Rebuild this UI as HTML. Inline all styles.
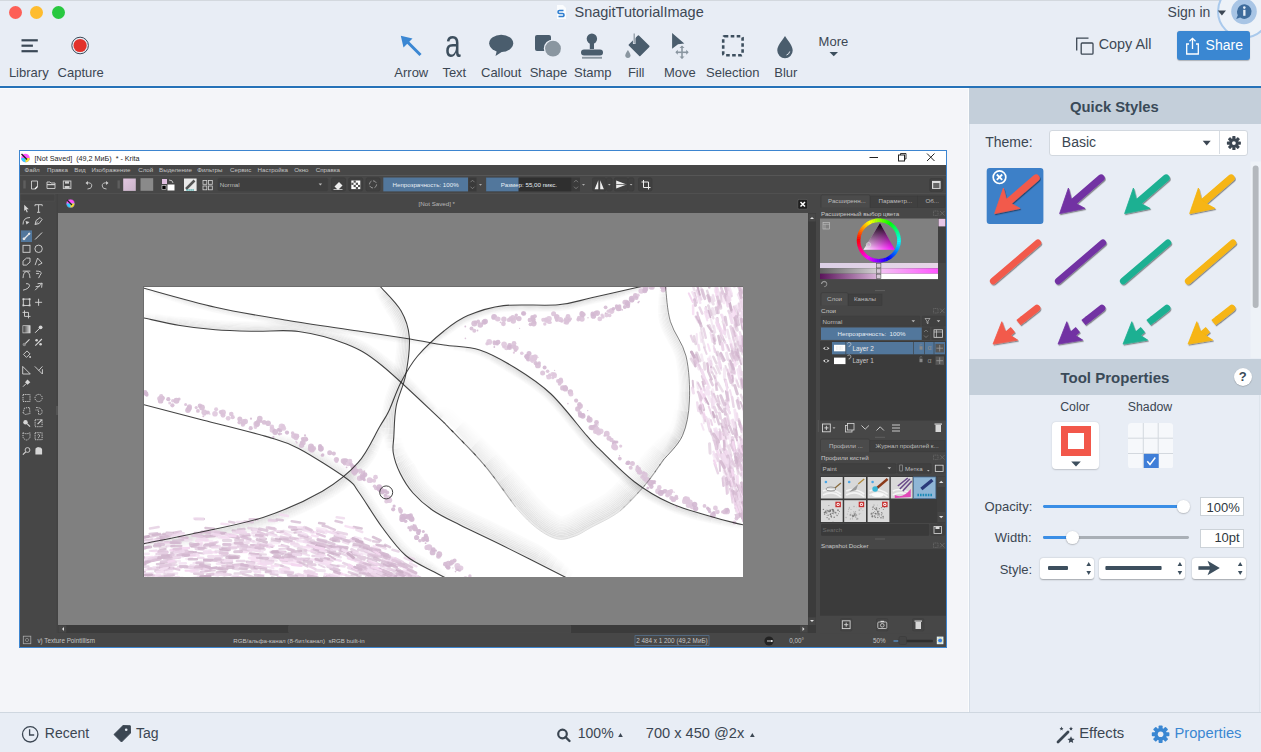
<!DOCTYPE html>
<html><head><meta charset="utf-8">
<style>
*{margin:0;padding:0;box-sizing:border-box}
html,body{width:1261px;height:752px;overflow:hidden;background:#f4f5f9;font-family:"Liberation Sans",sans-serif;color:#3b4652}
.a{position:absolute}
#top{left:0;top:0;width:1261px;height:86px;background:#e8edf5}
#topline{left:0;top:86px;width:1261px;height:2px;background:#2672b8}
.tl{width:13px;height:13px;border-radius:50%;top:6px}
.lbl{font-size:13px;color:#3c4753;white-space:nowrap;top:65px;line-height:16px}
#rp{left:969px;top:88px;width:292px;height:624px;background:#e8edf5}
.hdr{left:0;width:292px;background:#c4cfda;font-weight:bold;font-size:15px;color:#3a4a58;text-align:center}
#bot{left:0;top:712px;width:1261px;height:40px;background:#e8edf5;border-top:1px solid #cfd7e0}
.bl{font-size:14px;color:#3b4652;white-space:nowrap;line-height:16px}
#kr{left:19px;top:150px;width:928px;height:498px;background:#3c3c3c;border:1px solid #3e86d1;overflow:hidden}
.k{position:absolute}
.kt{font-size:7px;color:#cfcfcf;white-space:nowrap;line-height:9px}
</style></head><body>
<!-- TOP -->
<div id="top" class="a">
  <div class="a" style="left:0;top:0;width:1261px;height:1px;background:#d3d8de"></div>
  <div class="a tl" style="left:8.5px;top:5.5px;background:#fd5f57"></div>
  <div class="a tl" style="left:30px;top:5.5px;background:#febc2e"></div>
  <div class="a tl" style="left:52px;top:5.5px;background:#28c840"></div>
  <!-- title -->
  <svg class="a" style="left:556px;top:4px" width="11" height="16" viewBox="0 0 11 16"><path d="M1 1h6l3 3v11H1z" fill="#fafcfe"/><path d="M7.5 6.5H3.5a1.5 1.5 0 0 0 0 3h3a1.5 1.5 0 0 1 0 3H2.5" stroke="#2f7ed0" stroke-width="1.6" fill="none"/></svg>
  <div class="a" style="left:574.5px;top:5.2px;font-size:14.5px;line-height:14.5px;color:#3d4854;white-space:nowrap">SnagitTutorialImage</div>
  <!-- library -->
  <svg class="a" style="left:0;top:0" width="860" height="86" viewBox="0 0 860 86">
    <g stroke="#3a4856" stroke-width="2.2" stroke-linecap="butt">
      <line x1="21.5" y1="40.3" x2="37.8" y2="40.3"/><line x1="21.5" y1="45.7" x2="32.9" y2="45.7"/><line x1="21.5" y1="51.2" x2="37.8" y2="51.2"/>
    </g>
    <circle cx="80.1" cy="45.5" r="8.3" fill="none" stroke="#3a4856" stroke-width="1"/>
    <circle cx="80.1" cy="45.5" r="6.6" fill="#e2312a"/>
    <!-- arrow -->
    <line x1="420.5" y1="55" x2="405" y2="39.5" stroke="#3b87d3" stroke-width="3"/>
    <path d="M400.8 35.8 L412.5 38.5 L403.5 47.5 Z" fill="#3b87d3"/>
    <!-- callout -->
    <ellipse cx="501.2" cy="43.3" rx="12" ry="8.6" fill="#4a5d6d"/>
    <path d="M497 50 L495.5 56 L504 50.5 Z" fill="#4a5d6d"/>
    <!-- shape -->
    <rect x="535" y="35" width="16" height="16" rx="2" fill="#4a5d6d"/>
    <circle cx="553" cy="48.6" r="9.2" fill="#e8edf5"/>
    <circle cx="553" cy="48.6" r="7.9" fill="#8a96a0"/>
    <!-- stamp -->
    <circle cx="591.9" cy="38.8" r="5.2" fill="#4a5d6d"/>
    <rect x="589.8" y="42" width="4.2" height="7" fill="#4a5d6d"/>
    <rect x="581" y="49.5" width="22" height="6" rx="3" fill="#4a5d6d"/>
    <rect x="582" y="56.8" width="20" height="1.9" fill="#8a96a0"/>
    <!-- fill -->
    <path d="M629.3 45 L638.4 36 L648.8 46.4 L639.8 55.4 Z" fill="#4a5d6d" stroke="#4a5d6d" stroke-width="1.5" stroke-linejoin="round"/>
    <line x1="634.2" y1="33.5" x2="634.2" y2="44" stroke="#e8edf5" stroke-width="2.6"/>
    <line x1="634.2" y1="33.5" x2="634.2" y2="43.5" stroke="#8a96a0" stroke-width="1.2"/>
    <path d="M627.9 50 Q625.3 54 625.3 55.3 A2.6 2.6 0 0 0 630.5 55.3 Q630.5 54 627.9 50Z" fill="#8a96a0"/>
    <!-- move -->
    <path d="M672.1 32.9 L684.3 43.6 L678 44.2 L672.1 48.8 Z" fill="#4a5d6d"/>
    <g stroke="#8a96a0" stroke-width="1.6"><line x1="676" y1="52.3" x2="688" y2="52.3"/><line x1="682" y1="46.3" x2="682" y2="58.3"/></g>
    <g fill="#8a96a0"><path d="M682 45.5l-2.5 2.5h5z"/><path d="M682 59l-2.5-2.5h5z"/><path d="M675.3 52.3l2.5-2.5v5z"/><path d="M688.7 52.3l-2.5-2.5v5z"/></g>
    <!-- selection -->
    <rect x="723.2" y="36.2" width="19.4" height="19" rx="1.5" fill="none" stroke="#3d4f5e" stroke-width="2.6" stroke-dasharray="3.6 2.4"/>
    <!-- blur -->
    <path d="M785 36 C781 42 777.3 46 777.3 50.5 A7.7 7.7 0 0 0 792.7 50.5 C792.7 46 789 42 785 36Z" fill="#4a5d6d"/>
    <path d="M789.7 51.5 A4.5 4.5 0 0 1 786.5 55" stroke="#e8edf5" stroke-width="1" fill="none"/>
    <!-- more triangle -->
    <path d="M829.5 52 L838 52 L833.75 56.3Z" fill="#3d4f5e"/>
  </svg>
  <div class="a" style="left:444.8px;top:24.7px;font-size:38px;line-height:38px;color:#3d4f5e;transform:scaleX(0.74);transform-origin:0 0">a</div>
  <div class="a lbl" style="left:8.9px">Library</div>
  <div class="a lbl" style="left:57.6px">Capture</div>
  <div class="a lbl" style="left:394.3px">Arrow</div>
  <div class="a lbl" style="left:442.4px">Text</div>
  <div class="a lbl" style="left:481px">Callout</div>
  <div class="a lbl" style="left:529.7px">Shape</div>
  <div class="a lbl" style="left:574px">Stamp</div>
  <div class="a lbl" style="left:627.9px">Fill</div>
  <div class="a lbl" style="left:664px">Move</div>
  <div class="a lbl" style="left:706px">Selection</div>
  <div class="a lbl" style="left:774.3px">Blur</div>
  <div class="a lbl" style="left:818.6px;top:33.9px">More</div>
  <!-- sign in -->
  <div class="a" style="left:1167.6px;top:5.35px;font-size:14px;line-height:14px;white-space:nowrap;color:#3d4854">Sign in</div>
  <svg class="a" style="left:1140px;top:0" width="121" height="70" viewBox="1140 0 121 70">
    <circle cx="1244" cy="11.5" r="26" fill="#edf2f8" stroke="#a9c9ec" stroke-width="2"/>
    <circle cx="1244" cy="11.5" r="12.8" fill="#a8c5e5"/>
    <path d="M1237 11.5 A7.3 7.3 0 1 1 1240.2 17.6 L1236.2 19 L1237.8 15.2 A7.3 7.3 0 0 1 1237 11.5Z" fill="#3e6c9c"/>
    <circle cx="1244.3" cy="7.6" r="1.3" fill="#e6eef7"/>
    <rect x="1243.2" y="9.8" width="2.3" height="6" fill="#e6eef7"/>
    <path d="M1217.8 10.4 L1226 10.4 L1221.9 15.4Z" fill="#3d4854"/>
  </svg>
  <svg class="a" style="left:1070px;top:30px" width="30" height="30" viewBox="1070 30 30 30">
    <path d="M1076.7 50.5 V38.2 H1088.5" fill="none" stroke="#3d4854" stroke-width="1.3"/>
    <rect x="1081.2" y="43" width="11.8" height="11.2" rx="1" fill="#e8edf5" stroke="#3d4854" stroke-width="1.3"/>
  </svg>
  <div class="a" style="left:1098.7px;top:37.2px;font-size:14.4px;line-height:14.4px;white-space:nowrap;color:#3d4854">Copy All</div>
  <div class="a" style="left:1177px;top:31px;width:73px;height:29px;border-radius:3px;background:#3a87d2;box-shadow:0 0.5px 1px rgba(0,0,0,.25)"></div>
  <svg class="a" style="left:1183px;top:35px" width="20" height="22" viewBox="0 0 20 22">
    <path d="M6 9 H3.7 V19 H15.3 V9 H13" fill="none" stroke="#fff" stroke-width="1.3"/>
    <line x1="9.5" y1="3.5" x2="9.5" y2="14" stroke="#fff" stroke-width="1.3"/>
    <path d="M6.5 6.3 L9.5 3.3 L12.5 6.3" fill="none" stroke="#fff" stroke-width="1.3"/>
  </svg>
  <div class="a" style="left:1205.6px;top:37.5px;font-size:14px;line-height:14px;white-space:nowrap;color:#fff">Share</div>
</div>
<div id="topline" class="a"></div>
<div class="a" style="left:0;top:88px;width:969px;height:1px;background:#fcfdfe"></div>
<div class="a" style="left:0;top:85px;width:1261px;height:1px;background:#edf1f7"></div>
<!-- RIGHT PANEL -->
<div id="rp" class="a">
  <div class="a hdr" style="top:0;height:36px"></div>
  <div class="a" style="left:101px;top:11.7px;font-size:14.8px;line-height:14.8px;font-weight:bold;color:#3a4a58;white-space:nowrap">Quick Styles</div>
  <div class="a" style="left:16.2px;top:47.35px;font-size:14px;line-height:14px;color:#3b4652;white-space:nowrap">Theme:</div>
  <div class="a" style="left:79.5px;top:41.6px;width:199px;height:26.5px;background:#fff;border:1px solid #d2d8df;border-radius:3px"></div>
  <div class="a" style="left:249.5px;top:43px;width:1px;height:23px;background:#d8dde3"></div>
  <div class="a" style="left:92.8px;top:47.35px;font-size:14px;line-height:14px;color:#3b4652;white-space:nowrap">Basic</div>
  <svg class="a" style="left:0;top:0" width="292" height="270" viewBox="969 88 292 270">
    <path d="M1202.7 140.8 H1210.7 L1206.7 145.6Z" fill="#3b4652"/>
    <g transform="translate(1233.9 143.1)" fill="#3b4652">
      <circle r="4.6"/>
      <g id="teeth"><rect x="-1.6" y="-7" width="3.2" height="14" rx=".6"/><rect x="-1.6" y="-7" width="3.2" height="14" rx=".6" transform="rotate(45)"/><rect x="-1.6" y="-7" width="3.2" height="14" rx=".6" transform="rotate(90)"/><rect x="-1.6" y="-7" width="3.2" height="14" rx=".6" transform="rotate(135)"/></g>
      <circle r="1.9" fill="#fff"/>
    </g>
    <rect x="1250.5" y="161.5" width="10.5" height="197" fill="#eef2f7"/>
    <rect x="1252.7" y="165.5" width="5.9" height="142.5" rx="2.9" fill="#b4b8bd"/>
    <rect x="986.7" y="168" width="56.7" height="56" rx="3" fill="#3d80c8"/>
    <defs><filter id="sh" x="-20%" y="-20%" width="140%" height="140%"><feDropShadow dx="0.8" dy="1.2" stdDeviation="0.6" flood-color="#000" flood-opacity="0.45"/></filter></defs>
    <g filter="url(#sh)"><line x1="1036.1" y1="178.1" x2="1009.5" y2="200.9" stroke="#f25a4b" stroke-width="7.2" stroke-linecap="round"/><path d="M994.6 213.6 L1003.4 188.0 L1006.1 198.4 L1012.1 204.0 L1020.1 208.4 Z" fill="#f25a4b" stroke="#f25a4b" stroke-width="0.8" stroke-linejoin="round"/><line x1="1101.1" y1="178.1" x2="1074.5" y2="200.9" stroke="#7233a3" stroke-width="7.2" stroke-linecap="round"/><path d="M1059.6 213.6 L1068.4 188.0 L1071.1 198.4 L1077.1 204.0 L1085.1 208.4 Z" fill="#7233a3" stroke="#7233a3" stroke-width="0.8" stroke-linejoin="round"/><line x1="1166.1" y1="178.1" x2="1139.5" y2="200.9" stroke="#1fb092" stroke-width="7.2" stroke-linecap="round"/><path d="M1124.6 213.6 L1133.4 188.0 L1136.1 198.4 L1142.1 204.0 L1150.1 208.4 Z" fill="#1fb092" stroke="#1fb092" stroke-width="0.8" stroke-linejoin="round"/><line x1="1231.1" y1="178.1" x2="1204.5" y2="200.9" stroke="#f6b512" stroke-width="7.2" stroke-linecap="round"/><path d="M1189.6 213.6 L1198.4 188.0 L1201.1 198.4 L1207.1 204.0 L1215.1 208.4 Z" fill="#f6b512" stroke="#f6b512" stroke-width="0.8" stroke-linejoin="round"/><line x1="1037.9" y1="242.8" x2="993.2" y2="281.1" stroke="#f25a4b" stroke-width="6.6" stroke-linecap="round"/><line x1="1102.9" y1="242.8" x2="1058.2" y2="281.1" stroke="#7233a3" stroke-width="6.6" stroke-linecap="round"/><line x1="1167.9" y1="242.8" x2="1123.2" y2="281.1" stroke="#1fb092" stroke-width="6.6" stroke-linecap="round"/><line x1="1232.9" y1="242.8" x2="1188.2" y2="281.1" stroke="#f6b512" stroke-width="6.6" stroke-linecap="round"/><line x1="1036.9" y1="308.2" x2="1023.5" y2="318.7" stroke="#f25a4b" stroke-width="6.8" stroke-linecap="round"/><line x1="1023.5" y1="318.7" x2="1018.5" y2="322.7" stroke="#f25a4b" stroke-width="6.8" stroke-linecap="butt"/><line x1="1012.9" y1="329.7" x2="1006.5" y2="335.0" stroke="#f25a4b" stroke-width="6.8" stroke-linecap="butt"/><path d="M993.0 344.1 L1001.8 321.7 L1005.0 330.5 L1011.5 336.0 L1017.7 340.1 Z" fill="#f25a4b" stroke="#f25a4b" stroke-width="0.8" stroke-linejoin="round"/><line x1="1101.9" y1="308.2" x2="1088.5" y2="318.7" stroke="#7233a3" stroke-width="6.8" stroke-linecap="round"/><line x1="1088.5" y1="318.7" x2="1083.5" y2="322.7" stroke="#7233a3" stroke-width="6.8" stroke-linecap="butt"/><line x1="1077.9" y1="329.7" x2="1071.5" y2="335.0" stroke="#7233a3" stroke-width="6.8" stroke-linecap="butt"/><path d="M1058.0 344.1 L1066.8 321.7 L1070.0 330.5 L1076.5 336.0 L1082.7 340.1 Z" fill="#7233a3" stroke="#7233a3" stroke-width="0.8" stroke-linejoin="round"/><line x1="1166.9" y1="308.2" x2="1153.5" y2="318.7" stroke="#1fb092" stroke-width="6.8" stroke-linecap="round"/><line x1="1153.5" y1="318.7" x2="1148.5" y2="322.7" stroke="#1fb092" stroke-width="6.8" stroke-linecap="butt"/><line x1="1142.9" y1="329.7" x2="1136.5" y2="335.0" stroke="#1fb092" stroke-width="6.8" stroke-linecap="butt"/><path d="M1123.0 344.1 L1131.8 321.7 L1135.0 330.5 L1141.5 336.0 L1147.7 340.1 Z" fill="#1fb092" stroke="#1fb092" stroke-width="0.8" stroke-linejoin="round"/><line x1="1231.9" y1="308.2" x2="1218.5" y2="318.7" stroke="#f6b512" stroke-width="6.8" stroke-linecap="round"/><line x1="1218.5" y1="318.7" x2="1213.5" y2="322.7" stroke="#f6b512" stroke-width="6.8" stroke-linecap="butt"/><line x1="1207.9" y1="329.7" x2="1201.5" y2="335.0" stroke="#f6b512" stroke-width="6.8" stroke-linecap="butt"/><path d="M1188.0 344.1 L1196.8 321.7 L1200.0 330.5 L1206.5 336.0 L1212.7 340.1 Z" fill="#f6b512" stroke="#f6b512" stroke-width="0.8" stroke-linejoin="round"/></g>
    <circle cx="999.5" cy="177.2" r="6.3" fill="#3d80c8" stroke="#fff" stroke-width="1.7"/>
    <path d="M996.8 174.5 L1002.2 179.9 M1002.2 174.5 L996.8 179.9" stroke="#fff" stroke-width="1.8"/>
  </svg>
  <div class="a hdr" style="top:270.5px;height:36.5px"></div>
  <div class="a" style="left:91.5px;top:282.4px;font-size:15px;line-height:15px;font-weight:bold;color:#3a4a58;white-space:nowrap">Tool Properties</div>
  <div class="a" style="left:264.7px;top:280.1px;width:18px;height:18px;border-radius:50%;background:#fff;box-shadow:0 0.5px 1px rgba(0,0,0,.3);font-size:13px;font-weight:bold;line-height:18px;text-align:center;color:#3a4a58">?</div>
  <div class="a" style="left:91.2px;top:313.3px;font-size:12.3px;line-height:12.3px;color:#3b4652;white-space:nowrap">Color</div>
  <div class="a" style="left:158.8px;top:313.3px;font-size:12.3px;line-height:12.3px;color:#3b4652;white-space:nowrap">Shadow</div>
  <div class="a" style="left:83.3px;top:333.8px;width:47.2px;height:47.2px;background:#fff;border-radius:4px;box-shadow:0 0.5px 1.5px rgba(0,0,0,.18)"></div>
  <div class="a" style="left:92.2px;top:338.2px;width:29.9px;height:30.1px;background:#f2574a"></div>
  <div class="a" style="left:99px;top:344.8px;width:16.2px;height:16.3px;background:#fff"></div>
  <svg class="a" style="left:102px;top:373px" width="10" height="6" viewBox="0 0 10 6"><path d="M0.2 0.4H9.8L5 5.4Z" fill="#3d4f5e"/></svg>
  <svg class="a" style="left:159px;top:334.6px" width="45.2" height="45.6" viewBox="0 0 45.2 45.6">
    <rect x="0" y="0" width="45.2" height="45.6" rx="3.5" fill="#f6f8fb"/>
    <g stroke="#d3d8de" stroke-width="1"><line x1="15.3" y1="0" x2="15.3" y2="45.6"/><line x1="30.2" y1="0" x2="30.2" y2="45.6"/><line x1="0" y1="15.2" x2="45.2" y2="15.2"/><line x1="0" y1="30.5" x2="45.2" y2="30.5"/></g>
    <rect x="15.8" y="30.9" width="14.9" height="14.7" fill="#3f7ed8"/>
    <path d="M19.3 38.3 L22 41.5 L27.3 34.5" stroke="#fff" stroke-width="1.5" fill="none"/>
  </svg>
  <div class="a" style="left:15.6px;top:412.2px;font-size:13px;line-height:13px;color:#3b4652;white-space:nowrap">Opacity:</div>
  <div class="a" style="left:25.8px;top:442.7px;font-size:13px;line-height:13px;color:#3b4652;white-space:nowrap">Width:</div>
  <div class="a" style="left:30.7px;top:475.2px;font-size:13px;line-height:13px;color:#3b4652;white-space:nowrap">Style:</div>
  <div class="a" style="left:73.8px;top:417px;width:146.6px;height:2.8px;border-radius:1.4px;background:#3a8ee6"></div>
  <div class="a" style="left:208.2px;top:412px;width:12.6px;height:12.6px;border-radius:50%;background:#fff;box-shadow:0 0.5px 1.5px rgba(0,0,0,.35)"></div>
  <div class="a" style="left:73.8px;top:448.2px;width:146.6px;height:2.8px;border-radius:1.4px;background:#a9afb6"></div>
  <div class="a" style="left:73.8px;top:448.2px;width:30px;height:2.8px;border-radius:1.4px;background:#3a8ee6"></div>
  <div class="a" style="left:97.2px;top:443.2px;width:12.6px;height:12.6px;border-radius:50%;background:#fff;box-shadow:0 0.5px 1.5px rgba(0,0,0,.35)"></div>
  <div class="a" style="left:231.1px;top:409.4px;width:44.4px;height:18.9px;background:#fff;border:1px solid #ccd2d8"></div>
  <div class="a" style="left:231.1px;top:440.5px;width:44.4px;height:19px;background:#fff;border:1px solid #ccd2d8"></div>
  <div class="a" style="left:231.1px;top:412.6px;width:39.6px;font-size:13px;line-height:13px;color:#2e3740;text-align:right;white-space:nowrap">100%</div>
  <div class="a" style="left:231.1px;top:443px;width:39.6px;font-size:13px;line-height:13px;color:#2e3740;text-align:right;white-space:nowrap">10pt</div>
  <div class="a" style="left:70.7px;top:470px;width:54.4px;height:20.7px;background:#fff;border-radius:3px;box-shadow:0 0.5px 1.5px rgba(0,0,0,.3)"></div>
  <div class="a" style="left:129.5px;top:470px;width:86.5px;height:20.7px;background:#fff;border-radius:3px;box-shadow:0 0.5px 1.5px rgba(0,0,0,.3)"></div>
  <div class="a" style="left:222.7px;top:470px;width:54.1px;height:20.7px;background:#fff;border-radius:3px;box-shadow:0 0.5px 1.5px rgba(0,0,0,.3)"></div>
  <svg class="a" style="left:0;top:470px" width="292" height="21" viewBox="969 558 292 21">
    <rect x="1048" y="566" width="20" height="4" rx="1" fill="#3d4f5e"/>
    <rect x="1105.4" y="566" width="56.2" height="4" rx="1" fill="#3d4f5e"/>
    <path d="M1198.4 568 H1212" stroke="#3d4f5e" stroke-width="3.6"/>
    <path d="M1207.5 560.8 L1219.8 568 L1207.5 575.2 L1210.5 568Z" fill="#3d4f5e"/>
    <g fill="#3d4f5e">
      <path d="M1086.4 566 L1091 566 L1088.7 562Z"/><path d="M1086.4 571 L1091 571 L1088.7 575Z"/>
      <path d="M1177.6 566 L1182.2 566 L1179.9 562Z"/><path d="M1177.6 571 L1182.2 571 L1179.9 575Z"/>
      <path d="M1237.9 566 L1242.5 566 L1240.2 562Z"/><path d="M1237.9 571 L1242.5 571 L1240.2 575Z"/>
    </g>
  </svg>
</div>
<div class="a" style="left:969px;top:124px;width:1px;height:235px;background:#d5dde7"></div>
<div class="a" style="left:969px;top:395px;width:1px;height:317px;background:#d5dde7"></div>
<div class="a" style="left:968px;top:88px;width:1px;height:624px;background:#fbfcfd"></div>
<div class="a" style="left:1259px;top:395px;width:1px;height:317px;background:#dde4ec"></div>
<!-- BOTTOM -->
<div id="bot" class="a">
  <svg class="a" style="left:0;top:-1px" width="1261" height="41" viewBox="0 711 1261 41">
    <circle cx="30.2" cy="733.3" r="7.7" fill="none" stroke="#3b4652" stroke-width="1.3"/>
    <path d="M29.6 728.3 V734 H34.2" fill="none" stroke="#3b4652" stroke-width="1.3"/>
    <path d="M114 733.5 L123 724.6 L130.3 724.8 L130.5 732 L121.5 741Z" fill="#3b4652" stroke="#3b4652" stroke-width="1" stroke-linejoin="round"/>
    <circle cx="126.2" cy="728.8" r="1.3" fill="#e8edf5"/>
    <circle cx="562.5" cy="733" r="4.3" fill="none" stroke="#3b4652" stroke-width="2.2"/>
    <line x1="565.5" y1="736" x2="569.5" y2="740" stroke="#3b4652" stroke-width="2.4" stroke-linecap="round"/>
    <path d="M618.2 736 H622.8 L620.5 732Z" fill="#3b4652"/>
    <path d="M750 736 H754.7 L752.35 732Z" fill="#3b4652"/>
    <!-- wand -->
    <line x1="1058" y1="741" x2="1068" y2="731" stroke="#3b4652" stroke-width="2.8" stroke-linecap="round"/>
    <path d="M1071 735.3 l1.1 2.3 2.5.3-1.9 1.7.5 2.5-2.2-1.3-2.2 1.3.5-2.5-1.9-1.7 2.5-.3z" fill="#3b4652"/>
    <path d="M1061.5 725.5 l.6 1.4 1.4.1-1.1 1 .3 1.4-1.2-.7-1.2.7.3-1.4-1.1-1 1.4-.1z" fill="#3b4652"/>
    <path d="M1071 725.5 l.6 1.4 1.4.1-1.1 1 .3 1.4-1.2-.7-1.2.7.3-1.4-1.1-1 1.4-.1z" fill="#3b4652"/>
    <g transform="translate(1160.6 733.3)" fill="#3a87d2">
      <circle r="6.2"/>
      <rect x="-2" y="-8.8" width="4" height="17.6" rx=".8"/><rect x="-2" y="-8.8" width="4" height="17.6" rx=".8" transform="rotate(45)"/><rect x="-2" y="-8.8" width="4" height="17.6" rx=".8" transform="rotate(90)"/><rect x="-2" y="-8.8" width="4" height="17.6" rx=".8" transform="rotate(135)"/>
      <circle r="2.8" fill="#e8edf5"/>
    </g>
  </svg>
  <div class="a bl" style="left:44.8px;top:13.45px;font-size:14px;line-height:14px">Recent</div>
  <div class="a bl" style="left:136px;top:13.45px;font-size:14px;line-height:14px">Tag</div>
  <div class="a bl" style="left:577.8px;top:13.15px;font-size:14px;line-height:14px">100%</div>
  <div class="a bl" style="left:645.8px;top:13.15px;font-size:14.6px;line-height:14.6px">700 x 450 @2x</div>
  <div class="a bl" style="left:1079.2px;top:12.9px;font-size:14.8px;line-height:14.8px">Effects</div>
  <div class="a bl" style="left:1174.5px;top:12.9px;font-size:14.7px;line-height:14.7px;color:#3a87d2">Properties</div>
</div>
<!-- KRITA -->
<!--KR-->
<svg class="a" style="left:19px;top:150px" width="928" height="498" viewBox="19 150 928 498" font-family="Liberation Sans">
<rect x="19" y="150" width="928" height="498" fill="#3d85d0" />
<rect x="20" y="151" width="926" height="496" fill="#474747" />
<rect x="20" y="151" width="926" height="14" fill="#ffffff" />
<g transform="translate(25.5 158)"><circle r="4.3" fill="#f5f"/><path d="M-4.3 0 A4.3 4.3 0 0 0 4.3 0Z" fill="#3cf"/><path d="M0 4.3 A4.3 4.3 0 0 0 4.3 0 L0 0Z" fill="#fd3"/><line x1="-4" y1="-4" x2="1.5" y2="1.5" stroke="#222" stroke-width="1.4"/></g>
<text x="34.6" y="160.7" font-size="7.2" fill="#1e1e1e" text-anchor="start" >[Not Saved]&#160; (49,2 МиБ)&#160; * - Krita</text>
<line x1="869.5" y1="157.5" x2="878" y2="157.5" stroke="#222" stroke-width="1"/>
<rect x="898.5" y="155" width="6" height="6" fill="none" stroke="#222" stroke-width="1"/><path d="M900.5 155 V153.5 H906 V159 H904.5" fill="none" stroke="#222" stroke-width=".9"/>
<path d="M927 153.5 L934.5 161 M934.5 153.5 L927 161" stroke="#222" stroke-width="1"/>
<rect x="20" y="165" width="926" height="10.5" fill="#474747" />
<rect x="20" y="175.2" width="926" height="1" fill="#5b5b5b" />
<text x="24.5" y="172.3" font-size="6.2" fill="#c4c4c4" text-anchor="start" >Файл</text>
<text x="47" y="172.3" font-size="6.2" fill="#c4c4c4" text-anchor="start" >Правка</text>
<text x="74.3" y="172.3" font-size="6.2" fill="#c4c4c4" text-anchor="start" >Вид</text>
<text x="91.4" y="172.3" font-size="6.2" fill="#c4c4c4" text-anchor="start" >Изображение</text>
<text x="138.2" y="172.3" font-size="6.2" fill="#c4c4c4" text-anchor="start" >Слой</text>
<text x="159.1" y="172.3" font-size="6.2" fill="#c4c4c4" text-anchor="start" >Выделение</text>
<text x="197.2" y="172.3" font-size="6.2" fill="#c4c4c4" text-anchor="start" >Фильтры</text>
<text x="230.1" y="172.3" font-size="6.2" fill="#c4c4c4" text-anchor="start" >Сервис</text>
<text x="257.5" y="172.3" font-size="6.2" fill="#c4c4c4" text-anchor="start" >Настройка</text>
<text x="294.2" y="172.3" font-size="6.2" fill="#c4c4c4" text-anchor="start" >Окно</text>
<text x="315.7" y="172.3" font-size="6.2" fill="#c4c4c4" text-anchor="start" >Справка</text>
<rect x="20" y="176.2" width="926" height="17.3" fill="#474747" />
<rect x="20" y="193.3" width="926" height="1" fill="#555555" />
<rect x="23.3" y="180.4" width="2.4" height="8.1" fill="#5e5e5e" />
<rect x="117.5" y="180.4" width="2.4" height="8.1" fill="#5e5e5e" />
<path d="M31.5 181 H37.5 V186.5 L35 189 H31.5Z" fill="none" stroke="#d0d0d0" stroke-width=".9"/><path d="M35 189 L37.5 186.5" stroke="#fff" stroke-width="1.2"/>
<path d="M47 182 H50 L51 183 H55 V188.5 H47Z" fill="none" stroke="#d0d0d0" stroke-width=".9"/><rect x="47" y="184" width="8" height="1.2" fill="#d0d0d0"/>
<rect x="63.3" y="181" width="7.6" height="7.6" fill="none" stroke="#d0d0d0" stroke-width=".9"/><rect x="65" y="181.3" width="4" height="2.3" fill="#d0d0d0"/><rect x="64.6" y="186" width="5" height="2.4" fill="#d0d0d0"/>
<path d="M86.3 183 Q92 182 91.8 186 Q91.5 189 87.5 189" fill="none" stroke="#c8c8c8" stroke-width=".9"/><path d="M85.5 183 L88 181 V185Z" fill="#c8c8c8"/>
<path d="M107.7 183 Q102 182 102.2 186 Q102.5 189 106.5 189" fill="none" stroke="#c8c8c8" stroke-width=".9"/><path d="M108.5 183 L106 181 V185Z" fill="#c8c8c8"/>
<defs><linearGradient id="fgc" x1="0" y1="0" x2="1" y2="1"><stop offset="0" stop-color="#e2c6e0"/><stop offset="1" stop-color="#c9b4c9"/></linearGradient></defs>
<rect x="123.2" y="178.5" width="12.6" height="12.4" fill="url(#fgc)"/>
<rect x="140.5" y="178.2" width="12.7" height="12.6" fill="#8a8a8a"/>
<rect x="162" y="179" width="5" height="5" fill="#e0c0e0"/><rect x="167.5" y="184.5" width="7" height="6" fill="#fff"/><rect x="162" y="185.5" width="4" height="4" fill="#000" stroke="#fff" stroke-width=".5"/><path d="M169 180 Q173 180 173 183" fill="none" stroke="#ddd" stroke-width=".8"/>
<rect x="184" y="178.5" width="12.6" height="12.5" fill="#e9e9e9"/><path d="M186 189 L194.5 180.5" stroke="#555" stroke-width="2.5"/><path d="M186.5 190 h8" stroke="#2aa0a0" stroke-width="1.6" stroke-dasharray="1.2 .8"/>
<g fill="none" stroke="#d5d5d5" stroke-width=".8"><rect x="203" y="180.5" width="3.8" height="3.8"/><rect x="208.5" y="180.5" width="3.8" height="3.8"/><rect x="203" y="186" width="3.8" height="3.8"/><rect x="208.5" y="186" width="3.8" height="3.8"/></g>
<rect x="217.9" y="178" width="110" height="13" rx="1.5" fill="#3f3f3f" stroke="#424242" stroke-width=".5"/>
<text x="219.7" y="187.2" font-size="6.2" fill="#bdbdbd" text-anchor="start" >Normal</text>
<path d="M318.6 183.5 h3.5 l-1.75 2z" fill="#bbb"/>
<rect x="331.5" y="177.8" width="14" height="13.2" rx="1.5" fill="#404040" stroke="#3a3a3a" stroke-width=".6"/>
<path d="M334.5 186.5 L339 182 L342.5 185.5 L338 190Z" fill="#eee"/><path d="M333.5 189.5 h9" stroke="#eee" stroke-width=".7"/>
<rect x="348.7" y="177.8" width="14" height="13.2" rx="1.5" fill="#404040" stroke="#3a3a3a" stroke-width=".6"/>
<rect x="351.3" y="180.5" width="9" height="8.6" fill="#fff"/><g fill="#555"><rect x="353.6" y="180.5" width="2.2" height="2.2"/><rect x="351.3" y="182.7" width="2.2" height="2.2"/><rect x="355.8" y="182.7" width="2.2" height="2.2"/><rect x="353.6" y="184.9" width="2.2" height="2.2"/><rect x="358" y="184.9" width="2.2" height="2.2"/><rect x="355.8" y="187" width="2.2" height="2.2"/></g>
<rect x="366" y="177.8" width="14" height="13.2" rx="1.5" fill="#404040" stroke="#3a3a3a" stroke-width=".6"/>
<circle cx="373" cy="184.4" r="3.6" fill="none" stroke="#aaa" stroke-width=".8" stroke-dasharray="4 1.5"/>
<rect x="383.3" y="177.5" width="84.7" height="13.9" fill="#52779c"/>
<text x="425.6" y="186.8" font-size="6.2" fill="#e6eef5" text-anchor="middle" >Непрозрачность: 100%</text>
<rect x="468.5" y="177.5" width="8" height="13.9" fill="#3a3a3a"/><path d="M470.5 182.2 l2-2 2 2 M470.5 186.7 l2 2 2-2" fill="none" stroke="#888" stroke-width=".8"/>
<path d="M479 184 h3 l-1.5 1.8z" fill="#aaa"/>
<rect x="486.1" y="177.5" width="85.6" height="13.9" fill="#2f2f2f"/><rect x="486.1" y="177.5" width="32.4" height="13.9" fill="#52779c"/>
<text x="528.9" y="186.8" font-size="6.2" fill="#e6eef5" text-anchor="middle" >Размер: 55,00 пикс.</text>
<rect x="572" y="177.5" width="8" height="13.9" fill="#3a3a3a"/><path d="M574 182.2 l2-2 2 2 M574 186.7 l2 2 2-2" fill="none" stroke="#888" stroke-width=".8"/>
<path d="M582 184 h3 l-1.5 1.8z" fill="#aaa"/>
<rect x="592.5" y="177.8" width="13.5" height="13.2" rx="1.5" fill="#404040" stroke="#3a3a3a" stroke-width=".6"/>
<rect x="606.5" y="177.8" width="5.6" height="13.2" rx="1.5" fill="#404040" stroke="#3a3a3a" stroke-width=".6"/>
<path d="M598.3 180.3 L594.6 189.3 H598.3Z M600.2 180.3 L603.9 189.3 H600.2Z" fill="#eee"/><path d="M608 184 h2.6 l-1.3 1.6z" fill="#bbb"/>
<rect x="614.3" y="177.8" width="13.5" height="13.2" rx="1.5" fill="#404040" stroke="#3a3a3a" stroke-width=".6"/>
<rect x="628.3" y="177.8" width="5.6" height="13.2" rx="1.5" fill="#404040" stroke="#3a3a3a" stroke-width=".6"/>
<path d="M616.2 180.5 L626.6 184.5 L616.2 188.5Z" fill="#eee"/><path d="M616.2 184.5 h10" stroke="#474747" stroke-width=".7"/><path d="M629.8 184 h2.6 l-1.3 1.6z" fill="#bbb"/>
<rect x="638.5" y="177.8" width="13.5" height="13.2" rx="1.5" fill="#404040" stroke="#3a3a3a" stroke-width=".6"/>
<path d="M641.5 182 H648.5 V189.5 M643.5 180 V187.5 H650.5" fill="none" stroke="#eee" stroke-width="1"/>
<rect x="929.7" y="178.5" width="13" height="13" rx="1.5" fill="#404040" stroke="#3a3a3a" stroke-width=".6"/>
<rect x="932" y="180.9" width="8.6" height="8" fill="#ddd"/><rect x="933.2" y="183" width="6.2" height="5" fill="#666"/>
<rect x="20" y="194.3" width="38" height="438.7" fill="#474747" />
<rect x="20" y="194.3" width="34.5" height="5" fill="#3d3d3d" />
<rect x="58" y="194.3" width="758" height="19" fill="#474747" />
<g transform="translate(70.5 203.5)"><circle r="4.2" fill="#f5f"/><path d="M-4.2 0 A4.2 4.2 0 0 0 4.2 0Z" fill="#3cf"/><path d="M0 4.2 A4.2 4.2 0 0 0 4.2 0 L0 0Z" fill="#fd3"/><line x1="-3.5" y1="-3.5" x2="1.5" y2="1.5" stroke="#222" stroke-width="1.3"/><circle r="4.2" fill="none" stroke="#555" stroke-width=".4"/></g>
<text x="436.8" y="206.4" font-size="6.2" fill="#b9b9b9" text-anchor="middle" >[Not Saved] *</text>
<rect x="797.8" y="199.4" width="9.8" height="9.8" rx="1.5" fill="#1e1e1e" stroke="#666" stroke-width=".6"/><path d="M800.5 202 L805 206.5 M805 202 L800.5 206.5" stroke="#fff" stroke-width="1.5"/>
<rect x="58" y="213" width="750" height="412" fill="#808080" />
<rect x="808" y="213" width="8" height="420" fill="#3b3b3b" />
<rect x="808.3" y="213.5" width="7.4" height="8" fill="#474747"/><path d="M810 219 l2-2 2 2z" fill="#ddd"/>
<rect x="808.3" y="617.3" width="7.4" height="7.7" fill="#474747"/><path d="M810 620 l2 2 2-2z" fill="#ddd"/>
<rect x="58" y="625" width="750" height="8" fill="#3b3b3b" />
<rect x="58.3" y="625.3" width="8" height="7.4" fill="#474747"/><path d="M64 627 l-2 2 2 2z" fill="#ddd"/>
<rect x="800" y="625.3" width="7.7" height="7.4" fill="#474747"/><path d="M802.5 627 l2 2-2 2z" fill="#ddd"/>
<rect x="288.8" y="625.8" width="282" height="6.8" fill="#474747" stroke="#515151" stroke-width=".5"/>
<rect x="816" y="194.3" width="4" height="439" fill="#474747" />
<line x1="818.3" y1="420" x2="818.3" y2="432" stroke="#6a6a6a" stroke-width=".5"/>
<rect x="20" y="633" width="926" height="14" fill="#474747" />
<rect x="23.3" y="636.2" width="7.5" height="7.5" fill="none" stroke="#aaa" stroke-width=".8"/><circle cx="27" cy="640" r="1.6" fill="none" stroke="#aaa" stroke-width=".6"/>
<text x="37.4" y="642.6" font-size="6.3" fill="#c4c4c4" text-anchor="start" >v) Texture Pointillism</text>
<text x="233.3" y="642.6" font-size="6.15" fill="#c4c4c4" text-anchor="start" >RGB/альфа-канал (8-бит/канал)&#160; sRGB built-in</text>
<rect x="635" y="635.7" width="74" height="9.8" fill="none" stroke="#5a7fa5" stroke-width=".6"/>
<text x="636.2" y="642.7" font-size="6.35" fill="#c4c4c4" text-anchor="start" >2 484 x 1 200 (49,2 МиБ)</text>
<circle cx="769" cy="641" r="4.6" fill="#222"/><path d="M767 641 h4.5" stroke="#ccc" stroke-width="1"/><rect x="771" y="640" width="1.6" height="2" fill="#ddd"/>
<text x="789.3" y="642.7" font-size="6.3" fill="#c4c4c4" text-anchor="start" >0,00°</text>
<text x="873" y="642.7" font-size="6.3" fill="#c4c4c4" text-anchor="start" >50%</text>
<rect x="897" y="639.7" width="36" height="2.6" rx="1.3" fill="#2f2f2f"/><rect x="893.5" y="640" width="5" height="2" fill="#52779c"/><rect x="899" y="636.5" width="7.5" height="8" rx="1.5" fill="#444" stroke="#393939" stroke-width=".5"/>
<rect x="936.8" y="636.6" width="6.6" height="7.6" fill="#dfeefa"/><circle cx="940.1" cy="640.4" r="2" fill="#3b7fe0"/><circle cx="940.1" cy="640.4" r="2.8" fill="none" stroke="#e8d040" stroke-width=".8" stroke-dasharray="1 1"/>
<rect x="20.4" y="194.5" width="34.4" height="6.6" fill="#434343" stroke="#505050" stroke-width=".5"/>
<line x1="57.3" y1="194" x2="57.3" y2="633" stroke="#404040" stroke-width=".6"/>
<g transform="translate(26.5 208.5)"><path d="M-2.3 -3.8 L2.3 0.8 L0 0.8 L1.3 3.5 L0.3 3.9 L-1 1.2 L-2.3 2.5Z" fill="#d6d6d6"/></g>
<g transform="translate(38.6 208.5)"><path d="M-3.6 -3.8 H3.6 V-2.3 M-3.6 -3.8 V-2.3 M0 -3.8 V3.8 M-1.6 3.8 H1.6" fill="none" stroke="#d6d6d6" stroke-width="0.9" stroke-width="1.1"/></g>
<g transform="translate(26.5 221)"><path d="M-3.5 3.5 Q-3.5 -3.5 3.5 -3.5" fill="none" stroke="#d6d6d6" stroke-width="0.9" stroke-width="1.2"/><path d="M-1 0 L3 1 L0 3.5Z" fill="#d6d6d6"/></g>
<g transform="translate(38.6 221)"><path d="M-3.5 3.5 L-2.5 -0.5 L1.5 -3.5 L3.5 -1.5 L0.5 2.5Z" fill="none" stroke="#d6d6d6" stroke-width="0.9"/><line x1="-3.5" y1="3.5" x2="-0.5" y2="0.5" stroke="#d6d6d6" stroke-width=".7"/></g>
<rect x="20.9" y="230.4" width="11.1" height="11.6" fill="#52779c"/>
<g transform="translate(26.5 236)"><path d="M-3 3.5 L3.5 -3" stroke="#e6e6e6" stroke-width="1.3"/><circle cx="-2.5" cy="2.8" r="1.4" fill="#e6e6e6"/><circle cx="2.6" cy="-2.2" r="1.1" fill="#e6e6e6"/></g>
<g transform="translate(38.6 236)"><line x1="-3.5" y1="3.5" x2="3.5" y2="-3.5" stroke="#d6d6d6" stroke-width="1"/></g>
<g transform="translate(26.5 248.8)"><rect x="-3.5" y="-3.5" width="7" height="7" fill="none" stroke="#d6d6d6" stroke-width="0.9"/></g>
<g transform="translate(38.6 248.8)"><circle r="3.7" fill="none" stroke="#d6d6d6" stroke-width="0.9"/></g>
<g transform="translate(26.5 261.6)"><path d="M-3.5 3.5 L-3.5 -0.5 L0 -3.5 L3.5 -3.5 L3.5 0.5 L0 3.5Z" fill="none" stroke="#d6d6d6" stroke-width="0.9"/></g>
<g transform="translate(38.6 261.6)"><path d="M-3.5 3.5 L-1 -3.5 L3.5 1.5 L-0.5 3.5" fill="none" stroke="#d6d6d6" stroke-width="0.9"/></g>
<g transform="translate(26.5 274.6)"><path d="M-3.5 3.5 Q-3 -3 0 -3 Q3 -3 3.5 3.5 M-3.8 -3.5 H3.8" fill="none" stroke="#d6d6d6" stroke-width="0.9"/></g>
<g transform="translate(38.6 274.6)"><path d="M-2.5 -3.5 Q3.5 -3.5 2.5 -1 Q1 1 0 3.5 M0.5 -1 L-2.5 -1" fill="none" stroke="#d6d6d6" stroke-width="0.9"/></g>
<g transform="translate(26.5 286.7)"><path d="M-3.5 3.5 Q3 2 3 -1.5 Q2.5 -3.5 -0.5 -3" fill="none" stroke="#d6d6d6" stroke-width="0.9"/></g>
<g transform="translate(38.6 286.7)"><path d="M-3.5 3.5 L3.5 -3.5 M-1 -3 L3.5 -3.5 L3 1 M-3 0 L1 -0.5" fill="none" stroke="#d6d6d6" stroke-width="0.9"/></g>
<g transform="translate(26.5 302.3)"><rect x="-3.2" y="-3.2" width="6.4" height="6.4" fill="none" stroke="#d6d6d6" stroke-width="0.9"/><g fill="#d6d6d6"><rect x="-4" y="-4" width="1.8" height="1.8"/><rect x="2.2" y="-4" width="1.8" height="1.8"/><rect x="-4" y="2.2" width="1.8" height="1.8"/><rect x="2.2" y="2.2" width="1.8" height="1.8"/></g></g>
<g transform="translate(38.6 302.3)"><path d="M-3.5 0 H3.5 M0 -3.5 V3.5" fill="none" stroke="#d6d6d6" stroke-width="0.9"/></g>
<g transform="translate(26.5 314.4)"><path d="M-2 -4 V2 H4 M-4 -2 H2 V4" fill="none" stroke="#d6d6d6" stroke-width="0.9"/></g>
<defs><linearGradient id="tg" x1="0" x2="1"><stop offset="0" stop-color="#333"/><stop offset="1" stop-color="#ddd"/></linearGradient></defs>
<g transform="translate(26.5 329.3)"><rect x="-3.6" y="-3.6" width="7.2" height="7.2" fill="url(#tg)" stroke="#d6d6d6" stroke-width=".7"/></g>
<g transform="translate(38.6 329.3)"><path d="M-3.5 3.5 L1 -1" stroke="#d6d6d6" stroke-width="1"/><circle cx="2" cy="-2" r="1.9" fill="#d6d6d6"/></g>
<g transform="translate(26.5 342.3)"><path d="M-2.5 2.5 L3 -3" stroke="#d6d6d6" stroke-width="1.1"/><circle cx="-2.2" cy="2.2" r="1.7" fill="#888"/></g>
<g transform="translate(38.6 342.3)"><path d="M-3.3 3.3 L3.3 -3.3" stroke="#d6d6d6" stroke-width="1.1"/><circle cx="-2" cy="-2" r="1.3" fill="#d6d6d6"/><circle cx="2" cy="2" r="1.3" fill="#d6d6d6"/></g>
<g transform="translate(26.5 354.4)"><path d="M-3 0 L0.5 -3.5 L3.5 -0.5 L0 3Z" fill="none" stroke="#d6d6d6" stroke-width="0.9" stroke-width="1.1"/><circle cx="3.6" cy="2.6" r="0.9" fill="#d6d6d6"/></g>
<g transform="translate(26.5 370.2)"><path d="M-3.8 3.8 V-3.8 L3.8 3.8Z" fill="none" stroke="#d6d6d6" stroke-width="0.9" stroke-width="1.1"/></g>
<g transform="translate(38.6 370.2)"><path d="M-3.8 -3.8 L3.8 3.8 V-1 M0 0.5 L3.8 -3.8" fill="none" stroke="#d6d6d6" stroke-width="0.9" stroke-width="1.1"/></g>
<g transform="translate(26.5 383.2)"><path d="M-3.5 3.5 L-0.5 0.5" stroke="#d6d6d6" stroke-width="1"/><path d="M-1.5 -1 L1 -3.8 L3.8 -1 L1 1.5Z" fill="#d6d6d6"/></g>
<g transform="translate(26.5 398)"><rect x="-3.5" y="-3.5" width="7" height="7" fill="none" stroke="#d6d6d6" stroke-width="0.9" stroke-dasharray="1.3 0.9"/></g>
<g transform="translate(38.6 398)"><circle r="3.6" fill="none" stroke="#d6d6d6" stroke-width="0.9" stroke-dasharray="1.3 0.9"/></g>
<g transform="translate(26.5 411)"><path d="M-3.5 2 L-2 -3 L3 -3.5 L3.5 2.5 L-1 3.5Z" fill="none" stroke="#d6d6d6" stroke-width="0.9" stroke-dasharray="1.3 0.9"/></g>
<g transform="translate(38.6 411)"><path d="M-2.5 -3.5 Q3.5 -3.5 3.5 1 Q3.5 3.5 0 3.5 L0 -1 L-3 -1" fill="none" stroke="#d6d6d6" stroke-width="0.9" stroke-dasharray="1.3 0.9"/></g>
<g transform="translate(26.5 423.2)"><circle cx="-1" cy="-1" r="2.2" fill="#d6d6d6"/><path d="M0.5 0.5 L3.5 3.5" stroke="#d6d6d6" stroke-width="1.2"/></g>
<g transform="translate(38.6 423.2)"><rect x="-3.5" y="-3.5" width="7" height="7" fill="none" stroke="#d6d6d6" stroke-width="0.9" stroke-dasharray="1.3 0.9"/><path d="M-1 1 L3.5 -3.5" stroke="#d6d6d6" stroke-width="1.2"/></g>
<g transform="translate(26.5 436.2)"><path d="M-3.5 -3.5 L-3.5 1 Q-2 3.8 0 3.8 Q2 3.8 3.5 1 L3.5 -3.5 Q0 -1.5 -3.5 -3.5" fill="none" stroke="#d6d6d6" stroke-width="0.9" stroke-dasharray="1.3 0.9"/></g>
<g transform="translate(38.6 436.2)"><rect x="-3.5" y="-3.5" width="7" height="7" fill="none" stroke="#d6d6d6" stroke-width="0.9" stroke-dasharray="1.3 0.9"/><path d="M-1 -1 Q0 -2.5 1 -1 Q1 0.5 0 1 V2" fill="none" stroke="#d6d6d6" stroke-width=".8"/></g>
<g transform="translate(26.5 451)"><circle cx="1" cy="-1" r="2.4" fill="none" stroke="#d6d6d6" stroke-width="0.9" stroke-width="1"/><path d="M-0.8 0.8 L-3.6 3.6" stroke="#d6d6d6" stroke-width="1.2"/></g>
<g transform="translate(38.6 451)"><path d="M-3.2 3.6 V-1 Q-3.2 -3.6 -1.8 -3.2 V-3.5 Q0 -4.3 0.5 -3.5 Q2 -4 2.3 -3 Q3.5 -3 3.5 -1.5 V3.6Z" fill="#d6d6d6"/></g>
<rect x="56.5" y="406" width="1" height="9" fill="#666"/>
<rect x="820" y="194.3" width="126" height="439" fill="#474747" />
<rect x="870" y="196" width="47.5" height="11.5" fill="#404040" stroke="#3a3a3a" stroke-width=".5"/>
<text x="878.5" y="203.45" font-size="6.2" fill="#bdbdbd" text-anchor="start">Параметр...</text>
<rect x="917.5" y="196" width="27.5" height="11.5" fill="#404040" stroke="#3a3a3a" stroke-width=".5"/>
<text x="925.4" y="203.45" font-size="6.2" fill="#bdbdbd" text-anchor="start">Об...</text>
<path d="M821 207.5 V196.3 Q821 194.8 822.5 194.8 H868.5 Q870 194.8 870 196.3 V207.5" fill="#4b4b4b" stroke="#3a3a3a" stroke-width=".6"/>
<text x="828" y="203.35" font-size="6.2" fill="#bdbdbd" text-anchor="start">Расширенн...</text>
<text x="821" y="215.5" font-size="6.2" fill="#c8c8c8" text-anchor="start">Расширенный выбор цвета</text>
<g fill="none" stroke="#777" stroke-width=".6"><rect x="933.5" y="211.0" width="4.5" height="4.5" stroke-dasharray="1 .6"/><path d="M940 211.0 l4.5 4.5 M944.5 211.0 l-4.5 4.5"/></g>
<rect x="820" y="218.5" width="118" height="44.5" fill="#808080" />
<rect x="938" y="218.5" width="7.5" height="44.5" fill="#3f3f3f" />
<rect x="938.5" y="218.8" width="6.8" height="7.6" fill="#e6c6e6" />
<rect x="823" y="222.5" width="6.5" height="6.5" fill="none" stroke="#c8c8c8" stroke-width=".6"/><line x1="823" y1="224.3" x2="829.5" y2="224.3" stroke="#c8c8c8" stroke-width=".5"/><line x1="825" y1="224.3" x2="825" y2="229" stroke="#c8c8c8" stroke-width=".5"/>
<path d="M899.00 240.50 A20.2 20.2 0 0 1 898.89 242.61" stroke="#00ffff" stroke-width="3.6" fill="none"/>
<path d="M898.92 242.26 A20.2 20.2 0 0 1 898.63 244.35" stroke="#00e9ff" stroke-width="3.6" fill="none"/>
<path d="M898.69 244.01 A20.2 20.2 0 0 1 898.22 246.07" stroke="#00d4ff" stroke-width="3.6" fill="none"/>
<path d="M898.31 245.73 A20.2 20.2 0 0 1 897.66 247.74" stroke="#00bfff" stroke-width="3.6" fill="none"/>
<path d="M897.78 247.41 A20.2 20.2 0 0 1 896.96 249.36" stroke="#00a9ff" stroke-width="3.6" fill="none"/>
<path d="M897.11 249.04 A20.2 20.2 0 0 1 896.11 250.90" stroke="#0094ff" stroke-width="3.6" fill="none"/>
<path d="M896.29 250.60 A20.2 20.2 0 0 1 895.14 252.37" stroke="#007fff" stroke-width="3.6" fill="none"/>
<path d="M895.35 252.09 A20.2 20.2 0 0 1 894.05 253.75" stroke="#006aff" stroke-width="3.6" fill="none"/>
<path d="M894.27 253.48 A20.2 20.2 0 0 1 892.83 255.03" stroke="#0054ff" stroke-width="3.6" fill="none"/>
<path d="M893.08 254.78 A20.2 20.2 0 0 1 891.51 256.20" stroke="#003fff" stroke-width="3.6" fill="none"/>
<path d="M891.78 255.97 A20.2 20.2 0 0 1 890.10 257.25" stroke="#002aff" stroke-width="3.6" fill="none"/>
<path d="M890.39 257.05 A20.2 20.2 0 0 1 888.59 258.17" stroke="#0015ff" stroke-width="3.6" fill="none"/>
<path d="M888.90 257.99 A20.2 20.2 0 0 1 887.02 258.95" stroke="#0000ff" stroke-width="3.6" fill="none"/>
<path d="M887.34 258.81 A20.2 20.2 0 0 1 885.38 259.60" stroke="#1500ff" stroke-width="3.6" fill="none"/>
<path d="M885.71 259.48 A20.2 20.2 0 0 1 883.69 260.10" stroke="#2a00ff" stroke-width="3.6" fill="none"/>
<path d="M884.03 260.01 A20.2 20.2 0 0 1 881.96 260.45" stroke="#3f00ff" stroke-width="3.6" fill="none"/>
<path d="M882.31 260.39 A20.2 20.2 0 0 1 880.21 260.65" stroke="#5400ff" stroke-width="3.6" fill="none"/>
<path d="M880.56 260.62 A20.2 20.2 0 0 1 878.45 260.70" stroke="#6a00ff" stroke-width="3.6" fill="none"/>
<path d="M878.80 260.70 A20.2 20.2 0 0 1 876.69 260.59" stroke="#7f00ff" stroke-width="3.6" fill="none"/>
<path d="M877.04 260.62 A20.2 20.2 0 0 1 874.95 260.33" stroke="#9400ff" stroke-width="3.6" fill="none"/>
<path d="M875.29 260.39 A20.2 20.2 0 0 1 873.23 259.92" stroke="#aa00ff" stroke-width="3.6" fill="none"/>
<path d="M873.57 260.01 A20.2 20.2 0 0 1 871.56 259.36" stroke="#bf00ff" stroke-width="3.6" fill="none"/>
<path d="M871.89 259.48 A20.2 20.2 0 0 1 869.94 258.66" stroke="#d400ff" stroke-width="3.6" fill="none"/>
<path d="M870.26 258.81 A20.2 20.2 0 0 1 868.40 257.81" stroke="#e900ff" stroke-width="3.6" fill="none"/>
<path d="M868.70 257.99 A20.2 20.2 0 0 1 866.93 256.84" stroke="#ff00ff" stroke-width="3.6" fill="none"/>
<path d="M867.21 257.05 A20.2 20.2 0 0 1 865.55 255.75" stroke="#ff00e9" stroke-width="3.6" fill="none"/>
<path d="M865.82 255.97 A20.2 20.2 0 0 1 864.27 254.53" stroke="#ff00d4" stroke-width="3.6" fill="none"/>
<path d="M864.52 254.78 A20.2 20.2 0 0 1 863.10 253.21" stroke="#ff00bf" stroke-width="3.6" fill="none"/>
<path d="M863.33 253.48 A20.2 20.2 0 0 1 862.05 251.80" stroke="#ff00aa" stroke-width="3.6" fill="none"/>
<path d="M862.25 252.09 A20.2 20.2 0 0 1 861.13 250.29" stroke="#ff0094" stroke-width="3.6" fill="none"/>
<path d="M861.31 250.60 A20.2 20.2 0 0 1 860.35 248.72" stroke="#ff007f" stroke-width="3.6" fill="none"/>
<path d="M860.49 249.04 A20.2 20.2 0 0 1 859.70 247.08" stroke="#ff006a" stroke-width="3.6" fill="none"/>
<path d="M859.82 247.41 A20.2 20.2 0 0 1 859.20 245.39" stroke="#ff0055" stroke-width="3.6" fill="none"/>
<path d="M859.29 245.73 A20.2 20.2 0 0 1 858.85 243.66" stroke="#ff003f" stroke-width="3.6" fill="none"/>
<path d="M858.91 244.01 A20.2 20.2 0 0 1 858.65 241.91" stroke="#ff002a" stroke-width="3.6" fill="none"/>
<path d="M858.68 242.26 A20.2 20.2 0 0 1 858.60 240.15" stroke="#ff0015" stroke-width="3.6" fill="none"/>
<path d="M858.60 240.50 A20.2 20.2 0 0 1 858.71 238.39" stroke="#ff0000" stroke-width="3.6" fill="none"/>
<path d="M858.68 238.74 A20.2 20.2 0 0 1 858.97 236.65" stroke="#ff1500" stroke-width="3.6" fill="none"/>
<path d="M858.91 236.99 A20.2 20.2 0 0 1 859.38 234.93" stroke="#ff2a00" stroke-width="3.6" fill="none"/>
<path d="M859.29 235.27 A20.2 20.2 0 0 1 859.94 233.26" stroke="#ff3f00" stroke-width="3.6" fill="none"/>
<path d="M859.82 233.59 A20.2 20.2 0 0 1 860.64 231.64" stroke="#ff5400" stroke-width="3.6" fill="none"/>
<path d="M860.49 231.96 A20.2 20.2 0 0 1 861.49 230.10" stroke="#ff6a00" stroke-width="3.6" fill="none"/>
<path d="M861.31 230.40 A20.2 20.2 0 0 1 862.46 228.63" stroke="#ff7f00" stroke-width="3.6" fill="none"/>
<path d="M862.25 228.91 A20.2 20.2 0 0 1 863.55 227.25" stroke="#ff9400" stroke-width="3.6" fill="none"/>
<path d="M863.33 227.52 A20.2 20.2 0 0 1 864.77 225.97" stroke="#ffaa00" stroke-width="3.6" fill="none"/>
<path d="M864.52 226.22 A20.2 20.2 0 0 1 866.09 224.80" stroke="#ffbf00" stroke-width="3.6" fill="none"/>
<path d="M865.82 225.03 A20.2 20.2 0 0 1 867.50 223.75" stroke="#ffd400" stroke-width="3.6" fill="none"/>
<path d="M867.21 223.95 A20.2 20.2 0 0 1 869.01 222.83" stroke="#ffe900" stroke-width="3.6" fill="none"/>
<path d="M868.70 223.01 A20.2 20.2 0 0 1 870.58 222.05" stroke="#ffff00" stroke-width="3.6" fill="none"/>
<path d="M870.26 222.19 A20.2 20.2 0 0 1 872.22 221.40" stroke="#e9ff00" stroke-width="3.6" fill="none"/>
<path d="M871.89 221.52 A20.2 20.2 0 0 1 873.91 220.90" stroke="#d4ff00" stroke-width="3.6" fill="none"/>
<path d="M873.57 220.99 A20.2 20.2 0 0 1 875.64 220.55" stroke="#bfff00" stroke-width="3.6" fill="none"/>
<path d="M875.29 220.61 A20.2 20.2 0 0 1 877.39 220.35" stroke="#aaff00" stroke-width="3.6" fill="none"/>
<path d="M877.04 220.38 A20.2 20.2 0 0 1 879.15 220.30" stroke="#94ff00" stroke-width="3.6" fill="none"/>
<path d="M878.80 220.30 A20.2 20.2 0 0 1 880.91 220.41" stroke="#7fff00" stroke-width="3.6" fill="none"/>
<path d="M880.56 220.38 A20.2 20.2 0 0 1 882.65 220.67" stroke="#6aff00" stroke-width="3.6" fill="none"/>
<path d="M882.31 220.61 A20.2 20.2 0 0 1 884.37 221.08" stroke="#54ff00" stroke-width="3.6" fill="none"/>
<path d="M884.03 220.99 A20.2 20.2 0 0 1 886.04 221.64" stroke="#3fff00" stroke-width="3.6" fill="none"/>
<path d="M885.71 221.52 A20.2 20.2 0 0 1 887.66 222.34" stroke="#2aff00" stroke-width="3.6" fill="none"/>
<path d="M887.34 222.19 A20.2 20.2 0 0 1 889.20 223.19" stroke="#15ff00" stroke-width="3.6" fill="none"/>
<path d="M888.90 223.01 A20.2 20.2 0 0 1 890.67 224.16" stroke="#00ff00" stroke-width="3.6" fill="none"/>
<path d="M890.39 223.95 A20.2 20.2 0 0 1 892.05 225.25" stroke="#00ff15" stroke-width="3.6" fill="none"/>
<path d="M891.78 225.03 A20.2 20.2 0 0 1 893.33 226.47" stroke="#00ff2a" stroke-width="3.6" fill="none"/>
<path d="M893.08 226.22 A20.2 20.2 0 0 1 894.50 227.79" stroke="#00ff3f" stroke-width="3.6" fill="none"/>
<path d="M894.27 227.52 A20.2 20.2 0 0 1 895.55 229.20" stroke="#00ff55" stroke-width="3.6" fill="none"/>
<path d="M895.35 228.91 A20.2 20.2 0 0 1 896.47 230.71" stroke="#00ff6a" stroke-width="3.6" fill="none"/>
<path d="M896.29 230.40 A20.2 20.2 0 0 1 897.25 232.28" stroke="#00ff7f" stroke-width="3.6" fill="none"/>
<path d="M897.11 231.96 A20.2 20.2 0 0 1 897.90 233.92" stroke="#00ff94" stroke-width="3.6" fill="none"/>
<path d="M897.78 233.59 A20.2 20.2 0 0 1 898.40 235.61" stroke="#00ffa9" stroke-width="3.6" fill="none"/>
<path d="M898.31 235.27 A20.2 20.2 0 0 1 898.75 237.34" stroke="#00ffbf" stroke-width="3.6" fill="none"/>
<path d="M898.69 236.99 A20.2 20.2 0 0 1 898.95 239.09" stroke="#00ffd4" stroke-width="3.6" fill="none"/>
<path d="M898.92 238.74 A20.2 20.2 0 0 1 899.00 240.85" stroke="#00ffe9" stroke-width="3.6" fill="none"/>
<defs><linearGradient id="tri1" x1="0.5" y1="0" x2="0.5" y2="1"><stop offset="0" stop-color="#000"/><stop offset="1" stop-color="#000" stop-opacity="0"/></linearGradient><linearGradient id="tri2" x1="0" y1="0" x2="1" y2="0"><stop offset="0" stop-color="#fff"/><stop offset="1" stop-color="#ff00ff"/></linearGradient></defs>
<path d="M880 222.9 L894.8 249.7 L863.4 249.7Z" fill="url(#tri2)"/><path d="M880 222.9 L894.8 249.7 L863.4 249.7Z" fill="url(#tri1)"/>
<circle cx="868.5" cy="244.8" r="2.2" fill="none" stroke="#ddd" stroke-width=".7"/>
<defs><linearGradient id="s1" x1="0" x2="1"><stop offset="0" stop-color="#dcd0e6"/><stop offset="1" stop-color="#e8d6e8"/></linearGradient><linearGradient id="s2a" x1="0" x2="1"><stop offset="0" stop-color="#5e5e5e"/><stop offset="1" stop-color="#d6d0d6"/></linearGradient><linearGradient id="s2b" x1="0" x2="1"><stop offset="0" stop-color="#f2c8f2"/><stop offset="1" stop-color="#ff55ff"/></linearGradient><linearGradient id="s3a" x1="0" x2="1"><stop offset="0" stop-color="#5a145a"/><stop offset="1" stop-color="#dab6da"/></linearGradient></defs>
<rect x="820" y="263" width="118" height="5.3" fill="url(#s1)" />
<rect x="820" y="268.3" width="58" height="5.4" fill="url(#s2a)" />
<rect x="878" y="268.3" width="60" height="5.4" fill="url(#s2b)" />
<rect x="820" y="273.7" width="58" height="5.4" fill="url(#s3a)" />
<rect x="878" y="273.7" width="60" height="5.4" fill="#ffffff" />
<rect x="876.5" y="263.5" width="4.4" height="4.4" fill="#d8c8d8" stroke="#555" stroke-width=".6"/>
<rect x="876.5" y="268.8" width="4.4" height="4.4" fill="#d8c8d8" stroke="#555" stroke-width=".6"/>
<rect x="876.5" y="274.2" width="4.4" height="4.4" fill="#d8c8d8" stroke="#555" stroke-width=".6"/>
<path d="M821.5 284 A2.7 2.7 0 1 1 824.2 286.7" fill="none" stroke="#aaa" stroke-width=".7"/><path d="M826.5 283 A2.7 2.7 0 0 0 821.5 284" fill="none" stroke="#aaa" stroke-width=".7"/>
<line x1="875" y1="290.6" x2="885" y2="290.6" stroke="#6a6a6a" stroke-width=".7"/>
<rect x="848" y="294" width="34" height="11.5" fill="#404040" stroke="#3a3a3a" stroke-width=".5"/>
<text x="854" y="301.45" font-size="6.2" fill="#bdbdbd" text-anchor="start">Каналы</text>
<path d="M821 305.5 V294.1 Q821 292.6 822.5 292.6 H846.5 Q848 292.6 848 294.1 V305.5" fill="#4b4b4b" stroke="#3a3a3a" stroke-width=".6"/>
<text x="827" y="301.25" font-size="6.2" fill="#bdbdbd" text-anchor="start">Слои</text>
<text x="821" y="313.2" font-size="6.2" fill="#c8c8c8" text-anchor="start">Слои</text>
<g fill="none" stroke="#777" stroke-width=".6"><rect x="933.5" y="308.5" width="4.5" height="4.5" stroke-dasharray="1 .6"/><path d="M940 308.5 l4.5 4.5 M944.5 308.5 l-4.5 4.5"/></g>
<rect x="821" y="316" width="99" height="10.3" rx="1" fill="#404040" stroke="#3c3c3c" stroke-width=".5"/>
<text x="822.5" y="323.5" font-size="6.2" fill="#bdbdbd" text-anchor="start">Normal</text>
<path d="M911.5 320.3 h3.6 l-1.8 2z" fill="#bbb"/>
<rect x="922" y="316" width="23" height="10.3" rx="1" fill="#404040" stroke="#3c3c3c" stroke-width=".5"/><path d="M925 318.5 h5 l-2 2.6 v2.6 l-1 -.6 v-2z" fill="none" stroke="#ccc" stroke-width=".6"/><path d="M936.7 320.3 h3.6 l-1.8 2z" fill="#bbb"/>
<rect x="821" y="327.5" width="100.7" height="12.4" fill="#52779c" />
<text x="871.5" y="335.8" font-size="6.2" fill="#e6eef5" text-anchor="middle">Непрозрачность:&#160; 100%</text>
<rect x="922" y="327.5" width="8" height="12.4" fill="#3f3f3f"/><path d="M924 332 l2-2 2 2 M924 335.5 l2 2 2-2" fill="none" stroke="#888" stroke-width=".7"/>
<rect x="931.5" y="327.5" width="13.5" height="12.4" rx="1" fill="#404040"/><rect x="934" y="329.8" width="8.5" height="7.5" fill="none" stroke="#ddd" stroke-width=".8"/><line x1="936.5" y1="329.8" x2="936.5" y2="337.3" stroke="#ddd" stroke-width=".6"/><line x1="934" y1="332" x2="942.5" y2="332" stroke="#ddd" stroke-width=".6"/>
<rect x="820" y="341" width="126" height="79.5" fill="#3b3b3b" />
<rect x="832" y="342" width="113" height="12.3" fill="#52779c" />
<path d="M823 348.3 Q826 345.1 829.5 348.3 Q826 351.5 823 348.3Z" fill="#e0e0e0"/><circle cx="826.2" cy="348.3" r="1.3" fill="#333"/>
<path d="M823 360.8 Q826 357.6 829.5 360.8 Q826 364.0 823 360.8Z" fill="#e0e0e0"/><circle cx="826.2" cy="360.8" r="1.3" fill="#333"/>
<rect x="834" y="344.8" width="11.5" height="6.5" fill="#fff"/><path d="M836 347 h7 M836 349 h7" stroke="#bbb" stroke-width=".5" stroke-dasharray=".8 .6"/>
<rect x="834" y="357.6" width="11.5" height="6.5" fill="#fff"/>
<path d="M847.5 343.5 a1.8 1.8 0 1 1 1.5 2.5 v1" fill="none" stroke="#ddd" stroke-width=".6"/><path d="M847.5 356 a1.8 1.8 0 1 1 1.5 2.5 v1" fill="none" stroke="#ddd" stroke-width=".6"/>
<text x="852.5" y="350.6" font-size="6.4" fill="#e8e8e8" text-anchor="start">Layer 2</text>
<text x="852.5" y="363.1" font-size="6.4" fill="#c8c8c8" text-anchor="start">Layer 1</text>
<rect x="919.5" y="346.2" width="3" height="3.5" fill="#888"/><path d="M920 346.2 v-1.2 a1 1 0 0 1 2 0" fill="none" stroke="#888" stroke-width=".5"/>
<text x="927.5" y="350.4" font-size="7" fill="#8e8e8e" text-anchor="start">α</text>
<rect x="935.5" y="343.9" width="8.5" height="8.5" fill="#575757"/><path d="M939.7 344.9 v6.6 M936.4 348.2 h6.6" stroke="#9a9a9a" stroke-width=".8"/>
<rect x="919.5" y="358.7" width="3" height="3.5" fill="#888"/><path d="M920 358.7 v-1.2 a1 1 0 0 1 2 0" fill="none" stroke="#888" stroke-width=".5"/>
<text x="927.5" y="362.9" font-size="7" fill="#8e8e8e" text-anchor="start">α</text>
<rect x="935.5" y="356.4" width="8.5" height="8.5" fill="#575757"/><path d="M939.7 357.4 v6.6 M936.4 360.7 h6.6" stroke="#9a9a9a" stroke-width=".8"/>
<g stroke="#3b3b3b" stroke-width=".6"><line x1="913.5" y1="342" x2="913.5" y2="354.3"/><line x1="924.5" y1="342" x2="924.5" y2="354.3"/><line x1="934" y1="342" x2="934" y2="354.3"/><line x1="845.8" y1="342" x2="845.8" y2="354.3"/></g>
<rect x="822.5" y="424" width="7.8" height="7.8" fill="none" stroke="#d8d8d8" stroke-width=".9"/><path d="M826.4 425.8 v4.2 M824.3 427.9 h4.2" stroke="#d8d8d8" stroke-width=".9"/><path d="M832.5 427.2 h3 l-1.5 1.8z" fill="#aaa"/>
<rect x="845.5" y="425.5" width="6.5" height="6.5" fill="none" stroke="#d8d8d8" stroke-width=".8"/><rect x="847.5" y="423.5" width="6.5" height="6.5" fill="#474747" stroke="#d8d8d8" stroke-width=".8"/>
<path d="M861.5 425.5 l3.7 3.7 3.7-3.7" fill="none" stroke="#d8d8d8" stroke-width=".9"/><path d="M876.5 430.5 l3.7-3.7 3.7 3.7" fill="none" stroke="#d8d8d8" stroke-width=".9"/>
<path d="M892 425 h8 M892 428 h8 M892 431 h8" stroke="#d8d8d8" stroke-width=".9"/>
<rect x="935.5" y="425" width="5.5" height="7" fill="#d8d8d8"/><rect x="934.5" y="423.5" width="7.5" height="1.2" fill="#d8d8d8"/>
<line x1="875" y1="437.3" x2="885" y2="437.3" stroke="#6a6a6a" stroke-width=".7"/>
<rect x="869.6" y="440.5" width="75.39999999999998" height="11.300000000000011" fill="#404040" stroke="#3a3a3a" stroke-width=".5"/>
<text x="875.5" y="447.84999999999997" font-size="6.2" fill="#bdbdbd" text-anchor="start">Журнал профилей к...</text>
<path d="M820.5 451.8 V440.5 Q820.5 439 822.0 439 H868.1 Q869.6 439 869.6 440.5 V451.8" fill="#4b4b4b" stroke="#3a3a3a" stroke-width=".6"/>
<text x="829" y="447.59999999999997" font-size="6.2" fill="#bdbdbd" text-anchor="start">Профили ...</text>
<text x="821" y="459.8" font-size="6.2" fill="#c8c8c8" text-anchor="start">Профили кистей</text>
<g fill="none" stroke="#777" stroke-width=".6"><rect x="933.5" y="455.1" width="4.5" height="4.5" stroke-dasharray="1 .6"/><path d="M940 455.1 l4.5 4.5 M944.5 455.1 l-4.5 4.5"/></g>
<rect x="821" y="463.6" width="75" height="9.6" rx="1" fill="#404040" stroke="#3c3c3c" stroke-width=".5"/>
<text x="822.5" y="470.6" font-size="6.2" fill="#bdbdbd" text-anchor="start">Paint</text>
<path d="M887.5 467.3 h3.6 l-1.8 2z" fill="#bbb"/>
<rect x="897.3" y="463.6" width="34" height="9.6" rx="1" fill="#404040" stroke="#3c3c3c" stroke-width=".5"/><rect x="899.8" y="465" width="2.6" height="6" fill="none" stroke="#bbb" stroke-width=".5"/>
<text x="905" y="470.6" font-size="6.2" fill="#bdbdbd" text-anchor="start">Метка</text>
<path d="M927 470 h2.6 l-1.3 1.4z" fill="#bbb"/>
<rect x="933.5" y="463.6" width="11.5" height="9.6" rx="1" fill="#404040"/><rect x="935.3" y="465.2" width="7.8" height="6.3" fill="none" stroke="#ddd" stroke-width=".8"/>
<rect x="820" y="476" width="117" height="47" fill="#3b3b3b" />
<rect x="820.9" y="477" width="21.8" height="21.5" fill="#d9d9d9" />
<path d="M822.9 491 Q830.9 487 840.9 494 M822.9 495 Q832.9 490 840.9 497" stroke="#f4f4f4" stroke-width="1.6" fill="none"/>
<circle cx="825.9" cy="482" r="1.3" fill="#4aa6e6"/>
<ellipse cx="830.9" cy="489" rx="5" ry="2" fill="none" stroke="#888" stroke-width=".8"/><line x1="834.9" y1="488" x2="840.9" y2="483" stroke="#8a6a3a" stroke-width="1.2"/>
<rect x="844.2" y="477" width="21.8" height="21.5" fill="#d9d9d9" />
<path d="M846.2 491 Q854.2 487 864.2 494 M846.2 495 Q856.2 490 864.2 497" stroke="#f4f4f4" stroke-width="1.6" fill="none"/>
<circle cx="849.2" cy="482" r="1.3" fill="#4aa6e6"/>
<path d="M849.2 492 L858.2 484 L856.2 490Z" fill="#9a9a9a"/><line x1="858.2" y1="484" x2="864.2" y2="479" stroke="#b08a3a" stroke-width="1.3"/>
<rect x="867.6" y="477" width="21.8" height="21.5" fill="#d9d9d9" />
<path d="M869.6 491 Q877.6 487 887.6 494 M869.6 495 Q879.6 490 887.6 497" stroke="#f4f4f4" stroke-width="1.6" fill="none"/>
<circle cx="872.6" cy="482" r="1.3" fill="#4aa6e6"/>
<line x1="874.6" y1="490" x2="887.6" y2="479" stroke="#8b3a1a" stroke-width="2.4"/><circle cx="875.1" cy="489" r="2.8" fill="#3ab6d6"/><ellipse cx="877.6" cy="495" rx="6" ry="2" fill="#fafafa"/>
<rect x="890.8" y="477" width="21.8" height="21.5" fill="#d9d9d9" />
<path d="M892.8 491 Q900.8 487 910.8 494 M892.8 495 Q902.8 490 910.8 497" stroke="#f4f4f4" stroke-width="1.6" fill="none"/>
<path d="M894.8 495 Q902.8 499 910.8 489 L910.8 497 L894.8 498Z" fill="#e14ab8"/><g stroke="#6a4a8a" stroke-width="1.6"><line x1="899.8" y1="489" x2="909.8" y2="479"/><line x1="902.8" y1="491" x2="911.8" y2="481"/><line x1="897.8" y1="486" x2="907.8" y2="478"/></g>
<rect x="913.4" y="477" width="22.4" height="21.5" fill="#8fb6d6" stroke="#52779c" stroke-width=".8"/><path d="M921.4 489 L932.4 480" stroke="#2a3a7a" stroke-width="3.4"/><path d="M917.4 495 h15" stroke="#1a8ab6" stroke-width="2.6" stroke-dasharray="1.6 1"/>
<rect x="820.9" y="500.2" width="21.8" height="21.8" fill="#dadada" />
<circle cx="831.3" cy="517.6" r="0.5" fill="#4a4a4a" fill-opacity="0.6"/>
<circle cx="826.4" cy="510.2" r="0.3" fill="#4a4a4a" fill-opacity="0.6"/>
<circle cx="838.5" cy="513.8" r="0.5" fill="#4a4a4a" fill-opacity="0.6"/>
<circle cx="832.2" cy="524.7" r="0.6" fill="#4a4a4a" fill-opacity="0.6"/>
<circle cx="833.3" cy="509.8" r="0.7" fill="#4a4a4a" fill-opacity="0.6"/>
<circle cx="834.2" cy="517.2" r="0.8" fill="#4a4a4a" fill-opacity="0.6"/>
<circle cx="824.4" cy="512.4" r="0.7" fill="#4a4a4a" fill-opacity="0.6"/>
<circle cx="837.1" cy="515.5" r="0.7" fill="#4a4a4a" fill-opacity="0.6"/>
<circle cx="830.6" cy="514.0" r="0.8" fill="#4a4a4a" fill-opacity="0.6"/>
<circle cx="824.6" cy="514.1" r="0.8" fill="#4a4a4a" fill-opacity="0.6"/>
<circle cx="828.9" cy="505.5" r="0.5" fill="#4a4a4a" fill-opacity="0.6"/>
<circle cx="832.3" cy="509.6" r="0.9" fill="#4a4a4a" fill-opacity="0.6"/>
<circle cx="832.2" cy="512.1" r="0.4" fill="#4a4a4a" fill-opacity="0.6"/>
<circle cx="833.0" cy="522.1" r="0.6" fill="#4a4a4a" fill-opacity="0.6"/>
<circle cx="828.5" cy="511.1" r="0.6" fill="#4a4a4a" fill-opacity="0.6"/>
<circle cx="828.1" cy="515.3" r="0.7" fill="#4a4a4a" fill-opacity="0.6"/>
<circle cx="823.4" cy="509.4" r="0.7" fill="#4a4a4a" fill-opacity="0.6"/>
<circle cx="838.0" cy="510.2" r="0.9" fill="#4a4a4a" fill-opacity="0.6"/>
<circle cx="829.8" cy="511.4" r="0.8" fill="#4a4a4a" fill-opacity="0.6"/>
<circle cx="839.4" cy="511.5" r="0.6" fill="#4a4a4a" fill-opacity="0.6"/>
<circle cx="830.3" cy="510.9" r="0.8" fill="#4a4a4a" fill-opacity="0.6"/>
<circle cx="828.0" cy="511.9" r="0.3" fill="#4a4a4a" fill-opacity="0.6"/>
<circle cx="838.3" cy="504.8" r="0.4" fill="#4a4a4a" fill-opacity="0.6"/>
<circle cx="832.2" cy="509.8" r="0.4" fill="#4a4a4a" fill-opacity="0.6"/>
<circle cx="829.0" cy="519.0" r="0.8" fill="#4a4a4a" fill-opacity="0.6"/>
<circle cx="836.2" cy="514.5" r="0.3" fill="#4a4a4a" fill-opacity="0.6"/>
<circle cx="830.2" cy="510.1" r="0.8" fill="#4a4a4a" fill-opacity="0.6"/>
<circle cx="835.6" cy="512.7" r="0.9" fill="#4a4a4a" fill-opacity="0.6"/>
<circle cx="830.3" cy="514.5" r="0.7" fill="#4a4a4a" fill-opacity="0.6"/>
<circle cx="833.5" cy="513.7" r="0.5" fill="#4a4a4a" fill-opacity="0.6"/>
<circle cx="829.1" cy="511.9" r="0.3" fill="#4a4a4a" fill-opacity="0.6"/>
<circle cx="833.2" cy="511.0" r="0.9" fill="#4a4a4a" fill-opacity="0.6"/>
<circle cx="834.0" cy="511.1" r="0.6" fill="#4a4a4a" fill-opacity="0.6"/>
<circle cx="825.2" cy="512.6" r="0.7" fill="#4a4a4a" fill-opacity="0.6"/>
<circle cx="825.7" cy="511.4" r="0.9" fill="#4a4a4a" fill-opacity="0.6"/>
<circle cx="826.7" cy="513.0" r="0.7" fill="#4a4a4a" fill-opacity="0.6"/>
<circle cx="831.2" cy="516.2" r="0.9" fill="#4a4a4a" fill-opacity="0.6"/>
<circle cx="825.9" cy="512.6" r="0.3" fill="#4a4a4a" fill-opacity="0.6"/>
<circle cx="826.4" cy="515.5" r="0.3" fill="#4a4a4a" fill-opacity="0.6"/>
<circle cx="826.7" cy="509.9" r="0.3" fill="#4a4a4a" fill-opacity="0.6"/>
<circle cx="827.8" cy="510.4" r="0.7" fill="#4a4a4a" fill-opacity="0.6"/>
<circle cx="827.1" cy="517.6" r="0.7" fill="#4a4a4a" fill-opacity="0.6"/>
<circle cx="832.3" cy="513.4" r="0.7" fill="#4a4a4a" fill-opacity="0.6"/>
<circle cx="833.9" cy="512.6" r="0.6" fill="#4a4a4a" fill-opacity="0.6"/>
<circle cx="828.0" cy="511.5" r="0.5" fill="#4a4a4a" fill-opacity="0.6"/>
<rect x="835.4" y="501.7" width="5.5" height="5.5" fill="#c83030"/><circle cx="838.15" cy="504.45" r="1.6" fill="#fff"/><circle cx="838.15" cy="504.45" r=".8" fill="#c83030"/>
<rect x="844.2" y="500.2" width="21.8" height="21.8" fill="#dadada" />
<circle cx="852.7" cy="516.3" r="0.7" fill="#4a4a4a" fill-opacity="0.3"/>
<circle cx="853.0" cy="516.4" r="0.8" fill="#4a4a4a" fill-opacity="0.3"/>
<circle cx="859.3" cy="514.0" r="0.7" fill="#4a4a4a" fill-opacity="0.3"/>
<circle cx="853.2" cy="515.5" r="0.8" fill="#4a4a4a" fill-opacity="0.3"/>
<circle cx="854.4" cy="515.4" r="0.6" fill="#4a4a4a" fill-opacity="0.3"/>
<circle cx="853.6" cy="511.7" r="0.5" fill="#4a4a4a" fill-opacity="0.3"/>
<circle cx="850.4" cy="518.9" r="0.6" fill="#4a4a4a" fill-opacity="0.3"/>
<circle cx="855.7" cy="511.5" r="0.5" fill="#4a4a4a" fill-opacity="0.3"/>
<circle cx="849.3" cy="507.3" r="0.6" fill="#4a4a4a" fill-opacity="0.3"/>
<circle cx="854.5" cy="515.0" r="0.6" fill="#4a4a4a" fill-opacity="0.3"/>
<circle cx="856.8" cy="519.1" r="0.8" fill="#4a4a4a" fill-opacity="0.3"/>
<circle cx="855.5" cy="515.8" r="0.8" fill="#4a4a4a" fill-opacity="0.3"/>
<circle cx="849.6" cy="508.3" r="0.5" fill="#4a4a4a" fill-opacity="0.3"/>
<circle cx="856.5" cy="515.3" r="0.8" fill="#4a4a4a" fill-opacity="0.3"/>
<circle cx="853.7" cy="516.4" r="0.6" fill="#4a4a4a" fill-opacity="0.3"/>
<circle cx="850.6" cy="514.9" r="0.9" fill="#4a4a4a" fill-opacity="0.3"/>
<circle cx="854.4" cy="513.5" r="0.9" fill="#4a4a4a" fill-opacity="0.3"/>
<circle cx="862.8" cy="506.1" r="0.6" fill="#4a4a4a" fill-opacity="0.3"/>
<circle cx="862.9" cy="510.7" r="0.4" fill="#4a4a4a" fill-opacity="0.3"/>
<circle cx="854.0" cy="506.5" r="0.7" fill="#4a4a4a" fill-opacity="0.3"/>
<circle cx="850.9" cy="512.9" r="0.5" fill="#4a4a4a" fill-opacity="0.3"/>
<circle cx="854.4" cy="514.5" r="0.7" fill="#4a4a4a" fill-opacity="0.3"/>
<circle cx="852.5" cy="519.4" r="0.3" fill="#4a4a4a" fill-opacity="0.3"/>
<circle cx="859.3" cy="510.1" r="0.9" fill="#4a4a4a" fill-opacity="0.3"/>
<circle cx="861.0" cy="508.7" r="0.6" fill="#4a4a4a" fill-opacity="0.3"/>
<circle cx="860.8" cy="513.7" r="0.4" fill="#4a4a4a" fill-opacity="0.3"/>
<circle cx="852.4" cy="518.1" r="0.6" fill="#4a4a4a" fill-opacity="0.3"/>
<circle cx="846.1" cy="517.5" r="0.7" fill="#4a4a4a" fill-opacity="0.3"/>
<circle cx="852.5" cy="515.4" r="0.8" fill="#4a4a4a" fill-opacity="0.3"/>
<circle cx="847.3" cy="514.1" r="0.5" fill="#4a4a4a" fill-opacity="0.3"/>
<circle cx="855.8" cy="517.3" r="0.8" fill="#4a4a4a" fill-opacity="0.3"/>
<circle cx="857.6" cy="518.7" r="0.9" fill="#4a4a4a" fill-opacity="0.3"/>
<circle cx="856.8" cy="507.1" r="0.3" fill="#4a4a4a" fill-opacity="0.3"/>
<circle cx="848.7" cy="508.2" r="0.3" fill="#4a4a4a" fill-opacity="0.3"/>
<circle cx="853.8" cy="515.9" r="0.6" fill="#4a4a4a" fill-opacity="0.3"/>
<circle cx="850.2" cy="515.0" r="0.8" fill="#4a4a4a" fill-opacity="0.3"/>
<circle cx="855.5" cy="513.2" r="0.4" fill="#4a4a4a" fill-opacity="0.3"/>
<circle cx="855.3" cy="514.1" r="0.9" fill="#4a4a4a" fill-opacity="0.3"/>
<circle cx="855.2" cy="512.0" r="0.6" fill="#4a4a4a" fill-opacity="0.3"/>
<circle cx="852.8" cy="516.0" r="0.5" fill="#4a4a4a" fill-opacity="0.3"/>
<circle cx="851.0" cy="509.5" r="0.5" fill="#4a4a4a" fill-opacity="0.3"/>
<circle cx="855.5" cy="516.1" r="0.4" fill="#4a4a4a" fill-opacity="0.3"/>
<circle cx="848.2" cy="511.3" r="0.5" fill="#4a4a4a" fill-opacity="0.3"/>
<circle cx="856.4" cy="514.3" r="0.5" fill="#4a4a4a" fill-opacity="0.3"/>
<circle cx="848.7" cy="509.5" r="0.5" fill="#4a4a4a" fill-opacity="0.3"/>
<rect x="858.7" y="501.7" width="5.5" height="5.5" fill="#c83030"/><circle cx="861.45" cy="504.45" r="1.6" fill="#fff"/><circle cx="861.45" cy="504.45" r=".8" fill="#c83030"/>
<rect x="867.6" y="500.2" width="21.8" height="21.8" fill="#dadada" />
<circle cx="879.4" cy="508.6" r="0.6" fill="#4a4a4a" fill-opacity="0.6"/>
<circle cx="874.3" cy="516.1" r="0.7" fill="#4a4a4a" fill-opacity="0.6"/>
<circle cx="872.2" cy="515.8" r="0.6" fill="#4a4a4a" fill-opacity="0.6"/>
<circle cx="877.8" cy="517.5" r="0.7" fill="#4a4a4a" fill-opacity="0.6"/>
<circle cx="881.4" cy="514.8" r="0.6" fill="#4a4a4a" fill-opacity="0.6"/>
<circle cx="884.4" cy="507.6" r="0.5" fill="#4a4a4a" fill-opacity="0.6"/>
<circle cx="883.3" cy="509.5" r="0.5" fill="#4a4a4a" fill-opacity="0.6"/>
<circle cx="875.6" cy="513.6" r="0.8" fill="#4a4a4a" fill-opacity="0.6"/>
<circle cx="873.2" cy="507.0" r="0.8" fill="#4a4a4a" fill-opacity="0.6"/>
<circle cx="874.4" cy="508.3" r="0.6" fill="#4a4a4a" fill-opacity="0.6"/>
<circle cx="881.8" cy="516.0" r="0.3" fill="#4a4a4a" fill-opacity="0.6"/>
<circle cx="881.9" cy="517.9" r="0.3" fill="#4a4a4a" fill-opacity="0.6"/>
<circle cx="879.1" cy="514.1" r="0.8" fill="#4a4a4a" fill-opacity="0.6"/>
<circle cx="878.0" cy="513.9" r="0.8" fill="#4a4a4a" fill-opacity="0.6"/>
<circle cx="883.2" cy="517.9" r="0.7" fill="#4a4a4a" fill-opacity="0.6"/>
<circle cx="882.7" cy="505.8" r="0.6" fill="#4a4a4a" fill-opacity="0.6"/>
<circle cx="877.9" cy="512.3" r="0.8" fill="#4a4a4a" fill-opacity="0.6"/>
<circle cx="871.3" cy="512.8" r="0.4" fill="#4a4a4a" fill-opacity="0.6"/>
<circle cx="877.5" cy="505.0" r="0.3" fill="#4a4a4a" fill-opacity="0.6"/>
<circle cx="875.3" cy="517.2" r="0.8" fill="#4a4a4a" fill-opacity="0.6"/>
<circle cx="877.7" cy="515.4" r="0.4" fill="#4a4a4a" fill-opacity="0.6"/>
<circle cx="872.6" cy="509.3" r="0.5" fill="#4a4a4a" fill-opacity="0.6"/>
<circle cx="874.9" cy="515.8" r="0.5" fill="#4a4a4a" fill-opacity="0.6"/>
<circle cx="876.1" cy="513.9" r="0.6" fill="#4a4a4a" fill-opacity="0.6"/>
<circle cx="881.7" cy="512.6" r="0.7" fill="#4a4a4a" fill-opacity="0.6"/>
<circle cx="880.9" cy="517.7" r="0.8" fill="#4a4a4a" fill-opacity="0.6"/>
<circle cx="875.4" cy="509.5" r="0.6" fill="#4a4a4a" fill-opacity="0.6"/>
<circle cx="872.3" cy="507.4" r="0.4" fill="#4a4a4a" fill-opacity="0.6"/>
<circle cx="883.1" cy="516.5" r="0.8" fill="#4a4a4a" fill-opacity="0.6"/>
<circle cx="873.3" cy="512.8" r="0.7" fill="#4a4a4a" fill-opacity="0.6"/>
<circle cx="878.8" cy="515.7" r="0.4" fill="#4a4a4a" fill-opacity="0.6"/>
<circle cx="874.6" cy="511.6" r="0.4" fill="#4a4a4a" fill-opacity="0.6"/>
<circle cx="874.0" cy="505.1" r="0.5" fill="#4a4a4a" fill-opacity="0.6"/>
<circle cx="876.5" cy="509.7" r="0.8" fill="#4a4a4a" fill-opacity="0.6"/>
<circle cx="874.9" cy="511.8" r="0.4" fill="#4a4a4a" fill-opacity="0.6"/>
<circle cx="882.1" cy="513.8" r="0.5" fill="#4a4a4a" fill-opacity="0.6"/>
<circle cx="879.4" cy="516.1" r="0.5" fill="#4a4a4a" fill-opacity="0.6"/>
<circle cx="877.9" cy="511.3" r="0.9" fill="#4a4a4a" fill-opacity="0.6"/>
<circle cx="872.2" cy="513.8" r="0.6" fill="#4a4a4a" fill-opacity="0.6"/>
<circle cx="881.4" cy="507.6" r="0.6" fill="#4a4a4a" fill-opacity="0.6"/>
<circle cx="871.3" cy="513.9" r="0.8" fill="#4a4a4a" fill-opacity="0.6"/>
<circle cx="872.3" cy="516.5" r="0.9" fill="#4a4a4a" fill-opacity="0.6"/>
<circle cx="874.8" cy="513.7" r="0.4" fill="#4a4a4a" fill-opacity="0.6"/>
<circle cx="876.4" cy="508.1" r="0.9" fill="#4a4a4a" fill-opacity="0.6"/>
<circle cx="879.4" cy="511.1" r="0.4" fill="#4a4a4a" fill-opacity="0.6"/>
<rect x="882.1" y="501.7" width="5.5" height="5.5" fill="#c83030"/><circle cx="884.85" cy="504.45" r="1.6" fill="#fff"/><circle cx="884.85" cy="504.45" r=".8" fill="#c83030"/>
<rect x="937" y="476.5" width="8" height="47" fill="#3f3f3f" />
<rect x="937.5" y="477" width="7.5" height="10" fill="#474747"/><path d="M939 483 l2.2-2.2 2.2 2.2z" fill="#ddd"/>
<rect x="937.5" y="512" width="7.5" height="10" fill="#474747"/><path d="M939 516 l2.2 2.2 2.2-2.2z" fill="#ddd"/>
<rect x="821" y="524" width="108.2" height="11.8" rx="1" fill="#3a3a3a"/>
<text x="822.5" y="532.2" font-size="6.2" fill="#6e6e6e" text-anchor="start">Search</text>
<rect x="930.3" y="524" width="14.7" height="11.8" rx="1" fill="#404040"/><rect x="934" y="526.5" width="7.4" height="7" fill="none" stroke="#ddd" stroke-width=".8"/><rect x="935.5" y="526.5" width="4" height="2.5" fill="#ddd"/>
<line x1="875" y1="539" x2="885" y2="539" stroke="#6a6a6a" stroke-width=".7"/>
<text x="821" y="547.5" font-size="6.2" fill="#c8c8c8" text-anchor="start">Snapshot Docker</text>
<g fill="none" stroke="#777" stroke-width=".6"><rect x="933.5" y="543.0" width="4.5" height="4.5" stroke-dasharray="1 .6"/><path d="M940 543.0 l4.5 4.5 M944.5 543.0 l-4.5 4.5"/></g>
<rect x="820" y="549.2" width="126" height="66.5" fill="#3b3b3b" />
<rect x="840.5" y="618.5" width="11.5" height="12.5" rx="1.5" fill="#444" stroke="#3d3d3d" stroke-width=".5"/>
<rect x="876.5" y="618.5" width="11.5" height="12.5" rx="1.5" fill="#444" stroke="#3d3d3d" stroke-width=".5"/>
<rect x="912.5" y="618.5" width="11.5" height="12.5" rx="1.5" fill="#444" stroke="#3d3d3d" stroke-width=".5"/>
<rect x="842.3" y="620.8" width="7.8" height="7.8" fill="none" stroke="#d8d8d8" stroke-width=".9"/><path d="M846.2 622.6 v4.2 M844.1 624.7 h4.2" stroke="#d8d8d8" stroke-width=".9"/>
<rect x="877.8" y="622" width="9" height="6.5" rx="1" fill="none" stroke="#d8d8d8" stroke-width=".8"/><circle cx="882.3" cy="625.3" r="1.8" fill="none" stroke="#d8d8d8" stroke-width=".8"/><rect x="880.5" y="620.8" width="3.6" height="1.2" fill="#d8d8d8"/>
<rect x="915.5" y="622" width="5.5" height="7" fill="#d8d8d8"/><rect x="914.5" y="620.5" width="7.5" height="1.2" fill="#d8d8d8"/>
<defs><clipPath id="img"><rect x="144" y="287" width="599" height="290"/></clipPath><filter id="blur1" x="-10%" y="-10%" width="120%" height="120%"><feGaussianBlur stdDeviation="1.6"/></filter><filter id="blur2" x="-10%" y="-10%" width="120%" height="120%"><feGaussianBlur stdDeviation="3"/></filter><filter id="blur05"><feGaussianBlur stdDeviation="0.35"/></filter></defs>
<rect x="143" y="286" width="600" height="291" fill="#6c6c6c"/>
<rect x="144" y="287" width="599" height="290" fill="#ffffff"/>
<g clip-path="url(#img)">
<g fill="none" stroke="#000">
<mask id="rb1" maskUnits="userSpaceOnUse" x="130" y="270" width="630" height="320"><g fill="none" stroke="#fff" stroke-width="18" stroke-linejoin="round"><path d="M189.4 322.5L192.9 322.9L196.3 323.3L199.7 323.8L203.2 324.2L206.7 324.5L210.3 324.9L213.9 325.2L217.6 325.5L221.3 325.7L225.1 325.9L229.0 326.1L232.9 326.2L236.8 326.4L240.8 326.5L244.8 326.6L248.9 326.7L253.0 326.8L257.1 326.8L261.2 326.8L265.4 326.7L269.6 326.5L274.0 326.3L278.4 326.1L282.8 326.1L285.1 326.1L287.4 326.1L289.8 326.2L292.1 326.3L294.5 326.5L296.8 326.7L299.2 327.0L301.6 327.4L304.0 327.8L306.4 328.2L308.9 328.7L311.4 329.2L313.9 329.7L316.4 330.3L319.0 330.8L321.5 331.5L324.0 332.1L326.6 332.8L329.1 333.5L331.6 334.2L334.0 335.0L336.4 335.8L338.8 336.6L341.2 337.4L343.5 338.2L345.7 339.1L347.9 339.9L351.9 341.6L355.5 343.1L358.9 344.7L362.2 346.3L365.4 348.1L368.7 350.2L372.2 352.5L375.9 355.2L378.0 356.7L380.1 358.3L382.3 360.1L384.7 362.0L387.4 364.2L390.3 366.6L393.3 369.3L396.6 372.2L400.0 375.3L403.5 378.5"/><path stroke-opacity="0.10" d="M140.4 315.0L142.8 315.3L145.6 315.7"/><path stroke-opacity="0.10" d="M441.9 417.2L443.9 419.2L445.5 421.0"/><path stroke-opacity="0.30" d="M145.6 315.7L148.3 316.1L151.4 316.7L154.9 317.3"/><path stroke-opacity="0.30" d="M434.3 409.3L437.1 412.2L439.7 414.8L441.9 417.2"/><path stroke-opacity="0.50" d="M154.9 317.3L158.7 318.0L162.8 318.7L166.9 319.4"/><path stroke-opacity="0.50" d="M424.8 399.6L428.1 403.0L431.3 406.2L434.3 409.3"/><path stroke-opacity="0.70" d="M166.9 319.4L171.0 320.1L175.0 320.8L178.9 321.3"/><path stroke-opacity="0.70" d="M414.2 389.1L417.8 392.6L421.3 396.2L424.8 399.6"/><path stroke-opacity="0.90" d="M178.9 321.3L182.4 321.7L185.9 322.1L189.4 322.5"/><path stroke-opacity="0.90" d="M403.5 378.5L407.0 382.0L410.6 385.5L414.2 389.1"/></g></mask>
<g mask="url(#rb1)">
<path d="M140.1 316.6L142.4 317.1L145.2 317.6L147.8 318.1L150.9 318.8L154.4 319.5L158.2 320.3L162.2 321.2L166.3 322.0L170.5 322.8L174.5 323.6L178.3 324.2L181.9 324.8L185.5 325.3L189.0 325.8L192.4 326.2L195.9 326.7L199.3 327.1L202.8 327.5L206.4 327.9L210.0 328.2L213.6 328.5L217.4 328.8L221.1 329.1L225.0 329.3L228.8 329.5L232.8 329.6L236.7 329.7L240.7 329.9L244.7 330.0L248.8 330.0L252.9 330.1L257.1 330.2L261.3 330.2L265.5 330.0L269.8 329.8L274.1 329.7L278.5 329.5L282.9 329.4L285.1 329.4L287.4 329.5L289.6 329.6L291.9 329.7L294.2 329.9L296.5 330.1L298.8 330.4L301.1 330.7L303.4 331.1L305.8 331.5L308.3 332.0L310.7 332.5L313.2 333.0L315.7 333.5L318.2 334.1L320.7 334.7L323.2 335.4L325.7 336.1L328.1 336.7L330.6 337.5L333.0 338.2L335.4 339.0L337.7 339.8L340.0 340.6L342.3 341.4L344.5 342.2L346.6 343.1L350.6 344.7L354.1 346.2L357.4 347.7L360.6 349.3L363.7 351.0L366.9 353.0L370.3 355.3L373.9 357.9L375.9 359.4L378.0 361.0L380.2 362.7L382.6 364.6L385.2 366.8L388.1 369.2L391.1 371.8L394.4 374.7L397.8 377.8L401.3 381.0L404.9 384.3L408.5 387.8L412.2 391.2L415.8 394.7L419.4 398.1L423.0 401.5L426.4 404.8L429.6 408.0L432.7 411.0L435.6 413.7L438.3 416.3L440.6 418.6L442.7 420.6L444.4 422.2" stroke-opacity="0.070" stroke-width="1.7"/>
<path d="M140.2 316.1L142.5 316.5L145.3 317.0L148.0 317.5L151.1 318.1L154.6 318.8L158.4 319.5L162.4 320.3L166.5 321.1L170.7 321.9L174.7 322.6L178.5 323.2L182.1 323.8L185.6 324.2L189.1 324.7L192.6 325.1L196.0 325.6L199.5 326.0L203.0 326.4L206.5 326.8L210.1 327.1L213.7 327.4L217.4 327.7L221.2 327.9L225.0 328.2L228.9 328.3L232.8 328.5L236.7 328.6L240.7 328.7L244.8 328.8L248.9 328.9L253.0 329.0L257.1 329.1L261.2 329.0L265.4 328.9L269.7 328.7L274.0 328.5L278.4 328.4L282.9 328.3L285.1 328.3L287.4 328.4L289.7 328.4L292.0 328.6L294.3 328.7L296.6 329.0L298.9 329.3L301.2 329.6L303.6 330.0L306.0 330.4L308.5 330.9L310.9 331.4L313.4 331.9L315.9 332.4L318.4 333.0L321.0 333.7L323.5 334.3L326.0 335.0L328.4 335.7L330.9 336.4L333.3 337.1L335.7 337.9L338.1 338.7L340.4 339.5L342.7 340.3L344.9 341.2L347.0 342.0L351.0 343.6L354.6 345.2L357.9 346.7L361.1 348.3L364.3 350.1L367.5 352.1L370.9 354.3L374.6 357.0L376.6 358.5L378.7 360.1L380.9 361.8L383.3 363.8L385.9 365.9L388.8 368.3L391.9 371.0L395.1 373.9L398.5 376.9L402.0 380.2L405.6 383.6L409.2 387.0L412.9 390.5L416.5 394.0L420.1 397.5L423.6 400.9L427.0 404.2L430.2 407.4L433.3 410.4L436.1 413.2L438.7 415.8L441.1 418.1L443.1 420.1L444.8 421.8" stroke-opacity="0.062" stroke-width="1.7"/>
<path d="M140.3 315.5L142.6 315.9L145.5 316.4L148.1 316.8L151.2 317.4L154.7 318.0L158.6 318.8L162.6 319.5L166.7 320.3L170.8 321.0L174.9 321.7L178.7 322.3L182.3 322.8L185.8 323.2L189.3 323.6L192.7 324.0L196.2 324.5L199.6 324.9L203.1 325.3L206.6 325.6L210.2 326.0L213.8 326.3L217.5 326.6L221.3 326.8L225.1 327.0L228.9 327.2L232.8 327.4L236.8 327.5L240.8 327.6L244.8 327.7L248.9 327.8L253.0 327.9L257.1 327.9L261.2 327.9L265.4 327.8L269.7 327.6L274.0 327.4L278.4 327.3L282.8 327.2L285.1 327.2L287.4 327.2L289.7 327.3L292.0 327.4L294.4 327.6L296.7 327.9L299.1 328.2L301.4 328.5L303.8 328.9L306.2 329.3L308.7 329.8L311.2 330.3L313.7 330.8L316.2 331.4L318.7 331.9L321.2 332.6L323.8 333.2L326.3 333.9L328.8 334.6L331.2 335.3L333.7 336.1L336.1 336.8L338.5 337.6L340.8 338.4L343.1 339.3L345.3 340.1L347.5 341.0L351.4 342.6L355.0 344.2L358.4 345.7L361.6 347.3L364.8 349.1L368.1 351.1L371.6 353.4L375.3 356.1L377.3 357.6L379.4 359.2L381.6 361.0L384.0 362.9L386.6 365.0L389.5 367.5L392.6 370.1L395.9 373.0L399.3 376.1L402.8 379.4L406.3 382.8L409.9 386.3L413.5 389.8L417.1 393.3L420.7 396.8L424.2 400.3L427.5 403.6L430.7 406.8L433.8 409.9L436.6 412.7L439.2 415.3L441.5 417.6L443.5 419.7L445.1 421.4" stroke-opacity="0.054" stroke-width="1.7"/>
<path d="M140.4 315.0L142.8 315.3L145.6 315.7L148.3 316.1L151.4 316.7L154.9 317.3L158.7 318.0L162.8 318.7L166.9 319.4L171.0 320.1L175.0 320.8L178.9 321.3L182.4 321.7L185.9 322.1L189.4 322.5L192.9 322.9L196.3 323.3L199.7 323.8L203.2 324.2L206.7 324.5L210.3 324.9L213.9 325.2L217.6 325.5L221.3 325.7L225.1 325.9L229.0 326.1L232.9 326.2L236.8 326.4L240.8 326.5L244.8 326.6L248.9 326.7L253.0 326.8L257.1 326.8L261.2 326.8L265.4 326.7L269.6 326.5L274.0 326.3L278.4 326.1L282.8 326.1L285.1 326.1L287.4 326.1L289.8 326.2L292.1 326.3L294.5 326.5L296.8 326.7L299.2 327.0L301.6 327.4L304.0 327.8L306.4 328.2L308.9 328.7L311.4 329.2L313.9 329.7L316.4 330.3L319.0 330.8L321.5 331.5L324.0 332.1L326.6 332.8L329.1 333.5L331.6 334.2L334.0 335.0L336.4 335.8L338.8 336.6L341.2 337.4L343.5 338.2L345.7 339.1L347.9 339.9L351.9 341.6L355.5 343.1L358.9 344.7L362.2 346.3L365.4 348.1L368.7 350.2L372.2 352.5L375.9 355.2L378.0 356.7L380.1 358.3L382.3 360.1L384.7 362.0L387.4 364.2L390.3 366.6L393.3 369.3L396.6 372.2L400.0 375.3L403.5 378.5L407.0 382.0L410.6 385.5L414.2 389.1L417.8 392.6L421.3 396.2L424.8 399.6L428.1 403.0L431.3 406.2L434.3 409.3L437.1 412.2L439.7 414.8L441.9 417.2L443.9 419.2L445.5 421.0" stroke-opacity="0.046" stroke-width="1.7"/>
<path d="M140.5 314.4L142.9 314.7L145.7 315.1L148.4 315.5L151.5 316.0L155.1 316.6L158.9 317.2L162.9 317.9L167.1 318.6L171.2 319.2L175.2 319.8L179.0 320.3L182.6 320.7L186.1 321.1L189.6 321.4L193.0 321.8L196.4 322.2L199.9 322.6L203.3 323.0L206.8 323.4L210.4 323.7L214.0 324.0L217.7 324.3L221.4 324.6L225.2 324.8L229.0 325.0L232.9 325.1L236.8 325.2L240.8 325.4L244.9 325.5L248.9 325.5L253.0 325.6L257.1 325.7L261.2 325.7L265.3 325.5L269.6 325.4L273.9 325.2L278.3 325.0L282.8 324.9L285.2 324.9L287.5 325.0L289.8 325.1L292.2 325.2L294.6 325.4L297.0 325.6L299.4 325.9L301.8 326.3L304.2 326.7L306.6 327.1L309.1 327.6L311.6 328.1L314.2 328.6L316.7 329.2L319.2 329.8L321.8 330.4L324.3 331.0L326.9 331.7L329.4 332.4L331.9 333.2L334.3 333.9L336.8 334.7L339.2 335.5L341.6 336.3L343.9 337.2L346.1 338.0L348.3 338.9L352.3 340.5L356.0 342.1L359.4 343.7L362.7 345.3L366.0 347.2L369.3 349.2L372.8 351.6L376.6 354.3L378.6 355.8L380.8 357.4L383.0 359.2L385.4 361.1L388.1 363.3L391.0 365.8L394.1 368.4L397.4 371.4L400.8 374.4L404.3 377.7L407.8 381.2L411.3 384.7L414.9 388.3L418.4 391.9L421.9 395.5L425.4 399.0L428.7 402.4L431.8 405.7L434.8 408.8L437.6 411.7L440.1 414.3L442.4 416.7L444.3 418.8L445.9 420.5" stroke-opacity="0.039" stroke-width="1.7"/>
<path d="M140.6 313.9L143.0 314.1L145.9 314.5L148.5 314.8L151.7 315.3L155.2 315.8L159.1 316.4L163.1 317.1L167.2 317.7L171.4 318.3L175.4 318.9L179.2 319.4L182.8 319.7L186.3 320.0L189.7 320.3L193.2 320.7L196.6 321.1L200.0 321.5L203.4 321.9L206.9 322.3L210.5 322.6L214.1 322.9L217.8 323.2L221.5 323.5L225.3 323.7L229.1 323.8L233.0 324.0L236.9 324.1L240.9 324.2L244.9 324.3L248.9 324.4L253.0 324.5L257.1 324.6L261.1 324.5L265.3 324.4L269.5 324.2L273.9 324.0L278.3 323.9L282.8 323.8L285.2 323.8L287.5 323.9L289.9 323.9L292.2 324.1L294.7 324.3L297.1 324.5L299.5 324.8L301.9 325.2L304.4 325.6L306.8 326.0L309.3 326.5L311.9 327.0L314.4 327.5L316.9 328.1L319.5 328.7L322.1 329.3L324.6 329.9L327.2 330.6L329.7 331.3L332.2 332.1L334.7 332.8L337.1 333.6L339.6 334.4L341.9 335.3L344.3 336.1L346.5 337.0L348.7 337.8L352.8 339.5L356.4 341.1L359.9 342.7L363.2 344.3L366.5 346.2L369.9 348.3L373.5 350.6L377.2 353.3L379.3 354.9L381.5 356.5L383.7 358.3L386.1 360.3L388.8 362.4L391.7 364.9L394.8 367.6L398.1 370.5L401.6 373.6L405.0 376.9L408.5 380.4L412.0 384.0L415.6 387.6L419.1 391.2L422.6 394.8L426.0 398.4L429.2 401.8L432.4 405.1L435.3 408.2L438.1 411.1L440.6 413.8L442.8 416.2L444.7 418.4L446.3 420.1" stroke-opacity="0.031" stroke-width="1.7"/>
<path d="M140.8 313.3L143.1 313.5L146.0 313.8L148.7 314.2L151.9 314.6L155.4 315.1L159.2 315.7L163.3 316.3L167.4 316.9L171.5 317.4L175.6 318.0L179.4 318.4L182.9 318.7L186.4 319.0L189.9 319.2L193.3 319.5L196.7 320.0L200.1 320.4L203.6 320.8L207.0 321.2L210.6 321.5L214.2 321.8L217.8 322.1L221.6 322.3L225.3 322.5L229.1 322.7L233.0 322.9L236.9 323.0L240.9 323.1L244.9 323.2L249.0 323.3L253.1 323.4L257.1 323.4L261.1 323.4L265.2 323.3L269.5 323.1L273.8 322.9L278.3 322.8L282.8 322.7L285.2 322.7L287.5 322.7L289.9 322.8L292.3 323.0L294.8 323.1L297.2 323.4L299.7 323.7L302.1 324.1L304.6 324.5L307.0 324.9L309.5 325.4L312.1 325.9L314.6 326.4L317.2 327.0L319.8 327.6L322.3 328.2L324.9 328.9L327.5 329.5L330.0 330.3L332.5 331.0L335.0 331.8L337.5 332.6L339.9 333.4L342.3 334.2L344.6 335.0L346.9 335.9L349.2 336.8L353.2 338.5L356.9 340.0L360.4 341.6L363.7 343.3L367.1 345.2L370.5 347.3L374.1 349.7L377.9 352.4L380.0 354.0L382.1 355.7L384.4 357.4L386.9 359.4L389.5 361.6L392.4 364.0L395.6 366.8L398.9 369.7L402.3 372.8L405.8 376.1L409.2 379.6L412.7 383.2L416.2 386.9L419.7 390.5L423.2 394.2L426.6 397.7L429.8 401.2L432.9 404.5L435.9 407.7L438.6 410.6L441.1 413.3L443.3 415.8L445.1 417.9L446.7 419.7" stroke-opacity="0.023" stroke-width="1.7"/>
<path d="M140.9 312.8L143.2 312.9L146.1 313.2L148.8 313.5L152.0 313.9L155.6 314.4L159.4 314.9L163.5 315.5L167.6 316.0L171.7 316.6L175.7 317.0L179.5 317.4L183.1 317.7L186.6 317.9L190.1 318.1L193.5 318.4L196.9 318.9L200.3 319.3L203.7 319.7L207.2 320.0L210.7 320.4L214.3 320.7L217.9 321.0L221.6 321.2L225.4 321.4L229.2 321.6L233.0 321.7L237.0 321.9L240.9 322.0L244.9 322.1L249.0 322.2L253.1 322.3L257.1 322.3L261.1 322.3L265.2 322.2L269.4 322.0L273.8 321.8L278.3 321.6L282.8 321.6L285.2 321.6L287.6 321.6L290.0 321.7L292.4 321.8L294.9 322.0L297.3 322.3L299.8 322.6L302.3 322.9L304.7 323.3L307.2 323.8L309.8 324.2L312.3 324.8L314.9 325.3L317.4 325.9L320.0 326.5L322.6 327.1L325.2 327.8L327.8 328.5L330.3 329.2L332.8 329.9L335.4 330.7L337.8 331.5L340.3 332.3L342.7 333.1L345.0 334.0L347.3 334.9L349.6 335.8L353.6 337.4L357.3 339.0L360.8 340.6L364.3 342.4L367.7 344.2L371.2 346.4L374.8 348.8L378.6 351.5L380.7 353.1L382.8 354.8L385.1 356.6L387.6 358.5L390.2 360.7L393.2 363.2L396.3 365.9L399.6 368.8L403.1 371.9L406.5 375.3L409.9 378.9L413.4 382.5L416.9 386.2L420.4 389.9L423.8 393.5L427.2 397.1L430.4 400.6L433.5 403.9L436.4 407.1L439.1 410.1L441.5 412.8L443.7 415.3L445.5 417.5L447.1 419.3" stroke-opacity="0.015" stroke-width="1.7"/>
</g>
<mask id="rb2" maskUnits="userSpaceOnUse" x="130" y="270" width="630" height="320"><g fill="none" stroke="#fff" stroke-width="12" stroke-linejoin="round"><path d="M183.0 301.5L187.1 302.7L191.2 303.8L195.3 304.9L199.4 305.9L203.4 306.9L207.4 307.9L211.2 308.8L214.8 309.6L218.4 310.4L222.0 311.2L225.6 312.0L229.2 312.7L232.8 313.4L236.4 314.1L239.9 314.8L243.5 315.4L247.1 316.1L250.7 316.7L254.2 317.4L257.8 318.0L261.4 318.6L265.0 319.2L268.5 319.8L272.1 320.4L275.7 321.0L279.3 321.6L282.8 322.2L286.4 322.8L290.0 323.4L293.6 323.9L297.3 324.5L301.0 325.1L304.7 325.7L308.4 326.2L312.2 326.8L315.9 327.4L319.6 327.9L323.3 328.4L327.0 329.0L330.6 329.5L334.2 330.0L337.8 330.5L341.3 331.0L344.7 331.5L348.1 332.0L351.4 332.5L354.6 333.0L357.7 333.5L360.8 333.9L363.8 334.4L366.7 334.8L369.6 335.3L372.5 335.7L375.3 336.1L378.0 336.6L380.7 337.0L383.4 337.4L386.0 337.8L388.6 338.2L391.1 338.5L393.5 338.9L396.0 339.3L398.4 339.7L400.7 340.0"/><path stroke-opacity="0.10" d="M139.6 288.2L141.9 289.0L145.7 290.1"/><path stroke-opacity="0.10" d="M438.1 345.4L440.7 345.8L442.9 346.1"/><path stroke-opacity="0.30" d="M145.7 290.1L148.0 290.9L150.6 291.7L153.5 292.6"/><path stroke-opacity="0.30" d="M428.1 343.9L431.7 344.4L435.1 344.9L438.1 345.4"/><path stroke-opacity="0.50" d="M153.5 292.6L156.6 293.6L160.0 294.6"/><path stroke-opacity="0.50" d="M420.2 342.7L424.3 343.3L428.1 343.9"/><path stroke-opacity="0.70" d="M160.0 294.6L163.5 295.7L167.1 296.8L171.0 298.0"/><path stroke-opacity="0.70" d="M407.5 340.8L411.8 341.4L416.1 342.0L420.2 342.7"/><path stroke-opacity="0.90" d="M171.0 298.0L174.9 299.1L178.9 300.3L183.0 301.5"/><path stroke-opacity="0.90" d="M400.7 340.0L403.0 340.3L405.3 340.5L407.5 340.8"/></g></mask>
<g mask="url(#rb2)">
<path d="M139.9 287.3L142.2 288.1L146.0 289.1L148.3 289.8L150.9 290.5L153.9 291.4L157.0 292.3L160.3 293.2L163.9 294.2L167.6 295.3L171.4 296.4L175.3 297.5L179.4 298.6L183.4 299.8L187.6 300.9L191.7 302.0L195.8 303.1L199.9 304.1L203.9 305.1L207.8 306.1L211.6 307.0L215.3 307.8L218.8 308.6L222.4 309.4L226.0 310.1L229.6 310.8L233.1 311.6L236.7 312.3L240.3 312.9L243.9 313.6L247.4 314.2L251.0 314.9L254.6 315.5L258.1 316.1L261.7 316.7L265.3 317.3L268.9 317.9L272.4 318.5L276.0 319.1L279.6 319.7L283.1 320.3L286.7 320.9L290.3 321.5L293.9 322.1L297.6 322.7L301.3 323.3L305.0 323.8L308.7 324.4L312.4 324.9L316.2 325.5L319.9 326.0L323.6 326.6L327.3 327.1L330.9 327.6L334.5 328.2L338.0 328.7L341.6 329.2L345.0 329.7L348.4 330.2L351.7 330.7L354.9 331.1L358.0 331.6L361.1 332.1L364.1 332.5L367.0 333.0L369.9 333.4L372.8 333.9L375.6 334.3L378.3 334.7L381.0 335.1L383.7 335.5L386.3 335.9L388.8 336.3L391.4 336.7L393.8 337.1L396.3 337.4L398.6 337.8L401.0 338.2L403.3 338.5L405.5 338.9L407.7 339.2L412.1 339.9L416.3 340.6L420.5 341.2L424.5 341.9L428.3 342.6L431.9 343.2L435.3 343.8L438.2 344.3L440.9 344.8L443.0 345.1" stroke-opacity="0.050" stroke-width="1.2"/>
<path d="M139.8 287.6L142.1 288.4L145.9 289.4L148.2 290.1L150.8 290.9L153.7 291.8L156.9 292.7L160.2 293.7L163.7 294.7L167.4 295.8L171.3 296.9L175.2 298.0L179.2 299.2L183.3 300.4L187.4 301.5L191.5 302.6L195.7 303.7L199.7 304.7L203.7 305.7L207.7 306.7L211.5 307.6L215.1 308.4L218.7 309.2L222.3 310.0L225.9 310.7L229.4 311.5L233.0 312.2L236.6 312.9L240.2 313.5L243.7 314.2L247.3 314.9L250.9 315.5L254.5 316.1L258.0 316.7L261.6 317.4L265.2 318.0L268.8 318.6L272.3 319.2L275.9 319.8L279.5 320.3L283.0 320.9L286.6 321.5L290.2 322.1L293.8 322.7L297.5 323.3L301.2 323.9L304.9 324.4L308.6 325.0L312.4 325.6L316.1 326.1L319.8 326.7L323.5 327.2L327.2 327.7L330.8 328.3L334.4 328.8L338.0 329.3L341.5 329.8L344.9 330.3L348.3 330.8L351.6 331.3L354.8 331.8L357.9 332.2L361.0 332.7L364.0 333.2L366.9 333.6L369.8 334.0L372.7 334.5L375.5 334.9L378.2 335.3L380.9 335.7L383.6 336.1L386.2 336.5L388.8 336.9L391.3 337.3L393.7 337.7L396.2 338.1L398.5 338.4L400.9 338.8L403.2 339.1L405.4 339.4L407.7 339.7L412.0 340.4L416.2 341.0L420.4 341.7L424.4 342.4L428.3 343.0L431.9 343.6L435.2 344.2L438.2 344.7L440.8 345.1L443.0 345.5" stroke-opacity="0.045" stroke-width="1.2"/>
<path d="M139.7 287.9L142.0 288.7L145.8 289.8L148.1 290.5L150.7 291.3L153.6 292.2L156.7 293.1L160.1 294.1L163.6 295.2L167.3 296.3L171.1 297.4L175.0 298.6L179.1 299.8L183.1 300.9L187.2 302.1L191.4 303.2L195.5 304.3L199.6 305.3L203.6 306.3L207.5 307.3L211.3 308.2L215.0 309.0L218.6 309.8L222.2 310.6L225.7 311.3L229.3 312.1L232.9 312.8L236.5 313.5L240.0 314.2L243.6 314.8L247.2 315.5L250.8 316.1L254.4 316.7L257.9 317.4L261.5 318.0L265.1 318.6L268.6 319.2L272.2 319.8L275.8 320.4L279.4 321.0L282.9 321.6L286.5 322.1L290.1 322.7L293.7 323.3L297.4 323.9L301.1 324.5L304.8 325.1L308.5 325.6L312.3 326.2L316.0 326.7L319.7 327.3L323.4 327.8L327.1 328.4L330.7 328.9L334.3 329.4L337.9 329.9L341.4 330.4L344.8 330.9L348.2 331.4L351.5 331.9L354.7 332.4L357.8 332.9L360.9 333.3L363.9 333.8L366.8 334.2L369.7 334.7L372.6 335.1L375.4 335.5L378.1 335.9L380.8 336.3L383.5 336.7L386.1 337.1L388.7 337.5L391.2 337.9L393.6 338.3L396.1 338.7L398.4 339.1L400.8 339.4L403.1 339.7L405.4 340.0L407.6 340.3L411.9 340.9L416.1 341.5L420.3 342.2L424.3 342.8L428.2 343.4L431.8 344.0L435.1 344.6L438.1 345.0L440.7 345.4L442.9 345.8" stroke-opacity="0.040" stroke-width="1.2"/>
<path d="M139.6 288.2L141.9 289.0L145.7 290.1L148.0 290.9L150.6 291.7L153.5 292.6L156.6 293.6L160.0 294.6L163.5 295.7L167.1 296.8L171.0 298.0L174.9 299.1L178.9 300.3L183.0 301.5L187.1 302.7L191.2 303.8L195.3 304.9L199.4 305.9L203.4 306.9L207.4 307.9L211.2 308.8L214.8 309.6L218.4 310.4L222.0 311.2L225.6 312.0L229.2 312.7L232.8 313.4L236.4 314.1L239.9 314.8L243.5 315.4L247.1 316.1L250.7 316.7L254.2 317.4L257.8 318.0L261.4 318.6L265.0 319.2L268.5 319.8L272.1 320.4L275.7 321.0L279.3 321.6L282.8 322.2L286.4 322.8L290.0 323.4L293.6 323.9L297.3 324.5L301.0 325.1L304.7 325.7L308.4 326.2L312.2 326.8L315.9 327.4L319.6 327.9L323.3 328.4L327.0 329.0L330.6 329.5L334.2 330.0L337.8 330.5L341.3 331.0L344.7 331.5L348.1 332.0L351.4 332.5L354.6 333.0L357.7 333.5L360.8 333.9L363.8 334.4L366.7 334.8L369.6 335.3L372.5 335.7L375.3 336.1L378.0 336.6L380.7 337.0L383.4 337.4L386.0 337.8L388.6 338.2L391.1 338.5L393.5 338.9L396.0 339.3L398.4 339.7L400.7 340.0L403.0 340.3L405.3 340.5L407.5 340.8L411.8 341.4L416.1 342.0L420.2 342.7L424.3 343.3L428.1 343.9L431.7 344.4L435.1 344.9L438.1 345.4L440.7 345.8L442.9 346.1" stroke-opacity="0.035" stroke-width="1.2"/>
<path d="M139.5 288.5L141.8 289.3L145.6 290.5L147.9 291.2L150.5 292.1L153.4 293.0L156.5 294.0L159.8 295.1L163.3 296.2L167.0 297.3L170.8 298.5L174.7 299.7L178.7 300.9L182.8 302.1L186.9 303.3L191.1 304.4L195.2 305.5L199.3 306.5L203.3 307.5L207.2 308.5L211.0 309.4L214.7 310.2L218.3 311.0L221.9 311.8L225.5 312.6L229.1 313.3L232.6 314.0L236.2 314.7L239.8 315.4L243.4 316.1L247.0 316.7L250.6 317.3L254.1 318.0L257.7 318.6L261.3 319.2L264.9 319.8L268.4 320.4L272.0 321.0L275.6 321.6L279.2 322.2L282.7 322.8L286.3 323.4L289.9 324.0L293.5 324.6L297.2 325.1L300.9 325.7L304.6 326.3L308.3 326.9L312.1 327.4L315.8 328.0L319.5 328.5L323.2 329.1L326.9 329.6L330.5 330.1L334.1 330.6L337.7 331.2L341.2 331.7L344.6 332.2L348.0 332.7L351.3 333.1L354.5 333.6L357.6 334.1L360.7 334.6L363.7 335.0L366.6 335.5L369.5 335.9L372.4 336.3L375.2 336.8L377.9 337.2L380.6 337.6L383.3 338.0L385.9 338.4L388.5 338.8L391.0 339.2L393.5 339.5L395.9 339.9L398.3 340.3L400.6 340.6L402.9 340.8L405.2 341.1L407.4 341.3L411.7 341.9L416.0 342.5L420.1 343.1L424.2 343.7L428.0 344.3L431.6 344.8L435.0 345.3L438.0 345.7L440.6 346.1L442.8 346.4" stroke-opacity="0.030" stroke-width="1.2"/>
<path d="M139.4 288.8L141.7 289.7L145.5 290.8L147.8 291.6L150.4 292.5L153.3 293.4L156.4 294.4L159.7 295.5L163.2 296.6L166.9 297.8L170.7 299.0L174.6 300.2L178.6 301.5L182.6 302.7L186.8 303.9L190.9 305.0L195.0 306.1L199.1 307.1L203.1 308.1L207.1 309.1L210.9 310.0L214.6 310.9L218.2 311.7L221.8 312.4L225.4 313.2L228.9 313.9L232.5 314.6L236.1 315.3L239.7 316.0L243.3 316.7L246.9 317.3L250.5 318.0L254.0 318.6L257.6 319.2L261.2 319.8L264.8 320.4L268.3 321.0L271.9 321.6L275.5 322.2L279.0 322.8L282.6 323.4L286.2 324.0L289.8 324.6L293.4 325.2L297.1 325.8L300.8 326.3L304.5 326.9L308.2 327.5L312.0 328.0L315.7 328.6L319.4 329.1L323.1 329.7L326.8 330.2L330.4 330.7L334.0 331.3L337.6 331.8L341.1 332.3L344.5 332.8L347.9 333.3L351.2 333.8L354.4 334.2L357.5 334.7L360.6 335.2L363.6 335.6L366.5 336.1L369.4 336.5L372.3 336.9L375.1 337.4L377.8 337.8L380.6 338.2L383.2 338.6L385.8 339.0L388.4 339.4L390.9 339.8L393.4 340.2L395.8 340.5L398.2 340.9L400.5 341.2L402.8 341.4L405.1 341.7L407.3 341.9L411.6 342.4L415.9 343.0L420.1 343.6L424.1 344.2L428.0 344.7L431.6 345.2L434.9 345.7L437.9 346.1L440.6 346.4L442.8 346.7" stroke-opacity="0.025" stroke-width="1.2"/>
<path d="M139.3 289.1L141.6 290.0L145.4 291.2L147.7 292.0L150.3 292.9L153.2 293.8L156.3 294.9L159.6 296.0L163.1 297.1L166.7 298.3L170.5 299.5L174.4 300.8L178.4 302.0L182.5 303.3L186.6 304.5L190.7 305.6L194.9 306.7L199.0 307.7L203.0 308.7L206.9 309.7L210.8 310.6L214.4 311.5L218.0 312.3L221.6 313.0L225.2 313.8L228.8 314.5L232.4 315.2L236.0 315.9L239.6 316.6L243.2 317.3L246.8 317.9L250.3 318.6L253.9 319.2L257.5 319.8L261.1 320.4L264.7 321.0L268.2 321.6L271.8 322.2L275.4 322.8L278.9 323.4L282.5 324.0L286.1 324.6L289.7 325.2L293.3 325.8L297.0 326.4L300.7 327.0L304.4 327.5L308.2 328.1L311.9 328.7L315.6 329.2L319.3 329.8L323.0 330.3L326.7 330.8L330.4 331.4L334.0 331.9L337.5 332.4L341.0 332.9L344.5 333.4L347.8 333.9L351.1 334.4L354.3 334.9L357.4 335.3L360.5 335.8L363.5 336.2L366.5 336.7L369.4 337.1L372.2 337.6L375.0 338.0L377.8 338.4L380.5 338.8L383.1 339.2L385.7 339.6L388.3 340.0L390.8 340.4L393.3 340.8L395.7 341.2L398.1 341.5L400.4 341.8L402.7 342.0L405.0 342.2L407.2 342.4L411.5 342.9L415.8 343.5L420.0 344.1L424.0 344.6L427.9 345.1L431.5 345.6L434.8 346.1L437.9 346.4L440.5 346.8L442.7 347.0" stroke-opacity="0.020" stroke-width="1.2"/>
<path d="M139.2 289.4L141.5 290.3L145.3 291.5L147.6 292.4L150.2 293.3L153.0 294.3L156.1 295.3L159.4 296.4L162.9 297.6L166.6 298.8L170.4 300.1L174.3 301.3L178.3 302.6L182.3 303.9L186.4 305.1L190.6 306.2L194.7 307.3L198.8 308.3L202.8 309.4L206.8 310.3L210.6 311.2L214.3 312.1L217.9 312.9L221.5 313.7L225.1 314.4L228.7 315.1L232.3 315.9L235.9 316.5L239.5 317.2L243.1 317.9L246.6 318.6L250.2 319.2L253.8 319.8L257.4 320.4L261.0 321.1L264.6 321.7L268.1 322.3L271.7 322.9L275.3 323.5L278.8 324.0L282.4 324.6L286.0 325.2L289.6 325.8L293.2 326.4L296.9 327.0L300.6 327.6L304.3 328.1L308.1 328.7L311.8 329.3L315.5 329.8L319.2 330.4L322.9 330.9L326.6 331.5L330.3 332.0L333.9 332.5L337.4 333.0L340.9 333.5L344.4 334.0L347.7 334.5L351.0 335.0L354.2 335.5L357.4 335.9L360.4 336.4L363.4 336.9L366.4 337.3L369.3 337.7L372.1 338.2L374.9 338.6L377.7 339.0L380.4 339.4L383.0 339.8L385.6 340.2L388.2 340.6L390.7 341.0L393.2 341.4L395.6 341.8L398.0 342.1L400.3 342.4L402.6 342.6L404.9 342.8L407.1 342.9L411.5 343.5L415.7 344.0L419.9 344.5L423.9 345.0L427.8 345.5L431.4 346.0L434.8 346.4L437.8 346.8L440.4 347.1L442.6 347.3" stroke-opacity="0.015" stroke-width="1.2"/>
</g>
<mask id="rb3" maskUnits="userSpaceOnUse" x="130" y="270" width="630" height="320"><g fill="none" stroke="#fff" stroke-width="15" stroke-linejoin="round"><path d="M504.7 365.7L508.3 367.7L511.8 369.9L515.3 372.1L518.9 374.3L522.4 376.5L525.9 378.8L529.4 381.2L532.9 383.6L534.7 384.9L536.4 386.2L538.2 387.5L539.9 388.9L541.6 390.4L543.4 391.8L545.1 393.3L546.8 394.9L548.6 396.5L550.3 398.2L552.2 400.1L554.0 402.1L555.9 404.1L557.9 406.3L559.8 408.6L561.8 410.9L563.8 413.2L565.7 415.5L567.7 417.9L569.6 420.2L571.5 422.6L573.3 424.8L575.1 427.0L576.8 429.2L578.5 431.2L580.0 433.1L581.5 434.9L584.1 438.0L586.2 440.3L587.7 442.0L589.2 443.8L591.2 446.0L593.4 448.2L595.2 449.8L597.5 452.1L600.3 454.9L603.5 458.0L605.2 459.7L606.9 461.5L608.8 463.3L610.7 465.1L612.6 467.0L614.5 468.9L616.5 470.8L618.5 472.7L620.5 474.5L622.5 476.3L624.5 478.1L626.5 479.8L628.4 481.5L630.3 483.0L632.2 484.5L634.0 485.9L635.8 487.2L639.4 489.8L643.1 492.2L646.7 494.5L650.4 496.8L654.0 498.8L657.6 500.8L661.3 502.7L664.9 504.5L668.5 506.3L672.2 507.9L676.0 509.4L679.7 510.8L683.4 512.0L687.1 513.2L690.8 514.3L694.4 515.3L697.9 516.4"/><path stroke-opacity="0.10" d="M443.8 346.7L447.2 347.2L450.3 347.5L453.7 347.9"/><path stroke-opacity="0.10" d="M741.9 526.7L744.2 527.0L746.7 527.3L749.7 527.7"/><path stroke-opacity="0.30" d="M453.7 347.9L457.4 348.3L461.4 348.8L465.5 349.4"/><path stroke-opacity="0.30" d="M733.7 525.1L736.1 525.6L739.2 526.2L741.9 526.7"/><path stroke-opacity="0.50" d="M465.5 349.4L469.5 350.2L473.5 351.0L477.1 352.0L480.6 353.2"/><path stroke-opacity="0.50" d="M721.8 522.5L725.0 523.2L728.1 523.9L731.0 524.5L733.7 525.1"/><path stroke-opacity="0.70" d="M480.6 353.2L484.0 354.6L487.4 356.1L490.9 357.8"/><path stroke-opacity="0.70" d="M711.6 520.0L715.1 520.8L718.5 521.7L721.8 522.5"/><path stroke-opacity="0.90" d="M490.9 357.8L494.3 359.6L497.8 361.5L501.2 363.6L504.7 365.7"/><path stroke-opacity="0.90" d="M697.9 516.4L701.4 517.3L704.8 518.2L708.2 519.1L711.6 520.0"/></g></mask>
<g mask="url(#rb3)">
<path d="M444.0 345.4L447.4 345.8L450.4 346.1L453.8 346.4L457.6 346.7L461.6 347.1L465.7 347.7L469.8 348.3L473.9 349.1L477.7 350.1L481.3 351.3L484.8 352.6L488.3 354.1L491.9 355.7L495.4 357.5L499.0 359.4L502.5 361.3L506.0 363.4L509.6 365.5L513.2 367.7L516.7 369.8L520.3 372.1L523.8 374.3L527.4 376.6L530.9 379.0L534.5 381.5L536.2 382.8L538.0 384.1L539.8 385.5L541.5 386.9L543.3 388.3L545.1 389.8L546.9 391.4L548.6 393.0L550.4 394.6L552.2 396.4L554.0 398.3L555.9 400.3L557.9 402.4L559.8 404.6L561.8 406.8L563.8 409.2L565.8 411.5L567.8 413.9L569.7 416.2L571.6 418.6L573.5 420.9L575.3 423.2L577.1 425.4L578.8 427.5L580.5 429.5L582.0 431.4L583.5 433.2L586.1 436.3L588.2 438.6L589.7 440.3L591.1 442.1L593.1 444.2L595.3 446.3L597.0 448.0L599.3 450.2L602.1 453.0L605.3 456.2L607.0 457.9L608.8 459.6L610.6 461.4L612.5 463.3L614.4 465.1L616.3 467.0L618.3 468.9L620.3 470.7L622.3 472.6L624.3 474.4L626.2 476.1L628.2 477.8L630.1 479.4L631.9 481.0L633.8 482.4L635.6 483.8L637.4 485.1L640.9 487.6L644.5 490.0L648.1 492.3L651.7 494.5L655.3 496.6L658.9 498.5L662.5 500.4L666.0 502.2L669.6 503.9L673.3 505.5L676.9 507.0L680.6 508.3L684.2 509.5L687.9 510.7L691.5 511.8L695.1 512.8L698.6 513.8L702.1 514.8L705.5 515.8L708.8 516.8L712.3 517.7L715.7 518.7L719.1 519.6L722.4 520.5L725.6 521.3L728.6 522.0L731.5 522.7L734.1 523.4L736.5 524.0L739.6 524.7L742.2 525.2L744.5 525.6L746.9 526.0L749.9 526.4" stroke-opacity="0.080" stroke-width="1.5"/>
<path d="M443.9 345.9L447.3 346.3L450.3 346.6L453.8 346.9L457.5 347.3L461.5 347.7L465.6 348.3L469.7 348.9L473.7 349.8L477.5 350.7L481.0 351.9L484.5 353.3L488.0 354.8L491.5 356.4L495.0 358.2L498.6 360.1L502.1 362.1L505.6 364.1L509.2 366.2L512.7 368.4L516.3 370.6L519.8 372.8L523.4 375.0L526.9 377.3L530.4 379.7L534.0 382.2L535.7 383.5L537.5 384.8L539.2 386.2L541.0 387.6L542.7 389.0L544.5 390.5L546.3 392.0L548.0 393.6L549.8 395.3L551.6 397.0L553.4 398.9L555.3 400.9L557.2 403.0L559.2 405.2L561.2 407.4L563.1 409.7L565.1 412.1L567.1 414.4L569.0 416.8L570.9 419.1L572.8 421.5L574.7 423.7L576.4 425.9L578.2 428.0L579.8 430.1L581.4 432.0L582.8 433.8L585.5 436.8L587.5 439.2L589.0 440.9L590.5 442.6L592.5 444.8L594.6 446.9L596.4 448.6L598.7 450.9L601.5 453.6L604.7 456.8L606.4 458.5L608.2 460.2L610.0 462.1L611.9 463.9L613.8 465.8L615.7 467.6L617.7 469.5L619.7 471.4L621.7 473.2L623.7 475.0L625.6 476.8L627.6 478.5L629.5 480.1L631.4 481.6L633.2 483.1L635.0 484.5L636.8 485.8L640.4 488.3L644.0 490.8L647.6 493.1L651.3 495.2L654.9 497.3L658.5 499.3L662.1 501.2L665.7 503.0L669.3 504.7L672.9 506.3L676.6 507.8L680.3 509.1L684.0 510.4L687.6 511.5L691.3 512.6L694.9 513.7L698.4 514.7L701.8 515.6L705.2 516.6L708.6 517.5L712.0 518.5L715.5 519.4L718.9 520.3L722.2 521.1L725.4 521.9L728.4 522.7L731.3 523.3L734.0 524.0L736.3 524.5L739.4 525.2L742.1 525.7L744.4 526.1L746.8 526.4L749.9 526.9" stroke-opacity="0.071" stroke-width="1.5"/>
<path d="M443.9 346.3L447.3 346.7L450.3 347.1L453.7 347.4L457.5 347.8L461.5 348.3L465.5 348.9L469.6 349.5L473.6 350.4L477.3 351.4L480.8 352.6L484.3 353.9L487.7 355.5L491.2 357.1L494.7 358.9L498.2 360.8L501.7 362.8L505.2 364.9L508.7 367.0L512.2 369.1L515.8 371.3L519.3 373.5L522.9 375.8L526.4 378.1L529.9 380.4L533.4 382.9L535.2 384.2L536.9 385.5L538.7 386.9L540.4 388.3L542.2 389.7L543.9 391.2L545.7 392.7L547.4 394.3L549.2 395.9L551.0 397.6L552.8 399.5L554.7 401.5L556.6 403.6L558.5 405.7L560.5 408.0L562.5 410.3L564.4 412.6L566.4 415.0L568.4 417.3L570.3 419.7L572.2 422.0L574.0 424.3L575.8 426.5L577.5 428.6L579.1 430.6L580.7 432.5L582.2 434.3L584.8 437.4L586.9 439.8L588.3 441.5L589.8 443.2L591.9 445.4L594.0 447.5L595.8 449.2L598.1 451.5L600.9 454.3L604.1 457.4L605.8 459.1L607.6 460.9L609.4 462.7L611.3 464.5L613.2 466.4L615.1 468.3L617.1 470.2L619.1 472.0L621.1 473.9L623.1 475.7L625.1 477.4L627.0 479.1L629.0 480.8L630.8 482.3L632.7 483.8L634.5 485.2L636.3 486.5L639.9 489.1L643.6 491.5L647.2 493.8L650.8 496.0L654.4 498.1L658.0 500.1L661.7 502.0L665.3 503.8L668.9 505.5L672.6 507.1L676.3 508.6L680.0 510.0L683.7 511.2L687.4 512.4L691.0 513.5L694.6 514.5L698.1 515.5L701.6 516.4L705.0 517.4L708.4 518.3L711.8 519.2L715.3 520.1L718.7 521.0L722.0 521.8L725.2 522.6L728.3 523.3L731.2 523.9L733.8 524.5L736.2 525.1L739.3 525.7L742.0 526.2L744.3 526.6L746.8 526.9L749.8 527.3" stroke-opacity="0.061" stroke-width="1.5"/>
<path d="M443.8 346.7L447.2 347.2L450.3 347.5L453.7 347.9L457.4 348.3L461.4 348.8L465.5 349.4L469.5 350.2L473.5 351.0L477.1 352.0L480.6 353.2L484.0 354.6L487.4 356.1L490.9 357.8L494.3 359.6L497.8 361.5L501.2 363.6L504.7 365.7L508.3 367.7L511.8 369.9L515.3 372.1L518.9 374.3L522.4 376.5L525.9 378.8L529.4 381.2L532.9 383.6L534.7 384.9L536.4 386.2L538.2 387.5L539.9 388.9L541.6 390.4L543.4 391.8L545.1 393.3L546.8 394.9L548.6 396.5L550.3 398.2L552.2 400.1L554.0 402.1L555.9 404.1L557.9 406.3L559.8 408.6L561.8 410.9L563.8 413.2L565.7 415.5L567.7 417.9L569.6 420.2L571.5 422.6L573.3 424.8L575.1 427.0L576.8 429.2L578.5 431.2L580.0 433.1L581.5 434.9L584.1 438.0L586.2 440.3L587.7 442.0L589.2 443.8L591.2 446.0L593.4 448.2L595.2 449.8L597.5 452.1L600.3 454.9L603.5 458.0L605.2 459.7L606.9 461.5L608.8 463.3L610.7 465.1L612.6 467.0L614.5 468.9L616.5 470.8L618.5 472.7L620.5 474.5L622.5 476.3L624.5 478.1L626.5 479.8L628.4 481.5L630.3 483.0L632.2 484.5L634.0 485.9L635.8 487.2L639.4 489.8L643.1 492.2L646.7 494.5L650.4 496.8L654.0 498.8L657.6 500.8L661.3 502.7L664.9 504.5L668.5 506.3L672.2 507.9L676.0 509.4L679.7 510.8L683.4 512.0L687.1 513.2L690.8 514.3L694.4 515.3L697.9 516.4L701.4 517.3L704.8 518.2L708.2 519.1L711.6 520.0L715.1 520.8L718.5 521.7L721.8 522.5L725.0 523.2L728.1 523.9L731.0 524.5L733.7 525.1L736.1 525.6L739.2 526.2L741.9 526.7L744.2 527.0L746.7 527.3L749.7 527.7" stroke-opacity="0.052" stroke-width="1.5"/>
<path d="M443.8 347.2L447.2 347.7L450.2 348.0L453.6 348.4L457.4 348.9L461.3 349.4L465.4 350.0L469.4 350.8L473.3 351.6L477.0 352.7L480.4 353.9L483.7 355.3L487.1 356.8L490.5 358.5L494.0 360.3L497.4 362.3L500.8 364.3L504.3 366.4L507.8 368.5L511.3 370.6L514.9 372.8L518.4 375.0L521.9 377.3L525.4 379.5L528.9 381.9L532.4 384.3L534.1 385.6L535.9 386.9L537.6 388.2L539.3 389.6L541.1 391.0L542.8 392.5L544.5 394.0L546.3 395.6L548.0 397.2L549.7 398.9L551.5 400.7L553.4 402.7L555.3 404.7L557.2 406.9L559.2 409.1L561.1 411.4L563.1 413.8L565.1 416.1L567.0 418.5L568.9 420.8L570.8 423.1L572.6 425.4L574.4 427.6L576.1 429.7L577.8 431.7L579.3 433.6L580.8 435.5L583.5 438.6L585.5 440.9L587.0 442.6L588.5 444.4L590.6 446.6L592.8 448.8L594.6 450.5L596.9 452.7L599.7 455.5L602.8 458.7L604.6 460.4L606.3 462.1L608.2 463.9L610.0 465.8L612.0 467.6L613.9 469.5L615.9 471.4L617.9 473.3L619.9 475.2L621.9 477.0L623.9 478.8L625.9 480.5L627.8 482.1L629.8 483.7L631.6 485.2L633.5 486.6L635.3 487.9L638.9 490.5L642.6 493.0L646.3 495.3L649.9 497.5L653.6 499.6L657.2 501.6L660.9 503.5L664.5 505.3L668.2 507.1L671.9 508.7L675.7 510.2L679.4 511.6L683.2 512.9L686.9 514.0L690.5 515.1L694.1 516.2L697.7 517.2L701.1 518.1L704.5 519.0L707.9 519.8L711.4 520.7L714.9 521.6L718.3 522.4L721.6 523.1L724.9 523.9L728.0 524.5L730.9 525.1L733.5 525.7L735.9 526.2L739.1 526.8L741.8 527.2L744.1 527.5L746.6 527.8L749.6 528.2" stroke-opacity="0.043" stroke-width="1.5"/>
<path d="M443.7 347.6L447.2 348.1L450.2 348.5L453.6 348.9L457.3 349.4L461.3 350.0L465.3 350.6L469.3 351.4L473.2 352.3L476.8 353.3L480.1 354.5L483.5 355.9L486.8 357.5L490.2 359.2L493.6 361.0L497.0 363.0L500.4 365.0L503.8 367.2L507.4 369.2L510.9 371.4L514.4 373.6L518.0 375.8L521.5 378.0L525.0 380.3L528.4 382.6L531.9 385.1L533.6 386.3L535.3 387.6L537.1 388.9L538.8 390.3L540.5 391.7L542.2 393.2L543.9 394.7L545.7 396.2L547.4 397.8L549.1 399.5L550.9 401.3L552.7 403.3L554.6 405.3L556.6 407.5L558.5 409.7L560.5 412.0L562.4 414.3L564.4 416.7L566.3 419.0L568.2 421.4L570.1 423.7L571.9 425.9L573.7 428.1L575.4 430.3L577.1 432.3L578.7 434.2L580.2 436.0L582.8 439.1L584.9 441.5L586.3 443.2L587.9 445.0L590.0 447.2L592.2 449.4L593.9 451.1L596.3 453.4L599.1 456.1L602.2 459.3L603.9 461.0L605.7 462.7L607.5 464.5L609.4 466.4L611.4 468.3L613.3 470.2L615.3 472.1L617.3 473.9L619.3 475.8L621.3 477.6L623.3 479.4L625.3 481.1L627.3 482.8L629.2 484.4L631.1 485.9L632.9 487.3L634.8 488.6L638.4 491.2L642.1 493.7L645.8 496.0L649.5 498.3L653.1 500.4L656.8 502.4L660.5 504.3L664.1 506.1L667.8 507.9L671.6 509.5L675.3 511.0L679.1 512.4L682.9 513.7L686.6 514.9L690.3 516.0L693.9 517.0L697.4 518.0L700.9 518.9L704.3 519.7L707.7 520.6L711.2 521.5L714.7 522.3L718.1 523.1L721.5 523.8L724.7 524.5L727.8 525.2L730.7 525.7L733.4 526.3L735.8 526.7L739.0 527.3L741.7 527.7L744.1 528.0L746.5 528.3L749.6 528.6" stroke-opacity="0.034" stroke-width="1.5"/>
<path d="M443.7 348.0L447.1 348.6L450.1 349.0L453.6 349.5L457.3 350.0L461.2 350.5L465.2 351.2L469.2 352.0L473.0 352.9L476.6 354.0L479.9 355.2L483.2 356.6L486.5 358.2L489.9 359.9L493.2 361.8L496.6 363.7L500.0 365.8L503.4 367.9L506.9 370.0L510.4 372.1L514.0 374.3L517.5 376.5L521.0 378.7L524.5 381.0L527.9 383.3L531.4 385.8L533.1 387.0L534.8 388.3L536.5 389.6L538.2 391.0L540.0 392.4L541.7 393.8L543.4 395.3L545.1 396.9L546.8 398.4L548.5 400.1L550.3 401.9L552.1 403.9L554.0 405.9L555.9 408.1L557.8 410.3L559.8 412.6L561.8 414.9L563.7 417.2L565.6 419.6L567.6 421.9L569.4 424.2L571.3 426.5L573.0 428.7L574.8 430.8L576.4 432.8L578.0 434.8L579.5 436.6L582.2 439.7L584.2 442.1L585.7 443.8L587.2 445.5L589.3 447.9L591.6 450.1L593.3 451.7L595.7 454.0L598.4 456.7L601.6 459.9L603.3 461.6L605.1 463.4L606.9 465.2L608.8 467.0L610.8 468.9L612.7 470.8L614.7 472.7L616.7 474.6L618.7 476.4L620.7 478.3L622.7 480.1L624.7 481.8L626.7 483.5L628.7 485.1L630.6 486.6L632.4 488.0L634.3 489.3L638.0 491.9L641.6 494.4L645.3 496.8L649.0 499.0L652.7 501.1L656.4 503.2L660.1 505.1L663.7 506.9L667.4 508.7L671.2 510.3L675.0 511.9L678.8 513.3L682.6 514.5L686.3 515.7L690.0 516.8L693.6 517.9L697.2 518.9L700.6 519.7L704.0 520.5L707.5 521.4L711.0 522.2L714.5 523.0L717.9 523.8L721.3 524.5L724.5 525.2L727.6 525.8L730.5 526.3L733.2 526.8L735.7 527.3L738.9 527.8L741.6 528.2L744.0 528.5L746.5 528.7L749.5 529.0" stroke-opacity="0.024" stroke-width="1.5"/>
<path d="M443.6 348.5L447.1 349.0L450.1 349.5L453.5 350.0L457.2 350.5L461.1 351.1L465.1 351.8L469.1 352.6L472.9 353.5L476.4 354.6L479.7 355.9L482.9 357.3L486.2 358.9L489.6 360.6L492.9 362.5L496.2 364.4L499.6 366.5L503.0 368.7L506.5 370.7L510.0 372.9L513.5 375.1L517.0 377.2L520.5 379.5L524.0 381.7L527.4 384.0L530.9 386.5L532.6 387.7L534.3 389.0L536.0 390.3L537.7 391.7L539.4 393.0L541.1 394.5L542.8 396.0L544.5 397.5L546.2 399.1L547.9 400.7L549.6 402.5L551.5 404.5L553.3 406.5L555.2 408.6L557.2 410.9L559.1 413.1L561.1 415.4L563.0 417.8L565.0 420.1L566.9 422.5L568.8 424.8L570.6 427.0L572.4 429.2L574.1 431.4L575.7 433.4L577.3 435.3L578.8 437.1L581.5 440.3L583.6 442.6L585.0 444.3L586.6 446.1L588.7 448.5L591.0 450.7L592.7 452.4L595.0 454.6L597.8 457.4L601.0 460.5L602.7 462.2L604.5 464.0L606.3 465.8L608.2 467.7L610.1 469.5L612.1 471.4L614.1 473.3L616.1 475.2L618.1 477.1L620.2 478.9L622.2 480.7L624.2 482.5L626.2 484.1L628.1 485.7L630.0 487.2L631.9 488.7L633.8 490.0L637.5 492.7L641.2 495.1L644.9 497.5L648.6 499.8L652.3 501.9L656.0 503.9L659.7 505.9L663.4 507.7L667.1 509.5L670.9 511.1L674.7 512.7L678.5 514.1L682.3 515.4L686.1 516.6L689.8 517.7L693.4 518.7L696.9 519.7L700.4 520.5L703.8 521.3L707.3 522.1L710.8 522.9L714.3 523.7L717.7 524.5L721.1 525.2L724.4 525.8L727.5 526.4L730.4 526.9L733.1 527.4L735.5 527.8L738.7 528.3L741.5 528.7L743.9 529.0L746.4 529.2L749.4 529.5" stroke-opacity="0.015" stroke-width="1.5"/>
</g>
<mask id="rb4" maskUnits="userSpaceOnUse" x="130" y="270" width="630" height="320"><g fill="none" stroke="#fff" stroke-width="35" stroke-linejoin="round"><path d="M518.8 493.2L520.2 495.0L521.5 496.8L522.8 498.3L525.4 501.5L527.8 504.3L530.1 506.8L532.3 509.1L534.3 511.2L536.3 513.1L538.1 514.9L540.0 516.5L541.8 518.0L543.7 519.5L545.6 520.9L547.4 522.2L549.1 523.4L550.8 524.4L552.5 525.3L553.9 526.1L556.3 527.1L558.3 527.8L559.9 528.2L561.2 528.3L562.4 528.3L563.8 528.0L565.5 527.6L567.5 527.0L569.8 526.2L571.8 525.5L573.9 524.6L575.7 523.6L578.1 522.2L580.5 520.8L583.5 519.0L586.0 517.7L588.7 516.2L591.6 514.8L594.6 513.3L597.7 511.7L600.8 510.1L603.9 508.4L606.8 506.7L609.6 504.9L612.1 503.2L614.4 501.4L616.8 499.4L619.2 497.2L621.6 494.8L624.0 492.3L626.3 489.7"/><path stroke-opacity="0.10" d="M439.2 412.6L444.0 412.1L448.6 414.8L450.9 416.8L453.3 419.1L456.2 422.1L457.9 423.8L459.7 425.6"/><path stroke-opacity="0.10" d="M681.5 410.9L682.1 407.4L682.7 404.2L683.2 401.3L683.7 399.1L684.2 396.5L684.5 394.3L684.5 391.6"/><path stroke-opacity="0.30" d="M459.7 425.6L461.6 427.5L463.6 429.6L465.6 431.7L467.6 433.9L469.8 436.2L471.9 438.5L474.1 440.8L476.2 443.2"/><path stroke-opacity="0.30" d="M673.7 435.8L675.1 433.7L676.2 431.4L677.3 428.7L678.3 425.4L679.2 421.9L680.1 418.3L680.8 414.5L681.5 410.9"/><path stroke-opacity="0.50" d="M476.2 443.2L478.4 445.5L480.5 447.9L482.7 450.2L484.7 452.5L486.8 454.8L488.7 457.0L490.6 459.1"/><path stroke-opacity="0.50" d="M659.9 450.5L662.2 448.1L664.4 445.9L666.6 443.8L668.6 441.8L670.5 439.8L672.2 437.8L673.7 435.8"/><path stroke-opacity="0.70" d="M490.6 459.1L492.5 461.2L494.3 463.4L496.2 465.6L498.0 467.8L499.9 470.0L501.7 472.2L503.5 474.5L505.3 476.7"/><path stroke-opacity="0.70" d="M643.9 470.3L645.8 467.9L647.6 465.6L649.5 463.1L651.4 460.7L653.3 458.2L655.4 455.7L657.6 453.0L659.9 450.5"/><path stroke-opacity="0.90" d="M505.3 476.7L507.1 478.9L508.8 481.1L510.6 483.2L512.3 485.3L514.0 487.4L515.6 489.4L517.2 491.3L518.8 493.2"/><path stroke-opacity="0.90" d="M626.3 489.7L628.8 487.2L631.2 484.6L633.6 482.1L635.9 479.5L638.1 477.2L640.1 474.9L642.1 472.6L643.9 470.3"/></g></mask>
<g mask="url(#rb4)">
<path d="M439.9 417.2L442.8 416.8L445.5 418.6L447.3 420.3L449.5 422.7L452.3 425.7L453.9 427.4L455.5 429.3L457.3 431.3L459.1 433.4L461.1 435.6L463.0 437.8L465.0 440.2L467.1 442.5L469.1 445.0L471.2 447.4L473.2 449.8L475.3 452.2L477.3 454.6L479.3 457.0L481.2 459.3L483.0 461.6L484.8 463.7L486.5 465.9L488.2 468.1L489.9 470.3L491.7 472.5L493.4 474.8L495.1 477.1L496.8 479.4L498.5 481.7L500.1 483.9L501.8 486.2L503.4 488.4L505.0 490.6L506.6 492.7L508.2 494.8L509.7 496.9L511.3 498.9L512.7 500.8L514.1 502.6L515.5 504.3L518.2 507.6L520.8 510.5L523.2 513.2L525.4 515.6L527.6 517.9L529.7 519.9L531.8 521.8L533.8 523.6L535.9 525.3L537.9 527.0L540.0 528.5L542.0 530.0L544.1 531.3L546.1 532.5L548.1 533.7L550.0 534.6L552.9 535.9L555.6 536.8L558.3 537.5L560.8 537.7L563.2 537.6L565.7 537.3L568.1 536.7L570.5 535.9L572.9 535.1L575.2 534.3L577.9 533.1L580.3 531.9L582.9 530.3L585.3 528.9L588.1 527.2L590.4 526.0L593.0 524.6L595.9 523.2L598.9 521.7L602.0 520.1L605.3 518.4L608.5 516.6L611.7 514.7L614.8 512.8L617.7 510.8L620.4 508.7L623.0 506.4L625.7 504.0L628.3 501.4L630.8 498.8L633.3 496.1L635.8 493.4L638.2 490.7L640.5 488.0L642.8 485.3L644.9 482.8L647.0 480.3L648.9 477.8L650.8 475.3L652.6 472.7L654.4 470.2L656.1 467.7L657.9 465.2L659.7 462.8L661.5 460.3L663.5 457.8L665.5 455.4L667.6 453.1L669.7 450.9L671.8 448.6L673.9 446.4L675.8 444.1L677.7 441.7L679.4 439.2L680.9 436.6L682.1 433.7L683.3 430.4L684.2 426.9L685.1 423.1L685.8 419.3L686.5 415.4L687.0 411.7L687.5 408.1L687.9 404.9L688.4 402.1L688.7 399.8L689.1 397.0L689.3 394.4L689.3 391.4" stroke-opacity="0.085" stroke-width="2.2"/>
<path d="M439.8 416.4L443.0 416.0L446.0 418.0L447.9 419.7L450.1 422.1L452.9 425.1L454.5 426.8L456.2 428.7L458.0 430.7L459.9 432.8L461.8 434.9L463.8 437.2L465.8 439.5L467.9 441.9L469.9 444.3L472.0 446.7L474.1 449.1L476.2 451.5L478.2 453.9L480.2 456.3L482.1 458.6L484.0 460.8L485.7 462.9L487.5 465.1L489.2 467.3L491.0 469.5L492.7 471.7L494.5 474.0L496.2 476.3L497.9 478.6L499.6 480.8L501.3 483.1L503.0 485.3L504.6 487.5L506.2 489.7L507.9 491.9L509.4 493.9L511.0 496.0L512.5 497.9L514.0 499.8L515.4 501.6L516.8 503.3L519.4 506.5L521.9 509.4L524.3 512.1L526.6 514.5L528.7 516.7L530.8 518.8L532.9 520.7L534.9 522.4L536.9 524.1L538.9 525.7L540.9 527.3L542.9 528.7L544.9 530.0L546.9 531.2L548.8 532.3L550.6 533.2L553.4 534.4L556.1 535.3L558.5 535.9L560.9 536.2L563.1 536.1L565.3 535.7L567.6 535.2L570.0 534.4L572.4 533.6L574.6 532.8L577.2 531.7L579.5 530.5L582.1 529.0L584.5 527.5L587.4 525.9L589.7 524.6L592.3 523.2L595.1 521.8L598.2 520.3L601.3 518.7L604.5 517.0L607.7 515.2L610.9 513.4L613.9 511.5L616.7 509.5L619.4 507.5L622.0 505.2L624.6 502.8L627.1 500.3L629.7 497.7L632.1 495.0L634.6 492.3L637.0 489.6L639.3 487.0L641.6 484.4L643.8 481.8L645.8 479.4L647.8 476.9L649.7 474.4L651.5 471.9L653.3 469.5L655.0 467.0L656.8 464.5L658.6 462.0L660.5 459.5L662.5 457.0L664.6 454.6L666.7 452.3L668.8 450.0L670.9 447.8L673.0 445.6L674.9 443.4L676.8 441.1L678.4 438.6L679.9 436.1L681.2 433.3L682.3 430.1L683.3 426.6L684.1 422.9L684.9 419.1L685.5 415.3L686.1 411.5L686.6 408.0L687.1 404.8L687.5 402.0L687.9 399.7L688.3 397.0L688.5 394.3L688.5 391.5" stroke-opacity="0.079" stroke-width="2.2"/>
<path d="M439.6 415.7L443.2 415.3L446.5 417.4L448.5 419.1L450.8 421.5L453.6 424.5L455.2 426.2L456.9 428.1L458.7 430.0L460.6 432.1L462.6 434.3L464.6 436.5L466.6 438.8L468.7 441.2L470.8 443.6L472.9 446.0L475.0 448.4L477.0 450.8L479.1 453.2L481.1 455.5L483.0 457.8L484.9 460.0L486.7 462.2L488.5 464.3L490.3 466.5L492.0 468.7L493.8 470.9L495.5 473.2L497.3 475.5L499.0 477.7L500.7 480.0L502.5 482.3L504.1 484.5L505.8 486.7L507.5 488.8L509.1 491.0L510.7 493.0L512.2 495.0L513.8 497.0L515.2 498.9L516.6 500.7L518.0 502.3L520.6 505.5L523.1 508.4L525.5 511.0L527.7 513.4L529.9 515.6L531.9 517.6L533.9 519.5L535.9 521.2L537.8 522.9L539.8 524.5L541.8 526.0L543.8 527.4L545.8 528.7L547.7 529.8L549.5 530.9L551.3 531.8L554.0 532.9L556.5 533.8L558.8 534.4L560.9 534.6L562.9 534.5L565.0 534.2L567.2 533.6L569.5 532.9L571.8 532.1L574.1 531.3L576.5 530.3L578.7 529.1L581.3 527.6L583.7 526.2L586.6 524.5L588.9 523.2L591.6 521.8L594.4 520.4L597.5 518.9L600.6 517.3L603.8 515.6L607.0 513.9L610.1 512.1L613.0 510.2L615.8 508.3L618.4 506.3L621.0 504.1L623.5 501.7L626.0 499.2L628.5 496.6L631.0 494.0L633.4 491.3L635.8 488.6L638.2 486.0L640.5 483.4L642.7 480.9L644.7 478.5L646.6 476.0L648.5 473.6L650.3 471.1L652.1 468.7L653.9 466.2L655.7 463.7L657.6 461.2L659.5 458.7L661.5 456.2L663.6 453.8L665.8 451.4L668.0 449.2L670.1 447.0L672.1 444.9L674.1 442.7L675.9 440.4L677.5 438.1L678.9 435.6L680.2 432.9L681.3 429.9L682.3 426.4L683.1 422.7L683.9 418.9L684.6 415.1L685.2 411.4L685.7 407.9L686.2 404.7L686.6 401.8L687.1 399.5L687.5 396.9L687.7 394.3L687.7 391.5" stroke-opacity="0.073" stroke-width="2.2"/>
<path d="M439.5 414.9L443.4 414.5L447.0 416.7L449.1 418.5L451.4 420.9L454.3 423.9L455.9 425.6L457.6 427.5L459.4 429.4L461.3 431.5L463.3 433.6L465.3 435.9L467.4 438.2L469.5 440.5L471.6 442.9L473.7 445.3L475.8 447.7L477.9 450.1L480.0 452.4L482.0 454.8L484.0 457.0L485.9 459.3L487.7 461.4L489.5 463.5L491.3 465.7L493.1 467.9L494.9 470.2L496.6 472.4L498.4 474.7L500.1 476.9L501.9 479.2L503.6 481.4L505.3 483.6L507.0 485.8L508.7 488.0L510.3 490.1L511.9 492.1L513.5 494.1L515.0 496.0L516.4 497.9L517.8 499.7L519.2 501.3L521.8 504.5L524.3 507.4L526.6 510.0L528.9 512.4L531.0 514.5L533.0 516.5L535.0 518.3L536.9 520.1L538.8 521.7L540.8 523.2L542.8 524.7L544.7 526.1L546.6 527.3L548.5 528.5L550.3 529.5L552.0 530.3L554.6 531.5L556.9 532.3L559.1 532.8L561.0 533.0L562.8 533.0L564.7 532.7L566.8 532.1L569.0 531.4L571.3 530.6L573.5 529.9L575.9 528.9L578.0 527.8L580.5 526.3L582.9 524.8L585.8 523.1L588.2 521.8L590.9 520.4L593.7 519.0L596.8 517.5L599.9 515.9L603.0 514.2L606.2 512.5L609.2 510.7L612.2 508.9L614.9 507.0L617.4 505.0L619.9 502.9L622.4 500.6L624.9 498.1L627.4 495.5L629.8 492.9L632.3 490.3L634.7 487.6L637.0 485.0L639.3 482.4L641.5 480.0L643.6 477.6L645.5 475.2L647.4 472.8L649.2 470.3L651.0 467.9L652.8 465.4L654.7 463.0L656.5 460.5L658.5 458.0L660.5 455.4L662.7 453.0L664.9 450.6L667.1 448.4L669.2 446.2L671.3 444.1L673.2 441.9L674.9 439.8L676.6 437.5L678.0 435.1L679.2 432.6L680.3 429.6L681.3 426.2L682.2 422.5L682.9 418.8L683.6 415.0L684.2 411.3L684.8 407.8L685.3 404.5L685.8 401.7L686.2 399.4L686.6 396.8L686.9 394.3L686.9 391.5" stroke-opacity="0.068" stroke-width="2.2"/>
<path d="M439.4 414.1L443.6 413.7L447.6 416.1L449.7 417.9L452.1 420.3L454.9 423.3L456.6 425.0L458.3 426.8L460.2 428.8L462.1 430.8L464.1 433.0L466.1 435.2L468.2 437.5L470.3 439.8L472.4 442.2L474.6 444.6L476.7 447.0L478.8 449.3L480.9 451.7L482.9 454.0L484.9 456.3L486.8 458.5L488.7 460.6L490.5 462.8L492.3 464.9L494.1 467.1L495.9 469.4L497.7 471.6L499.5 473.9L501.3 476.1L503.0 478.3L504.8 480.6L506.5 482.8L508.2 485.0L509.9 487.1L511.5 489.2L513.1 491.2L514.7 493.2L516.3 495.1L517.7 496.9L519.1 498.7L520.4 500.3L523.0 503.5L525.5 506.3L527.8 508.9L530.0 511.3L532.1 513.4L534.1 515.4L536.0 517.2L537.9 518.9L539.8 520.5L541.8 522.0L543.7 523.4L545.6 524.8L547.4 526.0L549.3 527.1L551.0 528.1L552.6 528.9L555.1 530.0L557.4 530.8L559.4 531.3L561.0 531.5L562.7 531.4L564.4 531.1L566.4 530.6L568.5 529.9L570.8 529.1L572.9 528.4L575.2 527.5L577.2 526.4L579.7 524.9L582.1 523.5L585.0 521.8L587.5 520.4L590.1 519.0L593.0 517.6L596.0 516.1L599.2 514.5L602.3 512.8L605.4 511.1L608.4 509.4L611.3 507.6L613.9 505.7L616.4 503.8L618.9 501.7L621.3 499.4L623.8 497.0L626.2 494.5L628.7 491.9L631.1 489.3L633.5 486.6L635.9 484.0L638.2 481.5L640.4 479.0L642.4 476.7L644.3 474.3L646.2 472.0L648.1 469.5L649.9 467.1L651.7 464.7L653.6 462.2L655.5 459.7L657.4 457.2L659.5 454.6L661.7 452.1L664.0 449.8L666.2 447.6L668.3 445.4L670.4 443.3L672.3 441.2L674.0 439.1L675.6 436.9L677.0 434.7L678.2 432.2L679.3 429.3L680.3 425.9L681.2 422.3L682.0 418.6L682.7 414.8L683.3 411.1L683.9 407.6L684.4 404.4L684.9 401.6L685.4 399.3L685.8 396.7L686.1 394.3L686.1 391.5" stroke-opacity="0.062" stroke-width="2.2"/>
<path d="M439.3 413.3L443.8 412.9L448.1 415.4L450.3 417.3L452.7 419.7L455.6 422.7L457.3 424.4L459.0 426.2L460.9 428.2L462.8 430.2L464.8 432.3L466.9 434.6L469.0 436.8L471.1 439.1L473.2 441.5L475.4 443.9L477.5 446.2L479.7 448.6L481.8 451.0L483.8 453.3L485.8 455.5L487.8 457.7L489.6 459.8L491.5 462.0L493.3 464.1L495.1 466.3L497.0 468.6L498.8 470.8L500.6 473.0L502.4 475.3L504.2 477.5L505.9 479.7L507.7 481.9L509.4 484.1L511.1 486.2L512.7 488.3L514.4 490.3L516.0 492.2L517.5 494.1L518.9 496.0L520.3 497.7L521.6 499.3L524.2 502.5L526.7 505.3L529.0 507.9L531.1 510.2L533.2 512.3L535.2 514.2L537.1 516.0L539.0 517.7L540.8 519.2L542.7 520.7L544.6 522.2L546.5 523.5L548.3 524.7L550.0 525.8L551.7 526.7L553.3 527.5L555.7 528.5L557.8 529.3L559.6 529.7L561.1 529.9L562.5 529.8L564.1 529.6L565.9 529.1L568.0 528.5L570.3 527.7L572.4 526.9L574.5 526.0L576.4 525.0L578.9 523.6L581.3 522.1L584.3 520.4L586.7 519.1L589.4 517.6L592.3 516.2L595.3 514.7L598.4 513.1L601.6 511.5L604.6 509.8L607.6 508.0L610.4 506.3L613.0 504.5L615.4 502.6L617.8 500.5L620.2 498.3L622.7 495.9L625.1 493.4L627.5 490.8L629.9 488.2L632.4 485.6L634.7 483.0L637.1 480.5L639.3 478.1L641.3 475.8L643.2 473.5L645.1 471.1L646.9 468.7L648.8 466.3L650.6 463.9L652.5 461.4L654.4 458.9L656.4 456.4L658.5 453.8L660.8 451.3L663.1 449.0L665.3 446.8L667.5 444.6L669.5 442.6L671.4 440.5L673.1 438.5L674.7 436.4L676.0 434.2L677.2 431.8L678.3 429.0L679.3 425.7L680.2 422.1L681.0 418.4L681.7 414.7L682.4 411.0L683.0 407.5L683.5 404.3L684.1 401.5L684.5 399.2L685.0 396.6L685.3 394.3L685.3 391.6" stroke-opacity="0.056" stroke-width="2.2"/>
<path d="M439.2 412.6L444.0 412.1L448.6 414.8L450.9 416.8L453.3 419.1L456.2 422.1L457.9 423.8L459.7 425.6L461.6 427.5L463.6 429.6L465.6 431.7L467.6 433.9L469.8 436.2L471.9 438.5L474.1 440.8L476.2 443.2L478.4 445.5L480.5 447.9L482.7 450.2L484.7 452.5L486.8 454.8L488.7 457.0L490.6 459.1L492.5 461.2L494.3 463.4L496.2 465.6L498.0 467.8L499.9 470.0L501.7 472.2L503.5 474.5L505.3 476.7L507.1 478.9L508.8 481.1L510.6 483.2L512.3 485.3L514.0 487.4L515.6 489.4L517.2 491.3L518.8 493.2L520.2 495.0L521.5 496.8L522.8 498.3L525.4 501.5L527.8 504.3L530.1 506.8L532.3 509.1L534.3 511.2L536.3 513.1L538.1 514.9L540.0 516.5L541.8 518.0L543.7 519.5L545.6 520.9L547.4 522.2L549.1 523.4L550.8 524.4L552.5 525.3L553.9 526.1L556.3 527.1L558.3 527.8L559.9 528.2L561.2 528.3L562.4 528.3L563.8 528.0L565.5 527.6L567.5 527.0L569.8 526.2L571.8 525.5L573.9 524.6L575.7 523.6L578.1 522.2L580.5 520.8L583.5 519.0L586.0 517.7L588.7 516.2L591.6 514.8L594.6 513.3L597.7 511.7L600.8 510.1L603.9 508.4L606.8 506.7L609.6 504.9L612.1 503.2L614.4 501.4L616.8 499.4L619.2 497.2L621.6 494.8L624.0 492.3L626.3 489.7L628.8 487.2L631.2 484.6L633.6 482.1L635.9 479.5L638.1 477.2L640.1 474.9L642.1 472.6L643.9 470.3L645.8 467.9L647.6 465.6L649.5 463.1L651.4 460.7L653.3 458.2L655.4 455.7L657.6 453.0L659.9 450.5L662.2 448.1L664.4 445.9L666.6 443.8L668.6 441.8L670.5 439.8L672.2 437.8L673.7 435.8L675.1 433.7L676.2 431.4L677.3 428.7L678.3 425.4L679.2 421.9L680.1 418.3L680.8 414.5L681.5 410.9L682.1 407.4L682.7 404.2L683.2 401.3L683.7 399.1L684.2 396.5L684.5 394.3L684.5 391.6" stroke-opacity="0.050" stroke-width="2.2"/>
<path d="M439.0 411.8L444.2 411.3L449.1 414.2L451.5 416.2L454.0 418.5L456.9 421.5L458.6 423.2L460.4 425.0L462.3 426.9L464.3 428.9L466.3 431.0L468.4 433.2L470.5 435.5L472.7 437.8L474.9 440.1L477.1 442.5L479.3 444.8L481.4 447.2L483.6 449.5L485.7 451.8L487.7 454.0L489.7 456.2L491.6 458.3L493.5 460.4L495.3 462.6L497.2 464.8L499.1 467.0L501.0 469.2L502.8 471.4L504.6 473.7L506.5 475.9L508.2 478.1L510.0 480.2L511.8 482.4L513.5 484.5L515.2 486.5L516.8 488.5L518.5 490.4L520.0 492.2L521.4 494.0L522.8 495.8L524.0 497.3L526.6 500.4L529.0 503.2L531.3 505.7L533.4 508.0L535.4 510.1L537.3 512.0L539.2 513.7L541.0 515.3L542.8 516.8L544.6 518.3L546.5 519.6L548.3 520.9L550.0 522.0L551.6 523.1L553.2 523.9L554.6 524.6L556.8 525.6L558.7 526.3L560.2 526.6L561.2 526.7L562.2 526.7L563.5 526.5L565.1 526.1L567.0 525.5L569.2 524.7L571.2 524.0L573.2 523.2L574.9 522.3L577.3 520.9L579.7 519.4L582.7 517.7L585.2 516.3L588.0 514.8L590.9 513.4L593.9 511.9L597.0 510.3L600.1 508.7L603.1 507.0L606.0 505.3L608.7 503.6L611.1 501.9L613.4 500.2L615.7 498.2L618.1 496.0L620.4 493.7L622.8 491.2L625.2 488.7L627.6 486.2L630.0 483.6L632.4 481.1L634.8 478.6L637.0 476.2L639.0 474.0L640.9 471.8L642.8 469.5L644.7 467.1L646.5 464.8L648.4 462.4L650.3 459.9L652.3 457.4L654.3 454.9L656.6 452.3L658.9 449.7L661.3 447.3L663.6 445.1L665.7 443.0L667.8 441.0L669.6 439.1L671.3 437.2L672.8 435.2L674.1 433.2L675.2 431.0L676.3 428.4L677.3 425.2L678.3 421.7L679.1 418.1L679.9 414.4L680.6 410.8L681.2 407.3L681.8 404.1L682.3 401.2L682.9 399.0L683.3 396.5L683.7 394.3L683.8 391.6" stroke-opacity="0.045" stroke-width="2.2"/>
<path d="M438.9 411.0L444.4 410.6L449.7 413.5L452.1 415.6L454.6 418.0L457.6 420.9L459.3 422.6L461.1 424.4L463.0 426.3L465.0 428.3L467.1 430.4L469.2 432.6L471.3 434.8L473.5 437.1L475.7 439.4L477.9 441.8L480.1 444.1L482.3 446.4L484.5 448.8L486.6 451.0L488.6 453.3L490.6 455.4L492.5 457.5L494.5 459.6L496.4 461.8L498.3 464.0L500.2 466.2L502.0 468.4L503.9 470.6L505.8 472.8L507.6 475.0L509.4 477.2L511.2 479.4L513.0 481.5L514.7 483.6L516.4 485.6L518.1 487.6L519.7 489.4L521.3 491.3L522.7 493.1L524.0 494.8L525.2 496.3L527.8 499.4L530.2 502.2L532.4 504.7L534.6 506.9L536.5 509.0L538.4 510.8L540.2 512.5L542.0 514.1L543.8 515.6L545.6 517.0L547.4 518.4L549.1 519.6L550.8 520.7L552.4 521.7L554.0 522.6L555.3 523.2L557.4 524.1L559.1 524.7L560.5 525.1L561.3 525.2L562.1 525.1L563.2 524.9L564.7 524.6L566.5 524.0L568.7 523.2L570.7 522.5L572.5 521.8L574.1 520.9L576.5 519.5L578.9 518.1L581.9 516.3L584.5 514.9L587.3 513.4L590.2 512.0L593.2 510.5L596.3 508.9L599.3 507.3L602.3 505.7L605.2 504.0L607.8 502.3L610.2 500.7L612.4 498.9L614.7 497.0L617.0 494.9L619.3 492.6L621.7 490.2L624.0 487.6L626.4 485.1L628.9 482.6L631.3 480.1L633.7 477.6L635.8 475.3L637.8 473.1L639.8 470.9L641.7 468.6L643.5 466.3L645.4 464.0L647.3 461.6L649.2 459.1L651.2 456.7L653.3 454.1L655.6 451.5L658.0 448.9L660.4 446.5L662.7 444.3L664.9 442.2L666.9 440.3L668.7 438.4L670.4 436.5L671.9 434.6L673.1 432.7L674.3 430.7L675.3 428.1L676.4 425.0L677.3 421.5L678.2 417.9L678.9 414.3L679.6 410.6L680.3 407.2L680.9 403.9L681.5 401.1L682.0 398.8L682.5 396.4L682.9 394.2L683.0 391.6" stroke-opacity="0.039" stroke-width="2.2"/>
<path d="M438.8 410.2L444.6 409.8L450.2 412.9L452.7 415.0L455.3 417.4L458.2 420.3L460.0 422.0L461.8 423.8L463.8 425.7L465.8 427.7L467.8 429.8L470.0 431.9L472.1 434.1L474.3 436.4L476.5 438.7L478.8 441.1L481.0 443.4L483.2 445.7L485.4 448.0L487.5 450.3L489.6 452.5L491.6 454.7L493.5 456.7L495.4 458.9L497.4 461.0L499.3 463.2L501.2 465.4L503.1 467.6L505.0 469.8L506.9 472.0L508.7 474.2L510.6 476.4L512.4 478.5L514.1 480.6L515.9 482.7L517.6 484.7L519.3 486.6L520.9 488.5L522.5 490.3L523.9 492.1L525.2 493.8L526.5 495.3L529.0 498.4L531.4 501.1L533.6 503.6L535.7 505.9L537.6 507.9L539.5 509.7L541.3 511.4L543.1 512.9L544.8 514.4L546.6 515.8L548.3 517.1L550.0 518.3L551.7 519.4L553.2 520.3L554.7 521.2L555.9 521.8L558.0 522.7L559.6 523.2L560.7 523.5L561.4 523.6L561.9 523.6L562.9 523.4L564.2 523.1L566.0 522.5L568.2 521.7L570.1 521.1L571.8 520.3L573.4 519.5L575.7 518.2L578.1 516.7L581.2 514.9L583.7 513.5L586.6 512.0L589.5 510.6L592.5 509.0L595.6 507.5L598.6 505.9L601.5 504.3L604.4 502.7L607.0 501.0L609.3 499.4L611.4 497.7L613.6 495.8L615.9 493.7L618.2 491.5L620.5 489.1L622.8 486.6L625.3 484.1L627.7 481.6L630.1 479.1L632.5 476.6L634.7 474.4L636.7 472.2L638.6 470.0L640.5 467.8L642.4 465.5L644.3 463.2L646.2 460.8L648.1 458.4L650.2 455.9L652.3 453.3L654.6 450.7L657.1 448.1L659.5 445.7L661.8 443.5L664.0 441.4L666.0 439.5L667.8 437.7L669.5 435.9L670.9 434.1L672.2 432.3L673.3 430.3L674.3 427.8L675.4 424.7L676.3 421.4L677.2 417.8L678.0 414.1L678.7 410.5L679.4 407.0L680.0 403.8L680.6 400.9L681.2 398.7L681.7 396.3L682.1 394.2L682.2 391.6" stroke-opacity="0.033" stroke-width="2.2"/>
<path d="M438.7 409.5L444.8 409.0L450.7 412.2L453.3 414.4L455.9 416.8L458.9 419.7L460.7 421.4L462.5 423.2L464.5 425.0L466.5 427.0L468.6 429.1L470.7 431.3L472.9 433.5L475.1 435.7L477.4 438.0L479.6 440.3L481.8 442.7L484.1 445.0L486.2 447.3L488.4 449.5L490.5 451.7L492.5 453.9L494.5 456.0L496.4 458.1L498.4 460.2L500.3 462.4L502.3 464.6L504.2 466.8L506.1 469.0L508.0 471.2L509.9 473.4L511.7 475.5L513.5 477.7L515.3 479.8L517.1 481.8L518.8 483.8L520.5 485.7L522.2 487.6L523.8 489.4L525.1 491.2L526.5 492.9L527.7 494.3L530.2 497.4L532.6 500.1L534.8 502.6L536.8 504.8L538.8 506.8L540.6 508.6L542.4 510.2L544.1 511.7L545.8 513.1L547.5 514.5L549.3 515.8L550.9 517.0L552.5 518.1L554.0 519.0L555.4 519.8L556.6 520.4L558.5 521.2L560.0 521.7L561.0 522.0L561.4 522.0L561.8 522.0L562.5 521.9L563.8 521.5L565.5 521.0L567.7 520.2L569.5 519.6L571.2 518.9L572.6 518.2L574.9 516.8L577.3 515.4L580.4 513.6L583.0 512.1L585.8 510.6L588.8 509.2L591.8 507.6L594.8 506.1L597.8 504.5L600.8 502.9L603.5 501.3L606.1 499.7L608.4 498.1L610.4 496.5L612.6 494.7L614.8 492.6L617.1 490.4L619.4 488.0L621.7 485.5L624.1 483.1L626.6 480.6L629.0 478.1L631.4 475.7L633.6 473.4L635.6 471.3L637.5 469.2L639.4 467.0L641.3 464.7L643.2 462.4L645.1 460.1L647.1 457.6L649.1 455.1L651.3 452.6L653.6 449.9L656.1 447.2L658.6 444.9L660.9 442.7L663.1 440.6L665.1 438.8L667.0 437.0L668.6 435.2L670.0 433.5L671.2 431.8L672.3 429.9L673.4 427.5L674.4 424.5L675.3 421.2L676.2 417.6L677.0 414.0L677.8 410.4L678.5 406.9L679.1 403.7L679.8 400.8L680.3 398.6L680.9 396.2L681.3 394.2L681.4 391.7" stroke-opacity="0.027" stroke-width="2.2"/>
<path d="M438.5 408.7L445.0 408.2L451.2 411.6L453.9 413.8L456.5 416.2L459.6 419.1L461.4 420.8L463.2 422.6L465.2 424.4L467.2 426.4L469.3 428.5L471.5 430.6L473.7 432.8L475.9 435.1L478.2 437.3L480.4 439.6L482.7 442.0L484.9 444.3L487.1 446.5L489.3 448.8L491.4 451.0L493.5 453.1L495.5 455.2L497.4 457.3L499.4 459.4L501.4 461.6L503.3 463.8L505.3 466.0L507.2 468.2L509.1 470.4L511.0 472.6L512.9 474.7L514.7 476.8L516.5 478.9L518.3 480.9L520.1 482.9L521.8 484.8L523.4 486.6L525.0 488.4L526.4 490.2L527.7 491.9L528.9 493.3L531.4 496.4L533.7 499.1L535.9 501.5L538.0 503.7L539.9 505.7L541.7 507.4L543.4 509.0L545.1 510.5L546.8 511.9L548.5 513.3L550.2 514.6L551.8 515.7L553.4 516.7L554.8 517.6L556.2 518.4L557.2 518.9L559.1 519.7L560.5 520.2L561.3 520.4L561.5 520.5L561.6 520.4L562.2 520.3L563.4 520.0L565.0 519.5L567.2 518.8L568.9 518.1L570.5 517.5L571.8 516.8L574.1 515.5L576.5 514.0L579.6 512.2L582.3 510.7L585.1 509.2L588.1 507.8L591.1 506.2L594.1 504.7L597.1 503.1L600.0 501.6L602.7 500.0L605.2 498.4L607.4 496.9L609.4 495.3L611.6 493.5L613.7 491.5L616.0 489.3L618.2 486.9L620.5 484.5L622.9 482.0L625.4 479.6L627.8 477.2L630.2 474.7L632.4 472.5L634.4 470.4L636.3 468.3L638.2 466.2L640.1 463.9L642.0 461.6L644.0 459.3L646.0 456.9L648.0 454.4L650.2 451.8L652.6 449.1L655.2 446.4L657.7 444.0L660.0 441.8L662.2 439.8L664.3 438.0L666.1 436.2L667.7 434.6L669.0 432.9L670.2 431.3L671.3 429.5L672.4 427.2L673.4 424.2L674.4 421.0L675.3 417.4L676.1 413.8L676.9 410.3L677.6 406.8L678.2 403.6L678.9 400.7L679.5 398.5L680.1 396.1L680.4 394.2L680.6 391.7" stroke-opacity="0.022" stroke-width="2.2"/>
<path d="M438.4 407.9L445.2 407.4L451.7 411.0L454.5 413.2L457.2 415.6L460.2 418.6L462.0 420.2L463.9 421.9L465.9 423.8L468.0 425.8L470.1 427.8L472.3 429.9L474.5 432.1L476.7 434.4L479.0 436.6L481.3 438.9L483.6 441.2L485.8 443.5L488.0 445.8L490.2 448.0L492.4 450.2L494.4 452.4L496.4 454.4L498.4 456.5L500.4 458.7L502.4 460.8L504.4 463.0L506.4 465.2L508.3 467.4L510.2 469.6L512.2 471.7L514.0 473.9L515.9 476.0L517.7 478.0L519.5 480.1L521.3 482.0L523.0 483.9L524.7 485.7L526.3 487.5L527.6 489.2L528.9 490.9L530.1 492.3L532.6 495.3L534.9 498.0L537.1 500.4L539.1 502.6L541.0 504.5L542.8 506.3L544.5 507.9L546.1 509.3L547.8 510.7L549.5 512.0L551.1 513.3L552.7 514.4L554.2 515.4L555.6 516.3L556.9 517.0L557.9 517.5L559.7 518.3L560.9 518.7L561.6 518.9L561.5 518.9L561.5 518.9L561.9 518.8L562.9 518.5L564.5 518.0L566.7 517.3L568.4 516.7L569.8 516.1L571.1 515.4L573.3 514.1L575.7 512.6L578.8 510.8L581.5 509.4L584.4 507.9L587.4 506.4L590.4 504.8L593.4 503.3L596.4 501.8L599.2 500.2L601.9 498.6L604.4 497.1L606.5 495.6L608.4 494.1L610.5 492.3L612.7 490.3L614.9 488.2L617.1 485.8L619.4 483.4L621.8 481.0L624.2 478.6L626.7 476.2L629.1 473.8L631.3 471.6L633.3 469.5L635.2 467.5L637.1 465.3L639.0 463.1L640.9 460.9L642.9 458.5L644.9 456.1L647.0 453.6L649.2 451.0L651.6 448.3L654.2 445.6L656.8 443.2L659.2 441.0L661.4 439.0L663.4 437.2L665.2 435.5L666.8 433.9L668.1 432.4L669.3 430.8L670.3 429.1L671.4 426.9L672.4 424.0L673.4 420.8L674.3 417.3L675.2 413.7L675.9 410.1L676.7 406.7L677.4 403.5L678.0 400.6L678.7 398.4L679.2 396.1L679.6 394.2L679.8 391.7" stroke-opacity="0.016" stroke-width="2.2"/>
<path d="M438.3 407.1L445.4 406.7L452.3 410.3L455.1 412.6L457.8 415.0L460.9 418.0L462.7 419.6L464.6 421.3L466.6 423.2L468.7 425.1L470.9 427.2L473.0 429.3L475.3 431.5L477.6 433.7L479.8 436.0L482.1 438.2L484.4 440.5L486.7 442.8L488.9 445.1L491.1 447.3L493.3 449.5L495.4 451.6L497.4 453.6L499.4 455.7L501.5 457.9L503.5 460.0L505.5 462.2L507.5 464.4L509.4 466.6L511.4 468.7L513.3 470.9L515.2 473.0L517.1 475.1L518.9 477.2L520.7 479.2L522.5 481.1L524.2 483.0L525.9 484.8L527.5 486.5L528.9 488.3L530.2 489.9L531.3 491.3L533.8 494.3L536.1 497.0L538.2 499.4L540.2 501.5L542.1 503.4L543.8 505.1L545.5 506.7L547.1 508.1L548.8 509.5L550.4 510.8L552.1 512.0L553.6 513.1L555.0 514.1L556.4 514.9L557.6 515.6L558.5 516.1L560.2 516.8L561.4 517.2L561.8 517.3L561.6 517.3L561.3 517.3L561.6 517.2L562.5 517.0L564.1 516.5L566.1 515.8L567.8 515.2L569.2 514.7L570.3 514.0L572.5 512.8L574.9 511.3L578.1 509.5L580.8 508.0L583.7 506.5L586.7 504.9L589.7 503.4L592.7 501.9L595.6 500.4L598.4 498.8L601.1 497.3L603.5 495.8L605.6 494.3L607.5 492.9L609.5 491.1L611.6 489.2L613.8 487.0L616.0 484.8L618.2 482.3L620.6 480.0L623.1 477.6L625.5 475.2L628.0 472.8L630.2 470.6L632.1 468.6L634.1 466.6L636.0 464.5L637.9 462.3L639.8 460.1L641.8 457.7L643.8 455.3L645.9 452.8L648.2 450.3L650.7 447.5L653.3 444.8L655.9 442.4L658.3 440.2L660.5 438.3L662.5 436.5L664.3 434.8L665.8 433.3L667.2 431.8L668.3 430.4L669.3 428.8L670.4 426.6L671.4 423.8L672.4 420.6L673.4 417.1L674.2 413.6L675.0 410.0L675.8 406.6L676.5 403.4L677.2 400.4L677.8 398.2L678.4 396.0L678.8 394.2L679.0 391.7" stroke-opacity="0.010" stroke-width="2.2"/>
<path d="M440.0 418.0 C441.3 418.7 440.4 414.2 447.7 422.0 C455.0 429.8 472.5 450.3 483.8 464.5 C495.1 478.7 506.7 496.2 515.7 507.0 C524.7 517.8 531.0 523.7 538.0 529.0 C545.0 534.3 551.8 537.8 558.0 539.0 C564.2 540.2 569.7 537.8 575.0 536.0 C580.3 534.2 582.5 532.2 590.0 528.0 C597.5 523.8 610.8 518.2 620.0 511.0 C629.2 503.8 637.8 493.5 645.0 485.0 C652.2 476.5 657.2 468.0 663.5 459.8 C669.8 451.6 678.2 445.4 682.5 435.6 C686.8 425.8 688.1 408.6 689.4 401.0 C690.6 393.4 689.9 391.8 690.0 390.0" stroke-opacity="0.16" stroke-width="0.9"/>
</g>
<mask id="rb5" maskUnits="userSpaceOnUse" x="130" y="270" width="630" height="320"><g fill="none" stroke="#fff" stroke-width="16" stroke-linejoin="round"><path d="M304.8 447.3L307.2 448.6L309.6 450.0L312.2 451.5L314.8 453.1L317.5 454.7L320.3 456.4L323.0 458.1L325.7 459.8L328.4 461.5L331.1 463.2L333.7 464.9L336.2 466.6L338.6 468.2L340.9 469.7L343.1 471.2L345.1 472.5L348.5 474.9L351.2 476.9L353.2 478.4L356.0 480.9L358.1 484.0L359.4 486.0L360.6 487.8L362.3 490.2L364.3 493.2L366.6 496.5L368.9 500.2L370.1 502.1L371.4 504.0L372.6 506.0L373.9 508.0L375.2 509.9L376.5 511.9L377.7 513.9L379.0 515.8L380.3 517.7L381.5 519.5L383.9 523.0L386.3 526.2L388.6 529.4L390.9 532.5L393.2 535.6L395.5 538.5L397.8 541.4L400.0 544.1L402.3 546.7L404.7 549.1L407.1 551.4L409.5 553.5L412.2 555.4L414.9 557.3L417.9 559.0L420.9 560.7L423.8 562.3"/><path stroke-opacity="0.10" d="M268.3 435.0L271.2 435.8L273.5 436.3"/><path stroke-opacity="0.10" d="M445.8 575.3L447.8 576.5L450.0 577.8"/><path stroke-opacity="0.30" d="M273.5 436.3L276.3 436.9L279.4 437.7"/><path stroke-opacity="0.30" d="M440.7 572.4L443.4 573.9L445.8 575.3"/><path stroke-opacity="0.50" d="M279.4 437.7L282.8 438.6L286.4 439.7"/><path stroke-opacity="0.50" d="M436.8 569.9L438.9 571.2L440.7 572.4"/><path stroke-opacity="0.70" d="M286.4 439.7L290.2 441.0L294.2 442.5"/><path stroke-opacity="0.70" d="M432.2 567.1L434.7 568.5L436.8 569.9"/><path stroke-opacity="0.90" d="M294.2 442.5L298.2 444.2L302.4 446.2L304.8 447.3"/><path stroke-opacity="0.90" d="M423.8 562.3L426.7 564.0L429.5 565.5L432.2 567.1"/></g></mask>
<g mask="url(#rb5)">
<path d="M267.9 436.4L270.7 437.3L273.0 438.0L275.7 438.7L278.8 439.6L282.1 440.7L285.6 441.8L289.3 443.2L293.1 444.8L297.0 446.6L301.1 448.7L303.3 449.9L305.7 451.2L308.1 452.6L310.7 454.1L313.3 455.7L316.0 457.3L318.7 459.0L321.4 460.7L324.1 462.4L326.8 464.1L329.5 465.8L332.1 467.4L334.6 469.1L337.0 470.7L339.3 472.2L341.4 473.6L343.4 475.0L346.8 477.4L349.4 479.3L351.3 480.7L353.7 482.9L355.6 485.6L356.9 487.6L358.1 489.5L359.8 491.9L361.9 494.8L364.1 498.2L366.4 501.8L367.6 503.7L368.8 505.6L370.1 507.6L371.4 509.6L372.6 511.6L373.9 513.6L375.2 515.5L376.5 517.5L377.8 519.4L379.0 521.2L381.5 524.8L383.9 528.0L386.2 531.2L388.5 534.3L390.8 537.4L393.1 540.4L395.4 543.3L397.8 546.0L400.1 548.7L402.6 551.2L405.1 553.6L407.7 555.8L410.4 557.9L413.3 559.8L416.4 561.6L419.4 563.3L422.5 564.9L425.5 566.5L428.3 568.0L431.0 569.3L433.5 570.7L435.8 571.9L437.8 573.1L439.8 574.2L442.5 575.6L445.0 576.9L447.1 578.0L449.3 579.1" stroke-opacity="0.060" stroke-width="1.6"/>
<path d="M268.0 436.0L270.8 436.8L273.2 437.4L275.9 438.1L279.0 439.0L282.3 440.0L285.8 441.1L289.6 442.5L293.5 444.0L297.4 445.8L301.5 447.8L303.8 449.0L306.2 450.3L308.6 451.7L311.2 453.2L313.8 454.8L316.5 456.4L319.2 458.1L321.9 459.8L324.7 461.5L327.4 463.2L330.0 464.9L332.6 466.6L335.1 468.2L337.5 469.8L339.8 471.4L342.0 472.8L344.0 474.2L347.4 476.6L350.0 478.5L351.9 480.0L354.5 482.2L356.5 485.1L357.7 487.1L358.9 488.9L360.7 491.3L362.7 494.3L364.9 497.6L367.2 501.3L368.4 503.2L369.7 505.1L370.9 507.1L372.2 509.0L373.5 511.0L374.8 513.0L376.1 515.0L377.3 516.9L378.6 518.8L379.9 520.7L382.3 524.2L384.7 527.4L387.0 530.6L389.3 533.7L391.6 536.8L393.9 539.8L396.2 542.6L398.5 545.4L400.9 548.0L403.3 550.5L405.7 552.9L408.3 555.0L411.0 557.1L413.9 559.0L416.9 560.8L419.9 562.5L422.9 564.1L425.9 565.6L428.7 567.1L431.4 568.6L433.9 570.0L436.1 571.3L438.2 572.5L440.1 573.6L442.8 575.1L445.2 576.4L447.3 577.5L449.6 578.7" stroke-opacity="0.054" stroke-width="1.6"/>
<path d="M268.2 435.5L271.0 436.3L273.4 436.8L276.1 437.5L279.2 438.3L282.5 439.3L286.1 440.4L289.9 441.7L293.8 443.2L297.8 445.0L302.0 447.0L304.3 448.1L306.7 449.4L309.1 450.9L311.7 452.4L314.3 454.0L317.0 455.6L319.7 457.3L322.5 459.0L325.2 460.7L327.9 462.4L330.6 464.1L333.1 465.8L335.7 467.4L338.1 469.0L340.4 470.5L342.5 472.0L344.5 473.4L347.9 475.8L350.6 477.7L352.6 479.2L355.2 481.5L357.3 484.5L358.5 486.6L359.7 488.3L361.5 490.8L363.5 493.7L365.7 497.1L368.1 500.7L369.3 502.6L370.5 504.5L371.8 506.5L373.1 508.5L374.3 510.5L375.6 512.5L376.9 514.4L378.2 516.4L379.4 518.3L380.7 520.1L383.1 523.6L385.5 526.8L387.8 530.0L390.1 533.1L392.4 536.2L394.7 539.1L397.0 542.0L399.3 544.7L401.6 547.4L404.0 549.8L406.4 552.1L408.9 554.3L411.6 556.3L414.4 558.1L417.4 559.9L420.4 561.6L423.4 563.2L426.3 564.8L429.1 566.3L431.8 567.8L434.3 569.2L436.5 570.6L438.5 571.8L440.4 573.0L443.1 574.5L445.5 575.8L447.6 577.0L449.8 578.2" stroke-opacity="0.047" stroke-width="1.6"/>
<path d="M268.3 435.0L271.2 435.8L273.5 436.3L276.3 436.9L279.4 437.7L282.8 438.6L286.4 439.7L290.2 441.0L294.2 442.5L298.2 444.2L302.4 446.2L304.8 447.3L307.2 448.6L309.6 450.0L312.2 451.5L314.8 453.1L317.5 454.7L320.3 456.4L323.0 458.1L325.7 459.8L328.4 461.5L331.1 463.2L333.7 464.9L336.2 466.6L338.6 468.2L340.9 469.7L343.1 471.2L345.1 472.5L348.5 474.9L351.2 476.9L353.2 478.4L356.0 480.9L358.1 484.0L359.4 486.0L360.6 487.8L362.3 490.2L364.3 493.2L366.6 496.5L368.9 500.2L370.1 502.1L371.4 504.0L372.6 506.0L373.9 508.0L375.2 509.9L376.5 511.9L377.7 513.9L379.0 515.8L380.3 517.7L381.5 519.5L383.9 523.0L386.3 526.2L388.6 529.4L390.9 532.5L393.2 535.6L395.5 538.5L397.8 541.4L400.0 544.1L402.3 546.7L404.7 549.1L407.1 551.4L409.5 553.5L412.2 555.4L414.9 557.3L417.9 559.0L420.9 560.7L423.8 562.3L426.7 564.0L429.5 565.5L432.2 567.1L434.7 568.5L436.8 569.9L438.9 571.2L440.7 572.4L443.4 573.9L445.8 575.3L447.8 576.5L450.0 577.8" stroke-opacity="0.041" stroke-width="1.6"/>
<path d="M268.5 434.5L271.3 435.2L273.7 435.7L276.5 436.3L279.6 437.1L283.0 437.9L286.6 439.0L290.5 440.2L294.5 441.7L298.6 443.4L302.9 445.4L305.2 446.4L307.7 447.7L310.1 449.1L312.7 450.7L315.4 452.2L318.1 453.9L320.8 455.6L323.5 457.3L326.3 459.0L329.0 460.7L331.6 462.4L334.2 464.1L336.8 465.7L339.2 467.3L341.5 468.9L343.6 470.3L345.7 471.7L349.1 474.1L351.8 476.1L353.9 477.6L356.7 480.2L359.0 483.4L360.2 485.5L361.4 487.2L363.1 489.6L365.2 492.6L367.4 496.0L369.8 499.6L371.0 501.5L372.2 503.5L373.5 505.4L374.7 507.4L376.0 509.4L377.3 511.4L378.6 513.3L379.8 515.3L381.1 517.1L382.3 519.0L384.8 522.4L387.1 525.6L389.4 528.8L391.8 531.9L394.0 535.0L396.3 537.9L398.5 540.7L400.8 543.4L403.1 546.0L405.4 548.4L407.8 550.6L410.2 552.7L412.7 554.6L415.5 556.4L418.4 558.2L421.3 559.8L424.3 561.4L427.1 563.1L429.9 564.7L432.6 566.3L435.0 567.8L437.2 569.2L439.2 570.6L441.1 571.8L443.7 573.4L446.0 574.8L448.0 576.0L450.2 577.3" stroke-opacity="0.034" stroke-width="1.6"/>
<path d="M268.6 434.1L271.5 434.7L273.9 435.2L276.7 435.7L279.8 436.4L283.2 437.3L286.9 438.3L290.8 439.5L294.8 440.9L299.0 442.6L303.3 444.5L305.7 445.6L308.2 446.8L310.7 448.3L313.2 449.8L315.9 451.4L318.6 453.0L321.3 454.7L324.1 456.4L326.8 458.1L329.5 459.9L332.2 461.6L334.8 463.3L337.3 464.9L339.7 466.5L342.0 468.0L344.2 469.5L346.2 470.9L349.7 473.3L352.4 475.3L354.5 476.9L357.5 479.5L359.8 482.9L361.1 484.9L362.2 486.6L363.9 489.0L366.0 492.1L368.2 495.4L370.6 499.1L371.8 501.0L373.1 502.9L374.3 504.9L375.6 506.9L376.9 508.9L378.1 510.8L379.4 512.8L380.7 514.7L381.9 516.6L383.1 518.4L385.6 521.9L387.9 525.1L390.3 528.2L392.6 531.3L394.8 534.4L397.1 537.3L399.3 540.1L401.6 542.8L403.8 545.3L406.1 547.7L408.4 549.9L410.8 551.9L413.3 553.8L416.0 555.6L418.9 557.3L421.8 558.9L424.7 560.6L427.6 562.3L430.3 563.9L433.0 565.5L435.4 567.1L437.6 568.6L439.5 569.9L441.4 571.2L444.0 572.8L446.3 574.3L448.3 575.5L450.4 576.9" stroke-opacity="0.028" stroke-width="1.6"/>
<path d="M268.8 433.6L271.7 434.2L274.0 434.6L276.9 435.1L280.0 435.8L283.5 436.6L287.2 437.6L291.1 438.7L295.2 440.1L299.4 441.8L303.7 443.7L306.2 444.7L308.7 446.0L311.2 447.4L313.7 448.9L316.4 450.5L319.1 452.2L321.8 453.9L324.6 455.6L327.3 457.3L330.0 459.0L332.7 460.7L335.3 462.4L337.9 464.1L340.3 465.7L342.6 467.2L344.8 468.7L346.8 470.1L350.3 472.5L352.9 474.5L355.1 476.1L358.2 478.9L360.6 482.3L361.9 484.4L363.0 486.0L364.8 488.5L366.8 491.5L369.1 494.9L371.4 498.5L372.7 500.5L373.9 502.4L375.2 504.4L376.4 506.3L377.7 508.3L379.0 510.3L380.2 512.2L381.5 514.2L382.8 516.0L384.0 517.8L386.4 521.3L388.7 524.5L391.1 527.6L393.4 530.7L395.6 533.8L397.9 536.7L400.1 539.5L402.3 542.1L404.5 544.6L406.8 547.0L409.1 549.2L411.4 551.1L413.9 553.0L416.5 554.7L419.4 556.4L422.3 558.1L425.2 559.7L428.0 561.4L430.7 563.1L433.3 564.8L435.8 566.4L437.9 567.9L439.9 569.3L441.7 570.6L444.3 572.2L446.5 573.7L448.5 575.0L450.7 576.4" stroke-opacity="0.021" stroke-width="1.6"/>
<path d="M269.0 433.1L271.8 433.7L274.2 434.0L277.0 434.5L280.2 435.1L283.7 435.9L287.4 436.8L291.4 438.0L295.5 439.4L299.8 441.0L304.2 442.9L306.7 443.9L309.2 445.1L311.7 446.6L314.3 448.1L316.9 449.7L319.6 451.3L322.4 453.0L325.1 454.7L327.9 456.4L330.6 458.2L333.3 459.9L335.9 461.6L338.4 463.2L340.8 464.8L343.2 466.4L345.3 467.8L347.4 469.3L350.8 471.7L353.5 473.6L355.8 475.3L359.0 478.2L361.5 481.8L362.7 483.9L363.8 485.5L365.6 487.9L367.7 490.9L369.9 494.3L372.3 498.0L373.5 499.9L374.7 501.9L376.0 503.8L377.3 505.8L378.5 507.8L379.8 509.7L381.1 511.7L382.3 513.6L383.6 515.5L384.8 517.3L387.2 520.7L389.5 523.9L391.9 527.0L394.2 530.1L396.4 533.2L398.6 536.1L400.9 538.8L403.1 541.5L405.3 544.0L407.5 546.3L409.8 548.4L412.0 550.4L414.5 552.2L417.1 553.9L419.9 555.6L422.8 557.2L425.6 558.8L428.4 560.6L431.1 562.3L433.7 564.0L436.2 565.7L438.3 567.2L440.2 568.7L442.0 570.0L444.5 571.7L446.8 573.2L448.8 574.5L450.9 576.0" stroke-opacity="0.015" stroke-width="1.6"/>
</g>
<mask id="rb6" maskUnits="userSpaceOnUse" x="130" y="270" width="630" height="320"><g fill="none" stroke="#fff" stroke-width="22" stroke-linejoin="round"><path d="M390.7 306.6L392.7 309.2L394.4 311.6L395.8 313.9L397.1 316.1L398.2 318.3L399.3 320.5L400.2 322.7L400.9 324.9L401.6 327.1L402.2 329.5L402.7 331.9L403.0 334.6L403.3 337.4L403.4 340.5L403.4 343.8L403.3 347.4L403.0 351.2L402.6 355.1L402.2 359.0L401.7 362.9L401.1 366.7L400.4 370.4L399.8 373.8L399.1 376.9L398.3 380.0L397.4 382.9L396.3 385.9L395.2 388.9L394.1 391.9L393.0 395.0L392.0 398.2L391.1 401.5L390.3 404.8L389.7 408.3L389.3 411.7L388.9 415.2L388.7 418.7L388.4 422.1L388.3 425.4L388.3 428.6"/><path stroke-opacity="0.10" d="M375.8 286.0L377.7 288.6"/><path stroke-opacity="0.10" d="M390.0 448.4L390.3 451.0"/><path stroke-opacity="0.30" d="M377.7 288.6L379.3 291.0L380.9 293.2"/><path stroke-opacity="0.30" d="M389.5 442.3L389.7 445.2L390.0 448.4"/><path stroke-opacity="0.50" d="M380.9 293.2L382.7 295.6"/><path stroke-opacity="0.50" d="M389.2 439.1L389.5 442.3"/><path stroke-opacity="0.70" d="M382.7 295.6L384.6 298.2L386.7 300.9"/><path stroke-opacity="0.70" d="M388.8 434.3L389.0 436.7L389.2 439.1"/><path stroke-opacity="0.90" d="M386.7 300.9L388.8 303.7L390.7 306.6"/><path stroke-opacity="0.90" d="M388.3 428.6L388.5 431.5L388.8 434.3"/></g></mask>
<g mask="url(#rb6)">
<path d="M377.4 284.5L379.5 286.9L381.4 289.2L383.1 291.1L385.1 293.3L387.3 295.7L389.6 298.3L391.9 301.0L394.1 303.8L396.2 306.5L398.1 309.1L399.7 311.6L401.0 314.0L402.3 316.4L403.4 318.7L404.4 321.1L405.2 323.5L406.0 326.0L406.6 328.5L407.1 331.2L407.5 334.1L407.8 337.1L407.9 340.4L407.9 343.9L407.8 347.7L407.5 351.6L407.1 355.5L406.6 359.5L406.1 363.5L405.5 367.4L404.9 371.2L404.2 374.7L403.5 378.0L402.6 381.2L401.6 384.3L400.6 387.4L399.5 390.4L398.4 393.4L397.3 396.4L396.3 399.5L395.4 402.6L394.7 405.7L394.2 408.9L393.7 412.3L393.4 415.6L393.1 419.0L392.9 422.4L392.8 425.6L392.7 428.7L392.7 431.7L392.6 434.4L392.6 436.9L392.6 439.2L392.5 442.4L392.5 445.2L392.5 448.5L392.6 451.1" stroke-opacity="0.090" stroke-width="2.1"/>
<path d="M376.9 285.0L378.9 287.5L380.7 289.8L382.3 291.8L384.3 294.1L386.4 296.5L388.6 299.2L390.8 301.9L393.0 304.7L395.0 307.4L396.9 309.9L398.4 312.3L399.7 314.7L400.9 317.0L402.0 319.3L403.0 321.6L403.8 324.0L404.5 326.3L405.1 328.8L405.6 331.5L406.0 334.2L406.3 337.2L406.4 340.4L406.4 343.9L406.3 347.6L406.0 351.4L405.6 355.4L405.2 359.4L404.6 363.3L404.0 367.2L403.4 370.9L402.8 374.4L402.0 377.7L401.2 380.8L400.2 383.9L399.2 386.9L398.1 389.9L397.0 392.9L395.9 396.0L394.9 399.0L394.0 402.2L393.3 405.4L392.7 408.7L392.3 412.1L391.9 415.5L391.6 418.9L391.4 422.3L391.3 425.5L391.2 428.7L391.3 431.7L391.4 434.4L391.4 436.9L391.5 439.2L391.5 442.4L391.6 445.2L391.7 448.4L391.8 451.0" stroke-opacity="0.079" stroke-width="2.1"/>
<path d="M376.3 285.5L378.3 288.1L380.0 290.4L381.6 292.5L383.5 294.8L385.5 297.4L387.7 300.1L389.8 302.8L391.9 305.6L393.9 308.3L395.7 310.8L397.1 313.1L398.4 315.4L399.6 317.7L400.6 319.9L401.6 322.2L402.4 324.4L403.1 326.7L403.7 329.2L404.2 331.7L404.5 334.4L404.8 337.3L404.9 340.4L404.9 343.9L404.8 347.5L404.5 351.3L404.1 355.2L403.7 359.2L403.1 363.1L402.5 366.9L401.9 370.7L401.3 374.1L400.6 377.3L399.7 380.4L398.8 383.4L397.7 386.4L396.7 389.4L395.5 392.4L394.5 395.5L393.4 398.6L392.5 401.8L391.8 405.1L391.2 408.5L390.8 411.9L390.4 415.4L390.1 418.8L389.9 422.2L389.8 425.5L389.8 428.6L389.9 431.6L390.1 434.3L390.2 436.8L390.4 439.1L390.5 442.3L390.7 445.2L390.9 448.4L391.1 451.0" stroke-opacity="0.069" stroke-width="2.1"/>
<path d="M375.8 286.0L377.7 288.6L379.3 291.0L380.9 293.2L382.7 295.6L384.6 298.2L386.7 300.9L388.8 303.7L390.7 306.6L392.7 309.2L394.4 311.6L395.8 313.9L397.1 316.1L398.2 318.3L399.3 320.5L400.2 322.7L400.9 324.9L401.6 327.1L402.2 329.5L402.7 331.9L403.0 334.6L403.3 337.4L403.4 340.5L403.4 343.8L403.3 347.4L403.0 351.2L402.6 355.1L402.2 359.0L401.7 362.9L401.1 366.7L400.4 370.4L399.8 373.8L399.1 376.9L398.3 380.0L397.4 382.9L396.3 385.9L395.2 388.9L394.1 391.9L393.0 395.0L392.0 398.2L391.1 401.5L390.3 404.8L389.7 408.3L389.3 411.7L388.9 415.2L388.7 418.7L388.4 422.1L388.3 425.4L388.3 428.6L388.5 431.5L388.8 434.3L389.0 436.7L389.2 439.1L389.5 442.3L389.7 445.2L390.0 448.4L390.3 451.0" stroke-opacity="0.058" stroke-width="2.1"/>
<path d="M375.2 286.5L377.0 289.2L378.6 291.7L380.1 293.9L381.9 296.4L383.8 299.0L385.8 301.8L387.7 304.7L389.6 307.5L391.5 310.1L393.2 312.5L394.6 314.6L395.8 316.8L396.9 319.0L397.9 321.1L398.8 323.2L399.5 325.4L400.2 327.5L400.7 329.8L401.2 332.2L401.6 334.8L401.8 337.5L401.9 340.5L401.9 343.8L401.8 347.3L401.5 351.1L401.2 354.9L400.7 358.8L400.2 362.7L399.6 366.5L399.0 370.1L398.3 373.5L397.7 376.6L396.9 379.5L395.9 382.4L394.9 385.4L393.8 388.4L392.7 391.4L391.6 394.5L390.6 397.7L389.6 401.1L388.8 404.6L388.2 408.1L387.8 411.6L387.4 415.1L387.2 418.6L386.9 422.0L386.8 425.3L386.8 428.5L387.2 431.5L387.5 434.2L387.8 436.7L388.1 439.0L388.4 442.2L388.8 445.1L389.2 448.4L389.6 451.0" stroke-opacity="0.047" stroke-width="2.1"/>
<path d="M374.7 287.0L376.4 289.7L378.0 292.3L379.4 294.6L381.1 297.1L382.9 299.8L384.8 302.7L386.7 305.6L388.5 308.4L390.3 311.0L391.9 313.3L393.3 315.4L394.4 317.5L395.5 319.7L396.5 321.7L397.4 323.8L398.1 325.8L398.7 327.9L399.3 330.1L399.7 332.4L400.1 334.9L400.3 337.6L400.5 340.5L400.4 343.8L400.3 347.2L400.0 350.9L399.7 354.7L399.2 358.6L398.7 362.5L398.1 366.2L397.5 369.9L396.9 373.2L396.2 376.2L395.4 379.1L394.5 382.0L393.5 384.9L392.4 387.8L391.3 390.9L390.2 394.0L389.1 397.3L388.2 400.7L387.4 404.3L386.8 407.8L386.3 411.4L385.9 415.0L385.7 418.5L385.5 422.0L385.3 425.3L385.4 428.5L385.8 431.4L386.2 434.1L386.6 436.6L387.0 438.9L387.4 442.2L387.9 445.1L388.3 448.4L388.8 451.0" stroke-opacity="0.036" stroke-width="2.1"/>
<path d="M374.1 287.5L375.8 290.3L377.3 292.9L378.7 295.3L380.3 297.9L382.0 300.6L383.9 303.5L385.7 306.5L387.4 309.4L389.1 311.9L390.7 314.1L392.0 316.2L393.1 318.2L394.2 320.3L395.1 322.4L396.0 324.3L396.7 326.3L397.3 328.3L397.8 330.4L398.2 332.7L398.6 335.1L398.8 337.7L399.0 340.6L398.9 343.7L398.8 347.2L398.5 350.8L398.2 354.6L397.7 358.4L397.2 362.2L396.6 366.0L396.0 369.6L395.4 372.9L394.8 375.9L394.0 378.7L393.1 381.5L392.1 384.4L391.0 387.3L389.9 390.4L388.8 393.5L387.7 396.9L386.7 400.4L385.9 404.0L385.3 407.6L384.8 411.2L384.4 414.8L384.2 418.4L384.0 421.9L383.8 425.2L383.9 428.4L384.4 431.4L384.9 434.1L385.4 436.5L385.9 438.9L386.4 442.2L386.9 445.1L387.5 448.4L388.1 451.0" stroke-opacity="0.026" stroke-width="2.1"/>
<path d="M373.6 288.0L375.2 290.9L376.6 293.5L377.9 296.0L379.5 298.6L381.2 301.5L382.9 304.4L384.6 307.4L386.2 310.3L387.9 312.9L389.5 315.0L390.7 316.9L391.8 318.9L392.8 321.0L393.8 323.0L394.6 324.9L395.3 326.8L395.8 328.7L396.3 330.8L396.8 332.9L397.1 335.3L397.3 337.8L397.5 340.6L397.4 343.7L397.3 347.1L397.0 350.7L396.7 354.4L396.2 358.2L395.7 362.0L395.1 365.8L394.5 369.4L393.9 372.6L393.3 375.5L392.6 378.3L391.7 381.0L390.7 383.9L389.6 386.8L388.5 389.9L387.4 393.1L386.3 396.4L385.3 400.0L384.4 403.7L383.8 407.4L383.3 411.1L382.9 414.7L382.7 418.3L382.5 421.8L382.3 425.2L382.5 428.3L383.1 431.3L383.7 434.0L384.2 436.5L384.8 438.8L385.4 442.1L386.0 445.1L386.7 448.4L387.3 451.0" stroke-opacity="0.015" stroke-width="2.1"/>
</g>
<mask id="rb7" maskUnits="userSpaceOnUse" x="130" y="270" width="630" height="320"><g fill="none" stroke="#fff" stroke-width="27" stroke-linejoin="round"><path d="M405.8 466.8L406.7 468.6L407.6 470.4L408.6 472.3L409.6 474.2L410.7 476.1L411.8 477.9L413.0 479.8L414.2 481.6L415.5 483.4L416.9 485.2L418.3 486.9L419.8 488.6L421.3 490.3L423.0 492.0L424.7 493.6L426.5 495.3L428.3 496.9L430.3 498.5L432.2 500.1L434.3 501.6L436.4 503.1L438.6 504.6L440.7 506.0L442.9 507.3L445.1 508.5L447.5 509.8L450.0 511.1L452.6 512.4L455.5 513.8L458.5 515.3L461.8 517.0L465.3 518.7L469.0 520.5L472.8 522.4L474.8 523.3L476.8 524.3L478.9 525.3L481.0 526.3L483.2 527.3L485.4 528.3L487.6 529.4L489.9 530.5L492.2 531.6L494.6 532.8L497.0 533.9L499.4 535.1L501.9 536.3L504.5 537.6L507.0 538.8L509.7 540.2L512.6 541.6L515.6 543.1L518.8 544.7L522.1 546.3L525.4 548.0L528.8 549.7L532.3 551.5L535.7 553.2L539.1 555.1"/><path stroke-opacity="0.10" d="M397.8 437.4L397.8 440.9L397.8 443.3"/><path stroke-opacity="0.10" d="M566.7 572.7L569.0 574.2L571.5 576.0"/><path stroke-opacity="0.30" d="M397.8 443.3L398.0 445.8L398.2 448.3"/><path stroke-opacity="0.30" d="M561.5 569.3L563.4 570.7L566.7 572.7"/><path stroke-opacity="0.50" d="M398.2 448.3L398.6 450.6L399.3 452.8L400.2 455.3"/><path stroke-opacity="0.50" d="M554.3 564.5L556.9 566.2L559.3 567.8L561.5 569.3"/><path stroke-opacity="0.70" d="M400.2 455.3L401.2 457.9L402.3 460.6"/><path stroke-opacity="0.70" d="M548.5 560.9L551.5 562.8L554.3 564.5"/><path stroke-opacity="0.90" d="M402.3 460.6L403.7 463.3L404.7 465.1L405.8 466.8"/><path stroke-opacity="0.90" d="M539.1 555.1L542.3 557.0L545.5 559.0L548.5 560.9"/></g></mask>
<g mask="url(#rb7)">
<path d="M394.6 437.1L394.3 440.6L394.1 443.0L394.0 445.6L394.0 448.3L394.2 451.1L394.6 453.7L395.3 456.5L396.1 459.3L397.1 462.3L398.3 465.3L399.1 467.3L400.0 469.3L401.0 471.3L401.9 473.3L403.0 475.3L404.0 477.3L405.2 479.3L406.4 481.3L407.7 483.3L409.0 485.3L410.4 487.2L411.9 489.1L413.4 491.0L415.0 492.9L416.7 494.7L418.5 496.5L420.3 498.3L422.2 500.0L424.2 501.8L426.2 503.5L428.3 505.1L430.5 506.8L432.7 508.4L435.1 509.9L437.4 511.4L439.7 512.8L442.0 514.1L444.5 515.5L447.1 516.8L449.8 518.1L452.6 519.6L455.7 521.1L459.0 522.7L462.5 524.5L466.2 526.3L470.0 528.1L472.0 529.1L474.1 530.1L476.1 531.1L478.2 532.1L480.4 533.1L482.6 534.1L484.8 535.2L487.1 536.3L489.4 537.4L491.8 538.5L494.2 539.7L496.6 540.9L499.1 542.1L501.7 543.3L504.2 544.6L506.9 545.9L509.8 547.3L512.8 548.8L515.9 550.4L519.2 552.0L522.5 553.7L526.0 555.4L529.4 557.2L532.8 558.9L536.2 560.7L539.6 562.4L542.9 564.2L546.0 565.8L549.1 567.5L552.0 569.0L554.7 570.5L557.3 571.8L559.6 573.1L561.6 574.2L565.0 576.0L567.4 577.3L570.0 578.8" stroke-opacity="0.080" stroke-width="2.2"/>
<path d="M395.4 437.2L395.2 440.7L395.1 443.1L395.0 445.6L395.0 448.3L395.3 451.0L395.8 453.5L396.5 456.2L397.4 459.0L398.4 461.9L399.6 464.8L400.5 466.8L401.5 468.7L402.4 470.6L403.4 472.6L404.4 474.5L405.4 476.5L406.6 478.5L407.8 480.5L409.0 482.4L410.3 484.4L411.7 486.3L413.1 488.1L414.6 490.0L416.2 491.8L417.9 493.6L419.6 495.4L421.4 497.1L423.3 498.8L425.2 500.5L427.2 502.2L429.3 503.9L431.4 505.5L433.7 507.1L435.9 508.6L438.2 510.1L440.5 511.4L442.8 512.7L445.2 514.0L447.8 515.3L450.5 516.7L453.3 518.1L456.4 519.6L459.7 521.3L463.2 523.0L466.9 524.8L470.7 526.7L472.7 527.7L474.7 528.6L476.8 529.6L478.9 530.6L481.1 531.6L483.3 532.7L485.5 533.8L487.8 534.8L490.1 535.9L492.5 537.1L494.9 538.2L497.3 539.4L499.8 540.6L502.4 541.9L504.9 543.1L507.6 544.5L510.5 545.9L513.5 547.4L516.6 549.0L519.9 550.6L523.3 552.3L526.7 554.0L530.1 555.7L533.6 557.5L536.9 559.3L540.3 561.1L543.5 562.9L546.7 564.6L549.7 566.3L552.6 567.9L555.3 569.4L557.8 570.8L560.1 572.1L562.1 573.3L565.4 575.1L567.8 576.5L570.4 578.1" stroke-opacity="0.073" stroke-width="2.2"/>
<path d="M396.2 437.2L396.0 440.8L396.0 443.1L396.0 445.7L396.1 448.3L396.4 450.8L397.0 453.3L397.7 455.9L398.7 458.6L399.7 461.4L401.0 464.3L401.9 466.2L402.9 468.1L403.9 469.9L404.8 471.8L405.8 473.8L406.8 475.7L407.9 477.7L409.1 479.6L410.3 481.5L411.6 483.4L413.0 485.3L414.4 487.2L415.8 489.0L417.4 490.7L419.0 492.5L420.7 494.2L422.5 495.9L424.3 497.6L426.3 499.3L428.2 501.0L430.3 502.6L432.4 504.2L434.6 505.8L436.8 507.3L439.0 508.7L441.3 510.0L443.6 511.3L446.0 512.6L448.5 513.9L451.2 515.3L454.1 516.7L457.1 518.2L460.4 519.8L463.9 521.6L467.6 523.4L471.4 525.3L473.4 526.2L475.4 527.2L477.5 528.2L479.6 529.2L481.8 530.2L484.0 531.2L486.2 532.3L488.5 533.4L490.8 534.5L493.2 535.6L495.6 536.8L498.0 538.0L500.5 539.2L503.1 540.4L505.6 541.7L508.3 543.0L511.2 544.5L514.2 546.0L517.4 547.5L520.6 549.2L524.0 550.9L527.4 552.6L530.8 554.3L534.3 556.0L537.7 557.9L540.9 559.7L544.2 561.6L547.3 563.4L550.3 565.1L553.1 566.8L555.8 568.3L558.3 569.8L560.5 571.2L562.5 572.4L565.8 574.3L568.2 575.8L570.8 577.4" stroke-opacity="0.066" stroke-width="2.2"/>
<path d="M397.0 437.3L396.9 440.8L396.9 443.2L397.0 445.7L397.2 448.3L397.5 450.7L398.1 453.1L398.9 455.6L399.9 458.3L401.0 461.0L402.3 463.8L403.3 465.6L404.3 467.4L405.3 469.3L406.2 471.1L407.2 473.0L408.2 475.0L409.3 476.9L410.5 478.8L411.7 480.7L412.9 482.5L414.3 484.4L415.6 486.2L417.1 487.9L418.6 489.6L420.2 491.4L421.9 493.1L423.6 494.8L425.4 496.5L427.3 498.1L429.2 499.7L431.3 501.3L433.3 502.9L435.5 504.4L437.7 505.9L439.9 507.3L442.1 508.6L444.4 509.9L446.7 511.2L449.2 512.5L451.9 513.8L454.8 515.3L457.8 516.8L461.1 518.4L464.6 520.2L468.3 522.0L472.1 523.8L474.1 524.8L476.1 525.7L478.2 526.7L480.3 527.7L482.5 528.8L484.7 529.8L486.9 530.9L489.2 531.9L491.5 533.1L493.9 534.2L496.3 535.4L498.7 536.5L501.2 537.8L503.8 539.0L506.3 540.3L509.0 541.6L511.9 543.0L514.9 544.5L518.1 546.1L521.4 547.8L524.7 549.4L528.1 551.2L531.5 552.9L535.0 554.6L538.4 556.5L541.6 558.4L544.8 560.3L547.9 562.1L550.9 563.9L553.7 565.7L556.4 567.3L558.8 568.8L561.0 570.2L563.0 571.5L566.2 573.5L568.6 575.0L571.1 576.7" stroke-opacity="0.058" stroke-width="2.2"/>
<path d="M397.8 437.4L397.8 440.9L397.8 443.3L398.0 445.8L398.2 448.3L398.6 450.6L399.3 452.8L400.2 455.3L401.2 457.9L402.3 460.6L403.7 463.3L404.7 465.1L405.8 466.8L406.7 468.6L407.6 470.4L408.6 472.3L409.6 474.2L410.7 476.1L411.8 477.9L413.0 479.8L414.2 481.6L415.5 483.4L416.9 485.2L418.3 486.9L419.8 488.6L421.3 490.3L423.0 492.0L424.7 493.6L426.5 495.3L428.3 496.9L430.3 498.5L432.2 500.1L434.3 501.6L436.4 503.1L438.6 504.6L440.7 506.0L442.9 507.3L445.1 508.5L447.5 509.8L450.0 511.1L452.6 512.4L455.5 513.8L458.5 515.3L461.8 517.0L465.3 518.7L469.0 520.5L472.8 522.4L474.8 523.3L476.8 524.3L478.9 525.3L481.0 526.3L483.2 527.3L485.4 528.3L487.6 529.4L489.9 530.5L492.2 531.6L494.6 532.8L497.0 533.9L499.4 535.1L501.9 536.3L504.5 537.6L507.0 538.8L509.7 540.2L512.6 541.6L515.6 543.1L518.8 544.7L522.1 546.3L525.4 548.0L528.8 549.7L532.3 551.5L535.7 553.2L539.1 555.1L542.3 557.0L545.5 559.0L548.5 560.9L551.5 562.8L554.3 564.5L556.9 566.2L559.3 567.8L561.5 569.3L563.4 570.7L566.7 572.7L569.0 574.2L571.5 576.0" stroke-opacity="0.051" stroke-width="2.2"/>
<path d="M398.6 437.5L398.6 441.0L398.8 443.4L399.0 445.8L399.3 448.3L399.8 450.5L400.5 452.6L401.4 455.0L402.4 457.5L403.7 460.1L405.0 462.8L406.1 464.5L407.2 466.2L408.2 467.9L409.1 469.7L410.0 471.5L411.0 473.4L412.1 475.3L413.2 477.1L414.4 478.9L415.6 480.7L416.8 482.5L418.1 484.2L419.5 485.8L421.0 487.5L422.5 489.2L424.1 490.8L425.8 492.5L427.6 494.1L429.4 495.7L431.3 497.3L433.2 498.8L435.2 500.3L437.3 501.8L439.5 503.3L441.6 504.6L443.7 505.9L445.9 507.1L448.2 508.4L450.7 509.6L453.3 511.0L456.2 512.4L459.3 513.9L462.6 515.5L466.1 517.3L469.7 519.1L473.5 520.9L475.5 521.9L477.5 522.8L479.6 523.8L481.7 524.8L483.8 525.9L486.0 526.9L488.3 528.0L490.6 529.1L492.9 530.2L495.3 531.3L497.7 532.5L500.1 533.7L502.6 534.9L505.2 536.1L507.8 537.4L510.4 538.7L513.3 540.2L516.4 541.7L519.5 543.3L522.8 544.9L526.1 546.6L529.5 548.3L533.0 550.0L536.4 551.8L539.8 553.6L543.0 555.7L546.1 557.7L549.2 559.7L552.1 561.6L554.8 563.4L557.4 565.2L559.8 566.8L562.0 568.4L563.9 569.8L567.1 571.8L569.4 573.5L571.9 575.3" stroke-opacity="0.044" stroke-width="2.2"/>
<path d="M399.4 437.5L399.5 441.1L399.7 443.5L399.9 445.9L400.3 448.3L400.9 450.4L401.6 452.4L402.6 454.7L403.7 457.2L405.0 459.7L406.4 462.3L407.5 463.9L408.6 465.5L409.6 467.2L410.5 469.0L411.4 470.8L412.4 472.6L413.5 474.4L414.6 476.2L415.7 478.0L416.9 479.8L418.1 481.5L419.4 483.2L420.7 484.8L422.1 486.4L423.7 488.1L425.3 489.7L426.9 491.3L428.6 492.9L430.4 494.5L432.3 496.0L434.2 497.5L436.2 499.0L438.2 500.5L440.3 501.9L442.4 503.2L444.5 504.5L446.7 505.7L449.0 507.0L451.4 508.2L454.1 509.5L456.9 510.9L460.0 512.5L463.3 514.1L466.8 515.9L470.4 517.6L474.2 519.5L476.2 520.4L478.2 521.4L480.3 522.4L482.4 523.4L484.5 524.4L486.7 525.5L489.0 526.5L491.3 527.6L493.6 528.7L496.0 529.9L498.4 531.0L500.8 532.2L503.3 533.4L505.9 534.7L508.5 536.0L511.2 537.3L514.0 538.7L517.1 540.2L520.2 541.8L523.5 543.5L526.9 545.2L530.3 546.9L533.7 548.6L537.2 550.3L540.5 552.2L543.7 554.4L546.8 556.4L549.8 558.5L552.7 560.4L555.4 562.3L558.0 564.1L560.3 565.8L562.5 567.4L564.4 568.9L567.5 571.0L569.8 572.7L572.3 574.6" stroke-opacity="0.037" stroke-width="2.2"/>
<path d="M400.2 437.6L400.3 441.2L400.6 443.6L400.9 445.9L401.4 448.3L402.0 450.3L402.8 452.2L403.8 454.4L405.0 456.8L406.3 459.3L407.7 461.8L408.9 463.4L410.1 464.9L411.1 466.5L411.9 468.2L412.9 470.0L413.8 471.8L414.9 473.6L415.9 475.4L417.0 477.2L418.2 478.9L419.4 480.6L420.6 482.2L421.9 483.8L423.3 485.4L424.8 487.0L426.4 488.6L428.0 490.1L429.7 491.7L431.5 493.2L433.3 494.8L435.2 496.3L437.1 497.7L439.2 499.2L441.2 500.6L443.2 501.9L445.3 503.1L447.4 504.3L449.7 505.5L452.1 506.8L454.8 508.1L457.6 509.5L460.7 511.0L464.0 512.7L467.5 514.4L471.1 516.2L474.9 518.1L476.9 519.0L478.9 520.0L480.9 520.9L483.1 521.9L485.2 523.0L487.4 524.0L489.7 525.1L491.9 526.2L494.3 527.3L496.7 528.4L499.1 529.6L501.5 530.8L504.0 532.0L506.6 533.3L509.2 534.5L511.9 535.9L514.7 537.3L517.8 538.8L520.9 540.4L524.2 542.0L527.6 543.7L531.0 545.4L534.4 547.2L537.9 548.9L541.2 550.8L544.3 553.0L547.4 555.1L550.4 557.2L553.3 559.3L556.0 561.2L558.5 563.1L560.8 564.8L562.9 566.5L564.8 568.0L567.9 570.2L570.2 571.9L572.7 573.9" stroke-opacity="0.029" stroke-width="2.2"/>
<path d="M401.0 437.7L401.2 441.3L401.5 443.6L401.9 446.0L402.4 448.3L403.1 450.2L404.0 452.0L405.0 454.1L406.2 456.4L407.6 458.8L409.1 461.3L410.3 462.8L411.5 464.3L412.5 465.8L413.4 467.5L414.3 469.3L415.2 471.1L416.2 472.8L417.3 474.6L418.4 476.3L419.5 478.0L420.7 479.6L421.9 481.2L423.2 482.7L424.5 484.3L426.0 485.9L427.5 487.4L429.1 489.0L430.8 490.5L432.5 492.0L434.3 493.5L436.2 495.0L438.1 496.5L440.1 497.9L442.1 499.3L444.1 500.5L446.1 501.7L448.2 502.9L450.5 504.1L452.9 505.4L455.5 506.7L458.3 508.1L461.4 509.6L464.7 511.2L468.2 513.0L471.8 514.8L475.6 516.6L477.6 517.6L479.6 518.5L481.6 519.5L483.7 520.5L485.9 521.5L488.1 522.6L490.3 523.6L492.6 524.7L495.0 525.8L497.4 527.0L499.8 528.2L502.2 529.3L504.7 530.6L507.3 531.8L509.9 533.1L512.6 534.4L515.5 535.9L518.5 537.4L521.7 539.0L524.9 540.6L528.3 542.3L531.7 544.0L535.1 545.7L538.6 547.5L541.9 549.4L545.0 551.7L548.1 553.9L551.0 556.0L553.9 558.1L556.5 560.1L559.0 562.0L561.3 563.8L563.4 565.5L565.3 567.1L568.4 569.4L570.6 571.2L573.0 573.2" stroke-opacity="0.022" stroke-width="2.2"/>
<path d="M401.8 437.8L402.1 441.4L402.5 443.7L402.9 446.0L403.5 448.2L404.2 450.1L405.1 451.8L406.2 453.8L407.5 456.1L408.9 458.4L410.4 460.8L411.7 462.2L413.0 463.6L414.0 465.1L414.8 466.8L415.7 468.5L416.6 470.3L417.6 472.0L418.6 473.7L419.7 475.4L420.8 477.0L422.0 478.6L423.2 480.2L424.4 481.7L425.7 483.2L427.1 484.8L428.6 486.3L430.2 487.8L431.8 489.3L433.5 490.8L435.3 492.3L437.1 493.7L439.0 495.2L441.0 496.6L443.0 497.9L444.9 499.2L446.9 500.3L449.0 501.5L451.2 502.7L453.6 503.9L456.2 505.2L459.0 506.6L462.1 508.2L465.4 509.8L468.9 511.6L472.5 513.3L476.3 515.2L478.2 516.1L480.3 517.1L482.3 518.1L484.4 519.1L486.6 520.1L488.8 521.1L491.0 522.2L493.3 523.3L495.7 524.4L498.0 525.5L500.5 526.7L502.9 527.9L505.4 529.1L508.0 530.4L510.6 531.7L513.3 533.0L516.2 534.4L519.2 535.9L522.4 537.5L525.7 539.2L529.0 540.9L532.4 542.6L535.9 544.3L539.3 546.1L542.6 548.0L545.7 550.3L548.7 552.6L551.6 554.8L554.4 556.9L557.1 559.0L559.6 561.0L561.9 562.8L563.9 564.6L565.7 566.2L568.8 568.5L571.0 570.4L573.4 572.4" stroke-opacity="0.015" stroke-width="2.2"/>
</g>
<mask id="rb8" maskUnits="userSpaceOnUse" x="130" y="270" width="630" height="320"><g fill="none" stroke="#fff" stroke-width="19" stroke-linejoin="round"><path d="M180.9 541.4L183.8 540.8L186.7 540.2L189.7 539.5L192.7 538.9L195.7 538.2L198.9 537.6L202.1 536.9L205.5 536.2L209.1 535.5L212.6 534.7L216.3 534.0L220.0 533.2L223.8 532.4L227.6 531.6L231.4 530.8L235.3 529.9L239.1 529.1L242.9 528.2L246.7 527.2L250.4 526.3L254.0 525.3L257.6 524.3L261.1 523.2L264.5 522.2L267.9 521.0L271.2 519.9L274.5 518.7L277.8 517.5L281.1 516.2L284.3 515.0L287.5 513.7L290.7 512.3L293.9 511.0L297.0 509.6L300.0 508.2L303.0 506.8L306.0 505.4L308.9 504.0L311.8 502.6L314.5 501.2L317.2 499.8L319.9 498.3L322.4 496.9L324.9 495.5L327.3 494.1L329.6 492.7L331.8 491.3L334.0 489.9L336.1 488.5L338.2 487.1L340.2 485.7L342.1 484.3L343.9 482.9L345.8 481.4L347.6 479.9L350.9 477.0L354.2 474.0L357.3 470.9L360.4 467.7L363.4 464.2L366.2 460.5L367.6 458.5L368.9 456.5L370.2 454.5L371.4 452.5L372.6 450.5"/><path stroke-opacity="0.10" d="M140.9 547.3L143.6 546.4L145.9 546.1"/><path stroke-opacity="0.10" d="M388.1 418.0L389.5 415.1L390.7 412.8"/><path stroke-opacity="0.30" d="M145.9 546.1L149.1 545.6L152.9 545.1L157.1 544.4"/><path stroke-opacity="0.30" d="M384.6 425.1L385.7 422.8L386.7 420.7L388.1 418.0"/><path stroke-opacity="0.50" d="M157.1 544.4L159.4 544.2L161.8 543.9L164.3 543.6"/><path stroke-opacity="0.50" d="M380.5 433.2L382.0 430.2L383.3 427.5L384.6 425.1"/><path stroke-opacity="0.70" d="M164.3 543.6L166.9 543.3L169.6 542.9L172.3 542.6"/><path stroke-opacity="0.70" d="M375.4 444.2L377.3 440.3L379.0 436.6L380.5 433.2"/><path stroke-opacity="0.90" d="M172.3 542.6L175.1 542.2L178.0 541.8L180.9 541.4"/><path stroke-opacity="0.90" d="M372.6 450.5L373.6 448.4L374.5 446.3L375.4 444.2"/></g></mask>
<g mask="url(#rb8)">
<path d="M140.2 545.5L143.0 544.4L145.5 543.9L148.7 543.3L152.4 542.6L156.6 541.8L158.9 541.4L161.3 541.0L163.7 540.5L166.3 540.1L168.9 539.6L171.6 539.1L174.4 538.6L177.2 538.0L180.1 537.5L183.0 536.9L185.9 536.3L188.8 535.6L191.8 535.0L194.9 534.3L198.0 533.6L201.3 533.0L204.7 532.3L208.3 531.5L211.8 530.8L215.5 530.1L219.2 529.3L223.0 528.5L226.8 527.7L230.6 526.9L234.4 526.0L238.2 525.2L241.9 524.3L245.7 523.4L249.4 522.4L253.0 521.4L256.5 520.4L260.0 519.4L263.3 518.4L266.6 517.3L269.9 516.1L273.1 515.0L276.4 513.7L279.6 512.5L282.8 511.2L286.0 510.0L289.2 508.6L292.3 507.3L295.3 506.0L298.4 504.6L301.3 503.2L304.3 501.8L307.1 500.4L309.9 499.0L312.7 497.6L315.4 496.2L318.0 494.8L320.5 493.4L322.9 492.1L325.2 490.7L327.5 489.3L329.7 488.0L331.8 486.6L333.9 485.2L335.9 483.9L337.8 482.5L339.7 481.1L341.5 479.7L343.3 478.3L345.0 476.9L348.3 474.0L351.4 471.1L354.5 468.1L357.4 465.0L360.3 461.7L363.0 458.1L364.3 456.3L365.6 454.4L366.8 452.4L368.0 450.5L369.1 448.5L370.2 446.5L371.3 444.5L372.3 442.6L374.2 438.7L376.0 435.1L377.8 431.7L379.4 428.7L380.9 426.1L382.2 423.7L383.5 421.5L384.6 419.5L386.1 416.9L387.7 414.0L388.9 411.8" stroke-opacity="0.080" stroke-width="1.6"/>
<path d="M140.4 545.9L143.1 544.9L145.6 544.4L148.8 543.9L152.5 543.2L156.7 542.5L159.0 542.1L161.4 541.7L163.9 541.3L166.4 540.9L169.1 540.4L171.8 539.9L174.6 539.5L177.4 539.0L180.3 538.5L183.2 537.9L186.1 537.2L189.1 536.6L192.0 536.0L195.1 535.3L198.2 534.6L201.5 533.9L204.9 533.2L208.5 532.5L212.0 531.8L215.7 531.0L219.4 530.3L223.2 529.5L227.0 528.7L230.8 527.9L234.6 527.0L238.4 526.1L242.2 525.3L245.9 524.3L249.6 523.4L253.2 522.4L256.8 521.4L260.3 520.4L263.6 519.3L266.9 518.2L270.2 517.1L273.5 515.9L276.7 514.7L280.0 513.4L283.2 512.2L286.4 510.9L289.5 509.6L292.7 508.2L295.7 506.9L298.8 505.5L301.8 504.1L304.7 502.7L307.6 501.3L310.4 499.9L313.1 498.5L315.8 497.1L318.4 495.7L321.0 494.3L323.4 492.9L325.8 491.6L328.0 490.2L330.2 488.8L332.4 487.4L334.4 486.1L336.4 484.7L338.4 483.3L340.3 481.9L342.1 480.5L343.9 479.1L345.6 477.7L348.9 474.8L352.1 471.8L355.2 468.8L358.1 465.6L361.1 462.3L363.8 458.7L365.1 456.8L366.4 454.9L367.6 453.0L368.8 451.0L370.0 449.0L371.0 447.0L372.1 445.0L373.1 443.0L375.0 439.1L376.8 435.5L378.5 432.1L380.0 429.1L381.5 426.5L382.8 424.0L384.0 421.8L385.1 419.8L386.6 417.2L388.2 414.3L389.4 412.1" stroke-opacity="0.073" stroke-width="1.6"/>
<path d="M140.6 546.4L143.3 545.4L145.7 545.0L148.9 544.5L152.6 543.8L156.9 543.1L159.2 542.8L161.6 542.4L164.0 542.1L166.6 541.7L169.3 541.3L172.0 540.8L174.7 540.4L177.6 539.9L180.5 539.4L183.4 538.8L186.3 538.2L189.3 537.6L192.2 536.9L195.3 536.3L198.4 535.6L201.7 534.9L205.1 534.2L208.7 533.5L212.2 532.8L215.9 532.0L219.6 531.3L223.4 530.5L227.2 529.7L231.0 528.8L234.8 528.0L238.6 527.1L242.4 526.2L246.2 525.3L249.9 524.3L253.5 523.4L257.1 522.4L260.6 521.3L263.9 520.3L267.2 519.1L270.5 518.0L273.8 516.8L277.1 515.6L280.3 514.4L283.6 513.1L286.8 511.8L289.9 510.5L293.1 509.1L296.2 507.8L299.2 506.4L302.2 505.0L305.1 503.6L308.0 502.2L310.8 500.8L313.6 499.4L316.3 498.0L318.9 496.6L321.4 495.2L323.9 493.8L326.3 492.4L328.6 491.0L330.8 489.7L332.9 488.3L335.0 486.9L337.0 485.5L339.0 484.1L340.9 482.7L342.7 481.3L344.5 479.9L346.3 478.4L349.6 475.5L352.8 472.5L355.9 469.5L358.9 466.3L361.8 463.0L364.6 459.3L366.0 457.4L367.3 455.5L368.5 453.5L369.7 451.5L370.9 449.5L371.9 447.4L372.9 445.4L373.8 443.4L375.7 439.5L377.5 435.9L379.1 432.5L380.7 429.5L382.1 426.8L383.4 424.4L384.6 422.2L385.7 420.1L387.1 417.5L388.6 414.6L389.8 412.3" stroke-opacity="0.066" stroke-width="1.6"/>
<path d="M140.8 546.9L143.5 545.9L145.8 545.5L149.0 545.1L152.8 544.5L157.0 543.8L159.3 543.5L161.7 543.2L164.2 542.8L166.8 542.5L169.4 542.1L172.1 541.7L174.9 541.3L177.8 540.9L180.7 540.4L183.6 539.8L186.5 539.2L189.5 538.6L192.5 537.9L195.5 537.3L198.6 536.6L201.9 535.9L205.3 535.2L208.9 534.5L212.4 533.8L216.1 533.0L219.8 532.2L223.6 531.5L227.4 530.6L231.2 529.8L235.0 529.0L238.9 528.1L242.7 527.2L246.4 526.3L250.1 525.3L253.8 524.3L257.4 523.3L260.8 522.3L264.2 521.2L267.6 520.1L270.9 519.0L274.2 517.8L277.4 516.6L280.7 515.3L283.9 514.0L287.1 512.7L290.3 511.4L293.5 510.1L296.6 508.7L299.6 507.3L302.6 505.9L305.6 504.5L308.5 503.1L311.3 501.7L314.1 500.3L316.8 498.9L319.4 497.5L321.9 496.1L324.4 494.7L326.8 493.3L329.1 491.9L331.3 490.5L333.5 489.1L335.6 487.7L337.6 486.3L339.6 484.9L341.5 483.5L343.3 482.1L345.1 480.7L346.9 479.2L350.3 476.3L353.5 473.3L356.6 470.2L359.6 467.0L362.6 463.6L365.4 459.9L366.8 458.0L368.1 456.0L369.3 454.0L370.6 452.0L371.7 450.0L372.7 447.9L373.7 445.8L374.6 443.8L376.5 439.9L378.2 436.2L379.8 432.8L381.3 429.8L382.7 427.2L384.0 424.7L385.1 422.5L386.2 420.4L387.6 417.8L389.1 414.8L390.2 412.6" stroke-opacity="0.058" stroke-width="1.6"/>
<path d="M140.9 547.3L143.6 546.4L145.9 546.1L149.1 545.6L152.9 545.1L157.1 544.4L159.4 544.2L161.8 543.9L164.3 543.6L166.9 543.3L169.6 542.9L172.3 542.6L175.1 542.2L178.0 541.8L180.9 541.4L183.8 540.8L186.7 540.2L189.7 539.5L192.7 538.9L195.7 538.2L198.9 537.6L202.1 536.9L205.5 536.2L209.1 535.5L212.6 534.7L216.3 534.0L220.0 533.2L223.8 532.4L227.6 531.6L231.4 530.8L235.3 529.9L239.1 529.1L242.9 528.2L246.7 527.2L250.4 526.3L254.0 525.3L257.6 524.3L261.1 523.2L264.5 522.2L267.9 521.0L271.2 519.9L274.5 518.7L277.8 517.5L281.1 516.2L284.3 515.0L287.5 513.7L290.7 512.3L293.9 511.0L297.0 509.6L300.0 508.2L303.0 506.8L306.0 505.4L308.9 504.0L311.8 502.6L314.5 501.2L317.2 499.8L319.9 498.3L322.4 496.9L324.9 495.5L327.3 494.1L329.6 492.7L331.8 491.3L334.0 489.9L336.1 488.5L338.2 487.1L340.2 485.7L342.1 484.3L343.9 482.9L345.8 481.4L347.6 479.9L350.9 477.0L354.2 474.0L357.3 470.9L360.4 467.7L363.4 464.2L366.2 460.5L367.6 458.5L368.9 456.5L370.2 454.5L371.4 452.5L372.6 450.5L373.6 448.4L374.5 446.3L375.4 444.2L377.3 440.3L379.0 436.6L380.5 433.2L382.0 430.2L383.3 427.5L384.6 425.1L385.7 422.8L386.7 420.7L388.1 418.0L389.5 415.1L390.7 412.8" stroke-opacity="0.051" stroke-width="1.6"/>
<path d="M141.1 547.8L143.8 546.9L146.1 546.7L149.3 546.2L153.0 545.7L157.3 545.1L159.6 544.9L162.0 544.6L164.5 544.4L167.1 544.1L169.7 543.8L172.5 543.4L175.3 543.1L178.2 542.7L181.1 542.4L184.0 541.8L186.9 541.1L189.9 540.5L192.9 539.9L195.9 539.2L199.1 538.5L202.3 537.9L205.7 537.2L209.3 536.4L212.8 535.7L216.5 535.0L220.2 534.2L224.0 533.4L227.8 532.6L231.6 531.8L235.5 530.9L239.3 530.0L243.1 529.1L246.9 528.2L250.6 527.2L254.3 526.3L257.9 525.2L261.4 524.2L264.9 523.1L268.2 522.0L271.5 520.8L274.8 519.6L278.1 518.4L281.4 517.2L284.7 515.9L287.9 514.6L291.1 513.2L294.3 511.9L297.4 510.5L300.4 509.1L303.5 507.7L306.4 506.3L309.4 504.9L312.2 503.5L315.0 502.1L317.7 500.6L320.3 499.2L322.9 497.8L325.4 496.4L327.8 495.0L330.1 493.6L332.4 492.2L334.6 490.8L336.7 489.4L338.7 488.0L340.7 486.5L342.7 485.1L344.6 483.7L346.4 482.2L348.2 480.7L351.6 477.8L354.9 474.7L358.0 471.6L361.1 468.3L364.1 464.9L367.0 461.1L368.4 459.1L369.8 457.1L371.0 455.1L372.3 453.0L373.4 451.0L374.4 448.8L375.3 446.7L376.2 444.6L378.0 440.7L379.7 437.0L381.2 433.6L382.6 430.6L383.9 427.9L385.2 425.4L386.3 423.1L387.2 421.0L388.6 418.3L390.0 415.4L391.1 413.1" stroke-opacity="0.044" stroke-width="1.6"/>
<path d="M141.3 548.2L143.9 547.4L146.2 547.2L149.4 546.8L153.1 546.4L157.4 545.8L159.7 545.6L162.1 545.4L164.6 545.1L167.2 544.9L169.9 544.6L172.7 544.3L175.5 544.0L178.3 543.7L181.3 543.3L184.2 542.7L187.1 542.1L190.1 541.5L193.1 540.8L196.1 540.2L199.3 539.5L202.5 538.8L205.9 538.1L209.5 537.4L213.0 536.7L216.7 535.9L220.4 535.2L224.2 534.4L228.0 533.6L231.9 532.8L235.7 531.9L239.5 531.0L243.4 530.1L247.1 529.2L250.9 528.2L254.6 527.2L258.2 526.2L261.7 525.1L265.2 524.1L268.5 522.9L271.9 521.8L275.2 520.6L278.5 519.4L281.8 518.1L285.0 516.8L288.3 515.5L291.5 514.2L294.7 512.8L297.8 511.4L300.9 510.0L303.9 508.6L306.9 507.2L309.8 505.8L312.7 504.4L315.4 503.0L318.2 501.5L320.8 500.1L323.4 498.7L325.9 497.3L328.3 495.9L330.6 494.4L332.9 493.0L335.1 491.6L337.2 490.2L339.3 488.8L341.3 487.3L343.3 485.9L345.2 484.5L347.0 483.0L348.9 481.5L352.3 478.5L355.6 475.4L358.8 472.3L361.8 469.0L364.9 465.5L367.8 461.7L369.3 459.7L370.6 457.6L371.9 455.6L373.1 453.5L374.3 451.5L375.2 449.3L376.1 447.2L377.0 445.0L378.8 441.1L380.4 437.4L381.9 434.0L383.3 430.9L384.6 428.3L385.7 425.8L386.8 423.4L387.8 421.3L389.0 418.6L390.5 415.7L391.5 413.3" stroke-opacity="0.037" stroke-width="1.6"/>
<path d="M141.5 548.7L144.1 547.9L146.3 547.8L149.5 547.4L153.3 547.0L157.5 546.4L159.8 546.3L162.3 546.1L164.8 545.9L167.4 545.7L170.1 545.4L172.8 545.2L175.7 544.9L178.5 544.6L181.5 544.3L184.4 543.7L187.3 543.1L190.3 542.5L193.3 541.8L196.3 541.2L199.5 540.5L202.8 539.8L206.1 539.1L209.7 538.4L213.2 537.7L216.9 536.9L220.6 536.2L224.4 535.4L228.2 534.6L232.1 533.7L235.9 532.9L239.8 532.0L243.6 531.1L247.4 530.1L251.1 529.2L254.8 528.2L258.5 527.2L262.0 526.1L265.5 525.0L268.8 523.9L272.2 522.7L275.5 521.5L278.8 520.3L282.1 519.0L285.4 517.7L288.7 516.4L291.9 515.1L295.1 513.7L298.2 512.4L301.3 511.0L304.3 509.6L307.3 508.1L310.2 506.7L313.1 505.3L315.9 503.8L318.6 502.4L321.3 501.0L323.9 499.6L326.4 498.1L328.8 496.7L331.2 495.3L333.5 493.9L335.7 492.5L337.8 491.0L339.9 489.6L341.9 488.2L343.9 486.7L345.8 485.2L347.7 483.8L349.5 482.2L353.0 479.2L356.3 476.1L359.5 473.0L362.6 469.7L365.7 466.1L368.6 462.3L370.1 460.2L371.5 458.2L372.8 456.1L374.0 454.0L375.2 452.0L376.1 449.8L376.9 447.6L377.8 445.5L379.5 441.5L381.1 437.7L382.6 434.3L383.9 431.3L385.2 428.6L386.3 426.1L387.4 423.8L388.3 421.7L389.5 418.9L390.9 415.9L392.0 413.6" stroke-opacity="0.029" stroke-width="1.6"/>
<path d="M141.7 549.2L144.3 548.5L146.4 548.3L149.6 548.0L153.4 547.6L157.6 547.1L160.0 547.0L162.4 546.8L164.9 546.7L167.5 546.5L170.2 546.3L173.0 546.1L175.8 545.8L178.7 545.6L181.7 545.3L184.6 544.7L187.6 544.1L190.5 543.4L193.5 542.8L196.5 542.1L199.7 541.5L203.0 540.8L206.3 540.1L209.9 539.4L213.4 538.7L217.1 537.9L220.8 537.1L224.6 536.3L228.5 535.5L232.3 534.7L236.1 533.8L240.0 533.0L243.8 532.1L247.6 531.1L251.4 530.2L255.1 529.2L258.8 528.1L262.3 527.1L265.8 526.0L269.2 524.8L272.5 523.7L275.9 522.5L279.2 521.2L282.5 520.0L285.8 518.7L289.0 517.4L292.3 516.0L295.4 514.6L298.6 513.3L301.7 511.9L304.7 510.5L307.7 509.0L310.7 507.6L313.6 506.2L316.4 504.7L319.1 503.3L321.8 501.9L324.4 500.4L326.9 499.0L329.3 497.6L331.7 496.2L334.0 494.7L336.2 493.3L338.4 491.9L340.5 490.4L342.5 489.0L344.5 487.5L346.4 486.0L348.3 484.5L350.2 483.0L353.6 480.0L357.0 476.9L360.2 473.7L363.3 470.3L366.5 466.8L369.4 462.9L370.9 460.8L372.3 458.7L373.6 456.6L374.9 454.6L376.0 452.5L376.9 450.2L377.8 448.1L378.6 445.9L380.3 441.9L381.9 438.1L383.3 434.7L384.6 431.7L385.8 429.0L386.9 426.4L387.9 424.1L388.8 422.0L390.0 419.2L391.4 416.2L392.4 413.8" stroke-opacity="0.022" stroke-width="1.6"/>
<path d="M141.9 549.6L144.4 549.0L146.5 548.9L149.7 548.6L153.5 548.2L157.8 547.8L160.1 547.7L162.6 547.6L165.1 547.4L167.7 547.3L170.4 547.1L173.2 546.9L176.0 546.7L178.9 546.5L181.9 546.3L184.8 545.7L187.8 545.1L190.7 544.4L193.7 543.8L196.7 543.1L199.9 542.5L203.2 541.8L206.5 541.1L210.1 540.4L213.6 539.6L217.3 538.9L221.1 538.1L224.8 537.3L228.7 536.5L232.5 535.7L236.4 534.8L240.2 533.9L244.1 533.0L247.9 532.1L251.6 531.1L255.4 530.1L259.0 529.1L262.6 528.0L266.1 526.9L269.5 525.8L272.9 524.6L276.2 523.4L279.6 522.2L282.9 520.9L286.2 519.6L289.4 518.3L292.7 516.9L295.8 515.6L299.0 514.2L302.1 512.8L305.2 511.4L308.2 509.9L311.1 508.5L314.0 507.1L316.8 505.6L319.6 504.2L322.3 502.7L324.9 501.3L327.4 499.9L329.8 498.4L332.2 497.0L334.5 495.6L336.8 494.1L338.9 492.7L341.0 491.2L343.1 489.8L345.1 488.3L347.0 486.8L348.9 485.3L350.8 483.8L354.3 480.7L357.7 477.6L360.9 474.4L364.1 471.0L367.2 467.4L370.2 463.5L371.8 461.3L373.1 459.3L374.5 457.2L375.7 455.1L376.9 453.0L377.8 450.7L378.6 448.5L379.4 446.3L381.0 442.3L382.6 438.5L384.0 435.1L385.2 432.0L386.4 429.3L387.5 426.8L388.5 424.4L389.3 422.3L390.5 419.5L391.9 416.5L392.8 414.1" stroke-opacity="0.015" stroke-width="1.6"/>
</g>
<mask id="rb9" maskUnits="userSpaceOnUse" x="130" y="270" width="630" height="320"><g fill="none" stroke="#fff" stroke-width="14" stroke-linejoin="round"><path d="M450.6 329.6L452.8 327.9L454.9 326.3L457.0 324.8L459.1 323.5L461.4 322.1L463.7 320.8L466.2 319.6L469.0 318.4L471.9 317.1L475.0 315.9L478.1 314.7L481.3 313.6L484.6 312.6L488.0 311.6L491.7 310.7L495.5 309.9L499.6 309.2L503.9 308.6L506.1 308.3L508.5 308.2L511.0 308.0L513.6 308.0L516.4 307.9L519.2 307.9L522.1 307.9L525.0 307.9L528.0 308.0L530.9 308.0L533.9 308.1L536.9 308.1L539.8 308.2L542.7 308.2L545.6 308.2L548.4 308.2L551.0 308.2L553.6 308.1L556.1 308.0L558.5 307.8L562.7 307.3L566.5 306.8L569.9 306.2L573.1 305.5L576.0 304.8L579.0 304.0L581.9 303.2L585.0 302.4L588.4 301.5L592.2 300.6L596.5 299.7L598.9 299.1L601.3 298.6L603.9 298.0L606.5 297.4L609.2 296.8L611.9 296.2L614.6 295.6L617.3 295.0"/><path stroke-opacity="0.10" d="M418.6 357.1L420.3 355.6L422.5 353.7"/><path stroke-opacity="0.10" d="M645.0 287.3L647.5 286.5L650.0 285.6"/><path stroke-opacity="0.30" d="M422.5 353.7L425.0 351.4L427.8 348.8"/><path stroke-opacity="0.30" d="M639.5 288.9L642.1 288.2L645.0 287.3"/><path stroke-opacity="0.50" d="M427.8 348.8L430.8 346.0L433.9 343.1L437.1 340.3"/><path stroke-opacity="0.50" d="M629.9 291.5L632.1 290.9L636.1 289.8L639.5 288.9"/><path stroke-opacity="0.70" d="M437.1 340.3L440.1 337.6L443.1 335.2"/><path stroke-opacity="0.70" d="M625.1 292.9L627.5 292.2L629.9 291.5"/><path stroke-opacity="0.90" d="M443.1 335.2L445.7 333.1L448.2 331.3L450.6 329.6"/><path stroke-opacity="0.90" d="M617.3 295.0L619.9 294.3L622.5 293.6L625.1 292.9"/></g></mask>
<g mask="url(#rb9)">
<path d="M417.9 356.3L419.5 354.8L421.5 352.8L424.0 350.4L426.7 347.7L429.7 344.8L432.7 341.9L435.8 339.0L438.9 336.2L441.8 333.7L444.4 331.5L446.9 329.6L449.2 327.8L451.4 326.1L453.6 324.5L455.7 323.0L457.9 321.5L460.2 320.2L462.7 318.8L465.3 317.6L468.1 316.3L471.1 315.0L474.1 313.8L477.3 312.6L480.5 311.5L483.9 310.4L487.5 309.4L491.2 308.5L495.1 307.7L499.2 306.9L503.6 306.3L505.9 306.1L508.3 305.9L510.9 305.8L513.6 305.7L516.3 305.7L519.2 305.6L522.1 305.6L525.0 305.7L528.0 305.7L531.0 305.8L534.0 305.8L536.9 305.9L539.9 305.9L542.8 306.0L545.6 306.0L548.3 306.0L551.0 305.9L553.5 305.8L556.0 305.7L558.3 305.5L562.4 305.1L566.1 304.6L569.5 304.0L572.5 303.3L575.5 302.6L578.4 301.8L581.3 301.0L584.5 300.2L587.9 299.3L591.7 298.4L596.0 297.5L598.4 296.9L600.8 296.4L603.4 295.8L606.0 295.2L608.7 294.6L611.4 294.0L614.1 293.4L616.8 292.8L619.5 292.2L622.1 291.6L624.7 291.0L627.1 290.4L629.5 289.8L631.7 289.3L635.8 288.3L639.1 287.5L641.7 286.8L644.7 286.1L647.2 285.3L649.6 284.5" stroke-opacity="0.070" stroke-width="1.4"/>
<path d="M418.1 356.5L419.8 355.0L421.8 353.1L424.3 350.7L427.1 348.0L430.1 345.2L433.1 342.3L436.2 339.4L439.3 336.7L442.2 334.2L444.9 332.1L447.3 330.2L449.7 328.4L451.9 326.7L454.0 325.1L456.2 323.6L458.3 322.2L460.6 320.8L463.0 319.5L465.6 318.2L468.4 317.0L471.4 315.7L474.4 314.5L477.5 313.3L480.8 312.2L484.1 311.1L487.7 310.1L491.4 309.2L495.2 308.4L499.3 307.7L503.7 307.1L506.0 306.9L508.4 306.7L510.9 306.5L513.6 306.5L516.4 306.4L519.2 306.4L522.1 306.4L525.0 306.4L528.0 306.5L531.0 306.5L534.0 306.6L536.9 306.6L539.9 306.7L542.8 306.7L545.6 306.7L548.3 306.7L551.0 306.7L553.6 306.6L556.0 306.5L558.3 306.3L562.5 305.9L566.2 305.3L569.6 304.7L572.7 304.0L575.7 303.3L578.6 302.5L581.5 301.7L584.7 300.9L588.0 300.0L591.8 299.2L596.2 298.2L598.5 297.7L601.0 297.1L603.6 296.6L606.2 296.0L608.9 295.4L611.6 294.8L614.3 294.2L617.0 293.5L619.6 292.9L622.2 292.2L624.8 291.6L627.3 291.0L629.6 290.4L631.9 289.8L635.9 288.8L639.2 288.0L641.8 287.3L644.8 286.5L647.3 285.7L649.7 284.9" stroke-opacity="0.062" stroke-width="1.4"/>
<path d="M418.4 356.8L420.0 355.3L422.2 353.4L424.6 351.0L427.4 348.4L430.4 345.6L433.5 342.7L436.7 339.9L439.7 337.2L442.6 334.7L445.3 332.6L447.8 330.7L450.1 329.0L452.3 327.3L454.5 325.7L456.6 324.2L458.7 322.8L461.0 321.5L463.4 320.2L465.9 318.9L468.7 317.7L471.7 316.4L474.7 315.2L477.8 314.0L481.0 312.9L484.4 311.8L487.9 310.9L491.5 309.9L495.4 309.1L499.5 308.4L503.8 307.8L506.0 307.6L508.4 307.4L511.0 307.3L513.6 307.2L516.4 307.2L519.2 307.1L522.1 307.1L525.0 307.2L528.0 307.2L531.0 307.3L533.9 307.3L536.9 307.4L539.8 307.4L542.7 307.5L545.6 307.5L548.3 307.5L551.0 307.4L553.6 307.3L556.1 307.2L558.4 307.0L562.6 306.6L566.4 306.1L569.7 305.5L572.9 304.8L575.9 304.0L578.8 303.3L581.7 302.5L584.8 301.6L588.2 300.8L592.0 299.9L596.3 298.9L598.7 298.4L601.2 297.9L603.7 297.3L606.3 296.7L609.0 296.1L611.7 295.5L614.4 294.9L617.1 294.3L619.8 293.6L622.4 292.9L624.9 292.2L627.4 291.6L629.8 290.9L632.0 290.3L636.0 289.3L639.3 288.5L642.0 287.7L644.9 286.9L647.4 286.1L649.9 285.2" stroke-opacity="0.054" stroke-width="1.4"/>
<path d="M418.6 357.1L420.3 355.6L422.5 353.7L425.0 351.4L427.8 348.8L430.8 346.0L433.9 343.1L437.1 340.3L440.1 337.6L443.1 335.2L445.7 333.1L448.2 331.3L450.6 329.6L452.8 327.9L454.9 326.3L457.0 324.8L459.1 323.5L461.4 322.1L463.7 320.8L466.2 319.6L469.0 318.4L471.9 317.1L475.0 315.9L478.1 314.7L481.3 313.6L484.6 312.6L488.0 311.6L491.7 310.7L495.5 309.9L499.6 309.2L503.9 308.6L506.1 308.3L508.5 308.2L511.0 308.0L513.6 308.0L516.4 307.9L519.2 307.9L522.1 307.9L525.0 307.9L528.0 308.0L530.9 308.0L533.9 308.1L536.9 308.1L539.8 308.2L542.7 308.2L545.6 308.2L548.4 308.2L551.0 308.2L553.6 308.1L556.1 308.0L558.5 307.8L562.7 307.3L566.5 306.8L569.9 306.2L573.1 305.5L576.0 304.8L579.0 304.0L581.9 303.2L585.0 302.4L588.4 301.5L592.2 300.6L596.5 299.7L598.9 299.1L601.3 298.6L603.9 298.0L606.5 297.4L609.2 296.8L611.9 296.2L614.6 295.6L617.3 295.0L619.9 294.3L622.5 293.6L625.1 292.9L627.5 292.2L629.9 291.5L632.1 290.9L636.1 289.8L639.5 288.9L642.1 288.2L645.0 287.3L647.5 286.5L650.0 285.6" stroke-opacity="0.046" stroke-width="1.4"/>
<path d="M418.9 357.3L420.6 355.9L422.8 354.0L425.3 351.7L428.1 349.1L431.2 346.4L434.3 343.5L437.5 340.7L440.6 338.1L443.5 335.7L446.2 333.6L448.7 331.8L451.0 330.2L453.2 328.5L455.3 326.9L457.4 325.5L459.5 324.1L461.7 322.8L464.0 321.5L466.5 320.3L469.3 319.0L472.2 317.8L475.2 316.6L478.3 315.4L481.5 314.3L484.8 313.3L488.2 312.3L491.9 311.4L495.7 310.6L499.7 309.9L504.0 309.3L506.2 309.1L508.5 308.9L511.0 308.8L513.7 308.7L516.4 308.7L519.2 308.6L522.1 308.6L525.0 308.7L528.0 308.7L530.9 308.8L533.9 308.8L536.9 308.9L539.8 308.9L542.7 309.0L545.6 309.0L548.4 309.0L551.1 308.9L553.7 308.8L556.2 308.7L558.6 308.5L562.8 308.1L566.6 307.5L570.0 306.9L573.2 306.2L576.2 305.5L579.2 304.7L582.1 303.9L585.2 303.1L588.6 302.2L592.3 301.4L596.6 300.4L599.0 299.9L601.5 299.3L604.0 298.8L606.7 298.2L609.3 297.6L612.0 297.0L614.8 296.4L617.5 295.7L620.1 295.0L622.7 294.2L625.2 293.5L627.7 292.8L630.0 292.1L632.2 291.4L636.3 290.4L639.6 289.4L642.2 288.6L645.1 287.8L647.6 286.9L650.1 285.9" stroke-opacity="0.039" stroke-width="1.4"/>
<path d="M419.2 357.6L420.9 356.2L423.1 354.3L425.6 352.0L428.5 349.5L431.5 346.7L434.7 343.9L437.9 341.2L441.0 338.5L443.9 336.2L446.6 334.2L449.1 332.4L451.5 330.7L453.7 329.1L455.8 327.5L457.8 326.1L459.9 324.7L462.1 323.4L464.4 322.2L466.9 320.9L469.6 319.7L472.5 318.5L475.5 317.3L478.6 316.1L481.7 315.0L485.0 314.0L488.4 313.0L492.0 312.1L495.8 311.3L499.8 310.6L504.1 310.1L506.2 309.8L508.6 309.7L511.1 309.5L513.7 309.5L516.4 309.4L519.2 309.4L522.1 309.4L525.0 309.4L527.9 309.5L530.9 309.5L533.9 309.6L536.9 309.6L539.8 309.7L542.7 309.7L545.6 309.7L548.4 309.7L551.1 309.7L553.7 309.6L556.2 309.5L558.6 309.3L562.9 308.8L566.7 308.3L570.2 307.7L573.4 307.0L576.4 306.2L579.4 305.4L582.3 304.6L585.4 303.8L588.8 303.0L592.5 302.1L596.8 301.1L599.2 300.6L601.7 300.1L604.2 299.5L606.8 298.9L609.5 298.3L612.2 297.7L614.9 297.1L617.6 296.5L620.3 295.7L622.9 294.9L625.4 294.1L627.8 293.4L630.1 292.7L632.4 292.0L636.4 290.9L639.7 289.9L642.3 289.1L645.2 288.2L647.8 287.3L650.2 286.3" stroke-opacity="0.031" stroke-width="1.4"/>
<path d="M419.4 357.9L421.2 356.5L423.4 354.6L426.0 352.4L428.8 349.8L431.9 347.1L435.1 344.3L438.3 341.6L441.4 339.0L444.3 336.7L447.0 334.7L449.6 333.0L452.0 331.3L454.1 329.7L456.2 328.1L458.3 326.7L460.3 325.4L462.5 324.1L464.7 322.8L467.2 321.6L469.9 320.4L472.8 319.2L475.8 318.0L478.8 316.8L482.0 315.8L485.2 314.7L488.6 313.8L492.2 312.9L495.9 312.1L499.9 311.4L504.2 310.8L506.3 310.6L508.6 310.4L511.1 310.3L513.7 310.2L516.4 310.2L519.2 310.1L522.1 310.1L525.0 310.2L527.9 310.2L530.9 310.3L533.9 310.3L536.9 310.4L539.8 310.4L542.7 310.5L545.6 310.5L548.4 310.5L551.1 310.4L553.7 310.3L556.3 310.2L558.7 310.0L563.0 309.6L566.8 309.0L570.3 308.4L573.6 307.7L576.6 307.0L579.6 306.2L582.5 305.4L585.6 304.5L588.9 303.7L592.7 302.8L597.0 301.9L599.3 301.3L601.8 300.8L604.4 300.2L607.0 299.6L609.7 299.0L612.4 298.4L615.1 297.8L617.8 297.2L620.4 296.4L623.0 295.6L625.5 294.8L627.9 294.0L630.3 293.3L632.5 292.5L636.5 291.4L639.8 290.4L642.4 289.6L645.3 288.6L647.9 287.7L650.3 286.6" stroke-opacity="0.023" stroke-width="1.4"/>
<path d="M419.7 358.2L421.5 356.8L423.7 354.9L426.3 352.7L429.2 350.2L432.3 347.5L435.5 344.7L438.7 342.0L441.8 339.5L444.8 337.2L447.5 335.2L450.0 333.5L452.4 331.9L454.6 330.3L456.6 328.8L458.7 327.3L460.7 326.0L462.8 324.7L465.1 323.5L467.5 322.3L470.2 321.1L473.1 319.9L476.1 318.7L479.1 317.6L482.2 316.5L485.4 315.4L488.8 314.5L492.4 313.6L496.1 312.8L500.0 312.1L504.2 311.6L506.4 311.3L508.7 311.2L511.1 311.0L513.7 311.0L516.4 310.9L519.2 310.9L522.1 310.9L525.0 310.9L527.9 311.0L530.9 311.0L533.9 311.1L536.8 311.1L539.8 311.2L542.7 311.2L545.6 311.2L548.4 311.2L551.1 311.2L553.8 311.1L556.3 311.0L558.8 310.8L563.1 310.3L566.9 309.8L570.5 309.1L573.7 308.4L576.8 307.7L579.7 306.9L582.7 306.1L585.8 305.3L589.1 304.4L592.8 303.6L597.1 302.6L599.5 302.1L602.0 301.5L604.5 301.0L607.2 300.4L609.8 299.8L612.5 299.2L615.3 298.6L618.0 297.9L620.6 297.1L623.2 296.2L625.7 295.4L628.1 294.6L630.4 293.8L632.6 293.1L636.6 291.9L639.9 290.9L642.5 290.0L645.5 289.0L648.0 288.1L650.5 287.0" stroke-opacity="0.015" stroke-width="1.4"/>
</g>
<mask id="rb10" maskUnits="userSpaceOnUse" x="130" y="270" width="630" height="320"><g fill="none" stroke="#fff" stroke-width="19" stroke-linejoin="round"><path d="M663.5 313.0L664.1 317.1L665.1 321.1L666.2 324.9L667.7 328.7L669.4 332.2L671.2 335.6L673.0 338.9L674.8 342.2L676.6 345.5L678.2 348.7L679.5 352.0L680.7 355.4L681.6 359.1L682.3 363.2L682.7 365.2L683.0 367.4L683.3 369.6L683.5 371.9L683.8 374.2L683.9 376.5L684.1 378.8L684.3 381.1L684.4 383.5L684.5 385.8L684.5 388.0L684.6 390.3L684.6 392.5L684.6 394.6L684.5 398.8L684.3 402.7L684.1 406.4L683.7 410.1L683.3 413.6L682.7 417.0L682.1 420.3L681.4 423.4L680.5 426.5L679.6 429.4L678.5 432.2L677.3 434.8L676.0 437.5"/><path stroke-opacity="0.10" d="M662.5 284.4L662.7 287.4"/><path stroke-opacity="0.10" d="M663.4 455.7L661.6 458.2"/><path stroke-opacity="0.30" d="M662.7 287.4L662.8 290.8L662.8 293.7"/><path stroke-opacity="0.30" d="M666.8 451.2L664.9 453.6L663.4 455.7"/><path stroke-opacity="0.50" d="M662.8 293.7L662.8 297.1"/><path stroke-opacity="0.50" d="M668.7 448.7L666.8 451.2"/><path stroke-opacity="0.70" d="M662.8 297.1L662.9 300.8L663.0 304.8"/><path stroke-opacity="0.70" d="M672.7 443.2L670.7 446.0L668.7 448.7"/><path stroke-opacity="0.90" d="M663.0 304.8L663.2 308.9L663.5 313.0"/><path stroke-opacity="0.90" d="M676.0 437.5L674.5 440.3L672.7 443.2"/></g></mask>
<g mask="url(#rb10)">
<path d="M664.4 284.1L664.8 287.1L665.1 290.6L665.3 293.5L665.6 296.9L665.8 300.5L666.2 304.4L666.6 308.4L667.1 312.4L667.8 316.4L668.7 320.2L669.8 323.7L671.1 327.2L672.7 330.5L674.5 333.8L676.3 337.1L678.1 340.4L679.9 343.8L681.6 347.2L683.0 350.7L684.3 354.4L685.2 358.3L686.0 362.5L686.4 364.7L686.7 366.9L687.0 369.2L687.3 371.5L687.5 373.8L687.7 376.2L687.9 378.6L688.0 380.9L688.1 383.3L688.2 385.6L688.3 388.0L688.3 390.2L688.3 392.5L688.3 394.7L688.2 398.9L688.1 402.9L687.8 406.8L687.4 410.5L687.0 414.1L686.4 417.6L685.8 421.1L685.0 424.4L684.1 427.6L683.1 430.7L682.0 433.6L680.7 436.5L679.1 439.4L677.2 442.3L675.2 445.1L673.0 447.9L670.7 450.5L668.6 453.0L666.6 455.2L664.9 457.1L663.0 459.4" stroke-opacity="0.070" stroke-width="1.9"/>
<path d="M663.8 284.2L664.1 287.2L664.4 290.6L664.5 293.6L664.6 296.9L664.8 300.6L665.1 304.5L665.5 308.6L665.9 312.6L666.6 316.6L667.5 320.5L668.6 324.1L670.0 327.7L671.6 331.1L673.4 334.4L675.2 337.7L677.0 341.0L678.8 344.3L680.4 347.7L681.9 351.1L683.1 354.7L684.0 358.6L684.8 362.7L685.2 364.9L685.5 367.1L685.8 369.3L686.0 371.6L686.2 374.0L686.4 376.3L686.6 378.7L686.8 381.0L686.9 383.3L687.0 385.7L687.0 388.0L687.1 390.3L687.1 392.5L687.1 394.7L687.0 398.9L686.8 402.8L686.5 406.7L686.2 410.4L685.8 413.9L685.2 417.4L684.6 420.8L683.8 424.1L682.9 427.2L681.9 430.2L680.8 433.2L679.6 435.9L678.1 438.7L676.3 441.6L674.3 444.5L672.2 447.3L670.1 449.9L668.0 452.4L666.1 454.6L664.4 456.6L662.6 459.0" stroke-opacity="0.062" stroke-width="1.9"/>
<path d="M663.2 284.3L663.4 287.3L663.6 290.7L663.6 293.7L663.7 297.0L663.9 300.7L664.1 304.7L664.3 308.7L664.7 312.8L665.4 316.9L666.3 320.8L667.4 324.5L668.8 328.2L670.5 331.6L672.3 335.0L674.1 338.3L675.9 341.6L677.7 344.9L679.3 348.2L680.7 351.6L681.9 355.1L682.8 358.8L683.6 362.9L683.9 365.1L684.2 367.3L684.5 369.5L684.8 371.8L685.0 374.1L685.2 376.4L685.4 378.7L685.5 381.1L685.6 383.4L685.7 385.7L685.8 388.0L685.8 390.3L685.8 392.5L685.8 394.7L685.7 398.9L685.6 402.8L685.3 406.6L685.0 410.2L684.5 413.8L684.0 417.2L683.3 420.5L682.6 423.7L681.7 426.8L680.8 429.8L679.7 432.7L678.5 435.4L677.0 438.1L675.4 441.0L673.5 443.8L671.5 446.6L669.4 449.3L667.4 451.8L665.5 454.1L663.9 456.2L662.1 458.6" stroke-opacity="0.054" stroke-width="1.9"/>
<path d="M662.5 284.4L662.7 287.4L662.8 290.8L662.8 293.7L662.8 297.1L662.9 300.8L663.0 304.8L663.2 308.9L663.5 313.0L664.1 317.1L665.1 321.1L666.2 324.9L667.7 328.7L669.4 332.2L671.2 335.6L673.0 338.9L674.8 342.2L676.6 345.5L678.2 348.7L679.5 352.0L680.7 355.4L681.6 359.1L682.3 363.2L682.7 365.2L683.0 367.4L683.3 369.6L683.5 371.9L683.8 374.2L683.9 376.5L684.1 378.8L684.3 381.1L684.4 383.5L684.5 385.8L684.5 388.0L684.6 390.3L684.6 392.5L684.6 394.6L684.5 398.8L684.3 402.7L684.1 406.4L683.7 410.1L683.3 413.6L682.7 417.0L682.1 420.3L681.4 423.4L680.5 426.5L679.6 429.4L678.5 432.2L677.3 434.8L676.0 437.5L674.5 440.3L672.7 443.2L670.7 446.0L668.7 448.7L666.8 451.2L664.9 453.6L663.4 455.7L661.6 458.2" stroke-opacity="0.046" stroke-width="1.9"/>
<path d="M661.9 284.5L662.0 287.5L662.1 290.9L662.0 293.8L661.9 297.2L661.9 300.9L661.9 304.9L662.1 309.0L662.4 313.2L662.9 317.4L663.9 321.4L665.0 325.4L666.5 329.2L668.2 332.8L670.1 336.2L671.9 339.5L673.7 342.8L675.4 346.0L677.0 349.2L678.4 352.5L679.5 355.8L680.3 359.3L681.1 363.4L681.4 365.4L681.8 367.6L682.0 369.8L682.3 372.0L682.5 374.3L682.7 376.6L682.9 378.9L683.0 381.2L683.1 383.5L683.2 385.8L683.3 388.1L683.3 390.3L683.3 392.5L683.3 394.6L683.2 398.8L683.1 402.6L682.8 406.3L682.5 409.9L682.0 413.4L681.5 416.8L680.9 420.0L680.2 423.1L679.3 426.1L678.4 429.0L677.4 431.7L676.2 434.2L675.0 436.8L673.5 439.6L671.8 442.5L670.0 445.3L668.0 448.1L666.1 450.7L664.4 453.1L662.8 455.2L661.1 457.7" stroke-opacity="0.039" stroke-width="1.9"/>
<path d="M661.3 284.6L661.4 287.6L661.3 291.0L661.1 293.9L661.0 297.3L660.9 301.0L660.9 305.0L661.0 309.2L661.2 313.4L661.7 317.7L662.7 321.8L663.9 325.8L665.4 329.6L667.1 333.3L669.0 336.8L670.8 340.2L672.6 343.4L674.3 346.6L675.9 349.7L677.2 352.9L678.3 356.1L679.1 359.6L679.9 363.6L680.2 365.6L680.5 367.8L680.8 369.9L681.0 372.2L681.3 374.4L681.5 376.7L681.6 379.0L681.8 381.3L681.9 383.6L682.0 385.8L682.0 388.1L682.1 390.3L682.1 392.5L682.1 394.6L682.0 398.7L681.8 402.6L681.6 406.2L681.2 409.8L680.8 413.3L680.3 416.6L679.7 419.8L679.0 422.8L678.1 425.8L677.2 428.6L676.2 431.2L675.1 433.7L674.0 436.2L672.6 439.0L671.0 441.8L669.2 444.7L667.3 447.5L665.5 450.1L663.8 452.5L662.3 454.8L660.7 457.3" stroke-opacity="0.031" stroke-width="1.9"/>
<path d="M660.7 284.7L660.7 287.7L660.5 291.0L660.3 294.0L660.1 297.4L659.9 301.1L659.8 305.1L659.8 309.3L660.0 313.6L660.5 317.9L661.5 322.1L662.7 326.2L664.2 330.1L666.0 333.9L667.9 337.4L669.7 340.8L671.5 344.0L673.2 347.2L674.7 350.3L676.0 353.3L677.1 356.5L677.9 359.9L678.7 363.8L679.0 365.8L679.3 367.9L679.6 370.1L679.8 372.3L680.0 374.5L680.2 376.8L680.4 379.1L680.5 381.3L680.6 383.6L680.7 385.9L680.8 388.1L680.8 390.3L680.8 392.5L680.8 394.6L680.7 398.7L680.6 402.5L680.3 406.1L680.0 409.7L679.6 413.1L679.1 416.4L678.4 419.5L677.7 422.5L676.9 425.4L676.0 428.2L675.0 430.8L674.0 433.1L672.9 435.6L671.7 438.3L670.2 441.2L668.4 444.0L666.7 446.8L664.9 449.5L663.3 452.0L661.8 454.3L660.2 456.9" stroke-opacity="0.023" stroke-width="1.9"/>
<path d="M660.1 284.8L660.0 287.8L659.8 291.1L659.4 294.0L659.2 297.5L658.9 301.2L658.8 305.3L658.7 309.5L658.8 313.8L659.3 318.2L660.2 322.4L661.5 326.6L663.1 330.6L664.9 334.4L666.8 338.0L668.6 341.4L670.4 344.6L672.1 347.7L673.6 350.8L674.9 353.8L675.9 356.8L676.7 360.1L677.4 364.1L677.7 366.0L678.0 368.1L678.3 370.2L678.6 372.4L678.8 374.6L679.0 376.9L679.1 379.2L679.3 381.4L679.4 383.7L679.5 385.9L679.5 388.2L679.6 390.3L679.6 392.5L679.6 394.6L679.5 398.7L679.3 402.4L679.1 406.0L678.7 409.5L678.3 412.9L677.8 416.1L677.2 419.2L676.5 422.2L675.7 425.0L674.9 427.7L673.9 430.3L672.9 432.5L671.9 434.9L670.8 437.7L669.3 440.5L667.7 443.4L666.0 446.2L664.3 448.9L662.7 451.5L661.3 453.8L659.7 456.5" stroke-opacity="0.015" stroke-width="1.9"/>
</g>
</g>
<circle cx="146.2" cy="393.9" r="2.3" fill="#d3b8d1" fill-opacity="0.9"/>
<circle cx="145.1" cy="392.4" r="2.3" fill="#d3b8d1" fill-opacity="0.9"/>
<circle cx="146.9" cy="395.1" r="1.6" fill="#d3b8d1" fill-opacity="0.9"/>
<circle cx="161.9" cy="398.5" r="2.4" fill="#d6bcd4" fill-opacity="0.9"/>
<circle cx="163.1" cy="397.5" r="1.6" fill="#d6bcd4" fill-opacity="0.9"/>
<circle cx="160.6" cy="400.9" r="2.7" fill="#d6bcd4" fill-opacity="0.9"/>
<circle cx="161.9" cy="402.3" r="0.6" fill="#d6bcd4" fill-opacity="0.9"/>
<circle cx="159.8" cy="398.5" r="2.6" fill="#dac2d8" fill-opacity="0.9"/>
<circle cx="162.8" cy="398.6" r="1.9" fill="#dac2d8" fill-opacity="0.9"/>
<circle cx="161.2" cy="396.1" r="2.1" fill="#dac2d8" fill-opacity="0.9"/>
<circle cx="168.3" cy="399.2" r="2.1" fill="#d3b8d1" fill-opacity="0.9"/>
<circle cx="169.7" cy="402.9" r="1.5" fill="#dfc8dd" fill-opacity="0.9"/>
<circle cx="172.7" cy="400.8" r="1.7" fill="#dfc8dd" fill-opacity="0.9"/>
<circle cx="176.4" cy="400.7" r="3.0" fill="#d6bcd4" fill-opacity="0.9"/>
<circle cx="172.4" cy="405.3" r="2.1" fill="#d6bcd4" fill-opacity="0.9"/>
<circle cx="179.1" cy="399.1" r="1.5" fill="#d6bcd4" fill-opacity="0.9"/>
<circle cx="189.0" cy="407.9" r="1.6" fill="#dac2d8" fill-opacity="0.9"/>
<circle cx="185.6" cy="404.6" r="1.5" fill="#dac2d8" fill-opacity="0.9"/>
<circle cx="188.9" cy="407.0" r="2.1" fill="#dac2d8" fill-opacity="0.9"/>
<circle cx="189.5" cy="406.7" r="2.5" fill="#dac2d8" fill-opacity="0.9"/>
<circle cx="189.5" cy="408.0" r="2.4" fill="#dac2d8" fill-opacity="0.9"/>
<circle cx="187.9" cy="410.2" r="2.7" fill="#d6bcd4" fill-opacity="0.9"/>
<circle cx="188.9" cy="408.7" r="2.6" fill="#d6bcd4" fill-opacity="0.9"/>
<circle cx="196.2" cy="407.6" r="1.6" fill="#dac2d8" fill-opacity="0.9"/>
<circle cx="202.0" cy="407.5" r="2.9" fill="#d6bcd4" fill-opacity="0.9"/>
<circle cx="199.9" cy="405.8" r="2.2" fill="#d6bcd4" fill-opacity="0.9"/>
<circle cx="203.3" cy="416.2" r="1.0" fill="#d6bcd4" fill-opacity="0.9"/>
<circle cx="197.9" cy="410.9" r="1.9" fill="#d6bcd4" fill-opacity="0.9"/>
<circle cx="204.9" cy="415.0" r="0.8" fill="#d6bcd4" fill-opacity="0.9"/>
<circle cx="204.3" cy="412.3" r="2.9" fill="#dac2d8" fill-opacity="0.9"/>
<circle cx="207.9" cy="412.5" r="2.0" fill="#dac2d8" fill-opacity="0.9"/>
<circle cx="207.1" cy="412.6" r="1.6" fill="#dac2d8" fill-opacity="0.9"/>
<circle cx="209.8" cy="414.0" r="0.8" fill="#dac2d8" fill-opacity="0.9"/>
<circle cx="216.1" cy="409.2" r="2.0" fill="#dfc8dd" fill-opacity="0.9"/>
<circle cx="215.0" cy="413.8" r="2.8" fill="#dfc8dd" fill-opacity="0.9"/>
<circle cx="223.0" cy="415.3" r="2.4" fill="#dac2d8" fill-opacity="0.9"/>
<circle cx="222.9" cy="412.4" r="3.0" fill="#dac2d8" fill-opacity="0.9"/>
<circle cx="220.8" cy="412.1" r="2.1" fill="#dac2d8" fill-opacity="0.9"/>
<circle cx="228.2" cy="418.3" r="2.4" fill="#dfc8dd" fill-opacity="0.9"/>
<circle cx="232.7" cy="417.2" r="2.1" fill="#dac2d8" fill-opacity="0.9"/>
<circle cx="231.3" cy="414.0" r="2.3" fill="#dac2d8" fill-opacity="0.9"/>
<circle cx="239.8" cy="418.9" r="2.5" fill="#d6bcd4" fill-opacity="0.9"/>
<circle cx="239.2" cy="422.6" r="1.8" fill="#d6bcd4" fill-opacity="0.9"/>
<circle cx="245.4" cy="421.4" r="2.6" fill="#dac2d8" fill-opacity="0.9"/>
<circle cx="242.9" cy="422.2" r="1.8" fill="#dac2d8" fill-opacity="0.9"/>
<circle cx="242.2" cy="423.0" r="1.8" fill="#dac2d8" fill-opacity="0.9"/>
<circle cx="242.9" cy="424.6" r="2.2" fill="#dac2d8" fill-opacity="0.9"/>
<circle cx="243.5" cy="422.0" r="3.0" fill="#dac2d8" fill-opacity="0.9"/>
<circle cx="245.0" cy="421.0" r="1.0" fill="#dac2d8" fill-opacity="0.9"/>
<circle cx="250.7" cy="428.2" r="2.1" fill="#d6bcd4" fill-opacity="0.9"/>
<circle cx="251.0" cy="418.7" r="1.1" fill="#d6bcd4" fill-opacity="0.9"/>
<circle cx="256.3" cy="423.9" r="2.9" fill="#dfc8dd" fill-opacity="0.9"/>
<circle cx="256.9" cy="425.1" r="2.2" fill="#dfc8dd" fill-opacity="0.9"/>
<circle cx="256.5" cy="423.9" r="2.2" fill="#dfc8dd" fill-opacity="0.9"/>
<circle cx="255.4" cy="427.0" r="1.9" fill="#dfc8dd" fill-opacity="0.9"/>
<circle cx="261.0" cy="421.3" r="1.6" fill="#d6bcd4" fill-opacity="0.9"/>
<circle cx="256.5" cy="423.0" r="1.7" fill="#d6bcd4" fill-opacity="0.9"/>
<circle cx="257.2" cy="423.8" r="2.9" fill="#d6bcd4" fill-opacity="0.9"/>
<circle cx="259.8" cy="418.6" r="2.8" fill="#d6bcd4" fill-opacity="0.9"/>
<circle cx="258.1" cy="421.4" r="2.2" fill="#d6bcd4" fill-opacity="0.9"/>
<circle cx="268.1" cy="423.2" r="2.8" fill="#d6bcd4" fill-opacity="0.9"/>
<circle cx="264.1" cy="422.4" r="2.3" fill="#d6bcd4" fill-opacity="0.9"/>
<circle cx="271.9" cy="426.9" r="2.3" fill="#dfc8dd" fill-opacity="0.9"/>
<circle cx="271.9" cy="428.2" r="1.5" fill="#dfc8dd" fill-opacity="0.9"/>
<circle cx="272.3" cy="430.0" r="2.7" fill="#dfc8dd" fill-opacity="0.9"/>
<circle cx="275.2" cy="432.0" r="2.9" fill="#d3b8d1" fill-opacity="0.9"/>
<circle cx="279.4" cy="433.8" r="1.6" fill="#d3b8d1" fill-opacity="0.9"/>
<circle cx="278.8" cy="429.6" r="1.9" fill="#d3b8d1" fill-opacity="0.9"/>
<circle cx="280.2" cy="430.1" r="2.3" fill="#d3b8d1" fill-opacity="0.9"/>
<circle cx="273.4" cy="437.1" r="1.1" fill="#d3b8d1" fill-opacity="0.9"/>
<circle cx="283.8" cy="428.4" r="2.4" fill="#dfc8dd" fill-opacity="0.9"/>
<circle cx="282.9" cy="426.3" r="2.3" fill="#dfc8dd" fill-opacity="0.9"/>
<circle cx="281.6" cy="426.4" r="3.0" fill="#dfc8dd" fill-opacity="0.9"/>
<circle cx="287.0" cy="432.6" r="2.1" fill="#d3b8d1" fill-opacity="0.9"/>
<circle cx="281.4" cy="433.9" r="0.8" fill="#d3b8d1" fill-opacity="0.9"/>
<circle cx="292.6" cy="433.0" r="1.8" fill="#dac2d8" fill-opacity="0.9"/>
<circle cx="295.3" cy="435.1" r="1.7" fill="#dac2d8" fill-opacity="0.9"/>
<circle cx="296.1" cy="441.5" r="0.8" fill="#dac2d8" fill-opacity="0.9"/>
<circle cx="293.9" cy="436.0" r="2.8" fill="#dac2d8" fill-opacity="0.9"/>
<circle cx="296.0" cy="437.6" r="2.6" fill="#dac2d8" fill-opacity="0.9"/>
<circle cx="296.7" cy="435.8" r="2.4" fill="#dac2d8" fill-opacity="0.9"/>
<circle cx="297.0" cy="436.3" r="2.3" fill="#dac2d8" fill-opacity="0.9"/>
<circle cx="296.8" cy="442.7" r="0.9" fill="#dac2d8" fill-opacity="0.9"/>
<circle cx="301.7" cy="442.9" r="2.0" fill="#d6bcd4" fill-opacity="0.9"/>
<circle cx="306.5" cy="439.5" r="1.8" fill="#d6bcd4" fill-opacity="0.9"/>
<circle cx="303.5" cy="446.0" r="0.7" fill="#d6bcd4" fill-opacity="0.9"/>
<circle cx="302.6" cy="438.7" r="1.8" fill="#d6bcd4" fill-opacity="0.9"/>
<circle cx="303.2" cy="440.2" r="1.6" fill="#d6bcd4" fill-opacity="0.9"/>
<circle cx="303.0" cy="442.7" r="2.7" fill="#d6bcd4" fill-opacity="0.9"/>
<circle cx="301.4" cy="445.6" r="2.5" fill="#d6bcd4" fill-opacity="0.9"/>
<circle cx="305.2" cy="439.1" r="2.7" fill="#d6bcd4" fill-opacity="0.9"/>
<circle cx="305.0" cy="435.3" r="1.1" fill="#d6bcd4" fill-opacity="0.9"/>
<circle cx="311.0" cy="446.6" r="3.0" fill="#d6bcd4" fill-opacity="0.9"/>
<circle cx="312.1" cy="446.4" r="1.6" fill="#d6bcd4" fill-opacity="0.9"/>
<circle cx="313.7" cy="448.4" r="2.4" fill="#d6bcd4" fill-opacity="0.9"/>
<circle cx="312.0" cy="449.8" r="2.8" fill="#d6bcd4" fill-opacity="0.9"/>
<circle cx="310.4" cy="448.8" r="2.6" fill="#d6bcd4" fill-opacity="0.9"/>
<circle cx="310.6" cy="448.1" r="1.0" fill="#d6bcd4" fill-opacity="0.9"/>
<circle cx="320.8" cy="449.3" r="2.4" fill="#d3b8d1" fill-opacity="0.9"/>
<circle cx="320.1" cy="446.0" r="2.0" fill="#d3b8d1" fill-opacity="0.9"/>
<circle cx="319.9" cy="446.4" r="1.7" fill="#d3b8d1" fill-opacity="0.9"/>
<circle cx="320.9" cy="448.4" r="2.9" fill="#d3b8d1" fill-opacity="0.9"/>
<circle cx="322.8" cy="454.9" r="1.6" fill="#d6bcd4" fill-opacity="0.9"/>
<circle cx="322.3" cy="455.2" r="1.5" fill="#d6bcd4" fill-opacity="0.9"/>
<circle cx="329.7" cy="452.7" r="2.5" fill="#d6bcd4" fill-opacity="0.9"/>
<circle cx="333.8" cy="453.6" r="2.1" fill="#d6bcd4" fill-opacity="0.9"/>
<circle cx="336.4" cy="459.5" r="2.6" fill="#dac2d8" fill-opacity="0.9"/>
<circle cx="337.0" cy="459.4" r="1.6" fill="#dac2d8" fill-opacity="0.9"/>
<circle cx="336.5" cy="461.4" r="1.6" fill="#dac2d8" fill-opacity="0.9"/>
<circle cx="345.7" cy="461.0" r="2.7" fill="#d3b8d1" fill-opacity="0.9"/>
<circle cx="343.5" cy="461.1" r="2.8" fill="#d6bcd4" fill-opacity="0.9"/>
<circle cx="344.2" cy="461.7" r="2.1" fill="#d6bcd4" fill-opacity="0.9"/>
<circle cx="344.8" cy="463.5" r="2.1" fill="#d6bcd4" fill-opacity="0.9"/>
<circle cx="350.4" cy="460.4" r="1.5" fill="#dfc8dd" fill-opacity="0.9"/>
<circle cx="348.1" cy="463.9" r="2.4" fill="#dfc8dd" fill-opacity="0.9"/>
<circle cx="349.5" cy="464.0" r="1.6" fill="#dfc8dd" fill-opacity="0.9"/>
<circle cx="349.9" cy="461.2" r="2.4" fill="#dfc8dd" fill-opacity="0.9"/>
<circle cx="353.7" cy="466.3" r="1.6" fill="#d6bcd4" fill-opacity="0.9"/>
<circle cx="353.8" cy="467.8" r="2.9" fill="#d6bcd4" fill-opacity="0.9"/>
<circle cx="351.1" cy="464.1" r="1.9" fill="#d6bcd4" fill-opacity="0.9"/>
<circle cx="353.6" cy="466.8" r="2.1" fill="#d6bcd4" fill-opacity="0.9"/>
<circle cx="352.1" cy="465.9" r="2.0" fill="#d6bcd4" fill-opacity="0.9"/>
<circle cx="346.6" cy="467.3" r="0.9" fill="#d6bcd4" fill-opacity="0.9"/>
<circle cx="355.3" cy="471.1" r="2.9" fill="#d6bcd4" fill-opacity="0.9"/>
<circle cx="357.6" cy="470.6" r="1.7" fill="#d6bcd4" fill-opacity="0.9"/>
<circle cx="354.6" cy="473.3" r="2.4" fill="#d6bcd4" fill-opacity="0.9"/>
<circle cx="353.5" cy="471.5" r="2.5" fill="#d6bcd4" fill-opacity="0.9"/>
<circle cx="355.5" cy="471.3" r="2.4" fill="#d6bcd4" fill-opacity="0.9"/>
<circle cx="364.3" cy="471.2" r="1.0" fill="#d6bcd4" fill-opacity="0.9"/>
<circle cx="362.9" cy="473.1" r="2.4" fill="#dac2d8" fill-opacity="0.9"/>
<circle cx="363.4" cy="473.1" r="1.6" fill="#dac2d8" fill-opacity="0.9"/>
<circle cx="360.3" cy="470.8" r="2.3" fill="#dac2d8" fill-opacity="0.9"/>
<circle cx="359.6" cy="478.2" r="2.7" fill="#dac2d8" fill-opacity="0.9"/>
<circle cx="362.7" cy="475.5" r="2.8" fill="#dac2d8" fill-opacity="0.9"/>
<circle cx="361.7" cy="477.8" r="2.6" fill="#dac2d8" fill-opacity="0.9"/>
<circle cx="363.6" cy="475.4" r="1.7" fill="#dac2d8" fill-opacity="0.9"/>
<circle cx="362.6" cy="474.2" r="1.9" fill="#dac2d8" fill-opacity="0.9"/>
<circle cx="359.4" cy="472.9" r="0.8" fill="#dac2d8" fill-opacity="0.9"/>
<circle cx="362.7" cy="477.2" r="2.7" fill="#d3b8d1" fill-opacity="0.9"/>
<circle cx="364.3" cy="479.8" r="1.5" fill="#d3b8d1" fill-opacity="0.9"/>
<circle cx="365.0" cy="474.7" r="2.4" fill="#d3b8d1" fill-opacity="0.9"/>
<circle cx="374.1" cy="480.8" r="2.0" fill="#dfc8dd" fill-opacity="0.9"/>
<circle cx="375.5" cy="477.2" r="2.4" fill="#dfc8dd" fill-opacity="0.9"/>
<circle cx="369.6" cy="480.2" r="2.9" fill="#dfc8dd" fill-opacity="0.9"/>
<circle cx="371.6" cy="480.5" r="2.0" fill="#dfc8dd" fill-opacity="0.9"/>
<circle cx="376.0" cy="488.3" r="2.0" fill="#dac2d8" fill-opacity="0.9"/>
<circle cx="374.6" cy="486.2" r="1.8" fill="#dac2d8" fill-opacity="0.9"/>
<circle cx="380.8" cy="489.9" r="2.8" fill="#d3b8d1" fill-opacity="0.9"/>
<circle cx="378.9" cy="489.0" r="2.3" fill="#d3b8d1" fill-opacity="0.9"/>
<circle cx="379.2" cy="487.2" r="2.9" fill="#d3b8d1" fill-opacity="0.9"/>
<circle cx="378.2" cy="488.8" r="1.6" fill="#d3b8d1" fill-opacity="0.9"/>
<circle cx="383.1" cy="490.9" r="1.6" fill="#d3b8d1" fill-opacity="0.9"/>
<circle cx="385.4" cy="495.6" r="1.9" fill="#d3b8d1" fill-opacity="0.9"/>
<circle cx="385.0" cy="491.3" r="2.3" fill="#d3b8d1" fill-opacity="0.9"/>
<circle cx="387.2" cy="492.5" r="2.0" fill="#d3b8d1" fill-opacity="0.9"/>
<circle cx="382.4" cy="492.3" r="2.2" fill="#d3b8d1" fill-opacity="0.9"/>
<circle cx="388.3" cy="498.1" r="2.8" fill="#dfc8dd" fill-opacity="0.9"/>
<circle cx="389.4" cy="500.3" r="2.8" fill="#dfc8dd" fill-opacity="0.9"/>
<circle cx="386.5" cy="498.1" r="2.3" fill="#dfc8dd" fill-opacity="0.9"/>
<circle cx="386.4" cy="501.4" r="2.1" fill="#dfc8dd" fill-opacity="0.9"/>
<circle cx="393.2" cy="509.3" r="2.1" fill="#d3b8d1" fill-opacity="0.9"/>
<circle cx="394.1" cy="506.0" r="1.6" fill="#d3b8d1" fill-opacity="0.9"/>
<circle cx="400.6" cy="510.8" r="2.4" fill="#dac2d8" fill-opacity="0.9"/>
<circle cx="400.7" cy="512.1" r="1.7" fill="#dac2d8" fill-opacity="0.9"/>
<circle cx="399.8" cy="508.9" r="1.9" fill="#dac2d8" fill-opacity="0.9"/>
<circle cx="401.6" cy="514.0" r="0.7" fill="#dac2d8" fill-opacity="0.9"/>
<circle cx="402.1" cy="519.2" r="2.8" fill="#d3b8d1" fill-opacity="0.9"/>
<circle cx="402.3" cy="516.8" r="2.9" fill="#d3b8d1" fill-opacity="0.9"/>
<circle cx="404.8" cy="517.9" r="1.6" fill="#d3b8d1" fill-opacity="0.9"/>
<circle cx="405.6" cy="521.2" r="1.8" fill="#d3b8d1" fill-opacity="0.9"/>
<circle cx="404.5" cy="516.4" r="3.0" fill="#d3b8d1" fill-opacity="0.9"/>
<circle cx="408.5" cy="516.8" r="2.9" fill="#d3b8d1" fill-opacity="0.9"/>
<circle cx="410.8" cy="515.3" r="2.1" fill="#d3b8d1" fill-opacity="0.9"/>
<circle cx="411.8" cy="519.2" r="2.7" fill="#d3b8d1" fill-opacity="0.9"/>
<circle cx="411.4" cy="518.4" r="2.7" fill="#d3b8d1" fill-opacity="0.9"/>
<circle cx="409.1" cy="516.4" r="2.4" fill="#d3b8d1" fill-opacity="0.9"/>
<circle cx="410.4" cy="530.0" r="1.6" fill="#d6bcd4" fill-opacity="0.9"/>
<circle cx="408.9" cy="527.7" r="1.6" fill="#d6bcd4" fill-opacity="0.9"/>
<circle cx="414.7" cy="526.3" r="2.1" fill="#d6bcd4" fill-opacity="0.9"/>
<circle cx="414.7" cy="528.6" r="2.7" fill="#d6bcd4" fill-opacity="0.9"/>
<circle cx="415.8" cy="529.2" r="2.3" fill="#d6bcd4" fill-opacity="0.9"/>
<circle cx="413.9" cy="527.3" r="2.0" fill="#d6bcd4" fill-opacity="0.9"/>
<circle cx="411.7" cy="527.2" r="2.0" fill="#d6bcd4" fill-opacity="0.9"/>
<circle cx="413.4" cy="524.9" r="0.8" fill="#d6bcd4" fill-opacity="0.9"/>
<circle cx="418.6" cy="533.5" r="1.5" fill="#d3b8d1" fill-opacity="0.9"/>
<circle cx="418.8" cy="531.1" r="1.9" fill="#d3b8d1" fill-opacity="0.9"/>
<circle cx="423.3" cy="531.6" r="1.5" fill="#d3b8d1" fill-opacity="0.9"/>
<circle cx="419.4" cy="530.9" r="1.8" fill="#d3b8d1" fill-opacity="0.9"/>
<circle cx="417.2" cy="530.9" r="0.8" fill="#d3b8d1" fill-opacity="0.9"/>
<circle cx="416.6" cy="537.5" r="2.6" fill="#d3b8d1" fill-opacity="0.9"/>
<circle cx="418.2" cy="532.7" r="2.3" fill="#d3b8d1" fill-opacity="0.9"/>
<circle cx="419.9" cy="540.7" r="1.8" fill="#d6bcd4" fill-opacity="0.9"/>
<circle cx="423.3" cy="539.5" r="2.4" fill="#d6bcd4" fill-opacity="0.9"/>
<circle cx="423.5" cy="540.1" r="1.7" fill="#d6bcd4" fill-opacity="0.9"/>
<circle cx="423.8" cy="538.1" r="1.6" fill="#d6bcd4" fill-opacity="0.9"/>
<circle cx="427.1" cy="540.2" r="2.0" fill="#d3b8d1" fill-opacity="0.9"/>
<circle cx="425.9" cy="535.7" r="2.1" fill="#d3b8d1" fill-opacity="0.9"/>
<circle cx="426.2" cy="538.2" r="2.7" fill="#d3b8d1" fill-opacity="0.9"/>
<circle cx="425.6" cy="543.2" r="0.9" fill="#d3b8d1" fill-opacity="0.9"/>
<circle cx="427.1" cy="547.4" r="2.7" fill="#dfc8dd" fill-opacity="0.9"/>
<circle cx="429.5" cy="546.9" r="2.6" fill="#dfc8dd" fill-opacity="0.9"/>
<circle cx="427.0" cy="548.0" r="2.0" fill="#dfc8dd" fill-opacity="0.9"/>
<circle cx="429.8" cy="547.9" r="2.6" fill="#dfc8dd" fill-opacity="0.9"/>
<circle cx="428.4" cy="547.1" r="2.6" fill="#dfc8dd" fill-opacity="0.9"/>
<circle cx="433.3" cy="549.7" r="2.4" fill="#d3b8d1" fill-opacity="0.9"/>
<circle cx="432.6" cy="552.4" r="2.9" fill="#d3b8d1" fill-opacity="0.9"/>
<circle cx="435.9" cy="550.7" r="1.1" fill="#d3b8d1" fill-opacity="0.9"/>
<circle cx="439.3" cy="554.2" r="2.9" fill="#d6bcd4" fill-opacity="0.9"/>
<circle cx="438.5" cy="556.4" r="2.4" fill="#d6bcd4" fill-opacity="0.9"/>
<circle cx="438.8" cy="552.5" r="0.9" fill="#d6bcd4" fill-opacity="0.9"/>
<circle cx="447.0" cy="566.6" r="1.5" fill="#d3b8d1" fill-opacity="0.9"/>
<circle cx="445.4" cy="564.2" r="2.4" fill="#d3b8d1" fill-opacity="0.9"/>
<circle cx="446.7" cy="566.5" r="1.7" fill="#d3b8d1" fill-opacity="0.9"/>
<circle cx="448.3" cy="567.4" r="2.3" fill="#d3b8d1" fill-opacity="0.9"/>
<circle cx="447.9" cy="567.2" r="2.0" fill="#d3b8d1" fill-opacity="0.9"/>
<circle cx="451.0" cy="562.8" r="2.1" fill="#d6bcd4" fill-opacity="0.9"/>
<circle cx="454.6" cy="560.6" r="2.0" fill="#d6bcd4" fill-opacity="0.9"/>
<circle cx="450.7" cy="563.5" r="2.3" fill="#d6bcd4" fill-opacity="0.9"/>
<circle cx="448.4" cy="563.6" r="2.8" fill="#d6bcd4" fill-opacity="0.9"/>
<circle cx="452.2" cy="562.1" r="2.5" fill="#d6bcd4" fill-opacity="0.9"/>
<circle cx="455.1" cy="561.4" r="0.9" fill="#d6bcd4" fill-opacity="0.9"/>
<circle cx="457.8" cy="568.5" r="2.6" fill="#d3b8d1" fill-opacity="0.9"/>
<circle cx="459.5" cy="569.7" r="2.0" fill="#d3b8d1" fill-opacity="0.9"/>
<circle cx="455.5" cy="571.6" r="0.8" fill="#d3b8d1" fill-opacity="0.9"/>
<circle cx="460.9" cy="568.1" r="2.5" fill="#dfc8dd" fill-opacity="0.9"/>
<circle cx="457.4" cy="566.1" r="3.0" fill="#dfc8dd" fill-opacity="0.9"/>
<circle cx="452.9" cy="567.9" r="0.7" fill="#dfc8dd" fill-opacity="0.9"/>
<circle cx="465.5" cy="578.6" r="2.3" fill="#dac2d8" fill-opacity="0.9"/>
<circle cx="465.9" cy="582.6" r="1.8" fill="#dfc8dd" fill-opacity="0.9"/>
<circle cx="468.9" cy="579.9" r="2.2" fill="#dac2d8" fill-opacity="0.9"/>
<circle cx="469.9" cy="575.9" r="1.7" fill="#dac2d8" fill-opacity="0.9"/>
<circle cx="471.5" cy="328.5" r="2.0" fill="#d6bcd4" fill-opacity="0.9"/>
<circle cx="465.3" cy="326.5" r="0.9" fill="#d6bcd4" fill-opacity="0.9"/>
<circle cx="474.3" cy="330.7" r="2.0" fill="#dac2d8" fill-opacity="0.9"/>
<circle cx="465.4" cy="338.4" r="0.8" fill="#dac2d8" fill-opacity="0.9"/>
<circle cx="480.3" cy="325.0" r="2.8" fill="#d6bcd4" fill-opacity="0.9"/>
<circle cx="478.2" cy="321.5" r="1.9" fill="#d6bcd4" fill-opacity="0.9"/>
<circle cx="477.5" cy="330.5" r="0.9" fill="#d6bcd4" fill-opacity="0.9"/>
<circle cx="475.7" cy="322.4" r="1.9" fill="#d6bcd4" fill-opacity="0.9"/>
<circle cx="474.3" cy="323.6" r="3.0" fill="#d6bcd4" fill-opacity="0.9"/>
<circle cx="485.2" cy="321.5" r="2.7" fill="#d3b8d1" fill-opacity="0.9"/>
<circle cx="484.1" cy="322.1" r="2.6" fill="#d3b8d1" fill-opacity="0.9"/>
<circle cx="494.1" cy="316.9" r="2.9" fill="#d3b8d1" fill-opacity="0.9"/>
<circle cx="497.5" cy="319.1" r="2.5" fill="#dfc8dd" fill-opacity="0.9"/>
<circle cx="498.4" cy="319.0" r="2.3" fill="#dfc8dd" fill-opacity="0.9"/>
<circle cx="503.4" cy="323.8" r="2.4" fill="#dac2d8" fill-opacity="0.9"/>
<circle cx="503.9" cy="319.3" r="2.7" fill="#dac2d8" fill-opacity="0.9"/>
<circle cx="500.5" cy="322.3" r="0.9" fill="#dac2d8" fill-opacity="0.9"/>
<circle cx="510.8" cy="318.7" r="2.4" fill="#dac2d8" fill-opacity="0.9"/>
<circle cx="512.0" cy="319.7" r="1.7" fill="#dac2d8" fill-opacity="0.9"/>
<circle cx="509.0" cy="319.9" r="2.2" fill="#dac2d8" fill-opacity="0.9"/>
<circle cx="513.3" cy="321.0" r="2.7" fill="#dac2d8" fill-opacity="0.9"/>
<circle cx="515.4" cy="317.9" r="2.0" fill="#dac2d8" fill-opacity="0.9"/>
<circle cx="512.8" cy="317.3" r="2.4" fill="#dac2d8" fill-opacity="0.9"/>
<circle cx="516.3" cy="315.1" r="1.7" fill="#d6bcd4" fill-opacity="0.9"/>
<circle cx="518.9" cy="318.6" r="2.7" fill="#d6bcd4" fill-opacity="0.9"/>
<circle cx="519.6" cy="328.3" r="0.6" fill="#d6bcd4" fill-opacity="0.9"/>
<circle cx="523.9" cy="313.5" r="2.3" fill="#d3b8d1" fill-opacity="0.9"/>
<circle cx="523.1" cy="313.4" r="2.1" fill="#d3b8d1" fill-opacity="0.9"/>
<circle cx="533.8" cy="319.5" r="1.9" fill="#d6bcd4" fill-opacity="0.9"/>
<circle cx="532.5" cy="318.0" r="2.1" fill="#d6bcd4" fill-opacity="0.9"/>
<circle cx="534.9" cy="316.2" r="2.0" fill="#d6bcd4" fill-opacity="0.9"/>
<circle cx="532.6" cy="319.2" r="1.8" fill="#d6bcd4" fill-opacity="0.9"/>
<circle cx="529.8" cy="320.0" r="2.2" fill="#d6bcd4" fill-opacity="0.9"/>
<circle cx="532.4" cy="317.0" r="2.1" fill="#d6bcd4" fill-opacity="0.9"/>
<circle cx="533.0" cy="319.9" r="2.0" fill="#d6bcd4" fill-opacity="0.9"/>
<circle cx="533.0" cy="320.7" r="0.8" fill="#d6bcd4" fill-opacity="0.9"/>
<circle cx="533.8" cy="323.6" r="2.8" fill="#d6bcd4" fill-opacity="0.9"/>
<circle cx="532.8" cy="320.6" r="1.6" fill="#d6bcd4" fill-opacity="0.9"/>
<circle cx="534.4" cy="322.2" r="1.9" fill="#d6bcd4" fill-opacity="0.9"/>
<circle cx="530.5" cy="324.3" r="1.9" fill="#d6bcd4" fill-opacity="0.9"/>
<circle cx="544.8" cy="324.0" r="1.7" fill="#dfc8dd" fill-opacity="0.9"/>
<circle cx="547.7" cy="320.9" r="1.7" fill="#dfc8dd" fill-opacity="0.9"/>
<circle cx="545.6" cy="319.7" r="2.2" fill="#dfc8dd" fill-opacity="0.9"/>
<circle cx="546.4" cy="319.3" r="1.9" fill="#dfc8dd" fill-opacity="0.9"/>
<circle cx="543.2" cy="319.8" r="2.0" fill="#dfc8dd" fill-opacity="0.9"/>
<circle cx="542.6" cy="320.8" r="0.7" fill="#dfc8dd" fill-opacity="0.9"/>
<circle cx="546.5" cy="320.9" r="2.0" fill="#dfc8dd" fill-opacity="0.9"/>
<circle cx="549.0" cy="318.7" r="2.8" fill="#dfc8dd" fill-opacity="0.9"/>
<circle cx="549.2" cy="321.9" r="2.2" fill="#dfc8dd" fill-opacity="0.9"/>
<circle cx="551.0" cy="322.7" r="0.9" fill="#dfc8dd" fill-opacity="0.9"/>
<circle cx="556.9" cy="317.0" r="2.7" fill="#dac2d8" fill-opacity="0.9"/>
<circle cx="556.6" cy="316.7" r="2.5" fill="#dac2d8" fill-opacity="0.9"/>
<circle cx="553.6" cy="313.8" r="2.5" fill="#dac2d8" fill-opacity="0.9"/>
<circle cx="559.7" cy="319.7" r="2.1" fill="#dac2d8" fill-opacity="0.9"/>
<circle cx="556.9" cy="319.2" r="2.0" fill="#dac2d8" fill-opacity="0.9"/>
<circle cx="556.8" cy="320.2" r="1.7" fill="#dac2d8" fill-opacity="0.9"/>
<circle cx="556.7" cy="316.6" r="0.6" fill="#dac2d8" fill-opacity="0.9"/>
<circle cx="560.5" cy="319.5" r="2.6" fill="#dfc8dd" fill-opacity="0.9"/>
<circle cx="561.6" cy="321.2" r="1.5" fill="#dfc8dd" fill-opacity="0.9"/>
<circle cx="562.4" cy="320.6" r="1.6" fill="#dfc8dd" fill-opacity="0.9"/>
<circle cx="565.0" cy="322.8" r="1.5" fill="#dac2d8" fill-opacity="0.9"/>
<circle cx="566.8" cy="322.4" r="2.3" fill="#dac2d8" fill-opacity="0.9"/>
<circle cx="561.5" cy="321.1" r="1.1" fill="#dac2d8" fill-opacity="0.9"/>
<circle cx="568.0" cy="316.3" r="2.4" fill="#dac2d8" fill-opacity="0.9"/>
<circle cx="568.7" cy="320.4" r="2.1" fill="#dac2d8" fill-opacity="0.9"/>
<circle cx="566.6" cy="319.8" r="2.8" fill="#dac2d8" fill-opacity="0.9"/>
<circle cx="570.4" cy="318.8" r="1.6" fill="#dac2d8" fill-opacity="0.9"/>
<circle cx="566.4" cy="320.8" r="2.0" fill="#dac2d8" fill-opacity="0.9"/>
<circle cx="570.2" cy="320.1" r="0.9" fill="#dac2d8" fill-opacity="0.9"/>
<circle cx="578.3" cy="319.5" r="1.9" fill="#dac2d8" fill-opacity="0.9"/>
<circle cx="579.2" cy="318.0" r="2.3" fill="#dac2d8" fill-opacity="0.9"/>
<circle cx="582.0" cy="319.1" r="2.7" fill="#dac2d8" fill-opacity="0.9"/>
<circle cx="583.2" cy="317.1" r="1.0" fill="#dac2d8" fill-opacity="0.9"/>
<circle cx="581.7" cy="312.8" r="1.7" fill="#d6bcd4" fill-opacity="0.9"/>
<circle cx="582.1" cy="315.0" r="2.3" fill="#d6bcd4" fill-opacity="0.9"/>
<circle cx="581.9" cy="313.8" r="2.6" fill="#d6bcd4" fill-opacity="0.9"/>
<circle cx="582.6" cy="314.9" r="1.9" fill="#d6bcd4" fill-opacity="0.9"/>
<circle cx="583.4" cy="314.5" r="2.3" fill="#d6bcd4" fill-opacity="0.9"/>
<circle cx="588.0" cy="317.8" r="0.7" fill="#d6bcd4" fill-opacity="0.9"/>
<circle cx="593.4" cy="315.9" r="2.8" fill="#d3b8d1" fill-opacity="0.9"/>
<circle cx="592.7" cy="313.9" r="2.3" fill="#d3b8d1" fill-opacity="0.9"/>
<circle cx="597.2" cy="313.1" r="2.8" fill="#d6bcd4" fill-opacity="0.9"/>
<circle cx="595.7" cy="312.8" r="2.1" fill="#d6bcd4" fill-opacity="0.9"/>
<circle cx="602.9" cy="316.9" r="1.8" fill="#dfc8dd" fill-opacity="0.9"/>
<circle cx="606.7" cy="315.1" r="2.4" fill="#dfc8dd" fill-opacity="0.9"/>
<circle cx="602.1" cy="315.1" r="1.7" fill="#dfc8dd" fill-opacity="0.9"/>
<circle cx="599.8" cy="318.9" r="2.4" fill="#dfc8dd" fill-opacity="0.9"/>
<circle cx="605.6" cy="307.3" r="1.9" fill="#d6bcd4" fill-opacity="0.9"/>
<circle cx="605.7" cy="313.2" r="0.9" fill="#d6bcd4" fill-opacity="0.9"/>
<circle cx="610.1" cy="310.6" r="1.8" fill="#dfc8dd" fill-opacity="0.9"/>
<circle cx="608.2" cy="311.2" r="1.7" fill="#dfc8dd" fill-opacity="0.9"/>
<circle cx="609.7" cy="315.4" r="1.8" fill="#dfc8dd" fill-opacity="0.9"/>
<circle cx="611.4" cy="310.5" r="2.2" fill="#dfc8dd" fill-opacity="0.9"/>
<circle cx="611.6" cy="311.1" r="2.8" fill="#dfc8dd" fill-opacity="0.9"/>
<circle cx="612.7" cy="310.2" r="0.9" fill="#dfc8dd" fill-opacity="0.9"/>
<circle cx="613.4" cy="308.8" r="1.8" fill="#d3b8d1" fill-opacity="0.9"/>
<circle cx="622.1" cy="309.8" r="0.9" fill="#d3b8d1" fill-opacity="0.9"/>
<circle cx="618.5" cy="308.2" r="3.0" fill="#d6bcd4" fill-opacity="0.9"/>
<circle cx="616.9" cy="307.3" r="2.0" fill="#d6bcd4" fill-opacity="0.9"/>
<circle cx="616.6" cy="306.0" r="1.8" fill="#d6bcd4" fill-opacity="0.9"/>
<circle cx="619.3" cy="309.2" r="1.9" fill="#d6bcd4" fill-opacity="0.9"/>
<circle cx="619.5" cy="306.1" r="1.9" fill="#d6bcd4" fill-opacity="0.9"/>
<circle cx="624.9" cy="302.3" r="2.5" fill="#dac2d8" fill-opacity="0.9"/>
<circle cx="626.6" cy="302.6" r="2.3" fill="#dac2d8" fill-opacity="0.9"/>
<circle cx="626.4" cy="302.5" r="2.8" fill="#dac2d8" fill-opacity="0.9"/>
<circle cx="624.8" cy="306.9" r="2.0" fill="#d3b8d1" fill-opacity="0.9"/>
<circle cx="627.6" cy="303.6" r="2.7" fill="#d3b8d1" fill-opacity="0.9"/>
<circle cx="628.0" cy="306.0" r="2.2" fill="#d3b8d1" fill-opacity="0.9"/>
<circle cx="631.7" cy="300.0" r="2.6" fill="#d3b8d1" fill-opacity="0.9"/>
<circle cx="631.8" cy="298.8" r="3.0" fill="#d3b8d1" fill-opacity="0.9"/>
<circle cx="638.3" cy="302.4" r="0.9" fill="#d3b8d1" fill-opacity="0.9"/>
<circle cx="636.3" cy="297.7" r="2.3" fill="#d6bcd4" fill-opacity="0.9"/>
<circle cx="639.1" cy="301.5" r="0.8" fill="#d6bcd4" fill-opacity="0.9"/>
<circle cx="636.8" cy="296.6" r="1.5" fill="#d6bcd4" fill-opacity="0.9"/>
<circle cx="635.3" cy="295.4" r="2.4" fill="#d6bcd4" fill-opacity="0.9"/>
<circle cx="638.1" cy="295.2" r="1.6" fill="#dfc8dd" fill-opacity="0.9"/>
<circle cx="641.2" cy="291.0" r="2.8" fill="#dfc8dd" fill-opacity="0.9"/>
<circle cx="640.1" cy="287.0" r="1.1" fill="#dfc8dd" fill-opacity="0.9"/>
<circle cx="645.4" cy="289.7" r="2.3" fill="#d3b8d1" fill-opacity="0.9"/>
<circle cx="645.5" cy="288.4" r="2.8" fill="#d3b8d1" fill-opacity="0.9"/>
<circle cx="644.8" cy="290.8" r="2.5" fill="#d3b8d1" fill-opacity="0.9"/>
<circle cx="641.9" cy="286.9" r="0.9" fill="#d3b8d1" fill-opacity="0.9"/>
<circle cx="650.8" cy="287.3" r="2.4" fill="#dac2d8" fill-opacity="0.9"/>
<circle cx="652.5" cy="287.6" r="2.2" fill="#dac2d8" fill-opacity="0.9"/>
<circle cx="649.5" cy="282.9" r="2.0" fill="#dac2d8" fill-opacity="0.9"/>
<circle cx="663.7" cy="288.2" r="1.9" fill="#dac2d8" fill-opacity="0.9"/>
<circle cx="663.9" cy="287.7" r="2.9" fill="#dac2d8" fill-opacity="0.9"/>
<circle cx="663.1" cy="290.2" r="2.3" fill="#dac2d8" fill-opacity="0.9"/>
<circle cx="662.7" cy="286.8" r="2.3" fill="#d6bcd4" fill-opacity="0.9"/>
<circle cx="661.6" cy="287.1" r="1.9" fill="#d6bcd4" fill-opacity="0.9"/>
<circle cx="662.4" cy="285.8" r="2.3" fill="#d6bcd4" fill-opacity="0.9"/>
<circle cx="664.4" cy="280.2" r="1.0" fill="#d6bcd4" fill-opacity="0.9"/>
<circle cx="487.1" cy="343.8" r="1.8" fill="#dfc8dd" fill-opacity="0.9"/>
<circle cx="489.2" cy="341.9" r="2.9" fill="#dfc8dd" fill-opacity="0.9"/>
<circle cx="497.2" cy="344.0" r="1.6" fill="#d3b8d1" fill-opacity="0.9"/>
<circle cx="498.0" cy="342.2" r="2.4" fill="#d3b8d1" fill-opacity="0.9"/>
<circle cx="495.3" cy="342.6" r="1.8" fill="#d3b8d1" fill-opacity="0.9"/>
<circle cx="494.3" cy="347.0" r="0.9" fill="#d3b8d1" fill-opacity="0.9"/>
<circle cx="494.2" cy="342.0" r="1.8" fill="#d6bcd4" fill-opacity="0.9"/>
<circle cx="494.6" cy="343.6" r="1.9" fill="#d6bcd4" fill-opacity="0.9"/>
<circle cx="504.1" cy="344.2" r="2.8" fill="#dfc8dd" fill-opacity="0.9"/>
<circle cx="503.8" cy="346.8" r="1.6" fill="#dfc8dd" fill-opacity="0.9"/>
<circle cx="506.4" cy="347.9" r="2.3" fill="#dfc8dd" fill-opacity="0.9"/>
<circle cx="513.9" cy="352.7" r="1.1" fill="#dfc8dd" fill-opacity="0.9"/>
<circle cx="509.5" cy="346.9" r="1.8" fill="#d3b8d1" fill-opacity="0.9"/>
<circle cx="509.5" cy="347.4" r="2.5" fill="#d3b8d1" fill-opacity="0.9"/>
<circle cx="509.7" cy="345.3" r="2.4" fill="#d3b8d1" fill-opacity="0.9"/>
<circle cx="514.0" cy="346.8" r="2.4" fill="#d6bcd4" fill-opacity="0.9"/>
<circle cx="515.5" cy="350.0" r="1.9" fill="#d6bcd4" fill-opacity="0.9"/>
<circle cx="516.0" cy="348.1" r="2.7" fill="#dac2d8" fill-opacity="0.9"/>
<circle cx="514.0" cy="343.5" r="2.4" fill="#dac2d8" fill-opacity="0.9"/>
<circle cx="521.8" cy="353.2" r="1.8" fill="#dfc8dd" fill-opacity="0.9"/>
<circle cx="528.3" cy="359.2" r="2.2" fill="#d3b8d1" fill-opacity="0.9"/>
<circle cx="534.2" cy="359.5" r="1.7" fill="#d3b8d1" fill-opacity="0.9"/>
<circle cx="529.0" cy="353.6" r="2.5" fill="#d3b8d1" fill-opacity="0.9"/>
<circle cx="526.5" cy="356.3" r="2.3" fill="#d3b8d1" fill-opacity="0.9"/>
<circle cx="527.4" cy="357.1" r="2.7" fill="#d3b8d1" fill-opacity="0.9"/>
<circle cx="534.7" cy="357.0" r="2.5" fill="#dfc8dd" fill-opacity="0.9"/>
<circle cx="532.1" cy="357.7" r="2.8" fill="#dfc8dd" fill-opacity="0.9"/>
<circle cx="530.9" cy="359.6" r="2.1" fill="#dfc8dd" fill-opacity="0.9"/>
<circle cx="534.2" cy="358.4" r="2.8" fill="#dfc8dd" fill-opacity="0.9"/>
<circle cx="535.6" cy="356.9" r="2.3" fill="#dfc8dd" fill-opacity="0.9"/>
<circle cx="538.1" cy="357.3" r="0.6" fill="#dfc8dd" fill-opacity="0.9"/>
<circle cx="532.5" cy="361.1" r="2.0" fill="#dfc8dd" fill-opacity="0.9"/>
<circle cx="534.6" cy="358.8" r="2.2" fill="#dfc8dd" fill-opacity="0.9"/>
<circle cx="534.2" cy="360.2" r="1.0" fill="#dfc8dd" fill-opacity="0.9"/>
<circle cx="535.7" cy="363.2" r="2.1" fill="#d6bcd4" fill-opacity="0.9"/>
<circle cx="537.9" cy="365.4" r="2.9" fill="#d6bcd4" fill-opacity="0.9"/>
<circle cx="539.2" cy="362.9" r="1.7" fill="#d6bcd4" fill-opacity="0.9"/>
<circle cx="544.6" cy="367.6" r="2.0" fill="#d3b8d1" fill-opacity="0.9"/>
<circle cx="542.6" cy="373.1" r="2.5" fill="#dac2d8" fill-opacity="0.9"/>
<circle cx="547.6" cy="371.3" r="1.8" fill="#dac2d8" fill-opacity="0.9"/>
<circle cx="554.6" cy="370.4" r="0.6" fill="#dac2d8" fill-opacity="0.9"/>
<circle cx="549.6" cy="374.9" r="1.6" fill="#dfc8dd" fill-opacity="0.9"/>
<circle cx="548.8" cy="377.1" r="2.5" fill="#dfc8dd" fill-opacity="0.9"/>
<circle cx="546.8" cy="375.9" r="0.8" fill="#dfc8dd" fill-opacity="0.9"/>
<circle cx="552.7" cy="377.8" r="1.5" fill="#dfc8dd" fill-opacity="0.9"/>
<circle cx="552.6" cy="374.3" r="2.3" fill="#dfc8dd" fill-opacity="0.9"/>
<circle cx="554.5" cy="374.3" r="2.1" fill="#dfc8dd" fill-opacity="0.9"/>
<circle cx="554.4" cy="375.7" r="2.5" fill="#dfc8dd" fill-opacity="0.9"/>
<circle cx="558.0" cy="381.0" r="2.0" fill="#dac2d8" fill-opacity="0.9"/>
<circle cx="560.6" cy="381.2" r="2.6" fill="#dac2d8" fill-opacity="0.9"/>
<circle cx="559.6" cy="383.8" r="1.9" fill="#dac2d8" fill-opacity="0.9"/>
<circle cx="560.9" cy="379.7" r="2.1" fill="#dac2d8" fill-opacity="0.9"/>
<circle cx="559.6" cy="380.4" r="1.9" fill="#dac2d8" fill-opacity="0.9"/>
<circle cx="562.8" cy="387.9" r="2.7" fill="#d6bcd4" fill-opacity="0.9"/>
<circle cx="565.3" cy="389.0" r="2.6" fill="#d6bcd4" fill-opacity="0.9"/>
<circle cx="565.2" cy="387.3" r="2.3" fill="#d6bcd4" fill-opacity="0.9"/>
<circle cx="565.6" cy="387.2" r="1.5" fill="#d6bcd4" fill-opacity="0.9"/>
<circle cx="565.7" cy="388.4" r="2.4" fill="#d6bcd4" fill-opacity="0.9"/>
<circle cx="570.3" cy="391.9" r="2.7" fill="#d6bcd4" fill-opacity="0.9"/>
<circle cx="568.8" cy="392.3" r="0.7" fill="#d6bcd4" fill-opacity="0.9"/>
<circle cx="570.9" cy="394.1" r="2.5" fill="#dfc8dd" fill-opacity="0.9"/>
<circle cx="567.9" cy="403.6" r="0.9" fill="#dfc8dd" fill-opacity="0.9"/>
<circle cx="580.1" cy="406.1" r="2.8" fill="#d6bcd4" fill-opacity="0.9"/>
<circle cx="579.4" cy="404.2" r="2.2" fill="#d6bcd4" fill-opacity="0.9"/>
<circle cx="576.1" cy="400.6" r="2.1" fill="#d6bcd4" fill-opacity="0.9"/>
<circle cx="577.8" cy="409.0" r="2.7" fill="#d6bcd4" fill-opacity="0.9"/>
<circle cx="579.8" cy="413.1" r="2.2" fill="#d3b8d1" fill-opacity="0.9"/>
<circle cx="582.8" cy="416.0" r="2.7" fill="#d3b8d1" fill-opacity="0.9"/>
<circle cx="582.9" cy="415.0" r="2.1" fill="#d3b8d1" fill-opacity="0.9"/>
<circle cx="580.4" cy="415.4" r="2.4" fill="#d3b8d1" fill-opacity="0.9"/>
<circle cx="587.7" cy="410.6" r="0.7" fill="#d3b8d1" fill-opacity="0.9"/>
<circle cx="589.6" cy="419.8" r="3.0" fill="#d6bcd4" fill-opacity="0.9"/>
<circle cx="588.6" cy="416.8" r="1.6" fill="#d6bcd4" fill-opacity="0.9"/>
<circle cx="588.8" cy="419.6" r="2.3" fill="#d6bcd4" fill-opacity="0.9"/>
<circle cx="594.2" cy="426.6" r="1.8" fill="#d6bcd4" fill-opacity="0.9"/>
<circle cx="595.5" cy="426.5" r="2.4" fill="#d6bcd4" fill-opacity="0.9"/>
<circle cx="596.5" cy="422.5" r="2.4" fill="#d6bcd4" fill-opacity="0.9"/>
<circle cx="591.0" cy="427.6" r="2.5" fill="#d6bcd4" fill-opacity="0.9"/>
<circle cx="592.7" cy="427.7" r="2.6" fill="#d6bcd4" fill-opacity="0.9"/>
<circle cx="595.5" cy="431.4" r="2.5" fill="#dfc8dd" fill-opacity="0.9"/>
<circle cx="596.3" cy="429.6" r="1.9" fill="#dfc8dd" fill-opacity="0.9"/>
<circle cx="596.9" cy="429.1" r="2.7" fill="#dfc8dd" fill-opacity="0.9"/>
<circle cx="598.2" cy="424.9" r="0.7" fill="#dfc8dd" fill-opacity="0.9"/>
<circle cx="596.4" cy="431.6" r="2.0" fill="#dfc8dd" fill-opacity="0.9"/>
<circle cx="597.2" cy="429.9" r="2.5" fill="#dfc8dd" fill-opacity="0.9"/>
<circle cx="598.3" cy="431.3" r="2.5" fill="#dfc8dd" fill-opacity="0.9"/>
<circle cx="598.6" cy="432.9" r="2.5" fill="#dfc8dd" fill-opacity="0.9"/>
<circle cx="600.7" cy="431.3" r="2.8" fill="#dfc8dd" fill-opacity="0.9"/>
<circle cx="606.8" cy="433.7" r="2.9" fill="#dac2d8" fill-opacity="0.9"/>
<circle cx="604.5" cy="435.7" r="1.1" fill="#dac2d8" fill-opacity="0.9"/>
<circle cx="611.5" cy="440.0" r="2.2" fill="#dac2d8" fill-opacity="0.9"/>
<circle cx="609.0" cy="438.2" r="2.5" fill="#dac2d8" fill-opacity="0.9"/>
<circle cx="616.9" cy="441.9" r="1.5" fill="#d3b8d1" fill-opacity="0.9"/>
<circle cx="614.7" cy="442.5" r="1.6" fill="#d3b8d1" fill-opacity="0.9"/>
<circle cx="613.6" cy="444.1" r="1.8" fill="#d3b8d1" fill-opacity="0.9"/>
<circle cx="614.3" cy="442.5" r="2.3" fill="#d3b8d1" fill-opacity="0.9"/>
<circle cx="615.3" cy="447.6" r="2.9" fill="#dfc8dd" fill-opacity="0.9"/>
<circle cx="614.4" cy="446.7" r="2.9" fill="#dfc8dd" fill-opacity="0.9"/>
<circle cx="614.0" cy="446.5" r="2.8" fill="#dfc8dd" fill-opacity="0.9"/>
<circle cx="614.8" cy="444.4" r="1.5" fill="#dfc8dd" fill-opacity="0.9"/>
<circle cx="620.7" cy="446.1" r="1.6" fill="#dfc8dd" fill-opacity="0.9"/>
<circle cx="619.8" cy="458.6" r="1.9" fill="#d6bcd4" fill-opacity="0.9"/>
<circle cx="619.5" cy="455.7" r="0.7" fill="#d6bcd4" fill-opacity="0.9"/>
<circle cx="628.3" cy="462.8" r="2.2" fill="#d3b8d1" fill-opacity="0.9"/>
<circle cx="627.3" cy="463.2" r="1.9" fill="#d3b8d1" fill-opacity="0.9"/>
<circle cx="630.7" cy="467.8" r="2.0" fill="#dac2d8" fill-opacity="0.9"/>
<circle cx="632.4" cy="463.6" r="2.5" fill="#dac2d8" fill-opacity="0.9"/>
<circle cx="632.1" cy="462.6" r="0.7" fill="#dac2d8" fill-opacity="0.9"/>
<circle cx="638.2" cy="469.5" r="2.9" fill="#dac2d8" fill-opacity="0.9"/>
<circle cx="637.3" cy="466.9" r="1.7" fill="#dac2d8" fill-opacity="0.9"/>
<circle cx="637.6" cy="465.8" r="0.7" fill="#dac2d8" fill-opacity="0.9"/>
<circle cx="643.6" cy="472.5" r="1.6" fill="#dac2d8" fill-opacity="0.9"/>
<circle cx="640.0" cy="472.2" r="2.1" fill="#dac2d8" fill-opacity="0.9"/>
<circle cx="638.5" cy="471.8" r="1.7" fill="#dac2d8" fill-opacity="0.9"/>
<circle cx="640.2" cy="472.4" r="2.0" fill="#dac2d8" fill-opacity="0.9"/>
<circle cx="639.5" cy="472.1" r="2.7" fill="#dac2d8" fill-opacity="0.9"/>
<circle cx="638.8" cy="468.9" r="1.0" fill="#dac2d8" fill-opacity="0.9"/>
<circle cx="647.0" cy="479.9" r="2.9" fill="#dac2d8" fill-opacity="0.9"/>
<circle cx="644.7" cy="475.0" r="3.0" fill="#dac2d8" fill-opacity="0.9"/>
<circle cx="644.1" cy="479.2" r="1.7" fill="#dac2d8" fill-opacity="0.9"/>
<circle cx="642.1" cy="476.9" r="1.9" fill="#dac2d8" fill-opacity="0.9"/>
<circle cx="654.6" cy="481.6" r="1.5" fill="#d6bcd4" fill-opacity="0.9"/>
<circle cx="650.3" cy="482.7" r="2.9" fill="#d6bcd4" fill-opacity="0.9"/>
<circle cx="650.2" cy="483.1" r="2.9" fill="#d6bcd4" fill-opacity="0.9"/>
<circle cx="652.4" cy="482.3" r="2.2" fill="#d6bcd4" fill-opacity="0.9"/>
<circle cx="655.3" cy="483.6" r="0.6" fill="#d6bcd4" fill-opacity="0.9"/>
<circle cx="651.3" cy="486.6" r="2.3" fill="#d3b8d1" fill-opacity="0.9"/>
<circle cx="653.2" cy="482.5" r="2.1" fill="#d3b8d1" fill-opacity="0.9"/>
<circle cx="647.8" cy="488.0" r="1.5" fill="#d3b8d1" fill-opacity="0.9"/>
<circle cx="658.2" cy="491.2" r="3.0" fill="#dfc8dd" fill-opacity="0.9"/>
<circle cx="659.3" cy="487.4" r="2.3" fill="#dfc8dd" fill-opacity="0.9"/>
<circle cx="662.2" cy="492.2" r="2.1" fill="#d3b8d1" fill-opacity="0.9"/>
<circle cx="660.8" cy="493.0" r="2.9" fill="#d3b8d1" fill-opacity="0.9"/>
<circle cx="665.0" cy="491.3" r="2.4" fill="#d3b8d1" fill-opacity="0.9"/>
<circle cx="668.6" cy="491.8" r="1.9" fill="#dfc8dd" fill-opacity="0.9"/>
<circle cx="669.2" cy="492.9" r="2.9" fill="#dfc8dd" fill-opacity="0.9"/>
<circle cx="668.2" cy="493.9" r="2.5" fill="#dfc8dd" fill-opacity="0.9"/>
<circle cx="671.1" cy="491.3" r="2.2" fill="#dfc8dd" fill-opacity="0.9"/>
<circle cx="674.1" cy="492.3" r="0.7" fill="#dfc8dd" fill-opacity="0.9"/>
<circle cx="667.4" cy="495.3" r="2.2" fill="#dfc8dd" fill-opacity="0.9"/>
<circle cx="676.3" cy="496.7" r="1.9" fill="#dac2d8" fill-opacity="0.9"/>
<circle cx="676.5" cy="498.2" r="1.9" fill="#dac2d8" fill-opacity="0.9"/>
<circle cx="671.3" cy="497.9" r="2.1" fill="#dac2d8" fill-opacity="0.9"/>
<circle cx="673.6" cy="499.4" r="2.2" fill="#dac2d8" fill-opacity="0.9"/>
<circle cx="673.5" cy="499.2" r="2.8" fill="#dac2d8" fill-opacity="0.9"/>
<circle cx="676.6" cy="506.7" r="1.0" fill="#dac2d8" fill-opacity="0.9"/>
<circle cx="685.4" cy="499.3" r="2.7" fill="#dfc8dd" fill-opacity="0.9"/>
<circle cx="684.7" cy="501.4" r="2.7" fill="#dfc8dd" fill-opacity="0.9"/>
<circle cx="687.0" cy="500.6" r="2.9" fill="#dfc8dd" fill-opacity="0.9"/>
<circle cx="685.6" cy="498.2" r="2.0" fill="#dfc8dd" fill-opacity="0.9"/>
<circle cx="687.2" cy="499.3" r="2.9" fill="#dfc8dd" fill-opacity="0.9"/>
<circle cx="684.1" cy="498.6" r="1.1" fill="#dfc8dd" fill-opacity="0.9"/>
<circle cx="688.7" cy="504.9" r="3.0" fill="#dfc8dd" fill-opacity="0.9"/>
<circle cx="692.3" cy="506.6" r="2.6" fill="#dfc8dd" fill-opacity="0.9"/>
<circle cx="690.0" cy="502.3" r="2.7" fill="#dfc8dd" fill-opacity="0.9"/>
<circle cx="691.4" cy="504.7" r="2.4" fill="#dfc8dd" fill-opacity="0.9"/>
<circle cx="695.6" cy="508.6" r="2.7" fill="#d3b8d1" fill-opacity="0.9"/>
<circle cx="694.6" cy="504.4" r="2.7" fill="#d3b8d1" fill-opacity="0.9"/>
<circle cx="694.9" cy="508.8" r="0.9" fill="#d3b8d1" fill-opacity="0.9"/>
<circle cx="704.5" cy="505.9" r="1.9" fill="#dac2d8" fill-opacity="0.9"/>
<circle cx="709.6" cy="511.6" r="1.6" fill="#d3b8d1" fill-opacity="0.9"/>
<circle cx="707.6" cy="508.2" r="1.6" fill="#d3b8d1" fill-opacity="0.9"/>
<circle cx="708.9" cy="509.5" r="1.9" fill="#d3b8d1" fill-opacity="0.9"/>
<circle cx="714.0" cy="512.8" r="1.8" fill="#d3b8d1" fill-opacity="0.9"/>
<circle cx="713.0" cy="514.9" r="2.9" fill="#d3b8d1" fill-opacity="0.9"/>
<circle cx="715.4" cy="508.0" r="2.4" fill="#dfc8dd" fill-opacity="0.9"/>
<circle cx="717.6" cy="512.2" r="1.6" fill="#dfc8dd" fill-opacity="0.9"/>
<circle cx="717.3" cy="511.8" r="2.4" fill="#dfc8dd" fill-opacity="0.9"/>
<circle cx="725.0" cy="511.7" r="2.6" fill="#dac2d8" fill-opacity="0.9"/>
<circle cx="722.7" cy="511.9" r="1.7" fill="#dac2d8" fill-opacity="0.9"/>
<circle cx="727.2" cy="511.4" r="2.8" fill="#dac2d8" fill-opacity="0.9"/>
<circle cx="726.0" cy="509.6" r="1.9" fill="#dac2d8" fill-opacity="0.9"/>
<circle cx="724.7" cy="512.2" r="1.7" fill="#dac2d8" fill-opacity="0.9"/>
<circle cx="727.5" cy="509.4" r="1.6" fill="#d3b8d1" fill-opacity="0.9"/>
<circle cx="727.4" cy="510.3" r="1.6" fill="#d3b8d1" fill-opacity="0.9"/>
<circle cx="726.3" cy="511.4" r="1.6" fill="#d3b8d1" fill-opacity="0.9"/>
<circle cx="735.2" cy="508.0" r="0.8" fill="#d3b8d1" fill-opacity="0.9"/>
<circle cx="734.4" cy="522.5" r="2.0" fill="#dfc8dd" fill-opacity="0.9"/>
<circle cx="737.7" cy="516.0" r="2.7" fill="#dac2d8" fill-opacity="0.9"/>
<circle cx="736.5" cy="518.4" r="2.0" fill="#dac2d8" fill-opacity="0.9"/>
<circle cx="735.2" cy="514.8" r="0.8" fill="#dac2d8" fill-opacity="0.9"/>
<circle cx="741.6" cy="514.8" r="2.5" fill="#d3b8d1" fill-opacity="0.9"/>
<circle cx="745.4" cy="515.1" r="2.7" fill="#d3b8d1" fill-opacity="0.9"/>
<circle cx="742.6" cy="517.7" r="1.6" fill="#d3b8d1" fill-opacity="0.9"/>
<g fill="none" stroke-linecap="round">
<path stroke="#ecd6e9" stroke-opacity="0.75" stroke-width="2.5" d="M310.2 579.4l6.4 0.8M246.9 540.6l6.8 0.7M284.7 541.3l9.3 0.8M219.2 567.6l8.1 1.0M198.2 557.8l5.1 0.1M224.1 543.9l5.4 0.1M329.5 566.1l7.9 2.4M294.5 546.0l7.8 0.8M391.5 563.6l6.9 2.2M388.4 568.8l6.4 2.3M416.6 576.7l7.8 5.6M239.9 541.9l8.6 1.1M353.0 546.2l6.7 0.4M324.1 559.9l7.4 -0.9M370.9 571.7l6.3 3.3M363.4 567.6l9.5 1.7M337.9 565.4l6.7 1.0M391.1 574.9l5.4 3.9M291.4 544.2l7.2 0.6M260.7 563.5l7.5 -0.1M166.7 546.0l7.3 -0.5M213.6 531.5l9.8 1.8M288.2 556.3l6.1 0.9M378.4 572.4l9.0 2.6M307.1 545.4l8.8 2.1M343.0 541.8l5.1 1.8M406.2 573.1l8.2 2.1M300.9 537.3l7.4 2.1M252.1 555.3l5.9 0.7M243.7 579.1l6.8 0.0M291.3 557.8l8.7 1.7M211.4 546.0l8.2 0.1M242.1 550.0l9.1 1.2M210.0 536.3l7.1 -0.4M157.9 577.4l6.6 -0.1M284.6 571.1l8.4 1.1M190.6 565.6l9.0 1.0M175.7 532.6l8.0 0.6M410.1 563.4l6.4 2.9M269.0 521.1l5.7 0.0M377.5 545.4l8.1 3.3M409.3 557.4l4.8 1.8M404.6 557.9l7.4 3.3M356.4 529.9l5.8 2.1M336.7 517.3l7.2 1.0M736.8 413.5l0.9 6.9M739.8 332.3l2.7 8.6M725.5 418.4l3.0 6.8M746.3 523.1l1.7 5.1M736.9 450.3l2.1 7.8M698.4 345.0l0.9 4.9M726.8 418.7l2.2 5.0M704.7 378.1l2.1 5.3M738.0 398.1l0.9 5.2M744.8 434.2l1.1 6.6M746.3 524.3l1.6 5.5M743.3 494.6l3.4 7.8M746.3 289.7l-0.6 6.5M730.8 372.7l2.0 5.4M696.3 358.2l2.1 6.8M742.1 512.4l1.7 7.6M716.0 448.5l3.6 8.2M743.9 520.6l3.0 7.3M697.2 402.4l1.1 8.5M711.3 364.1l0.0 8.5M740.1 287.0l2.7 6.6M745.6 521.7l2.8 9.3M695.6 316.5l2.9 5.6M735.2 317.0l1.4 7.2M711.8 399.1l0.7 8.6M719.8 362.2l1.1 5.5M745.7 454.4l2.9 7.0M740.4 315.6l2.8 6.5M741.0 489.7l2.2 7.4M746.8 527.2l2.4 5.1M743.2 513.3l0.9 6.6M740.8 457.7l2.5 4.6M743.0 387.2l2.9 8.7M725.4 450.2l1.0 7.5"/>
<path stroke="#e2cadf" stroke-opacity="0.75" stroke-width="2.5" d="M257.6 566.9l6.2 0.9M138.8 567.1l9.6 -0.5M344.2 540.5l6.2 -0.3M312.5 556.0l8.2 -0.1M281.2 565.7l7.4 2.7M392.8 576.7l5.5 3.1M165.2 542.1l6.5 0.3M381.0 565.4l7.7 0.7M201.2 532.3l7.4 -1.5M346.5 540.2l7.8 1.4M286.3 558.1l7.8 -0.0M178.7 555.0l7.6 0.5M366.2 576.3l5.3 1.7M255.9 548.4l8.7 1.1M236.9 561.0l7.6 -0.1M258.1 543.5l9.3 2.8M233.6 577.1l8.2 0.3M295.9 574.7l7.1 1.1M180.2 552.7l5.2 -0.1M198.2 576.8l7.1 0.6M365.4 551.7l7.6 3.7M343.3 563.0l8.7 3.3M285.4 572.0l7.6 1.0M211.4 579.0l5.1 0.3M270.6 552.0l7.0 -1.1M158.2 551.7l8.9 -0.0M215.6 568.4l6.6 0.6M308.2 576.4l6.2 2.1M230.9 535.0l6.0 1.0M339.5 552.7l7.9 3.2M389.4 573.3l8.9 3.6M311.5 551.7l9.0 3.5M248.4 527.9l8.6 1.2M150.0 528.6l8.6 -1.6M392.5 549.8l6.1 1.7M395.3 558.3l7.6 3.8M269.0 519.7l7.8 1.1M364.9 538.4l5.6 2.0M268.9 527.4l5.2 0.9M742.2 443.8l2.1 8.3M745.8 281.8l2.7 8.1M725.5 379.8l1.2 5.9M738.1 341.7l2.2 9.1M732.1 397.3l1.5 9.5M718.6 324.2l1.5 6.8M757.7 528.7l2.6 6.4M716.9 432.0l2.4 7.8M703.8 394.7l2.5 7.6M724.0 440.6l1.4 5.2M734.5 348.5l1.9 6.2M697.1 290.3l3.9 9.1M740.1 507.6l0.4 5.8M738.9 303.7l1.1 7.1M739.8 423.0l1.8 8.7M728.5 311.0l2.5 5.8M714.7 463.7l3.2 9.5M747.0 523.8l1.1 6.8M742.8 459.9l1.2 7.8M735.7 428.3l1.7 8.4M743.9 461.5l2.4 7.6M746.8 311.6l2.3 4.5M737.0 506.6l2.1 6.5M699.6 307.6l2.6 6.0M698.9 365.1l3.4 8.0M727.0 476.8l4.0 6.5M747.8 446.0l0.4 6.8M691.0 335.9l2.3 5.7M714.8 376.3l2.0 8.3M738.5 448.4l2.4 8.7M703.5 328.5l2.3 9.2"/>
<path stroke="#e2cadf" stroke-opacity="0.75" stroke-width="2.0" d="M223.2 577.5l7.5 0.4M251.7 530.0l8.4 0.5M308.4 571.2l8.2 3.0M270.4 533.3l6.0 2.0M156.2 554.0l9.8 -0.8M361.1 562.3l9.0 2.9M318.7 564.7l5.9 2.6M307.8 545.3l4.8 1.6M385.1 574.5l9.4 2.8M171.8 543.2l5.6 -0.1M372.8 572.6l8.1 4.1M237.3 536.3l9.5 1.2M365.0 565.2l8.9 4.4M279.3 549.1l7.9 -0.6M359.8 545.7l6.9 2.1M198.4 547.3l8.0 0.9M722.6 448.9l3.5 8.7M735.5 349.8l3.2 7.5M726.8 405.4l2.7 6.8M726.1 485.2l0.7 8.8M710.7 429.3l1.0 5.3M719.6 429.4l2.4 5.1M746.7 427.7l1.6 6.6M695.4 295.9l1.6 6.9M704.0 347.2l2.6 6.7M711.5 391.5l1.3 5.4M757.1 527.0l3.0 8.9M746.8 520.8l1.1 7.6M714.5 348.5l2.6 6.8M725.7 400.4l3.3 7.3M735.4 504.4l2.0 5.4M724.4 379.2l3.3 8.5M715.9 384.7l1.4 5.4M746.9 437.3l1.1 6.1"/>
<path stroke="#f4d8f0" stroke-opacity="0.75" stroke-width="3.0" d="M249.2 558.0l8.6 -0.3M335.2 572.3l6.3 1.5M400.3 571.5l7.8 2.5M196.4 540.8l9.7 -1.1M375.3 549.5l8.1 4.5M229.8 547.1l8.2 -0.2M162.8 569.9l7.4 -1.5M410.0 570.7l5.9 2.9M150.4 558.6l7.4 -1.0M389.0 574.6l9.3 3.4M282.6 579.7l8.9 -0.6M227.3 565.6l9.7 0.6M325.1 574.1l6.7 2.2M190.5 571.0l6.7 -0.5M258.8 563.3l6.7 1.9M315.1 544.2l5.3 1.2M181.8 538.7l5.7 -0.1M306.8 573.7l9.9 0.8M143.2 543.5l5.4 -1.4M220.2 553.8l7.2 -1.1M252.9 545.6l6.6 0.4M251.9 560.5l8.3 0.4M390.8 557.8l5.1 1.1M291.2 560.9l9.4 0.5M311.0 545.4l6.6 2.2M403.8 570.7l9.3 3.2M406.6 574.4l7.1 4.5M375.1 568.4l6.0 1.4M405.2 576.3l7.3 5.1M355.9 560.7l9.5 2.6M201.8 569.0l6.8 -1.3M733.2 310.9l2.3 5.9M701.2 389.7l0.3 9.5M731.9 310.3l1.0 6.8M703.7 394.7l1.6 6.0M717.9 303.1l0.6 5.4M726.3 297.1l1.9 9.0M739.7 465.3l3.0 8.4M721.2 433.9l3.1 6.8M737.3 476.3l0.5 9.7"/>
<path stroke="#cdb2c9" stroke-opacity="0.75" stroke-width="2.0" d="M275.8 538.8l5.8 0.5M188.4 552.3l7.6 -0.4M326.5 576.7l7.4 2.5M149.1 560.2l8.1 -0.6M314.9 559.3l6.4 2.2M330.1 539.5l5.5 1.2M381.0 571.0l7.3 0.9M202.5 531.9l8.4 1.1M305.1 540.9l8.2 2.4M196.5 580.1l9.7 -0.9M138.5 574.9l7.6 -0.3M229.7 558.6l7.0 -0.6M241.3 546.3l9.2 1.1M359.6 563.7l5.1 1.7M362.9 573.2l6.0 2.5M250.8 544.9l9.9 0.9M403.4 576.8l4.5 3.1M170.5 542.8l8.6 0.3M294.3 532.7l6.7 -0.7M367.2 548.9l8.6 4.5M720.2 449.7l2.4 9.2M738.5 355.4l2.7 8.8M710.6 360.9l0.4 6.3M736.0 429.4l0.8 5.8M740.5 402.0l3.0 8.0M739.8 437.1l3.5 7.5M735.5 488.5l3.4 7.0M692.7 380.7l0.5 6.9M721.1 423.4l2.2 7.6M732.5 375.6l0.4 5.4M736.1 484.1l3.3 5.8M707.7 325.6l4.3 6.3"/>
<path stroke="#d9bfd5" stroke-opacity="0.75" stroke-width="2.5" d="M229.3 565.7l9.7 -0.5M402.9 575.3l6.4 2.4M173.0 558.2l6.9 -0.8M270.8 574.0l6.6 0.8M224.2 574.2l6.4 0.5M155.5 540.1l5.1 -1.0M251.6 568.4l5.0 0.7M365.8 564.1l7.9 1.4M167.3 555.3l6.2 -0.5M266.0 560.8l7.1 0.3M392.3 563.5l4.8 1.8M210.7 560.6l6.0 0.1M317.4 530.7l6.4 1.7M222.4 566.0l5.1 -0.5M338.5 546.8l8.4 2.4M150.5 536.8l8.9 -1.9M253.3 578.4l8.9 -0.2M299.6 562.7l7.9 3.7M348.9 572.1l8.2 2.7M229.3 557.6l9.2 0.3M367.8 561.1l8.8 4.2M331.9 552.8l8.0 1.2M242.9 574.0l9.2 2.6M210.1 546.4l7.3 -0.2M240.4 534.5l8.5 -0.2M405.8 573.6l7.6 1.6M341.6 578.0l8.1 2.2M383.2 554.9l5.2 1.7M194.6 532.9l6.3 0.2M160.3 535.4l7.8 -0.6M201.5 568.4l8.2 0.5M345.1 551.6l8.9 1.6M369.0 567.4l9.6 2.5M173.9 532.7l6.9 -1.3M249.7 519.2l7.8 0.2M229.2 521.7l5.2 1.0M244.5 521.4l8.3 0.8M373.1 541.3l5.9 0.8M698.0 391.8l3.5 6.3M703.7 414.2l1.6 6.8M745.4 298.5l2.2 8.8M729.9 481.1l2.1 7.1M739.1 421.2l1.1 5.3M698.8 393.1l2.0 7.8M702.1 376.2l2.8 7.5M731.1 458.8l3.9 7.3M717.9 306.8l0.6 6.2M710.2 379.7l2.5 5.4M730.9 344.5l2.2 8.4M743.0 500.5l3.8 6.8M733.4 477.5l0.9 9.0M730.2 488.9l2.4 6.0M712.5 335.1l2.5 5.7M746.3 523.4l2.9 8.0M694.5 292.9l1.1 6.7M730.5 353.8l2.6 6.8M744.1 519.6l1.7 7.5M744.3 385.1l3.5 7.2M716.1 285.2l1.2 6.6M740.4 342.4l2.3 9.2M745.6 516.5l1.4 5.8M743.3 519.7l2.4 4.9M742.1 339.4l2.7 7.8M739.1 502.6l0.8 9.6"/>
<path stroke="#f4d8f0" stroke-opacity="0.5" stroke-width="3.0" d="M402.9 575.7l9.2 2.3M201.5 536.9l6.7 -0.1M360.7 571.6l9.4 0.1M376.7 577.4l9.8 1.4M280.0 569.7l8.6 -0.5M402.2 574.1l8.2 2.9M218.5 536.5l9.8 -1.8M203.8 580.1l6.1 -1.0M317.1 528.5l9.0 1.6M399.1 573.4l6.5 2.9M325.8 558.6l6.1 1.2M280.6 532.6l5.7 1.6M724.3 445.6l2.0 8.6M733.3 331.9l0.8 7.9M729.9 339.7l2.8 7.6M720.6 293.8l3.4 9.0M729.1 433.0l1.6 9.3"/>
<path stroke="#d9bfd5" stroke-opacity="0.5" stroke-width="3.0" d="M312.0 549.8l7.5 1.7M408.4 579.0l7.4 2.1M387.8 568.7l6.8 1.8M178.4 567.0l7.0 -0.7M252.4 549.7l7.3 1.3M196.6 569.0l8.0 -0.5M742.0 473.7l3.0 6.4M728.5 446.0l2.5 9.6M743.0 475.1l2.6 8.1M746.2 314.6l0.9 9.6M735.8 336.2l2.3 8.1M745.7 523.1l3.4 4.4M741.9 372.3l2.6 9.0M710.9 297.7l2.3 6.3M735.2 501.4l1.4 9.9"/>
<path stroke="#d3b8d0" stroke-opacity="0.75" stroke-width="2.0" d="M220.3 549.9l7.7 0.5M210.6 535.3l8.4 -1.0M294.1 529.0l9.4 0.6M306.0 541.2l8.6 2.8M419.9 578.8l7.1 1.8M221.6 555.5l8.0 0.2M351.9 551.9l8.1 3.3M200.8 571.9l9.8 -1.4M283.8 538.8l7.9 2.4M397.4 568.7l4.7 2.6M193.9 552.4l9.8 1.1M191.8 546.7l6.9 0.5M251.4 554.7l9.6 0.8M145.3 561.3l8.6 -0.6M377.0 552.3l7.2 3.7M409.1 576.0l8.5 2.3M404.2 574.6l7.7 3.7M326.5 550.3l8.7 1.0M330.3 564.8l8.4 1.4M731.7 376.0l1.0 5.9M720.9 352.7l3.9 7.5M715.3 440.8l1.6 7.4M734.2 444.6l1.6 9.1M733.8 428.6l1.5 8.6M735.1 422.3l1.1 5.5M738.3 309.9l-0.7 7.1M739.6 290.7l1.5 4.8M725.3 403.1l1.3 5.5M719.7 462.6l0.3 8.4M742.0 501.2l2.7 8.6M746.4 291.9l2.5 5.0M741.5 344.4l1.1 6.7M722.5 478.2l0.8 7.7M737.5 349.9l1.3 7.8M744.1 490.4l3.7 7.2M725.9 425.0l3.2 7.3M727.8 463.1l3.5 4.9"/>
<path stroke="#e2cadf" stroke-opacity="0.5" stroke-width="2.5" d="M250.8 547.2l9.1 1.3M334.0 555.5l6.7 1.8M142.1 559.8l5.9 -0.4M374.8 568.8l7.4 3.4M382.6 553.2l6.8 2.4M154.9 576.2l8.1 -0.5M357.7 572.1l7.0 2.6M379.4 576.1l8.1 3.5M375.2 549.8l4.9 1.3M186.4 553.6l5.8 0.1M388.7 557.6l7.1 2.4M217.0 560.2l8.8 -0.1M718.3 300.7l2.6 5.8M741.8 509.2l2.3 8.2M727.4 330.0l1.8 8.0M713.8 326.1l1.2 6.2M701.0 288.0l2.1 8.3M738.8 446.0l0.7 5.8M728.9 359.9l3.7 8.1M738.0 502.2l2.7 7.6M702.5 339.7l2.4 7.5M715.1 430.4l2.0 5.4M741.9 290.2l3.0 8.2M692.2 282.4l1.9 7.4"/>
<path stroke="#d3b8d0" stroke-opacity="0.5" stroke-width="3.0" d="M169.8 535.8l8.8 -1.9M243.5 549.0l5.0 0.7M196.4 566.6l8.5 0.7M166.6 567.6l6.0 -0.1M415.1 578.4l7.5 0.5M375.6 573.5l9.0 2.2M744.9 367.7l0.2 6.6M742.8 501.5l4.3 7.5M753.4 530.5l1.1 7.5M735.4 344.0l1.4 5.0M739.2 508.9l1.1 7.2M704.2 363.1l0.6 6.1M709.5 443.7l0.6 9.5"/>
<path stroke="#d3b8d0" stroke-opacity="0.75" stroke-width="2.5" d="M153.4 560.3l6.6 -0.9M367.6 558.2l8.7 2.7M222.3 547.8l7.3 0.2M384.2 564.1l5.8 2.5M397.5 574.3l7.4 3.0M157.0 564.2l6.5 -0.5M301.4 559.1l7.8 -0.4M287.7 549.0l5.2 1.4M215.3 532.5l9.6 0.6M341.4 550.2l5.4 2.3M141.4 548.9l7.4 -2.2M334.7 536.3l6.7 1.7M257.1 557.7l5.3 0.4M400.3 578.2l8.4 3.1M387.5 573.4l8.7 3.2M165.0 575.9l8.4 -0.8M271.9 577.6l8.0 1.6M332.6 568.4l6.7 1.9M359.8 546.9l7.1 2.8M399.6 576.7l9.2 2.1M324.5 550.7l8.4 2.9M205.4 544.5l9.5 -0.2M329.5 577.5l7.2 2.6M246.9 561.8l7.3 1.0M194.0 579.7l9.9 -0.0M204.0 561.3l6.4 -0.5M155.7 539.6l8.1 -0.7M385.1 564.0l5.7 1.4M173.3 541.1l9.9 -1.0M359.8 573.1l7.1 0.2M409.1 573.8l6.3 2.0M281.9 545.1l6.5 1.8M377.1 563.7l5.4 2.1M160.4 536.9l9.0 -1.2M397.0 562.3l6.5 2.4M373.4 571.9l7.5 -0.1M291.7 521.2l8.3 1.2M149.7 533.9l7.6 -0.6M238.0 529.6l6.4 -0.5M385.2 544.8l4.8 2.4M276.7 519.5l6.0 0.8M335.6 521.0l6.4 1.5M328.1 527.1l6.8 2.7M322.7 525.8l5.0 1.0M717.3 318.3l0.4 6.9M721.2 287.6l1.8 5.8M731.3 363.4l1.6 9.0M741.3 487.2l2.9 6.5M745.8 521.8l0.5 6.1M743.0 349.3l1.3 5.1M732.0 351.3l2.3 6.5M733.2 474.5l1.0 9.4M729.2 425.6l3.6 8.2M745.3 472.0l2.6 5.2M741.7 497.9l0.9 5.2M694.7 361.2l0.7 5.0M721.8 335.8l3.1 6.5M729.6 304.1l1.7 7.4M742.4 282.6l2.8 8.4M745.5 430.4l0.8 6.4M699.4 407.5l1.7 4.8M716.4 415.5l2.6 8.7M726.2 391.7l2.1 8.2M744.9 290.3l1.0 9.6M744.9 518.6l0.6 5.1M696.4 316.8l4.0 6.6M747.1 298.2l1.4 7.5M715.8 307.6l1.2 5.4M727.6 480.2l3.1 5.8M745.9 403.4l0.4 6.3M734.5 453.1l2.2 8.4M737.7 453.5l2.8 8.1M696.1 354.7l2.0 6.8"/>
<path stroke="#d3b8d0" stroke-opacity="0.5" stroke-width="2.5" d="M234.7 573.6l6.1 -0.1M271.7 540.8l7.8 0.3M390.8 578.5l6.7 1.5M360.1 567.5l5.7 3.2M149.3 543.0l9.3 -2.9M299.3 551.9l6.9 1.1M161.3 538.0l8.5 0.3M275.4 564.2l7.2 1.8M174.9 550.2l8.0 1.0M716.0 383.9l0.4 5.9M723.8 459.5l1.2 7.8M707.7 422.3l2.2 9.0M735.8 453.9l0.5 8.8M709.4 325.2l2.2 5.9M744.5 482.0l1.8 4.9M745.2 478.8l2.8 8.4M739.1 495.8l1.5 8.1M731.3 379.4l1.4 5.9M740.9 394.9l2.8 6.7M720.5 292.4l0.7 9.2M740.9 443.4l1.9 4.8"/>
<path stroke="#f2def0" stroke-opacity="0.5" stroke-width="2.5" d="M180.2 577.8l6.7 0.7M245.0 533.9l7.8 0.9M148.9 540.8l9.5 -2.2M186.3 558.9l5.5 -0.8M218.7 571.9l7.7 0.1M310.9 574.5l5.2 0.9M198.5 545.8l9.2 1.0M308.2 574.1l5.5 2.9M243.8 538.7l9.0 2.2M222.0 574.0l6.4 0.3M212.0 547.0l6.5 -0.6M214.5 559.1l7.1 -1.5M361.6 552.6l6.5 2.5M395.7 576.8l8.2 3.3M411.4 572.3l6.9 6.8M275.7 552.1l9.1 1.8M219.6 538.0l9.4 0.3M718.3 362.9l1.3 5.6M708.4 395.8l2.0 5.6M739.8 439.1l1.7 9.3M715.2 284.5l-0.1 7.2M721.4 401.3l1.3 6.3M710.7 397.4l2.4 8.3M746.3 516.9l2.4 6.0M744.6 470.0l2.0 9.1M721.5 289.5l3.7 7.7M735.5 378.7l2.6 7.1M709.9 356.6l2.0 7.5M712.6 389.4l1.7 7.3M735.0 475.0l2.3 8.2M734.0 328.3l1.5 5.6M738.8 460.9l2.6 6.4"/>
<path stroke="#cdb2c9" stroke-opacity="0.75" stroke-width="2.5" d="M188.9 559.3l8.0 -0.0M381.8 563.2l7.1 2.6M232.7 577.7l8.2 0.1M156.0 540.9l6.2 -0.4M224.5 578.0l9.3 2.6M333.0 540.7l6.2 0.6M220.0 548.8l9.7 1.1M291.9 529.7l5.1 0.6M330.3 546.0l9.2 1.0M206.3 536.4l8.3 -0.4M220.6 533.7l5.1 -0.5M330.7 568.9l5.8 1.8M396.5 576.4l5.2 3.9M160.9 562.5l5.9 -0.0M265.9 572.0l7.5 -0.3M171.4 546.3l9.8 -0.4M291.9 551.8l9.1 -0.8M253.9 577.4l8.1 0.9M239.7 568.6l6.9 0.4M142.8 575.2l6.6 -0.4M279.8 538.7l7.9 -0.3M183.3 551.9l9.2 0.0M217.1 572.4l8.2 -0.5M318.1 553.3l6.0 0.2M277.5 531.7l5.8 -0.3M272.9 557.3l5.3 -0.6M189.8 554.9l5.2 -0.5M271.6 552.4l8.5 3.8M232.7 530.5l5.4 0.7M389.5 565.3l7.2 1.6M320.9 558.0l8.0 0.8M260.2 538.2l5.6 0.7M159.6 550.5l5.7 -1.2M329.6 552.5l9.1 2.9M263.4 545.4l9.0 1.4M145.1 562.2l7.5 -1.4M240.7 544.8l6.2 0.8M178.7 537.0l8.7 0.8M164.3 559.0l7.9 1.6M376.5 544.8l8.8 1.4M319.1 523.1l5.3 0.7M373.0 537.0l7.6 3.5M195.2 518.9l8.5 0.0M353.8 527.0l7.8 1.5M205.5 527.9l8.3 0.9M163.3 533.9l7.9 -0.0M152.8 535.0l7.4 -0.9M166.7 532.7l6.2 0.2M404.5 563.6l7.5 3.8M739.4 508.9l0.9 6.0M746.0 295.3l2.4 5.6M744.5 502.9l2.4 7.1M740.7 497.2l2.8 8.1M726.7 295.0l1.7 7.1M732.6 328.4l2.7 7.1M734.5 317.9l1.7 7.8M724.1 440.9l0.3 8.6M722.9 426.9l1.3 8.1M735.8 352.2l1.8 7.5M746.4 305.3l2.5 6.2M724.4 428.1l2.8 6.6M718.4 335.9l1.8 8.4M723.7 282.4l2.6 8.7M725.2 433.0l0.9 5.4M744.0 397.3l2.4 6.3M742.1 322.3l2.0 8.5M708.2 371.5l3.4 7.8M717.5 404.2l5.1 7.6M736.7 457.5l2.4 6.0M707.6 282.1l1.7 5.3M736.9 458.9l0.9 6.9M702.3 404.7l1.6 5.1M713.3 338.4l1.3 5.2"/>
<path stroke="#f4d8f0" stroke-opacity="0.75" stroke-width="2.5" d="M389.6 560.0l6.7 1.5M332.2 538.6l6.6 0.7M369.6 547.7l5.6 4.7M208.7 551.7l7.7 0.9M195.0 544.2l7.1 -1.0M239.8 536.6l7.0 1.7M221.7 537.2l6.5 0.5M310.8 559.4l6.5 0.3M190.4 556.3l8.1 -1.0M338.5 573.4l7.1 1.6M143.1 557.9l9.5 -1.0M331.7 576.3l5.3 1.1M262.6 544.4l6.9 3.0M177.6 550.0l8.2 -0.0M228.3 535.5l8.8 1.7M200.5 539.0l7.1 1.1M304.3 547.2l5.5 0.2M320.7 562.4l7.7 1.4M322.6 561.1l7.8 1.6M282.6 562.6l9.8 1.5M237.3 531.9l6.5 -1.1M271.8 565.7l5.8 0.2M369.6 567.2l8.0 0.5M292.8 577.9l6.1 1.1M366.1 571.3l7.1 2.6M145.6 569.8l5.4 -1.3M239.2 577.3l6.8 0.6M369.8 571.4l5.6 0.7M195.0 579.1l8.8 -1.1M310.6 532.0l5.2 0.6M190.9 579.4l6.9 -0.6M369.4 560.9l8.0 3.6M152.9 575.7l6.8 -0.7M312.1 535.4l5.6 1.2M264.6 562.6l6.8 1.2M345.6 526.1l8.0 2.0M373.7 546.4l5.8 3.2M221.5 523.8l7.1 0.8M280.2 514.6l7.8 1.4M739.8 485.9l1.9 8.5M703.5 412.4l1.6 5.9M729.8 469.8l2.8 5.9M741.0 341.7l2.6 6.8M717.0 287.5l-0.6 8.5M723.8 456.2l2.6 7.1M739.8 503.5l2.8 7.7M741.5 425.9l3.7 5.3M693.1 305.4l0.1 8.7M745.4 422.0l2.6 7.7M747.0 513.2l1.4 5.6M728.1 369.7l2.6 8.5M746.3 522.5l2.5 8.5M700.8 402.1l1.7 6.3M718.1 324.0l4.7 8.7M744.0 391.2l0.8 7.0M746.0 436.2l0.7 7.6M734.2 360.2l1.3 5.4M716.4 322.5l2.0 5.8M743.4 494.8l1.9 7.3"/>
<path stroke="#d3b8d0" stroke-opacity="0.5" stroke-width="2.0" d="M382.0 571.0l9.1 3.5M206.2 534.9l9.0 -0.8M159.2 554.5l8.2 -0.2M327.1 559.6l5.8 1.5M372.7 556.3l4.9 1.4M336.4 536.0l8.9 1.5M258.7 554.0l7.3 0.5M158.3 543.1l9.7 -1.0M729.5 464.2l4.1 7.6M742.8 328.1l2.1 7.9M732.9 337.2l2.6 9.3M728.8 363.8l2.5 8.8M725.5 366.0l3.6 9.3"/>
<path stroke="#ecd6e9" stroke-opacity="0.75" stroke-width="3.0" d="M238.4 579.6l8.0 -0.8M255.9 535.3l8.3 0.8M236.8 531.2l8.5 0.8M186.6 579.7l6.0 -0.2M233.4 532.3l9.4 0.0M266.2 562.1l6.8 0.2M304.2 541.6l5.5 0.8M285.3 533.3l5.0 2.2M241.8 578.7l5.0 -0.7M348.4 567.8l8.9 2.6M329.8 574.8l7.6 3.2M303.2 535.4l7.4 2.5M383.3 577.6l8.0 3.4M155.0 568.1l5.5 -0.1M369.0 571.8l4.8 2.0M261.1 561.0l6.0 0.0M307.2 577.7l5.1 1.4M215.5 556.5l6.5 -0.1M212.7 574.2l9.0 -0.6M208.5 556.5l5.2 0.1M252.7 532.6l6.5 0.8M407.1 571.3l5.8 2.0M209.8 543.6l7.6 -1.5M298.3 574.2l6.6 2.3M348.2 557.8l7.0 2.2M194.4 544.7l6.7 0.1M349.6 577.0l7.0 1.4M281.2 557.7l8.0 2.9M218.4 574.6l8.1 0.2M346.3 575.3l7.8 2.7M226.3 534.3l5.1 0.4M170.7 550.3l8.1 -1.1M169.1 558.1l8.0 -0.8M727.2 392.0l1.1 9.3M742.5 465.7l0.8 6.6M721.0 455.1l2.5 8.4M745.4 302.5l0.0 6.7M739.7 318.2l3.9 8.7M746.1 524.7l3.1 6.7M740.3 489.9l-0.1 5.9M724.7 461.0l4.3 7.2M743.5 518.8l3.5 6.2M692.4 388.0l1.1 5.0M723.6 458.6l1.4 9.3M732.8 420.1l2.0 6.6M739.5 366.4l1.6 8.1M727.8 470.3l1.1 9.3M743.5 512.9l2.1 4.7"/>
<path stroke="#f4d8f0" stroke-opacity="0.75" stroke-width="2.0" d="M258.5 575.1l5.2 -0.0M294.3 527.2l8.5 -0.0M136.5 549.1l8.1 -1.4M319.9 554.3l5.3 1.4M304.1 573.6l8.7 1.5M348.1 558.5l6.0 1.9M300.4 558.6l6.7 1.6M406.2 578.3l7.4 1.3M266.7 544.5l7.3 1.4M240.0 552.3l6.8 -0.0M337.0 545.4l8.0 2.9M171.7 568.8l9.2 -0.9M304.6 550.2l9.2 0.9M350.9 538.8l6.8 2.8M401.0 574.9l7.3 2.7M254.6 572.1l5.7 0.5M385.1 560.4l6.6 1.5M151.5 550.9l8.7 0.9M299.4 577.1l7.6 1.3M332.6 559.3l8.5 1.6M715.5 290.2l2.0 8.2M704.7 377.7l3.1 7.0M704.8 311.9l2.5 8.5M707.9 344.2l2.0 6.7M745.7 523.9l4.3 8.7M720.2 460.7l3.1 6.9M730.9 475.6l1.0 9.3M745.3 495.9l2.5 8.0M733.4 307.1l2.4 6.9M732.0 496.2l4.5 8.9"/>
<path stroke="#e2cadf" stroke-opacity="0.5" stroke-width="2.0" d="M404.8 567.7l6.2 3.4M253.6 536.2l9.8 0.8M149.5 560.5l6.0 0.3M387.6 572.0l6.9 3.0M369.7 553.5l7.3 2.8M719.3 361.3l2.0 8.6M711.4 413.8l3.5 8.3M732.8 464.3l0.2 5.7M741.8 342.9l2.0 8.1"/>
<path stroke="#e2cadf" stroke-opacity="0.75" stroke-width="3.0" d="M288.9 553.6l8.9 0.8M184.3 553.2l6.3 0.5M414.4 577.8l7.3 3.0M266.5 571.4l6.7 1.5M228.5 548.1l7.3 -0.1M187.2 566.9l9.0 1.4M246.3 564.9l7.0 -0.5M267.4 533.7l5.5 -1.2M358.5 549.6l8.5 1.8M334.5 548.1l8.1 0.3M148.7 568.8l8.9 -0.1M361.2 566.7l5.4 1.2M180.4 552.0l6.8 -0.4M398.0 573.6l8.0 3.3M327.3 576.2l9.8 1.6M357.5 541.8l5.4 1.3M304.4 527.4l8.3 4.4M353.1 558.3l7.7 2.1M241.0 572.0l9.6 -0.5M281.9 572.1l9.4 1.5M361.6 564.7l8.0 2.5M169.5 562.4l6.0 -0.4M245.0 546.5l9.2 1.0M295.7 558.7l8.2 0.9M165.0 569.8l8.1 -1.6M351.6 549.4l5.6 2.8M209.8 531.8l9.1 0.2M337.6 532.3l9.0 1.8M240.6 549.1l9.0 -1.6M233.2 568.3l5.2 0.7M238.2 546.3l7.1 -0.4M382.2 560.4l5.6 2.9M355.9 569.9l6.6 1.1M161.5 561.6l8.6 -0.3M196.0 548.7l6.9 0.5M327.8 566.5l9.0 3.1M405.6 567.1l6.8 3.8M360.9 562.7l6.9 2.0M722.5 420.5l2.4 7.6M723.7 477.1l0.4 7.9M732.4 437.4l1.2 5.4M725.1 296.3l3.0 7.2M735.2 498.5l1.9 8.7M730.8 326.7l2.5 9.3M730.0 455.3l1.5 8.6M743.8 520.6l2.8 7.3M716.0 454.6l2.4 6.2M740.2 298.6l2.8 4.2M714.2 407.1l2.1 5.2M727.5 288.1l3.8 7.8M741.4 439.9l2.0 6.2M727.0 483.3l0.5 9.5M719.4 412.9l1.1 5.4M740.9 378.5l1.1 9.6"/>
<path stroke="#f2def0" stroke-opacity="0.5" stroke-width="3.0" d="M378.5 569.0l8.0 2.6M263.0 556.4l5.9 1.3M270.7 542.9l8.0 -0.1M248.1 562.8l9.2 1.6M391.0 578.5l5.4 2.7M303.9 529.8l8.0 2.4M737.1 305.9l4.5 8.5M725.2 474.0l-0.2 6.8M745.6 519.6l2.5 8.9M713.6 454.8l2.4 6.6"/>
<path stroke="#ecd6e9" stroke-opacity="0.75" stroke-width="2.0" d="M280.7 537.2l9.4 0.0M278.9 546.0l7.7 0.0M380.9 567.0l9.2 2.8M138.1 540.8l5.7 0.2M149.7 550.9l6.8 -0.7M307.9 570.3l6.7 1.7M395.0 564.4l5.5 2.2M270.4 570.5l6.8 0.4M418.7 578.3l5.9 2.5M290.9 543.0l6.6 0.6M236.7 532.7l9.6 0.5M359.5 563.6l8.5 3.9M181.1 551.8l5.9 0.5M218.3 562.0l5.8 0.9M294.6 538.7l6.3 -0.4M301.3 553.1l7.7 2.4M316.8 553.1l6.6 2.6M407.5 575.8l6.2 5.2M710.5 332.6l2.0 9.4M721.1 314.7l2.0 5.4M706.2 417.0l3.1 7.1M729.9 390.1l2.3 8.7M726.6 290.4l3.0 7.5M713.7 345.9l1.0 6.1M726.8 450.5l1.7 4.8M748.1 527.0l3.2 6.6M727.5 402.3l0.9 4.9M746.0 486.2l3.0 7.2"/>
<path stroke="#f2def0" stroke-opacity="0.75" stroke-width="2.5" d="M168.3 573.4l8.8 0.1M149.0 558.2l6.9 -0.2M333.4 578.5l8.7 2.0M362.9 565.6l5.3 2.3M253.1 570.8l6.9 0.5M216.9 563.7l5.5 0.3M175.2 578.7l7.5 -0.6M172.5 536.2l8.4 -3.4M210.2 574.3l7.8 1.5M158.6 551.6l9.3 0.1M204.1 551.3l6.3 -0.8M315.5 561.5l8.2 2.5M401.2 572.9l5.7 2.5M140.6 577.1l5.1 -0.7M141.4 558.8l9.5 -0.0M195.8 568.5l7.6 -1.3M179.7 563.4l6.2 -0.1M141.3 554.0l7.4 -0.3M203.8 569.5l6.6 -0.4M325.8 564.9l6.2 2.0M397.4 574.7l4.9 1.6M205.0 567.9l6.4 1.0M248.4 565.9l9.5 1.6M334.5 533.2l7.8 2.9M193.7 563.2l7.9 -1.4M333.1 545.2l9.4 1.8M385.5 558.6l5.3 2.3M179.4 535.5l5.2 0.1M211.7 534.1l8.6 1.1M399.5 574.5l6.5 3.3M153.5 567.2l8.9 1.0M303.6 530.3l8.3 0.8M204.8 576.3l5.1 -1.2M137.4 538.1l7.8 -0.3M301.4 579.3l7.1 0.9M263.2 543.9l8.1 1.0M231.8 576.0l6.0 -0.8M269.4 534.3l8.9 2.8M194.1 518.6l8.8 0.5M237.0 522.0l8.8 0.0M354.6 537.2l6.0 1.7M740.6 509.1l5.2 8.5M734.2 322.3l0.7 6.8M714.4 429.0l2.7 9.2M713.6 398.5l0.3 5.5M725.3 429.3l2.5 9.0M744.1 444.5l1.2 9.2M721.9 314.8l2.4 5.6M731.8 487.7l1.2 9.1M747.0 487.5l1.7 4.9M729.6 287.8l2.1 6.0M748.0 528.2l0.5 6.2M731.9 281.4l2.5 5.6M746.3 502.7l2.0 5.1M741.9 469.2l2.2 6.9M747.0 525.5l1.4 5.3M692.4 292.1l4.0 8.6M695.7 283.9l2.4 4.4M717.8 289.4l0.8 6.1M742.2 311.7l1.7 5.5M739.6 493.2l2.0 7.2M698.4 296.6l1.8 6.2M716.1 428.5l2.2 7.9M743.0 485.7l2.3 7.2M741.7 324.5l3.1 8.2M744.6 333.9l2.3 8.1M709.0 297.0l0.8 5.5M740.4 492.2l1.3 6.7M713.3 396.8l1.7 5.3M718.1 441.3l2.8 8.1M713.4 451.8l2.2 5.0"/>
<path stroke="#ecd6e9" stroke-opacity="0.5" stroke-width="2.5" d="M170.1 562.6l9.6 -1.5M349.4 567.4l6.8 4.0M376.7 552.7l4.4 2.5M230.8 543.8l7.8 0.4M302.3 528.7l6.5 0.9M185.1 567.9l8.5 -0.6M264.3 558.3l6.5 0.7M233.3 577.5l8.1 1.7M405.9 577.7l7.3 4.0M741.1 308.8l1.7 6.9M747.1 505.0l1.1 5.2M733.7 491.2l-1.1 7.0M743.6 408.0l0.4 9.6M742.9 489.7l2.0 6.8M709.0 419.1l0.1 7.9M691.5 356.2l3.8 7.1M701.4 354.6l1.3 6.0M695.9 290.8l2.7 5.1M742.4 432.1l3.2 9.2M739.4 485.0l1.7 4.9M697.0 361.9l1.8 7.4M712.9 295.0l1.2 5.7M747.3 507.8l1.2 5.3M740.0 302.1l1.9 7.7M700.5 332.8l1.0 9.0M749.6 528.5l2.4 6.0M725.6 439.5l1.8 7.7M697.2 382.3l0.9 6.1"/>
<path stroke="#cdb2c9" stroke-opacity="0.5" stroke-width="2.0" d="M352.1 568.2l8.3 2.4M381.5 560.9l6.3 1.9M330.9 538.5l6.0 1.3M417.2 577.4l7.3 3.2M283.4 553.0l6.8 1.2M363.6 563.3l7.1 2.0M157.1 567.5l6.5 -0.2M731.4 494.3l1.1 8.3M735.1 318.5l1.5 7.0M737.8 349.1l1.7 8.1M744.9 458.4l2.6 6.3M746.3 434.2l2.2 5.3M713.3 367.6l3.2 5.9M746.7 339.5l2.4 9.2M751.3 528.9l1.6 4.8M746.1 459.5l1.8 6.7M740.4 445.9l2.8 8.9M712.2 372.2l2.7 6.0M720.6 334.0l0.9 9.0M744.9 519.6l4.2 8.0M729.8 466.8l1.3 5.5"/>
<path stroke="#f4d8f0" stroke-opacity="0.5" stroke-width="2.0" d="M216.2 559.4l8.2 0.9M353.4 568.3l6.5 0.3M382.3 570.7l8.3 2.7M331.0 529.8l5.7 2.9M205.4 541.4l6.9 -0.1M726.4 412.4l1.5 8.6M743.6 397.1l2.7 9.5M731.2 420.6l1.2 6.3M746.3 334.5l1.0 9.1M742.6 507.5l1.1 7.8M715.2 280.0l2.4 9.0"/>
<path stroke="#f2def0" stroke-opacity="0.75" stroke-width="2.0" d="M248.9 554.6l9.6 1.3M363.1 566.2l8.8 4.0M268.2 558.1l6.6 -0.0M163.5 558.9l5.4 -1.1M264.0 566.2l9.5 2.1M254.6 549.8l8.2 2.2M163.6 572.7l8.9 -2.0M191.0 554.3l6.6 -0.3M331.1 575.5l8.3 0.9M409.3 572.6l7.2 4.3M255.9 534.7l7.0 1.6M333.7 559.0l6.7 1.4M253.2 529.4l7.5 1.3M413.6 573.6l7.0 4.3M365.0 550.2l9.1 3.6M389.2 578.2l8.4 3.2M362.0 568.4l8.8 3.7M321.0 560.1l5.3 0.5M274.2 531.0l5.3 -0.1M721.8 455.2l2.2 6.5M728.2 452.1l3.0 7.3M706.6 380.6l3.0 7.3M743.3 512.5l2.7 8.1M746.1 512.8l1.9 8.1M701.5 423.9l2.1 5.9M741.6 441.2l0.9 5.2M725.0 341.8l3.3 9.1M737.4 441.1l2.8 9.3M736.0 305.8l2.6 6.4M734.3 481.1l1.5 7.7M696.7 334.1l0.5 9.3"/>
<path stroke="#d9bfd5" stroke-opacity="0.75" stroke-width="3.0" d="M235.6 540.1l7.1 0.1M281.0 560.1l5.9 0.5M162.6 556.4l8.1 -0.7M306.2 527.8l5.1 2.4M159.0 551.7l8.0 0.6M374.8 575.3l7.1 3.9M139.2 563.8l5.9 0.5M307.9 564.4l7.2 0.4M358.8 577.7l7.3 3.2M358.3 556.7l5.9 2.6M175.2 578.0l9.7 1.2M155.6 571.1l8.0 0.3M392.7 560.4l7.2 2.1M194.4 573.5l8.2 0.5M233.4 565.2l9.1 -0.9M241.0 565.4l6.9 1.8M400.2 571.2l8.7 3.5M201.6 532.1l8.0 -0.3M368.7 555.8l9.9 0.2M194.6 535.3l7.9 0.7M289.6 555.7l5.8 1.3M220.0 552.5l7.2 0.9M225.2 579.3l7.4 0.1M357.7 566.4l8.9 2.7M291.9 552.9l8.8 1.6M368.7 554.9l4.5 2.4M207.3 574.6l5.6 -0.7M153.3 560.1l7.7 -1.9M379.7 555.9l6.6 2.3M249.5 566.8l6.7 0.1M288.9 549.3l5.0 1.1M267.1 527.8l8.2 1.4M318.2 540.1l7.4 2.4M290.5 537.7l6.9 1.5M241.2 566.2l8.4 0.1M359.5 556.7l5.7 1.1M229.8 555.8l9.2 0.6M743.4 342.8l2.9 9.3M741.6 511.2l2.6 9.3M740.0 450.1l4.7 7.2M728.4 374.0l2.5 8.5M694.2 358.3l1.6 4.9M744.1 509.3l3.4 8.4M724.8 419.0l1.9 9.2M744.5 517.9l4.8 8.6M717.5 297.0l1.5 7.2"/>
<path stroke="#ecd6e9" stroke-opacity="0.5" stroke-width="3.0" d="M212.2 547.5l8.0 0.2M200.4 572.8l5.8 -0.5M253.7 542.1l5.3 0.5M185.1 540.5l6.0 -0.6M157.6 554.0l9.0 -1.3M167.4 533.7l7.1 1.1M155.7 556.2l5.4 -0.6M376.0 553.9l6.4 2.8M376.6 563.7l4.9 1.8M235.3 566.2l9.3 -0.4M736.1 358.0l1.2 5.6M746.7 441.5l1.6 6.3M724.3 466.2l-0.1 6.0M741.5 473.9l1.8 6.6M723.4 429.5l1.5 5.2M746.4 475.3l2.8 9.5M724.6 368.8l-0.2 8.1M741.9 359.1l2.7 7.5M744.0 281.1l2.7 8.5"/>
<path stroke="#f4d8f0" stroke-opacity="0.5" stroke-width="2.5" d="M327.5 576.6l5.1 2.3M332.8 574.0l7.9 0.7M163.6 542.9l5.9 0.0M280.4 568.9l8.9 0.3M214.0 534.6l5.7 -0.1M402.1 566.8l5.6 2.5M254.7 546.4l8.1 -0.6M730.4 490.8l2.9 9.5M745.5 402.5l3.7 7.1M732.2 497.9l2.4 6.0M736.0 333.8l3.9 7.2M741.9 322.2l2.9 8.3M716.2 446.4l2.7 8.3"/>
<path stroke="#ecd6e9" stroke-opacity="0.5" stroke-width="2.0" d="M170.2 562.2l5.1 0.2M162.5 565.2l7.1 -0.2M351.3 540.9l5.9 1.5M163.2 535.9l6.6 -0.7M345.2 564.6l7.7 2.8M394.1 567.5l4.8 2.3M283.3 530.5l9.1 2.3M203.6 552.7l8.3 0.8M271.8 559.2l5.0 1.5M713.1 295.7l1.5 5.1M741.0 435.6l1.8 5.6M703.5 415.6l0.4 7.6M730.4 462.4l2.0 9.1M745.7 504.0l2.7 8.3M711.0 319.3l2.0 8.5M713.0 433.6l-0.1 6.6"/>
<path stroke="#d9bfd5" stroke-opacity="1.0" stroke-width="2.0" d="M325.3 546.3l6.2 0.5M249.7 553.3l8.7 0.7M279.5 551.5l6.0 0.2M328.0 554.9l7.0 4.2M194.6 567.4l8.0 0.0M243.0 536.1l6.7 -0.5M747.1 524.0l1.7 4.9M735.6 434.2l1.4 6.2M702.5 381.7l2.0 8.7"/>
<path stroke="#cdb2c9" stroke-opacity="0.75" stroke-width="3.0" d="M257.2 539.5l9.2 2.8M162.3 555.7l7.6 0.2M395.4 576.5l9.6 0.1M308.1 575.7l9.4 2.0M418.4 577.1l6.6 3.2M337.5 547.1l9.7 0.5M380.3 552.7l7.3 2.2M362.0 544.3l6.5 2.1M218.9 568.3l8.0 0.8M316.6 549.8l7.7 0.5M254.8 567.5l5.3 0.3M160.5 567.4l8.2 -0.1M316.2 559.3l5.7 1.2M283.2 557.0l5.9 0.3M190.8 545.8l7.4 -1.5M207.2 579.2l6.0 -0.0M158.5 557.6l7.4 -0.0M334.5 571.6l4.9 1.5M226.7 557.6l8.7 -0.5M372.7 550.1l5.4 3.1M350.8 552.8l5.5 2.2M285.8 555.2l7.7 0.8M353.9 544.6l9.3 0.4M138.1 557.9l5.6 -0.6M327.3 545.8l7.5 1.4M374.7 557.8l4.8 2.4M229.9 536.1l8.5 1.8M163.8 557.6l7.3 -0.4M154.3 545.9l5.9 -0.2M320.6 544.1l9.0 2.5M145.1 547.4l5.6 -0.4M143.5 564.0l5.8 -2.3M274.9 556.7l7.8 2.0M227.7 567.3l5.4 0.3M364.2 547.2l8.9 2.4M741.5 482.9l2.0 7.0M707.7 295.6l1.9 5.3M734.8 385.6l2.5 8.3M717.2 441.0l-0.1 7.5M700.2 405.8l1.1 7.1M698.1 317.3l3.1 9.0M720.9 461.6l3.3 5.9M744.8 431.9l1.6 6.2M742.2 336.8l1.1 8.9M746.2 514.2l2.6 5.4M713.6 434.0l4.9 7.9M741.4 319.3l1.4 9.2M745.9 524.9l3.8 7.6"/>
<path stroke="#d3b8d0" stroke-opacity="0.75" stroke-width="3.0" d="M333.2 538.5l5.2 0.5M259.4 529.1l7.6 1.3M255.7 547.7l7.5 0.0M341.3 538.6l7.9 3.2M288.3 575.2l8.5 1.3M382.1 554.8l7.5 1.8M276.9 552.4l5.5 1.5M388.0 562.8l7.2 1.9M234.7 551.8l6.9 -0.4M314.1 549.4l8.8 2.2M190.3 543.8l5.8 1.0M317.9 539.4l8.3 1.8M221.8 562.2l10.0 0.3M418.0 577.9l5.9 2.3M171.6 552.9l6.7 -1.6M204.5 545.5l8.8 -1.0M400.9 564.1l5.6 3.2M260.2 557.9l7.4 0.5M224.3 561.9l7.2 -0.2M149.7 579.7l5.4 -0.9M215.0 558.9l5.2 -0.0M339.7 550.2l5.6 1.0M223.5 544.5l6.6 0.2M304.0 561.1l7.7 1.0M359.4 579.0l9.0 0.8M325.0 541.4l9.1 2.7M241.7 536.7l8.5 2.4M255.2 574.9l7.7 1.6M396.9 573.6l6.8 2.5M155.1 544.4l8.5 0.2M299.0 535.0l8.2 1.6M196.8 563.0l6.2 0.3M170.9 542.4l9.4 0.4M199.0 548.6l5.3 -0.6M357.4 565.2l7.7 1.7M180.3 566.6l6.7 0.1M725.2 317.2l1.1 7.6M734.7 492.5l1.3 8.7M727.8 456.0l1.1 6.6M720.6 354.0l2.8 6.6M702.1 290.0l2.7 8.6M720.7 395.7l3.8 9.2M694.4 299.8l1.1 5.6M742.9 517.7l3.0 6.7M732.2 440.4l1.2 9.1M736.5 316.3l2.0 8.4M732.3 490.7l3.7 8.6M742.3 491.2l2.5 5.6M737.2 400.6l2.0 7.7M726.2 478.4l1.0 5.6M724.6 409.1l0.8 5.2M727.5 464.2l2.3 6.8M725.4 294.1l2.1 6.9M746.0 490.0l0.5 6.5"/>
<path stroke="#e2cadf" stroke-opacity="1.0" stroke-width="2.5" d="M256.4 567.0l9.7 1.5M258.1 531.8l9.0 3.4M323.8 545.3l8.0 4.4M317.2 533.7l7.5 2.7M181.5 550.7l5.6 -0.2M714.3 440.7l2.2 8.2M719.7 432.1l0.9 7.0"/>
<path stroke="#d9bfd5" stroke-opacity="0.75" stroke-width="2.0" d="M314.8 542.4l8.8 1.6M333.2 532.2l5.3 2.0M143.4 540.3l9.0 -1.1M198.5 566.5l5.7 -0.8M210.0 543.5l6.6 -1.0M384.8 574.8l8.7 4.5M324.1 576.4l7.2 3.4M171.0 577.9l8.5 -0.3M418.5 578.4l8.6 2.7M274.1 555.7l6.0 0.9M205.4 571.1l9.4 -0.5M259.9 545.1l7.6 0.3M371.3 547.6l9.1 2.8M183.8 553.4l8.3 -0.8M173.6 568.5l5.9 1.5M746.7 352.0l0.3 7.1M705.9 307.0l1.0 5.4M746.4 311.8l3.0 6.7M742.6 504.6l2.0 7.0M735.1 460.4l2.9 7.7M713.8 393.8l3.4 8.1M724.5 285.4l2.7 7.7M731.7 352.9l3.9 7.5M741.3 515.3l2.9 7.4M732.6 479.0l2.4 7.3M727.2 345.0l2.3 5.8M744.2 442.5l3.9 8.7M746.5 524.8l2.6 7.8M735.0 351.6l0.7 8.0M717.6 395.8l2.0 8.1M754.9 529.9l3.5 8.5M744.5 445.4l0.8 9.2M698.1 383.1l2.9 5.8M724.4 469.8l2.0 4.8"/>
<path stroke="#f4d8f0" stroke-opacity="1.0" stroke-width="2.5" d="M228.7 535.8l6.7 0.3M278.0 577.1l8.0 1.6M168.6 561.8l5.2 -1.2M179.7 548.3l9.3 -0.3M373.4 550.3l6.0 4.2M171.5 550.3l9.5 -1.6M349.3 564.9l7.6 4.4M740.2 445.2l1.9 7.2M731.8 470.0l1.1 5.0M733.1 442.3l1.3 9.2"/>
<path stroke="#cdb2c9" stroke-opacity="0.5" stroke-width="2.5" d="M351.7 574.8l8.8 1.0M260.9 569.2l9.6 1.6M217.5 569.0l8.0 2.1M372.9 550.0l6.8 -0.1M200.2 564.5l9.7 0.2M297.7 561.8l6.8 1.8M176.0 551.7l5.1 0.4M173.8 549.3l7.1 -0.7M148.2 576.0l5.3 -0.7M388.9 563.3l7.7 4.6M136.4 548.9l8.8 -0.3M694.1 336.3l1.6 7.7M690.9 358.9l4.4 7.1M733.7 491.4l2.4 6.5M708.3 305.5l3.0 9.2M738.9 419.4l2.5 9.2M713.3 356.7l2.9 6.4M736.5 500.9l1.6 5.0M729.7 471.0l1.3 5.8M739.3 424.2l3.2 5.3M739.3 287.0l1.5 6.6M707.1 290.9l2.7 7.9"/>
<path stroke="#d9bfd5" stroke-opacity="1.0" stroke-width="2.5" d="M165.8 578.5l6.5 -0.1M201.0 536.7l7.4 -0.6M368.2 573.5l4.7 3.4M137.1 571.5l7.5 0.5M177.6 555.3l6.2 -1.2M398.5 564.4l5.9 2.4M707.4 363.4l0.8 7.2"/>
<path stroke="#f2def0" stroke-opacity="1.0" stroke-width="3.0" d="M378.2 575.5l8.3 2.5M342.8 549.8l7.4 4.3M191.0 578.5l9.3 -0.9M223.6 561.0l8.1 -0.7M156.9 572.3l6.4 -0.5M161.5 569.1l5.7 -1.8M730.2 315.4l1.8 7.3M724.5 324.7l0.2 9.1M746.2 454.5l2.0 6.5M701.9 370.4l2.3 6.8M723.1 454.2l3.8 8.6"/>
<path stroke="#d3b8d0" stroke-opacity="1.0" stroke-width="3.0" d="M200.6 565.0l9.1 2.5M352.9 538.5l5.0 1.6M398.9 573.7l4.7 2.1M331.7 579.0l6.9 0.7M241.6 564.8l5.8 0.9M182.8 555.4l5.7 -0.1"/>
<path stroke="#cdb2c9" stroke-opacity="1.0" stroke-width="3.0" d="M142.6 537.4l6.0 -1.0M272.7 551.8l5.4 -0.1M356.4 541.0l5.5 1.0M347.9 553.5l5.5 4.0M691.5 352.0l2.8 5.0"/>
<path stroke="#f2def0" stroke-opacity="1.0" stroke-width="2.5" d="M326.4 531.1l9.0 2.6M248.1 548.9l9.2 1.7M405.6 577.4l6.3 2.3M728.9 292.2l1.3 7.9M726.7 406.4l3.2 6.8M746.1 373.6l-0.2 6.9"/>
<path stroke="#d3b8d0" stroke-opacity="1.0" stroke-width="2.0" d="M357.0 577.5l8.6 1.3M708.2 310.7l2.1 6.6"/>
<path stroke="#cdb2c9" stroke-opacity="0.5" stroke-width="3.0" d="M382.0 573.6l8.3 2.6M384.4 556.6l4.5 2.1M272.2 538.9l7.5 2.1M157.7 538.2l9.6 -1.8M377.6 574.7l6.3 0.9M298.3 548.7l7.6 1.8M223.4 540.4l7.4 0.2M310.8 541.7l7.6 1.6M413.6 579.3l9.2 1.3M741.2 454.1l1.8 5.6M745.9 519.6l4.0 9.0M719.1 301.1l1.7 7.1M739.4 507.3l2.3 7.8M735.9 324.7l1.4 5.5M717.6 352.3l1.6 6.7M735.5 456.9l1.0 6.1M738.1 286.0l3.7 6.5M743.1 502.1l2.4 6.6M738.0 490.8l2.1 5.4M696.7 353.0l3.3 7.9M726.6 390.9l1.0 9.3M746.3 516.4l1.8 9.5"/>
<path stroke="#f2def0" stroke-opacity="1.0" stroke-width="2.0" d="M320.0 550.6l6.1 1.0M209.7 578.9l6.9 0.8M726.0 380.7l1.1 9.8"/>
<path stroke="#f2def0" stroke-opacity="0.75" stroke-width="3.0" d="M144.0 574.1l8.4 -0.8M263.5 562.4l6.3 0.7M297.4 540.4l8.5 1.3M318.0 530.0l7.9 2.8M417.5 577.5l7.1 2.5M273.3 572.3l9.1 -0.1M197.9 538.1l7.0 0.9M216.8 580.2l7.9 -0.5M167.4 564.8l6.6 0.5M191.8 571.4l6.3 -0.5M331.4 549.5l6.7 -0.5M204.0 553.0l6.5 -0.4M375.9 571.4l5.4 2.2M293.5 554.2l6.7 0.8M398.3 577.0l6.2 2.3M336.3 535.1l8.1 1.6M297.7 531.6l8.7 3.4M353.7 552.5l8.3 2.1M368.0 569.8l6.8 4.5M153.9 540.0l5.2 0.5M316.3 556.3l6.5 0.5M172.4 578.7l5.3 -1.6M174.8 552.6l8.6 -1.2M707.2 387.4l1.9 6.6M727.9 459.8l-0.1 6.7M708.5 359.0l2.1 5.9M740.3 337.1l-0.0 6.6M705.5 308.4l2.7 9.1M743.2 323.9l2.7 6.8M716.6 319.1l1.1 6.2M718.4 357.9l1.8 7.9M704.1 388.6l2.4 5.3M733.4 367.8l1.3 6.0M738.3 294.6l3.0 6.0M738.3 493.0l1.0 7.0M745.9 429.5l1.4 6.3M737.9 369.6l1.8 9.0M734.8 410.1l1.4 9.6M727.4 296.0l0.4 9.7"/>
<path stroke="#cdb2c9" stroke-opacity="1.0" stroke-width="2.5" d="M274.1 579.5l6.4 -0.5M145.2 575.1l6.6 -0.3M229.8 557.7l7.8 -0.2M379.3 568.7l6.6 4.0M200.5 576.5l9.8 -0.5M396.7 570.3l5.7 2.2M316.4 545.3l7.9 1.8M729.7 302.7l1.7 7.2M742.4 446.1l2.5 9.0M744.0 456.4l2.9 5.5M712.8 412.3l1.6 4.8"/>
<path stroke="#e2cadf" stroke-opacity="0.5" stroke-width="3.0" d="M316.1 570.3l8.4 0.4M149.1 559.4l6.9 -1.8M414.9 577.0l7.7 3.3M159.7 577.3l9.5 -1.4M215.9 551.2l5.2 0.6M171.0 555.7l9.1 -0.6M744.0 516.4l2.0 6.9M712.5 308.6l2.1 5.4M746.9 524.8l1.8 9.5M744.6 392.6l1.1 6.4M726.5 353.1l1.4 6.3"/>
<path stroke="#d9bfd5" stroke-opacity="0.5" stroke-width="2.5" d="M370.4 574.1l7.4 2.6M408.8 576.1l5.8 1.0M168.3 564.7l8.1 0.0M159.9 547.8l6.2 -0.3M304.9 538.3l9.0 2.4M282.8 539.8l9.2 -0.1M218.4 579.2l6.0 -0.3M164.6 574.3l9.5 0.1M280.7 536.5l9.2 2.6M371.1 554.4l9.6 2.6M735.3 317.1l0.3 9.9M737.1 467.0l1.0 6.7M710.8 310.9l2.5 7.3M726.0 287.9l0.5 8.2M739.1 511.8l4.3 8.4M727.3 414.4l2.0 9.2M718.3 404.4l0.9 5.1M742.3 483.7l2.7 5.2M717.9 382.8l4.8 8.5M739.9 512.6l4.1 5.3M716.4 365.8l3.5 7.6M734.1 306.5l4.4 8.5M745.5 482.0l2.0 7.8M710.6 430.8l3.3 8.3M722.4 291.5l3.7 8.7M740.0 346.0l2.4 8.2"/>
<path stroke="#ecd6e9" stroke-opacity="1.0" stroke-width="2.5" d="M372.0 573.5l7.5 3.2M285.2 559.1l7.1 0.8M309.2 566.1l6.2 3.0M739.0 506.5l1.5 5.1M735.0 495.7l4.0 9.1M755.0 529.1l2.9 8.1M747.7 532.0l1.1 4.9M741.0 301.8l1.8 7.2M728.4 296.9l0.6 5.1"/>
<path stroke="#ecd6e9" stroke-opacity="1.0" stroke-width="3.0" d="M399.5 578.5l4.7 2.0M304.9 571.2l8.2 2.3M747.8 513.2l0.2 7.2M722.1 343.5l0.9 6.0"/>
<path stroke="#e2cadf" stroke-opacity="1.0" stroke-width="3.0" d="M333.1 578.9l8.6 1.2M289.5 527.1l6.2 0.6M160.5 566.2l9.9 -1.2M732.5 364.6l1.6 8.3M739.8 463.3l2.2 6.1"/>
<path stroke="#d9bfd5" stroke-opacity="0.5" stroke-width="2.0" d="M166.8 578.8l6.8 -3.6M283.3 540.6l5.4 1.9M224.0 549.3l5.3 -0.3M319.3 543.7l5.7 2.3M214.9 560.5l8.2 -0.7M393.3 572.6l4.8 1.5M740.3 282.7l2.0 6.3M722.5 321.5l2.7 8.2M701.0 328.7l2.2 9.4M740.8 283.3l1.7 8.4M712.9 331.0l2.7 8.8M736.7 380.4l2.3 6.7M736.8 468.0l4.0 7.4M742.5 518.7l3.6 7.8M738.9 460.5l1.5 5.5M738.8 485.3l3.5 6.5"/>
<path stroke="#d9bfd5" stroke-opacity="1.0" stroke-width="3.0" d="M256.4 535.2l6.0 0.5M408.3 569.5l7.5 3.4M235.1 542.9l7.1 0.7M383.1 570.5l8.1 3.1M735.5 491.7l1.5 7.6M739.8 292.6l1.6 5.2"/>
<path stroke="#f4d8f0" stroke-opacity="1.0" stroke-width="2.0" d="M185.5 570.7l9.4 -0.2M375.5 567.9l5.8 2.5M280.4 559.5l7.0 0.5M688.8 293.4l4.0 8.7M735.7 506.2l2.6 5.9M713.9 460.5l2.1 5.0"/>
<path stroke="#f2def0" stroke-opacity="0.5" stroke-width="2.0" d="M173.7 557.6l9.7 -0.7M256.0 537.0l8.8 1.8M412.8 576.3l6.8 4.9M279.2 550.7l6.2 1.8M739.4 354.4l4.2 8.4M700.0 410.9l2.8 5.8M715.2 370.2l1.3 6.4M708.1 421.4l1.7 9.0M742.3 299.1l1.1 6.4M724.4 331.7l1.6 5.5M697.9 291.4l3.9 7.7M736.2 502.9l4.0 7.8M735.9 496.1l2.6 7.1M747.5 526.8l1.3 8.3M733.4 484.4l2.3 6.3"/>
<path stroke="#f4d8f0" stroke-opacity="1.0" stroke-width="3.0" d="M349.5 579.4l5.8 1.2M292.1 564.5l9.2 1.0M315.9 547.6l7.8 1.3M746.5 395.4l1.7 5.8"/>
<path stroke="#d3b8d0" stroke-opacity="1.0" stroke-width="2.5" d="M210.1 568.5l6.6 -1.1M204.2 559.8l8.4 -0.1M354.5 567.0l6.9 2.5M741.5 379.4l1.4 7.4M746.6 280.7l2.4 7.0M730.3 360.9l3.2 8.3"/>
<path stroke="#e2cadf" stroke-opacity="1.0" stroke-width="2.0" d="M192.1 535.7l9.9 1.2M697.4 312.5l1.0 6.2M730.3 444.4l3.2 6.3"/>
<path stroke="#cdb2c9" stroke-opacity="1.0" stroke-width="2.0" d="M746.2 483.5l2.1 7.5M705.4 398.3l3.0 5.8M697.6 286.6l2.2 8.2"/>
<path stroke="#ecd6e9" stroke-opacity="1.0" stroke-width="2.0" d="M708.7 406.4l2.5 6.9M720.2 330.9l2.4 6.8M710.8 419.9l1.4 5.2"/>
</g>
<path d="M140.0 287.0 C140.7 287.2 131.4 284.8 144.0 288.2 C156.6 291.6 191.6 301.8 215.4 307.2 C239.2 312.6 263.0 316.3 286.8 320.3 C310.6 324.3 337.6 327.9 358.1 331.0 C378.6 334.1 395.7 336.7 410.0 339.0 C424.3 341.3 432.4 343.2 444.0 345.0 C455.6 346.8 467.8 346.2 479.7 350.0 C491.6 353.8 503.5 360.7 515.4 368.0 C527.3 375.3 539.1 382.7 551.0 394.0 C562.9 405.3 578.8 426.6 586.8 435.7 C594.8 444.8 590.8 440.7 598.7 448.4 C606.6 456.1 622.4 472.6 634.3 481.7 C646.2 490.8 658.1 497.6 670.0 503.1 C681.9 508.7 694.6 511.6 705.7 515.0 C716.8 518.4 729.2 521.6 736.6 523.4 C744.0 525.2 747.8 525.6 750.0 526.0" fill="none" stroke="#1a1a1a" stroke-opacity="0.82" stroke-width="1.1" stroke-linecap="round"/>
<path d="M140.0 317.2 C140.7 317.3 137.3 316.6 144.0 318.0 C150.7 319.4 168.1 323.5 180.0 325.5 C191.9 327.5 202.9 328.8 215.4 329.8 C227.9 330.8 241.1 331.0 255.0 331.3 C268.9 331.6 283.4 329.4 298.6 331.5 C313.8 333.6 332.3 338.4 346.2 344.1 C360.1 349.8 365.6 352.4 381.9 365.5 C398.2 378.6 433.6 413.1 444.0 422.6" fill="none" stroke="#1a1a1a" stroke-opacity="0.82" stroke-width="1.1" stroke-linecap="round"/>
<path d="M444.0 422.6L445.1 423.7L446.4 425.1L447.9 426.6L449.5 428.3L451.3 430.1L453.3 432.1" fill="none" stroke="#1a1a1a" stroke-opacity="0.75" stroke-width="1.1"/>
<path d="M451.3 430.1L453.3 432.1L455.3 434.1L457.4 436.3L459.6 438.6L461.9 440.9L464.2 443.3" fill="none" stroke="#1a1a1a" stroke-opacity="0.66" stroke-width="1.1"/>
<path d="M461.9 440.9L464.2 443.3L466.5 445.7L468.9 448.1L471.2 450.6L473.5 453.0L475.7 455.4" fill="none" stroke="#1a1a1a" stroke-opacity="0.58" stroke-width="1.1"/>
<path d="M473.5 453.0L475.7 455.4L477.9 457.8L480.0 460.1L481.9 462.3L483.8 464.5L485.6 466.7" fill="none" stroke="#1a1a1a" stroke-opacity="0.49" stroke-width="1.1"/>
<path d="M483.8 464.5L485.6 466.7L487.5 468.9L489.3 471.2L491.2 473.6L493.1 476.1L495.0 478.5" fill="none" stroke="#1a1a1a" stroke-opacity="0.41" stroke-width="1.1"/>
<path d="M493.1 476.1L495.0 478.5L496.8 481.0L498.7 483.5L500.5 486.0L502.2 488.4L504.0 490.7" fill="none" stroke="#1a1a1a" stroke-opacity="0.32" stroke-width="1.1"/>
<path d="M502.2 488.4L504.0 490.7L505.6 493.0L507.2 495.2L508.7 497.4L510.2 499.3L511.5 501.2" fill="none" stroke="#1a1a1a" stroke-opacity="0.24" stroke-width="1.1"/>
<path d="M510.2 499.3L511.5 501.2L512.7 502.9L513.8 504.5L514.8 505.8L515.7 507.0" fill="none" stroke="#1a1a1a" stroke-opacity="0.15" stroke-width="1.1"/>
<path d="M663.5 459.8L663.0 460.5L662.4 461.3L661.8 462.2L661.1 463.2L660.3 464.3L659.5 465.5" fill="none" stroke="#1a1a1a" stroke-opacity="0.45" stroke-width="1.1"/>
<path d="M660.3 464.3L659.5 465.5L658.7 466.7L657.7 468.0L656.8 469.4L655.8 470.8L654.8 472.2" fill="none" stroke="#1a1a1a" stroke-opacity="0.40" stroke-width="1.1"/>
<path d="M655.8 470.8L654.8 472.2L653.8 473.7L652.7 475.1L651.6 476.6L650.5 478.1L649.4 479.5" fill="none" stroke="#1a1a1a" stroke-opacity="0.35" stroke-width="1.1"/>
<path d="M650.5 478.1L649.4 479.5L648.3 480.9L647.2 482.3L646.1 483.7L645.0 485.0L643.9 486.3" fill="none" stroke="#1a1a1a" stroke-opacity="0.30" stroke-width="1.1"/>
<path d="M645.0 485.0L643.9 486.3L642.7 487.7L641.4 489.1L640.0 490.6L638.6 492.1L637.2 493.6" fill="none" stroke="#1a1a1a" stroke-opacity="0.25" stroke-width="1.1"/>
<path d="M638.6 492.1L637.2 493.6L635.7 495.1L634.3 496.6L632.8 498.1L631.3 499.6L629.9 501.0" fill="none" stroke="#1a1a1a" stroke-opacity="0.20" stroke-width="1.1"/>
<path d="M631.3 499.6L629.9 501.0L628.5 502.4L627.2 503.8L625.9 505.1L624.6 506.3L623.5 507.5" fill="none" stroke="#1a1a1a" stroke-opacity="0.15" stroke-width="1.1"/>
<path d="M624.6 506.3L623.5 507.5L622.5 508.5L621.5 509.4L620.7 510.3L620.0 511.0" fill="none" stroke="#1a1a1a" stroke-opacity="0.10" stroke-width="1.1"/>
<path d="M140.0 404.0 C140.7 404.1 133.4 402.1 144.0 404.8 C154.6 407.5 182.9 414.9 203.5 420.2 C224.1 425.5 251.8 432.2 267.7 436.9 C283.6 441.6 285.5 441.5 298.6 448.4 C311.7 455.3 336.3 471.1 346.2 478.2 C356.1 485.3 352.2 483.1 358.1 491.2 C364.1 499.3 374.0 516.3 381.9 527.0 C389.8 537.7 397.0 548.0 405.7 555.5 C414.4 563.0 426.9 567.9 434.3 572.0 C441.7 576.1 447.4 578.7 450.0 580.0" fill="none" stroke="#1a1a1a" stroke-opacity="0.82" stroke-width="1.1" stroke-linecap="round"/>
<path d="M378.0 284.0 C378.4 284.5 376.9 282.5 380.7 287.0 C384.5 291.5 396.2 302.5 401.0 310.8 C405.8 319.1 408.5 326.3 409.3 337.0 C410.1 347.7 407.9 363.5 405.7 375.0 C403.5 386.5 398.2 395.7 396.2 406.0 C394.2 416.3 394.3 429.2 393.8 437.0 C393.3 444.8 392.3 447.0 393.3 453.0 C394.3 459.0 396.7 466.3 400.0 473.0 C403.3 479.7 407.5 486.8 413.0 493.0 C418.5 499.2 425.2 505.2 433.0 510.5 C440.8 515.8 448.2 519.1 460.0 525.0 C471.8 530.9 486.3 537.5 503.5 546.0 C520.7 554.5 551.9 570.3 563.0 576.0 C574.1 581.7 568.8 579.3 570.0 580.0" fill="none" stroke="#1a1a1a" stroke-opacity="0.82" stroke-width="1.1" stroke-linecap="round"/>
<path d="M140.0 545.0 C140.7 544.8 135.4 545.4 144.0 543.6 C152.6 541.8 171.8 538.4 191.6 534.0 C211.4 529.6 241.2 524.5 263.0 517.4 C284.8 510.3 306.5 500.3 322.4 491.2 C338.2 482.1 348.6 473.4 358.1 462.7 C367.6 452.0 374.4 435.7 379.5 427.0 C384.6 418.3 385.4 418.2 389.0 410.7 C392.6 403.2 396.2 391.3 401.0 382.2 C405.8 373.1 410.4 364.5 417.6 356.0 C424.8 347.5 435.6 337.7 444.0 331.0 C452.4 324.3 457.9 319.8 467.8 315.6 C477.7 311.4 488.4 307.4 503.5 305.6 C518.6 303.8 543.5 306.1 558.2 304.8 C572.9 303.5 578.0 300.7 591.5 297.7 C605.0 294.7 629.2 289.3 639.0 287.0 C648.8 284.7 648.2 284.5 650.0 284.0" fill="none" stroke="#1a1a1a" stroke-opacity="0.82" stroke-width="1.1" stroke-linecap="round"/>
<path d="M665.0 284.0 C665.1 284.5 664.6 280.7 665.5 287.0 C666.4 293.3 667.0 310.1 670.4 321.6 C673.8 333.1 682.8 342.8 686.0 356.0 C689.2 369.2 690.0 387.7 689.4 401.0 C688.8 414.3 686.8 425.8 682.5 435.6 C678.2 445.4 666.7 455.8 663.5 459.8" fill="none" stroke="#1a1a1a" stroke-opacity="0.55" stroke-width="1.0" stroke-linecap="round"/>
<circle cx="386.2" cy="492.4" r="6.5" fill="none" stroke="#2b2b2b" stroke-width="0.9"/>
</g>
</svg>
<!--/KR-->
</body></html>
